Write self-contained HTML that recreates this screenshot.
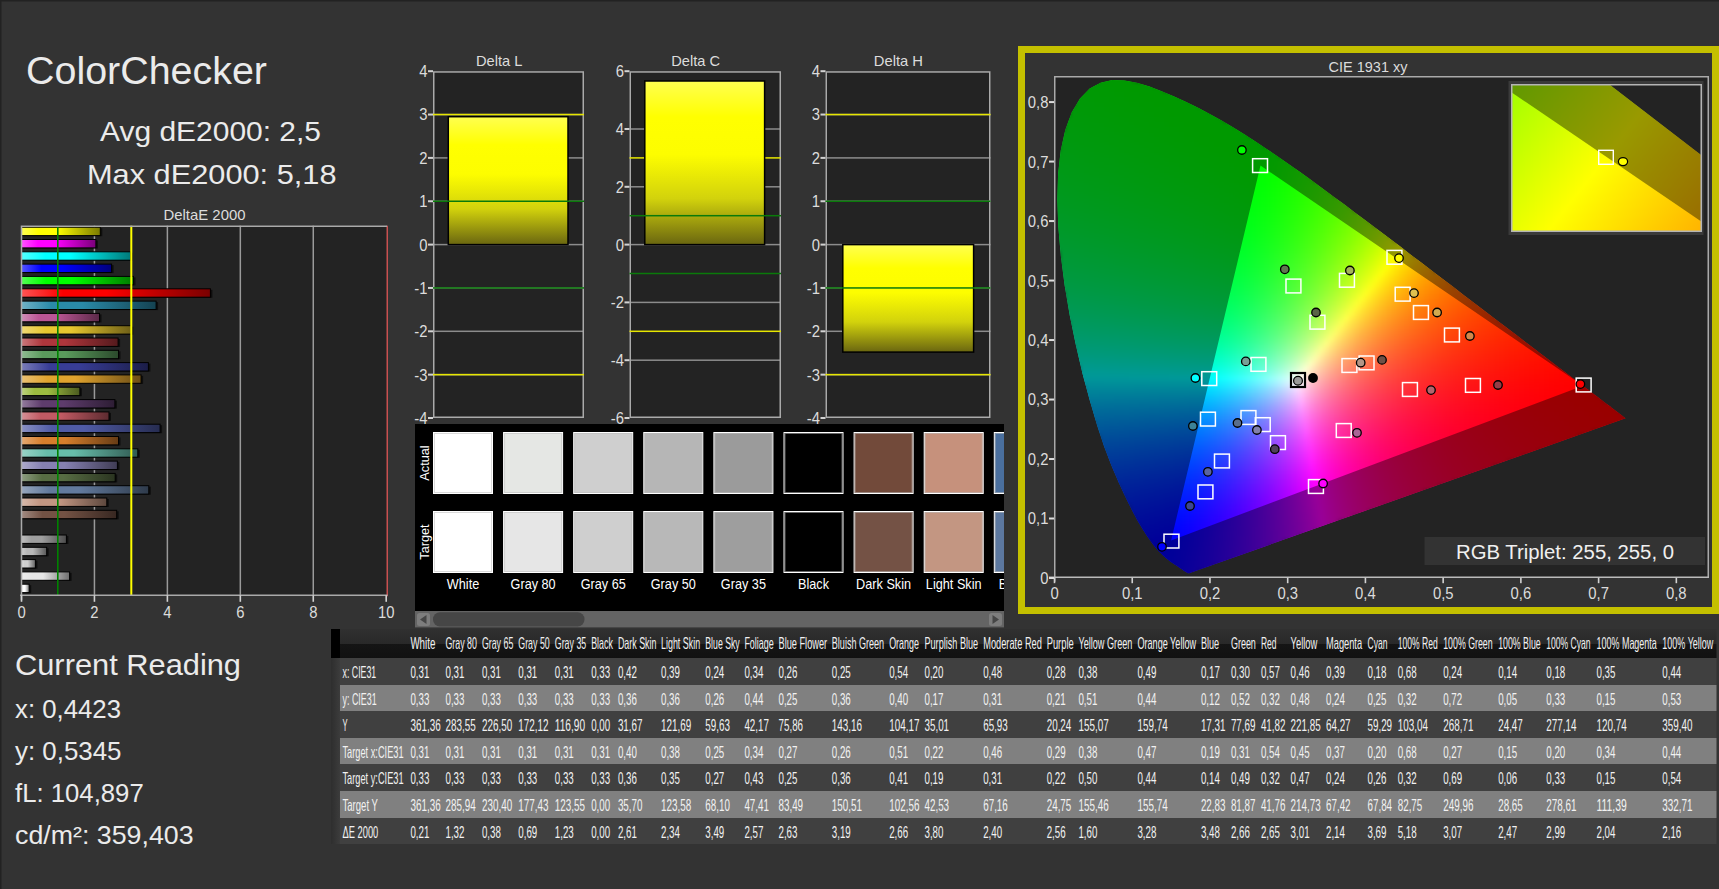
<!DOCTYPE html>
<html><head><meta charset="utf-8"><title>ColorChecker</title>
<style>
html,body{margin:0;padding:0;background:#333;overflow:hidden}
body{width:1719px;height:889px;position:relative}
svg{position:absolute;left:0;top:0;display:block;font-family:"Liberation Sans", "DejaVu Sans", sans-serif}
</style></head><body>
<svg width="1719" height="889" viewBox="0 0 1719 889">
<defs>
<linearGradient id="b0"><stop offset="0" stop-color="#ffffff"/><stop offset=".22" stop-color="#ffffff"/><stop offset=".45" stop-color="#ffffff"/><stop offset="1" stop-color="#7a7a7a"/></linearGradient>
<linearGradient id="b1"><stop offset="0" stop-color="#eeeeee"/><stop offset=".22" stop-color="#e6e6e6"/><stop offset=".45" stop-color="#e6e6e6"/><stop offset="1" stop-color="#6e6e6e"/></linearGradient>
<linearGradient id="b2"><stop offset="0" stop-color="#dfdfdf"/><stop offset=".22" stop-color="#cfcfcf"/><stop offset=".45" stop-color="#cfcfcf"/><stop offset="1" stop-color="#636363"/></linearGradient>
<linearGradient id="b3"><stop offset="0" stop-color="#cfcfcf"/><stop offset=".22" stop-color="#b8b8b8"/><stop offset=".45" stop-color="#b8b8b8"/><stop offset="1" stop-color="#585858"/></linearGradient>
<linearGradient id="b4"><stop offset="0" stop-color="#bebebe"/><stop offset=".22" stop-color="#9e9e9e"/><stop offset=".45" stop-color="#9e9e9e"/><stop offset="1" stop-color="#4c4c4c"/></linearGradient>
<linearGradient id="b6"><stop offset="0" stop-color="#a18b82"/><stop offset=".22" stop-color="#735244"/><stop offset=".45" stop-color="#735244"/><stop offset="1" stop-color="#372721"/></linearGradient>
<linearGradient id="b7"><stop offset="0" stop-color="#d6b9ab"/><stop offset=".22" stop-color="#c29682"/><stop offset=".45" stop-color="#c29682"/><stop offset="1" stop-color="#5d483e"/></linearGradient>
<linearGradient id="b8"><stop offset="0" stop-color="#96a6bd"/><stop offset=".22" stop-color="#627a9d"/><stop offset=".45" stop-color="#627a9d"/><stop offset="1" stop-color="#2f3b4b"/></linearGradient>
<linearGradient id="b9"><stop offset="0" stop-color="#8e9d81"/><stop offset=".22" stop-color="#576c43"/><stop offset=".45" stop-color="#576c43"/><stop offset="1" stop-color="#2a3420"/></linearGradient>
<linearGradient id="b10"><stop offset="0" stop-color="#adaacb"/><stop offset=".22" stop-color="#8580b1"/><stop offset=".45" stop-color="#8580b1"/><stop offset="1" stop-color="#403d55"/></linearGradient>
<linearGradient id="b11"><stop offset="0" stop-color="#99d3c6"/><stop offset=".22" stop-color="#67bdaa"/><stop offset=".45" stop-color="#67bdaa"/><stop offset="1" stop-color="#315b52"/></linearGradient>
<linearGradient id="b12"><stop offset="0" stop-color="#e4a972"/><stop offset=".22" stop-color="#d67e2c"/><stop offset=".45" stop-color="#d67e2c"/><stop offset="1" stop-color="#673c15"/></linearGradient>
<linearGradient id="b13"><stop offset="0" stop-color="#8a91c3"/><stop offset=".22" stop-color="#505ba6"/><stop offset=".45" stop-color="#505ba6"/><stop offset="1" stop-color="#262c50"/></linearGradient>
<linearGradient id="b14"><stop offset="0" stop-color="#d59096"/><stop offset=".22" stop-color="#c15a63"/><stop offset=".45" stop-color="#c15a63"/><stop offset="1" stop-color="#5d2b30"/></linearGradient>
<linearGradient id="b15"><stop offset="0" stop-color="#937c9d"/><stop offset=".22" stop-color="#5e3c6c"/><stop offset=".45" stop-color="#5e3c6c"/><stop offset="1" stop-color="#2d1d34"/></linearGradient>
<linearGradient id="b16"><stop offset="0" stop-color="#bdd27f"/><stop offset=".22" stop-color="#9dbc40"/><stop offset=".45" stop-color="#9dbc40"/><stop offset="1" stop-color="#4b5a1f"/></linearGradient>
<linearGradient id="b17"><stop offset="0" stop-color="#eac173"/><stop offset=".22" stop-color="#e0a32e"/><stop offset=".45" stop-color="#e0a32e"/><stop offset="1" stop-color="#6c4e16"/></linearGradient>
<linearGradient id="b18"><stop offset="0" stop-color="#7a7db9"/><stop offset=".22" stop-color="#383d96"/><stop offset=".45" stop-color="#383d96"/><stop offset="1" stop-color="#1b1d48"/></linearGradient>
<linearGradient id="b19"><stop offset="0" stop-color="#90bb92"/><stop offset=".22" stop-color="#5a9a5c"/><stop offset=".45" stop-color="#5a9a5c"/><stop offset="1" stop-color="#2b4a2c"/></linearGradient>
<linearGradient id="b20"><stop offset="0" stop-color="#c9787c"/><stop offset=".22" stop-color="#af363c"/><stop offset=".45" stop-color="#af363c"/><stop offset="1" stop-color="#541a1d"/></linearGradient>
<linearGradient id="b21"><stop offset="0" stop-color="#efd974"/><stop offset=".22" stop-color="#e7c72f"/><stop offset=".45" stop-color="#e7c72f"/><stop offset="1" stop-color="#6f6017"/></linearGradient>
<linearGradient id="b22"><stop offset="0" stop-color="#d18eb8"/><stop offset=".22" stop-color="#bb5695"/><stop offset=".45" stop-color="#bb5695"/><stop offset="1" stop-color="#5a2948"/></linearGradient>
<linearGradient id="b23"><stop offset="0" stop-color="#70b1c5"/><stop offset=".22" stop-color="#2a8aa8"/><stop offset=".45" stop-color="#2a8aa8"/><stop offset="1" stop-color="#144251"/></linearGradient>
<linearGradient id="b24"><stop offset="0" stop-color="#ff5454"/><stop offset=".22" stop-color="#ff0000"/><stop offset=".45" stop-color="#ff0000"/><stop offset="1" stop-color="#7a0000"/></linearGradient>
<linearGradient id="b25"><stop offset="0" stop-color="#54ff54"/><stop offset=".22" stop-color="#00ff00"/><stop offset=".45" stop-color="#00ff00"/><stop offset="1" stop-color="#007a00"/></linearGradient>
<linearGradient id="b26"><stop offset="0" stop-color="#5454ff"/><stop offset=".22" stop-color="#0000ff"/><stop offset=".45" stop-color="#0000ff"/><stop offset="1" stop-color="#00007a"/></linearGradient>
<linearGradient id="b27"><stop offset="0" stop-color="#54ffff"/><stop offset=".22" stop-color="#00ffff"/><stop offset=".45" stop-color="#00ffff"/><stop offset="1" stop-color="#007a7a"/></linearGradient>
<linearGradient id="b28"><stop offset="0" stop-color="#ff54ff"/><stop offset=".22" stop-color="#ff00ff"/><stop offset=".45" stop-color="#ff00ff"/><stop offset="1" stop-color="#7a007a"/></linearGradient>
<linearGradient id="b29"><stop offset="0" stop-color="#ffff54"/><stop offset=".22" stop-color="#ffff00"/><stop offset=".45" stop-color="#ffff00"/><stop offset="1" stop-color="#7a7a00"/></linearGradient>
<linearGradient id="yb" x1="0" y1="0" x2="0" y2="1"><stop offset="0" stop-color="#ffff50"/><stop offset=".22" stop-color="#ffff00"/><stop offset=".45" stop-color="#fdfd00"/><stop offset=".72" stop-color="#d2d20c"/><stop offset="1" stop-color="#6a6610"/></linearGradient>
<clipPath id="loc"><path d="M1189.8 573.1 L1189.8 573.1 L1189.8 573.1 L1189.7 573.1 L1189.7 573.2 L1189.6 573.2 L1189.5 573.2 L1189.4 573.2 L1189.4 573.2 L1189.3 573.2 L1189.2 573.2 L1189.2 573.3 L1189.1 573.3 L1188.9 573.3 L1188.8 573.2 L1188.6 573.2 L1188.5 573.2 L1188.3 573.2 L1188.2 573.2 L1188.0 573.2 L1187.7 573.1 L1187.4 572.9 L1187.1 572.8 L1186.7 572.5 L1186.3 572.3 L1185.8 572.0 L1185.2 571.6 L1184.6 571.2 L1183.9 570.8 L1183.1 570.2 L1182.3 569.6 L1181.4 569.0 L1180.3 568.3 L1179.1 567.5 L1177.8 566.6 L1176.3 565.6 L1174.6 564.5 L1172.8 563.2 L1170.9 561.9 L1168.7 560.3 L1166.4 558.4 L1163.9 556.3 L1161.3 553.8 L1158.3 550.7 L1154.8 546.7 L1151.0 541.7 L1146.8 535.7 L1142.2 528.6 L1137.1 519.9 L1131.6 509.5 L1125.5 497.2 L1118.8 482.8 L1111.6 466.0 L1104.2 446.7 L1097.0 424.9 L1089.8 400.6 L1082.6 373.9 L1075.9 345.3 L1069.8 315.7 L1064.7 285.7 L1060.8 255.8 L1058.3 226.8 L1057.3 199.5 L1058.1 174.0 L1060.7 150.5 L1065.3 129.8 L1071.8 112.3 L1080.0 98.4 L1089.7 88.6 L1100.6 82.7 L1112.3 80.1 L1124.4 80.4 L1136.9 82.8 L1149.6 86.6 L1162.3 91.4 L1174.8 96.7 L1186.8 102.3 L1198.6 108.1 L1210.2 114.2 L1221.6 120.6 L1233.0 127.3 L1244.3 134.3 L1255.5 141.5 L1266.7 148.9 L1277.8 156.5 L1288.9 164.2 L1300.1 172.1 L1311.2 180.1 L1322.3 188.2 L1333.4 196.4 L1344.5 204.6 L1355.6 212.9 L1366.7 221.2 L1377.7 229.5 L1388.7 237.8 L1399.7 246.1 L1410.5 254.4 L1421.3 262.6 L1432.0 270.7 L1442.5 278.7 L1452.9 286.6 L1463.0 294.4 L1473.0 302.0 L1482.8 309.5 L1492.3 316.7 L1501.6 323.7 L1510.5 330.6 L1519.1 337.1 L1527.1 343.3 L1534.7 349.0 L1541.9 354.5 L1548.8 359.8 L1555.3 364.7 L1561.3 369.3 L1566.9 373.5 L1572.0 377.4 L1576.7 381.0 L1581.1 384.3 L1585.1 387.4 L1588.7 390.1 L1592.0 392.7 L1595.0 395.0 L1597.8 397.1 L1600.3 399.0 L1602.6 400.7 L1604.8 402.4 L1606.8 403.9 L1608.6 405.3 L1610.4 406.6 L1611.9 407.9 L1613.4 409.0 L1614.7 410.0 L1616.0 410.9 L1617.0 411.7 L1618.0 412.5 L1618.8 413.1 L1619.6 413.7 L1620.3 414.2 L1620.9 414.7 L1621.4 415.1 L1621.9 415.5 L1622.3 415.8 L1622.6 416.0 L1622.9 416.2 L1623.2 416.5 L1623.5 416.7 L1623.7 416.8 L1623.9 417.0 L1624.2 417.2 L1624.4 417.3 L1624.6 417.5 L1624.8 417.7 L1625.0 417.8 L1625.1 417.9 L1625.3 418.0 L1625.3 418.1 L1625.4 418.1 L1625.5 418.2 L1625.5 418.2 L1625.6 418.3 L1625.6 418.3Z"/></clipPath>
<filter id="bl" x="-5%" y="-5%" width="110%" height="110%" color-interpolation-filters="sRGB"><feGaussianBlur stdDeviation="2.2"/></filter>
<linearGradient id="in1" gradientUnits="userSpaceOnUse" x1="1511.7" y1="83.2" x2="1700.3" y2="231.6"><stop offset="0" stop-color="#a0ff00"/><stop offset=".5" stop-color="#ffff00"/><stop offset="1" stop-color="#ffb400"/></linearGradient>
<linearGradient id="th" x1="0" y1="0" x2="0" y2="1"><stop offset="0" stop-color="#303030"/><stop offset=".5" stop-color="#292929"/><stop offset=".5" stop-color="#151515"/><stop offset="1" stop-color="#111"/></linearGradient>
<linearGradient id="gut"><stop offset="0" stop-color="#2e2e2e"/><stop offset="1" stop-color="#3c3c3c"/></linearGradient>
</defs>
<rect width="1719" height="889" fill="#333"/>
<rect width="1719" height="1.5" fill="#222"/><rect width="1.5" height="889" fill="#222"/>
<text x="26" y="83.5" font-size="38.5" fill="#ebebeb" textLength="241" lengthAdjust="spacingAndGlyphs">ColorChecker</text>
<text x="100" y="141" font-size="28" fill="#ebebeb" textLength="221" lengthAdjust="spacingAndGlyphs">Avg dE2000: 2,5</text>
<text x="87" y="183.5" font-size="28" fill="#ebebeb" textLength="249.5" lengthAdjust="spacingAndGlyphs">Max dE2000: 5,18</text>
<text x="204.5" y="220" font-size="14.5" text-anchor="middle" fill="#dcdcdc" textLength="82" lengthAdjust="spacingAndGlyphs">DeltaE 2000</text>
<rect x="21" y="225.7" width="366" height="369.59999999999997" fill="#232323"/>
<rect x="93.69" y="225.7" width="1.5" height="369.59999999999997" fill="#9a9a9a"/>
<rect x="166.63" y="225.7" width="1.5" height="369.59999999999997" fill="#9a9a9a"/>
<rect x="239.57" y="225.7" width="1.5" height="369.59999999999997" fill="#9a9a9a"/>
<rect x="312.51" y="225.7" width="1.5" height="369.59999999999997" fill="#9a9a9a"/>
<rect x="22.5" y="585.2" width="8.7" height="8" fill="#000" opacity=".6"/>
<rect x="21.5" y="584.2" width="7.7" height="8.4" fill="url(#b0)" stroke="#000" stroke-width="1"/>
<rect x="22.5" y="572.9" width="49.1" height="8" fill="#000" opacity=".6"/>
<rect x="21.5" y="571.9" width="48.1" height="8.4" fill="url(#b1)" stroke="#000" stroke-width="1"/>
<rect x="22.5" y="560.6" width="14.9" height="8" fill="#000" opacity=".6"/>
<rect x="21.5" y="559.6" width="13.9" height="8.4" fill="url(#b2)" stroke="#000" stroke-width="1"/>
<rect x="22.5" y="548.3" width="26.2" height="8" fill="#000" opacity=".6"/>
<rect x="21.5" y="547.3" width="25.2" height="8.4" fill="url(#b3)" stroke="#000" stroke-width="1"/>
<rect x="22.5" y="536.0" width="45.9" height="8" fill="#000" opacity=".6"/>
<rect x="21.5" y="535.0" width="44.9" height="8.4" fill="url(#b4)" stroke="#000" stroke-width="1"/>
<rect x="22.5" y="511.3" width="96.2" height="8" fill="#000" opacity=".6"/>
<rect x="21.5" y="510.3" width="95.2" height="8.4" fill="url(#b6)" stroke="#000" stroke-width="1"/>
<rect x="22.5" y="499.0" width="86.3" height="8" fill="#000" opacity=".6"/>
<rect x="21.5" y="498.0" width="85.3" height="8.4" fill="url(#b7)" stroke="#000" stroke-width="1"/>
<rect x="22.5" y="486.7" width="128.3" height="8" fill="#000" opacity=".6"/>
<rect x="21.5" y="485.7" width="127.3" height="8.4" fill="url(#b8)" stroke="#000" stroke-width="1"/>
<rect x="22.5" y="474.4" width="94.7" height="8" fill="#000" opacity=".6"/>
<rect x="21.5" y="473.4" width="93.7" height="8.4" fill="url(#b9)" stroke="#000" stroke-width="1"/>
<rect x="22.5" y="462.1" width="96.9" height="8" fill="#000" opacity=".6"/>
<rect x="21.5" y="461.1" width="95.9" height="8.4" fill="url(#b10)" stroke="#000" stroke-width="1"/>
<rect x="22.5" y="449.8" width="117.3" height="8" fill="#000" opacity=".6"/>
<rect x="21.5" y="448.8" width="116.3" height="8.4" fill="url(#b11)" stroke="#000" stroke-width="1"/>
<rect x="22.5" y="437.5" width="98.0" height="8" fill="#000" opacity=".6"/>
<rect x="21.5" y="436.5" width="97.0" height="8.4" fill="url(#b12)" stroke="#000" stroke-width="1"/>
<rect x="22.5" y="425.2" width="139.6" height="8" fill="#000" opacity=".6"/>
<rect x="21.5" y="424.2" width="138.6" height="8.4" fill="url(#b13)" stroke="#000" stroke-width="1"/>
<rect x="22.5" y="412.9" width="88.5" height="8" fill="#000" opacity=".6"/>
<rect x="21.5" y="411.9" width="87.5" height="8.4" fill="url(#b14)" stroke="#000" stroke-width="1"/>
<rect x="22.5" y="400.6" width="94.4" height="8" fill="#000" opacity=".6"/>
<rect x="21.5" y="399.6" width="93.4" height="8.4" fill="url(#b15)" stroke="#000" stroke-width="1"/>
<rect x="22.5" y="388.2" width="59.4" height="8" fill="#000" opacity=".6"/>
<rect x="21.5" y="387.2" width="58.4" height="8.4" fill="url(#b16)" stroke="#000" stroke-width="1"/>
<rect x="22.5" y="375.9" width="120.6" height="8" fill="#000" opacity=".6"/>
<rect x="21.5" y="374.9" width="119.6" height="8.4" fill="url(#b17)" stroke="#000" stroke-width="1"/>
<rect x="22.5" y="363.6" width="127.9" height="8" fill="#000" opacity=".6"/>
<rect x="21.5" y="362.6" width="126.9" height="8.4" fill="url(#b18)" stroke="#000" stroke-width="1"/>
<rect x="22.5" y="351.3" width="98.0" height="8" fill="#000" opacity=".6"/>
<rect x="21.5" y="350.3" width="97.0" height="8.4" fill="url(#b19)" stroke="#000" stroke-width="1"/>
<rect x="22.5" y="339.0" width="97.6" height="8" fill="#000" opacity=".6"/>
<rect x="21.5" y="338.0" width="96.6" height="8.4" fill="url(#b20)" stroke="#000" stroke-width="1"/>
<rect x="22.5" y="326.7" width="110.8" height="8" fill="#000" opacity=".6"/>
<rect x="21.5" y="325.7" width="109.8" height="8.4" fill="url(#b21)" stroke="#000" stroke-width="1"/>
<rect x="22.5" y="314.4" width="79.0" height="8" fill="#000" opacity=".6"/>
<rect x="21.5" y="313.4" width="78.0" height="8.4" fill="url(#b22)" stroke="#000" stroke-width="1"/>
<rect x="22.5" y="302.1" width="135.6" height="8" fill="#000" opacity=".6"/>
<rect x="21.5" y="301.1" width="134.6" height="8.4" fill="url(#b23)" stroke="#000" stroke-width="1"/>
<rect x="22.5" y="289.8" width="189.9" height="8" fill="#000" opacity=".6"/>
<rect x="21.5" y="288.8" width="188.9" height="8.4" fill="url(#b24)" stroke="#000" stroke-width="1"/>
<rect x="22.5" y="277.4" width="113.0" height="8" fill="#000" opacity=".6"/>
<rect x="21.5" y="276.4" width="112.0" height="8.4" fill="url(#b25)" stroke="#000" stroke-width="1"/>
<rect x="22.5" y="265.1" width="91.1" height="8" fill="#000" opacity=".6"/>
<rect x="21.5" y="264.1" width="90.1" height="8.4" fill="url(#b26)" stroke="#000" stroke-width="1"/>
<rect x="22.5" y="252.8" width="110.0" height="8" fill="#000" opacity=".6"/>
<rect x="21.5" y="251.8" width="109.0" height="8.4" fill="url(#b27)" stroke="#000" stroke-width="1"/>
<rect x="22.5" y="240.5" width="75.4" height="8" fill="#000" opacity=".6"/>
<rect x="21.5" y="239.5" width="74.4" height="8.4" fill="url(#b28)" stroke="#000" stroke-width="1"/>
<rect x="22.5" y="228.2" width="79.8" height="8" fill="#000" opacity=".6"/>
<rect x="21.5" y="227.2" width="78.8" height="8.4" fill="url(#b29)" stroke="#000" stroke-width="1"/>
<rect x="57" y="225.7" width="1.6" height="370.2" fill="#008200"/>
<rect x="130.3" y="225.7" width="2" height="370.2" fill="#ffff00"/>
<rect x="386.5" y="225.7" width="1.5" height="370.59999999999997" fill="#c85050"/>
<path d="M21.5 600.3V226.2H387" fill="none" stroke="#aaa" stroke-width="1.5"/>
<path d="M20 595.3H387.5" fill="none" stroke="#aaa" stroke-width="1.5"/>
<rect x="20.70" y="595.3" width="1.6" height="6.5" fill="#d2d2d2"/>
<text transform="translate(21.5,618.2) scale(0.9,1)" font-size="16.5" text-anchor="middle" fill="#dcdcdc">0</text>
<rect x="93.64" y="595.3" width="1.6" height="6.5" fill="#d2d2d2"/>
<text transform="translate(94.4,618.2) scale(0.9,1)" font-size="16.5" text-anchor="middle" fill="#dcdcdc">2</text>
<rect x="166.58" y="595.3" width="1.6" height="6.5" fill="#d2d2d2"/>
<text transform="translate(167.4,618.2) scale(0.9,1)" font-size="16.5" text-anchor="middle" fill="#dcdcdc">4</text>
<rect x="239.52" y="595.3" width="1.6" height="6.5" fill="#d2d2d2"/>
<text transform="translate(240.3,618.2) scale(0.9,1)" font-size="16.5" text-anchor="middle" fill="#dcdcdc">6</text>
<rect x="312.46" y="595.3" width="1.6" height="6.5" fill="#d2d2d2"/>
<text transform="translate(313.3,618.2) scale(0.9,1)" font-size="16.5" text-anchor="middle" fill="#dcdcdc">8</text>
<rect x="385.40" y="595.3" width="1.6" height="6.5" fill="#d2d2d2"/>
<text transform="translate(386.2,618.2) scale(0.9,1)" font-size="16.5" text-anchor="middle" fill="#dcdcdc">10</text>
<rect x="433" y="71.2" width="151" height="346.8" fill="#232323"/>
<rect x="428" y="70.20" width="5" height="2" fill="#d2d2d2"/>
<text transform="translate(427.5,77.1) scale(0.9,1)" font-size="16.5" text-anchor="end" fill="#dcdcdc">4</text>
<rect x="433" y="113.80" width="151" height="1.5" fill="#8c8c8c"/>
<rect x="428" y="113.55" width="5" height="2" fill="#d2d2d2"/>
<text transform="translate(427.5,120.4) scale(0.9,1)" font-size="16.5" text-anchor="end" fill="#dcdcdc">3</text>
<rect x="433" y="157.15" width="151" height="1.5" fill="#8c8c8c"/>
<rect x="428" y="156.90" width="5" height="2" fill="#d2d2d2"/>
<text transform="translate(427.5,163.8) scale(0.9,1)" font-size="16.5" text-anchor="end" fill="#dcdcdc">2</text>
<rect x="433" y="200.50" width="151" height="1.5" fill="#8c8c8c"/>
<rect x="428" y="200.25" width="5" height="2" fill="#d2d2d2"/>
<text transform="translate(427.5,207.2) scale(0.9,1)" font-size="16.5" text-anchor="end" fill="#dcdcdc">1</text>
<rect x="433" y="243.85" width="151" height="1.5" fill="#8c8c8c"/>
<rect x="428" y="243.60" width="5" height="2" fill="#d2d2d2"/>
<text transform="translate(427.5,250.5) scale(0.9,1)" font-size="16.5" text-anchor="end" fill="#dcdcdc">0</text>
<rect x="433" y="287.20" width="151" height="1.5" fill="#8c8c8c"/>
<rect x="428" y="286.95" width="5" height="2" fill="#d2d2d2"/>
<text transform="translate(427.5,293.8) scale(0.9,1)" font-size="16.5" text-anchor="end" fill="#dcdcdc">-1</text>
<rect x="433" y="330.55" width="151" height="1.5" fill="#8c8c8c"/>
<rect x="428" y="330.30" width="5" height="2" fill="#d2d2d2"/>
<text transform="translate(427.5,337.2) scale(0.9,1)" font-size="16.5" text-anchor="end" fill="#dcdcdc">-2</text>
<rect x="433" y="373.90" width="151" height="1.5" fill="#8c8c8c"/>
<rect x="428" y="373.65" width="5" height="2" fill="#d2d2d2"/>
<text transform="translate(427.5,380.5) scale(0.9,1)" font-size="16.5" text-anchor="end" fill="#dcdcdc">-3</text>
<rect x="428" y="417.00" width="5" height="2" fill="#d2d2d2"/>
<text transform="translate(427.5,423.9) scale(0.9,1)" font-size="16.5" text-anchor="end" fill="#dcdcdc">-4</text>
<rect x="433.75" y="71.95" width="149.5" height="345.3" fill="none" stroke="#aaa" stroke-width="1.5"/>
<rect x="433" y="113.80" width="151" height="1.5" fill="#e6e600"/>
<rect x="433" y="373.90" width="151" height="1.5" fill="#e6e600"/>
<rect x="448.3" y="116.7" width="119.7" height="127.9" fill="url(#yb)" stroke="#000" stroke-width="1.5"/>
<rect x="433" y="200.50" width="151" height="1.5" fill="#0a7a0a"/>
<rect x="433" y="287.20" width="151" height="1.5" fill="#0a7a0a"/>
<text x="499.2" y="65.5" font-size="14.5" text-anchor="middle" fill="#dcdcdc" textLength="46.5" lengthAdjust="spacingAndGlyphs">Delta L</text>
<rect x="629.5" y="71.2" width="151.5" height="346.8" fill="#232323"/>
<rect x="624.5" y="70.20" width="5" height="2" fill="#d2d2d2"/>
<text transform="translate(624.0,77.1) scale(0.9,1)" font-size="16.5" text-anchor="end" fill="#dcdcdc">6</text>
<rect x="629.5" y="128.25" width="151.5" height="1.5" fill="#8c8c8c"/>
<rect x="624.5" y="128.00" width="5" height="2" fill="#d2d2d2"/>
<text transform="translate(624.0,134.9) scale(0.9,1)" font-size="16.5" text-anchor="end" fill="#dcdcdc">4</text>
<rect x="629.5" y="186.05" width="151.5" height="1.5" fill="#8c8c8c"/>
<rect x="624.5" y="185.80" width="5" height="2" fill="#d2d2d2"/>
<text transform="translate(624.0,192.7) scale(0.9,1)" font-size="16.5" text-anchor="end" fill="#dcdcdc">2</text>
<rect x="629.5" y="243.85" width="151.5" height="1.5" fill="#8c8c8c"/>
<rect x="624.5" y="243.60" width="5" height="2" fill="#d2d2d2"/>
<text transform="translate(624.0,250.5) scale(0.9,1)" font-size="16.5" text-anchor="end" fill="#dcdcdc">0</text>
<rect x="629.5" y="301.65" width="151.5" height="1.5" fill="#8c8c8c"/>
<rect x="624.5" y="301.40" width="5" height="2" fill="#d2d2d2"/>
<text transform="translate(624.0,308.3) scale(0.9,1)" font-size="16.5" text-anchor="end" fill="#dcdcdc">-2</text>
<rect x="629.5" y="359.45" width="151.5" height="1.5" fill="#8c8c8c"/>
<rect x="624.5" y="359.20" width="5" height="2" fill="#d2d2d2"/>
<text transform="translate(624.0,366.1) scale(0.9,1)" font-size="16.5" text-anchor="end" fill="#dcdcdc">-4</text>
<rect x="624.5" y="417.00" width="5" height="2" fill="#d2d2d2"/>
<text transform="translate(624.0,423.9) scale(0.9,1)" font-size="16.5" text-anchor="end" fill="#dcdcdc">-6</text>
<rect x="630.25" y="71.95" width="150.0" height="345.3" fill="none" stroke="#aaa" stroke-width="1.5"/>
<rect x="629.5" y="157.15" width="151.5" height="1.5" fill="#e6e600"/>
<rect x="629.5" y="330.55" width="151.5" height="1.5" fill="#e6e600"/>
<rect x="644.8" y="81.0" width="119.8" height="163.6" fill="url(#yb)" stroke="#000" stroke-width="1.5"/>
<rect x="629.5" y="214.95" width="151.5" height="1.5" fill="#0a7a0a"/>
<rect x="629.5" y="272.75" width="151.5" height="1.5" fill="#0a7a0a"/>
<text x="695.6" y="65.5" font-size="14.5" text-anchor="middle" fill="#dcdcdc" textLength="48.8" lengthAdjust="spacingAndGlyphs">Delta C</text>
<rect x="825.5" y="71.2" width="165.0" height="346.8" fill="#232323"/>
<rect x="820.5" y="70.20" width="5" height="2" fill="#d2d2d2"/>
<text transform="translate(820.0,77.1) scale(0.9,1)" font-size="16.5" text-anchor="end" fill="#dcdcdc">4</text>
<rect x="825.5" y="113.80" width="165.0" height="1.5" fill="#8c8c8c"/>
<rect x="820.5" y="113.55" width="5" height="2" fill="#d2d2d2"/>
<text transform="translate(820.0,120.4) scale(0.9,1)" font-size="16.5" text-anchor="end" fill="#dcdcdc">3</text>
<rect x="825.5" y="157.15" width="165.0" height="1.5" fill="#8c8c8c"/>
<rect x="820.5" y="156.90" width="5" height="2" fill="#d2d2d2"/>
<text transform="translate(820.0,163.8) scale(0.9,1)" font-size="16.5" text-anchor="end" fill="#dcdcdc">2</text>
<rect x="825.5" y="200.50" width="165.0" height="1.5" fill="#8c8c8c"/>
<rect x="820.5" y="200.25" width="5" height="2" fill="#d2d2d2"/>
<text transform="translate(820.0,207.2) scale(0.9,1)" font-size="16.5" text-anchor="end" fill="#dcdcdc">1</text>
<rect x="825.5" y="243.85" width="165.0" height="1.5" fill="#8c8c8c"/>
<rect x="820.5" y="243.60" width="5" height="2" fill="#d2d2d2"/>
<text transform="translate(820.0,250.5) scale(0.9,1)" font-size="16.5" text-anchor="end" fill="#dcdcdc">0</text>
<rect x="825.5" y="287.20" width="165.0" height="1.5" fill="#8c8c8c"/>
<rect x="820.5" y="286.95" width="5" height="2" fill="#d2d2d2"/>
<text transform="translate(820.0,293.8) scale(0.9,1)" font-size="16.5" text-anchor="end" fill="#dcdcdc">-1</text>
<rect x="825.5" y="330.55" width="165.0" height="1.5" fill="#8c8c8c"/>
<rect x="820.5" y="330.30" width="5" height="2" fill="#d2d2d2"/>
<text transform="translate(820.0,337.2) scale(0.9,1)" font-size="16.5" text-anchor="end" fill="#dcdcdc">-2</text>
<rect x="825.5" y="373.90" width="165.0" height="1.5" fill="#8c8c8c"/>
<rect x="820.5" y="373.65" width="5" height="2" fill="#d2d2d2"/>
<text transform="translate(820.0,380.5) scale(0.9,1)" font-size="16.5" text-anchor="end" fill="#dcdcdc">-3</text>
<rect x="820.5" y="417.00" width="5" height="2" fill="#d2d2d2"/>
<text transform="translate(820.0,423.9) scale(0.9,1)" font-size="16.5" text-anchor="end" fill="#dcdcdc">-4</text>
<rect x="826.25" y="71.95" width="163.5" height="345.3" fill="none" stroke="#aaa" stroke-width="1.5"/>
<rect x="825.5" y="113.80" width="165.0" height="1.5" fill="#e6e600"/>
<rect x="825.5" y="373.90" width="165.0" height="1.5" fill="#e6e600"/>
<rect x="842.8" y="244.6" width="130.8" height="107.5" fill="url(#yb)" stroke="#000" stroke-width="1.5"/>
<rect x="825.5" y="200.50" width="165.0" height="1.5" fill="#0a7a0a"/>
<rect x="825.5" y="287.20" width="165.0" height="1.5" fill="#0a7a0a"/>
<text x="898.4" y="65.5" font-size="14.5" text-anchor="middle" fill="#dcdcdc" textLength="49.2" lengthAdjust="spacingAndGlyphs">Delta H</text>
<rect x="415" y="424" width="589" height="204" fill="#000"/>
<clipPath id="swc"><rect x="415" y="424" width="589" height="187"/></clipPath><g clip-path="url(#swc)">
<rect x="433.5" y="432.5" width="59" height="61" fill="#ffffff" stroke="#fff" stroke-width="1"/>
<rect x="434.5" y="433.5" width="57" height="59" fill="none" stroke="#bbb" stroke-opacity=".55" stroke-width="1"/>
<rect x="433.5" y="511.5" width="59" height="61" fill="#ffffff" stroke="#fff" stroke-width="1"/>
<rect x="434.5" y="512.5" width="57" height="59" fill="none" stroke="#bbb" stroke-opacity=".55" stroke-width="1"/>
<text transform="translate(463.0,588.5) scale(.92,1)" font-size="13.8" text-anchor="middle" fill="#fff">White</text>
<rect x="503.6" y="432.5" width="59" height="61" fill="#e5e7e4" stroke="#fff" stroke-width="1"/>
<rect x="504.6" y="433.5" width="57" height="59" fill="none" stroke="#bbb" stroke-opacity=".55" stroke-width="1"/>
<rect x="503.6" y="511.5" width="59" height="61" fill="#e6e6e6" stroke="#fff" stroke-width="1"/>
<rect x="504.6" y="512.5" width="57" height="59" fill="none" stroke="#bbb" stroke-opacity=".55" stroke-width="1"/>
<text transform="translate(533.1,588.5) scale(.92,1)" font-size="13.8" text-anchor="middle" fill="#fff">Gray 80</text>
<rect x="573.7" y="432.5" width="59" height="61" fill="#cfcfcf" stroke="#fff" stroke-width="1"/>
<rect x="574.7" y="433.5" width="57" height="59" fill="none" stroke="#bbb" stroke-opacity=".55" stroke-width="1"/>
<rect x="573.7" y="511.5" width="59" height="61" fill="#cfcfcf" stroke="#fff" stroke-width="1"/>
<rect x="574.7" y="512.5" width="57" height="59" fill="none" stroke="#bbb" stroke-opacity=".55" stroke-width="1"/>
<text transform="translate(603.2,588.5) scale(.92,1)" font-size="13.8" text-anchor="middle" fill="#fff">Gray 65</text>
<rect x="643.8" y="432.5" width="59" height="61" fill="#b6b6b6" stroke="#fff" stroke-width="1"/>
<rect x="644.8" y="433.5" width="57" height="59" fill="none" stroke="#bbb" stroke-opacity=".55" stroke-width="1"/>
<rect x="643.8" y="511.5" width="59" height="61" fill="#b8b8b8" stroke="#fff" stroke-width="1"/>
<rect x="644.8" y="512.5" width="57" height="59" fill="none" stroke="#bbb" stroke-opacity=".55" stroke-width="1"/>
<text transform="translate(673.3,588.5) scale(.92,1)" font-size="13.8" text-anchor="middle" fill="#fff">Gray 50</text>
<rect x="713.9" y="432.5" width="59" height="61" fill="#9b9b9b" stroke="#fff" stroke-width="1"/>
<rect x="714.9" y="433.5" width="57" height="59" fill="none" stroke="#bbb" stroke-opacity=".55" stroke-width="1"/>
<rect x="713.9" y="511.5" width="59" height="61" fill="#9e9e9e" stroke="#fff" stroke-width="1"/>
<rect x="714.9" y="512.5" width="57" height="59" fill="none" stroke="#bbb" stroke-opacity=".55" stroke-width="1"/>
<text transform="translate(743.4,588.5) scale(.92,1)" font-size="13.8" text-anchor="middle" fill="#fff">Gray 35</text>
<rect x="784.0" y="432.5" width="59" height="61" fill="#000000" stroke="#fff" stroke-width="1"/>
<rect x="785.0" y="433.5" width="57" height="59" fill="none" stroke="#bbb" stroke-opacity=".55" stroke-width="1"/>
<rect x="784.0" y="511.5" width="59" height="61" fill="#000000" stroke="#fff" stroke-width="1"/>
<rect x="785.0" y="512.5" width="57" height="59" fill="none" stroke="#bbb" stroke-opacity=".55" stroke-width="1"/>
<text transform="translate(813.5,588.5) scale(.92,1)" font-size="13.8" text-anchor="middle" fill="#fff">Black</text>
<rect x="854.1" y="432.5" width="59" height="61" fill="#724a3a" stroke="#fff" stroke-width="1"/>
<rect x="855.1" y="433.5" width="57" height="59" fill="none" stroke="#bbb" stroke-opacity=".55" stroke-width="1"/>
<rect x="854.1" y="511.5" width="59" height="61" fill="#745245" stroke="#fff" stroke-width="1"/>
<rect x="855.1" y="512.5" width="57" height="59" fill="none" stroke="#bbb" stroke-opacity=".55" stroke-width="1"/>
<text transform="translate(883.6,588.5) scale(.92,1)" font-size="13.8" text-anchor="middle" fill="#fff">Dark Skin</text>
<rect x="924.2" y="432.5" width="59" height="61" fill="#c6917c" stroke="#fff" stroke-width="1"/>
<rect x="925.2" y="433.5" width="57" height="59" fill="none" stroke="#bbb" stroke-opacity=".55" stroke-width="1"/>
<rect x="924.2" y="511.5" width="59" height="61" fill="#c39682" stroke="#fff" stroke-width="1"/>
<rect x="925.2" y="512.5" width="57" height="59" fill="none" stroke="#bbb" stroke-opacity=".55" stroke-width="1"/>
<text transform="translate(953.7,588.5) scale(.92,1)" font-size="13.8" text-anchor="middle" fill="#fff">Light Skin</text>
<rect x="994.3" y="432.5" width="59" height="61" fill="#4a6f9e" stroke="#fff" stroke-width="1"/>
<rect x="995.3" y="433.5" width="57" height="59" fill="none" stroke="#bbb" stroke-opacity=".55" stroke-width="1"/>
<rect x="994.3" y="511.5" width="59" height="61" fill="#5c78a0" stroke="#fff" stroke-width="1"/>
<rect x="995.3" y="512.5" width="57" height="59" fill="none" stroke="#bbb" stroke-opacity=".55" stroke-width="1"/>
<text transform="translate(1023.8,588.5) scale(.92,1)" font-size="13.8" text-anchor="middle" fill="#fff">Blue Sky</text>
</g>
<text transform="translate(428.5,463) rotate(-90) scale(.94,1)" font-size="13.5" text-anchor="middle" fill="#fff">Actual</text>
<text transform="translate(428.5,542) rotate(-90) scale(.94,1)" font-size="13.5" text-anchor="middle" fill="#fff">Target</text>
<rect x="415" y="611" width="589" height="16.7" fill="#646464"/>
<rect x="433" y="612.3" width="151.5" height="14.2" rx="7" fill="#464646"/>
<rect x="417" y="613" width="13" height="13" rx="2.5" fill="#7d7d7d"/><path d="M426.5 615v9l-6.5-4.5z" fill="#464646"/>
<rect x="989" y="613" width="13" height="13" rx="2.5" fill="#7d7d7d"/><path d="M992.5 615v9l6.5-4.5z" fill="#464646"/>
<rect x="1021.5" y="49.5" width="694" height="561" fill="#333" stroke="#c4c000" stroke-width="7"/>
<text x="1368" y="72" font-size="14.5" text-anchor="middle" fill="#dcdcdc" textLength="79" lengthAdjust="spacingAndGlyphs">CIE 1931 xy</text>
<rect x="1054" y="76" width="655" height="501.70000000000005" fill="#232323"/>
<g clip-path="url(#loc)"><g filter="url(#bl)" stroke-width="5.4" transform="translate(0,2.5)">
<path d="M1099 76h10" stroke="#00ff03"/>
<path d="M1109 76h5" stroke="#00ff02"/>
<path d="M1114 76h10" stroke="#00ff01"/>
<path d="M1124 76h10" stroke="#0f0"/>
<path d="M1089 81h10" stroke="#00ff05"/>
<path d="M1099 81h5" stroke="#00ff04"/>
<path d="M1104 81h10" stroke="#00ff03"/>
<path d="M1114 81h10" stroke="#00ff02"/>
<path d="M1124 81h10" stroke="#00ff01"/>
<path d="M1134 81h20" stroke="#0f0"/>
<path d="M1084 86h5" stroke="#00ff07"/>
<path d="M1089 86h10" stroke="#00ff06"/>
<path d="M1099 86h5" stroke="#00ff05"/>
<path d="M1104 86h10" stroke="#00ff04"/>
<path d="M1114 86h10" stroke="#00ff03"/>
<path d="M1124 86h5" stroke="#00ff02"/>
<path d="M1129 86h10" stroke="#00ff01"/>
<path d="M1139 86h25" stroke="#0f0"/>
<path d="M1079 91h5" stroke="#00ff09"/>
<path d="M1084 91h10" stroke="#00ff08"/>
<path d="M1094 91h5" stroke="#00ff07"/>
<path d="M1099 91h10" stroke="#00ff06"/>
<path d="M1109 91h5" stroke="#00ff05"/>
<path d="M1114 91h10" stroke="#00ff04"/>
<path d="M1124 91h5" stroke="#00ff03"/>
<path d="M1129 91h10" stroke="#00ff02"/>
<path d="M1139 91h10" stroke="#00ff01"/>
<path d="M1149 91h30" stroke="#0f0"/>
<path d="M1074 96h5" stroke="#00ff0b"/>
<path d="M1079 96h5" stroke="#00ff0a"/>
<path d="M1084 96h10" stroke="#00ff09"/>
<path d="M1094 96h5" stroke="#00ff08"/>
<path d="M1099 96h10" stroke="#00ff07"/>
<path d="M1109 96h5" stroke="#00ff06"/>
<path d="M1114 96h10" stroke="#00ff05"/>
<path d="M1124 96h5" stroke="#00ff04"/>
<path d="M1129 96h10" stroke="#00ff03"/>
<path d="M1139 96h5" stroke="#00ff02"/>
<path d="M1144 96h10" stroke="#00ff01"/>
<path d="M1154 96h35" stroke="#0f0"/>
<path d="M1074 101h5" stroke="#00ff0c"/>
<path d="M1079 101h10" stroke="#00ff0b"/>
<path d="M1089 101h5" stroke="#00ff0a"/>
<path d="M1094 101h10" stroke="#00ff09"/>
<path d="M1104 101h5" stroke="#00ff08"/>
<path d="M1109 101h5" stroke="#00ff07"/>
<path d="M1114 101h10" stroke="#00ff06"/>
<path d="M1124 101h5" stroke="#00ff05"/>
<path d="M1129 101h10" stroke="#00ff04"/>
<path d="M1139 101h5" stroke="#00ff03"/>
<path d="M1144 101h10" stroke="#00ff02"/>
<path d="M1154 101h10" stroke="#00ff01"/>
<path d="M1164 101h35" stroke="#0f0"/>
<path d="M1069 106h5" stroke="#00ff0e"/>
<path d="M1074 106h10" stroke="#00ff0d"/>
<path d="M1084 106h5" stroke="#00ff0c"/>
<path d="M1089 106h5" stroke="#00ff0b"/>
<path d="M1094 106h10" stroke="#00ff0a"/>
<path d="M1104 106h5" stroke="#00ff09"/>
<path d="M1109 106h10" stroke="#00ff08"/>
<path d="M1119 106h5" stroke="#00ff07"/>
<path d="M1124 106h5" stroke="#00ff06"/>
<path d="M1129 106h10" stroke="#00ff05"/>
<path d="M1139 106h5" stroke="#00ff04"/>
<path d="M1144 106h10" stroke="#00ff03"/>
<path d="M1154 106h10" stroke="#00ff02"/>
<path d="M1164 106h5" stroke="#00ff01"/>
<path d="M1169 106h40" stroke="#0f0"/>
<path d="M1069 111h5" stroke="#00ff10"/>
<path d="M1074 111h5" stroke="#00ff0f"/>
<path d="M1079 111h5" stroke="#00ff0e"/>
<path d="M1084 111h10" stroke="#00ff0d"/>
<path d="M1094 111h5" stroke="#00ff0c"/>
<path d="M1099 111h5" stroke="#00ff0b"/>
<path d="M1104 111h10" stroke="#00ff0a"/>
<path d="M1114 111h5" stroke="#00ff09"/>
<path d="M1119 111h5" stroke="#00ff08"/>
<path d="M1124 111h10" stroke="#00ff07"/>
<path d="M1134 111h5" stroke="#00ff06"/>
<path d="M1139 111h5" stroke="#00ff05"/>
<path d="M1144 111h10" stroke="#00ff04"/>
<path d="M1154 111h5" stroke="#00ff03"/>
<path d="M1159 111h10" stroke="#00ff02"/>
<path d="M1169 111h10" stroke="#00ff01"/>
<path d="M1179 111h40" stroke="#0f0"/>
<path d="M1064 116h5" stroke="#00ff12"/>
<path d="M1069 116h5" stroke="#0f1"/>
<path d="M1074 116h5" stroke="#00ff10"/>
<path d="M1079 116h10" stroke="#00ff0f"/>
<path d="M1089 116h5" stroke="#00ff0e"/>
<path d="M1094 116h5" stroke="#00ff0d"/>
<path d="M1099 116h10" stroke="#00ff0c"/>
<path d="M1109 116h5" stroke="#00ff0b"/>
<path d="M1114 116h5" stroke="#00ff0a"/>
<path d="M1119 116h10" stroke="#00ff09"/>
<path d="M1129 116h5" stroke="#00ff08"/>
<path d="M1134 116h5" stroke="#00ff07"/>
<path d="M1139 116h10" stroke="#00ff06"/>
<path d="M1149 116h5" stroke="#00ff05"/>
<path d="M1154 116h10" stroke="#00ff04"/>
<path d="M1164 116h5" stroke="#00ff03"/>
<path d="M1169 116h10" stroke="#00ff02"/>
<path d="M1179 116h5" stroke="#00ff01"/>
<path d="M1184 116h40" stroke="#0f0"/>
<path d="M1064 121h10" stroke="#00ff13"/>
<path d="M1074 121h5" stroke="#00ff12"/>
<path d="M1079 121h5" stroke="#0f1"/>
<path d="M1084 121h5" stroke="#00ff10"/>
<path d="M1089 121h10" stroke="#00ff0f"/>
<path d="M1099 121h5" stroke="#00ff0e"/>
<path d="M1104 121h5" stroke="#00ff0d"/>
<path d="M1109 121h5" stroke="#00ff0c"/>
<path d="M1114 121h10" stroke="#00ff0b"/>
<path d="M1124 121h5" stroke="#00ff0a"/>
<path d="M1129 121h5" stroke="#00ff09"/>
<path d="M1134 121h10" stroke="#00ff08"/>
<path d="M1144 121h5" stroke="#00ff07"/>
<path d="M1149 121h5" stroke="#00ff06"/>
<path d="M1154 121h10" stroke="#00ff05"/>
<path d="M1164 121h5" stroke="#00ff04"/>
<path d="M1169 121h10" stroke="#00ff03"/>
<path d="M1179 121h5" stroke="#00ff02"/>
<path d="M1184 121h10" stroke="#00ff01"/>
<path d="M1194 121h40" stroke="#0f0"/>
<path d="M1064 126h5" stroke="#00ff15"/>
<path d="M1069 126h5" stroke="#00ff14"/>
<path d="M1074 126h10" stroke="#00ff13"/>
<path d="M1084 126h5" stroke="#00ff12"/>
<path d="M1089 126h5" stroke="#0f1"/>
<path d="M1094 126h5" stroke="#00ff10"/>
<path d="M1099 126h5" stroke="#00ff0f"/>
<path d="M1104 126h10" stroke="#00ff0e"/>
<path d="M1114 126h5" stroke="#00ff0d"/>
<path d="M1119 126h5" stroke="#00ff0c"/>
<path d="M1124 126h10" stroke="#00ff0b"/>
<path d="M1134 126h5" stroke="#00ff0a"/>
<path d="M1139 126h5" stroke="#00ff09"/>
<path d="M1144 126h5" stroke="#00ff08"/>
<path d="M1149 126h10" stroke="#00ff07"/>
<path d="M1159 126h5" stroke="#00ff06"/>
<path d="M1164 126h5" stroke="#00ff05"/>
<path d="M1169 126h10" stroke="#00ff04"/>
<path d="M1179 126h5" stroke="#00ff03"/>
<path d="M1184 126h10" stroke="#00ff02"/>
<path d="M1194 126h5" stroke="#00ff01"/>
<path d="M1199 126h45" stroke="#0f0"/>
<path d="M1059 131h10" stroke="#00ff17"/>
<path d="M1069 131h5" stroke="#00ff16"/>
<path d="M1074 131h5" stroke="#00ff15"/>
<path d="M1079 131h5" stroke="#00ff14"/>
<path d="M1084 131h5" stroke="#00ff13"/>
<path d="M1089 131h10" stroke="#00ff12"/>
<path d="M1099 131h5" stroke="#0f1"/>
<path d="M1104 131h5" stroke="#00ff10"/>
<path d="M1109 131h5" stroke="#00ff0f"/>
<path d="M1114 131h10" stroke="#00ff0e"/>
<path d="M1124 131h5" stroke="#00ff0d"/>
<path d="M1129 131h5" stroke="#00ff0c"/>
<path d="M1134 131h5" stroke="#00ff0b"/>
<path d="M1139 131h10" stroke="#00ff0a"/>
<path d="M1149 131h5" stroke="#00ff09"/>
<path d="M1154 131h5" stroke="#00ff08"/>
<path d="M1159 131h5" stroke="#00ff07"/>
<path d="M1164 131h10" stroke="#00ff06"/>
<path d="M1174 131h5" stroke="#00ff05"/>
<path d="M1179 131h5" stroke="#00ff04"/>
<path d="M1184 131h10" stroke="#00ff03"/>
<path d="M1194 131h5" stroke="#00ff02"/>
<path d="M1199 131h10" stroke="#00ff01"/>
<path d="M1209 131h40" stroke="#0f0"/>
<path d="M1059 136h5" stroke="#00ff19"/>
<path d="M1064 136h5" stroke="#00ff18"/>
<path d="M1069 136h10" stroke="#00ff17"/>
<path d="M1079 136h5" stroke="#00ff16"/>
<path d="M1084 136h5" stroke="#00ff15"/>
<path d="M1089 136h5" stroke="#00ff14"/>
<path d="M1094 136h5" stroke="#00ff13"/>
<path d="M1099 136h10" stroke="#00ff12"/>
<path d="M1109 136h5" stroke="#0f1"/>
<path d="M1114 136h5" stroke="#00ff10"/>
<path d="M1119 136h5" stroke="#00ff0f"/>
<path d="M1124 136h5" stroke="#00ff0e"/>
<path d="M1129 136h10" stroke="#00ff0d"/>
<path d="M1139 136h5" stroke="#00ff0c"/>
<path d="M1144 136h5" stroke="#00ff0b"/>
<path d="M1149 136h5" stroke="#00ff0a"/>
<path d="M1154 136h5" stroke="#00ff09"/>
<path d="M1159 136h10" stroke="#00ff08"/>
<path d="M1169 136h5" stroke="#00ff07"/>
<path d="M1174 136h5" stroke="#00ff06"/>
<path d="M1179 136h5" stroke="#00ff05"/>
<path d="M1184 136h10" stroke="#00ff04"/>
<path d="M1194 136h5" stroke="#00ff03"/>
<path d="M1199 136h10" stroke="#00ff02"/>
<path d="M1209 136h5" stroke="#00ff01"/>
<path d="M1214 136h45" stroke="#0f0"/>
<path d="M1059 141h5" stroke="#00ff1b"/>
<path d="M1064 141h5" stroke="#00ff1a"/>
<path d="M1069 141h5" stroke="#00ff19"/>
<path d="M1074 141h5" stroke="#00ff18"/>
<path d="M1079 141h10" stroke="#00ff17"/>
<path d="M1089 141h5" stroke="#00ff16"/>
<path d="M1094 141h5" stroke="#00ff15"/>
<path d="M1099 141h5" stroke="#00ff14"/>
<path d="M1104 141h5" stroke="#00ff13"/>
<path d="M1109 141h10" stroke="#00ff12"/>
<path d="M1119 141h5" stroke="#0f1"/>
<path d="M1124 141h5" stroke="#00ff10"/>
<path d="M1129 141h5" stroke="#00ff0f"/>
<path d="M1134 141h5" stroke="#00ff0e"/>
<path d="M1139 141h5" stroke="#00ff0d"/>
<path d="M1144 141h10" stroke="#00ff0c"/>
<path d="M1154 141h5" stroke="#00ff0b"/>
<path d="M1159 141h5" stroke="#00ff0a"/>
<path d="M1164 141h5" stroke="#00ff09"/>
<path d="M1169 141h5" stroke="#00ff08"/>
<path d="M1174 141h10" stroke="#00ff07"/>
<path d="M1184 141h5" stroke="#00ff06"/>
<path d="M1189 141h5" stroke="#00ff05"/>
<path d="M1194 141h5" stroke="#00ff04"/>
<path d="M1199 141h10" stroke="#00ff03"/>
<path d="M1209 141h5" stroke="#00ff02"/>
<path d="M1214 141h10" stroke="#00ff01"/>
<path d="M1224 141h40" stroke="#0f0"/>
<path d="M1059 146h5" stroke="#00ff1d"/>
<path d="M1064 146h5" stroke="#00ff1c"/>
<path d="M1069 146h5" stroke="#00ff1b"/>
<path d="M1074 146h5" stroke="#00ff1a"/>
<path d="M1079 146h5" stroke="#00ff19"/>
<path d="M1084 146h10" stroke="#00ff18"/>
<path d="M1094 146h5" stroke="#00ff17"/>
<path d="M1099 146h5" stroke="#00ff16"/>
<path d="M1104 146h5" stroke="#00ff15"/>
<path d="M1109 146h5" stroke="#00ff14"/>
<path d="M1114 146h5" stroke="#00ff13"/>
<path d="M1119 146h5" stroke="#00ff12"/>
<path d="M1124 146h10" stroke="#0f1"/>
<path d="M1134 146h5" stroke="#00ff10"/>
<path d="M1139 146h5" stroke="#00ff0f"/>
<path d="M1144 146h5" stroke="#00ff0e"/>
<path d="M1149 146h5" stroke="#00ff0d"/>
<path d="M1154 146h5" stroke="#00ff0c"/>
<path d="M1159 146h10" stroke="#00ff0b"/>
<path d="M1169 146h5" stroke="#00ff0a"/>
<path d="M1174 146h5" stroke="#00ff09"/>
<path d="M1179 146h5" stroke="#00ff08"/>
<path d="M1184 146h5" stroke="#00ff07"/>
<path d="M1189 146h5" stroke="#00ff06"/>
<path d="M1194 146h10" stroke="#00ff05"/>
<path d="M1204 146h5" stroke="#00ff04"/>
<path d="M1209 146h5" stroke="#00ff03"/>
<path d="M1214 146h10" stroke="#00ff02"/>
<path d="M1224 146h5" stroke="#00ff01"/>
<path d="M1229 146h35" stroke="#0f0"/>
<path d="M1264 146h5" stroke="#01ff00"/>
<path d="M1269 146h5" stroke="#03ff00"/>
<path d="M1054 151h10" stroke="#00ff1f"/>
<path d="M1064 151h5" stroke="#00ff1e"/>
<path d="M1069 151h5" stroke="#00ff1d"/>
<path d="M1074 151h5" stroke="#00ff1c"/>
<path d="M1079 151h5" stroke="#00ff1b"/>
<path d="M1084 151h5" stroke="#00ff1a"/>
<path d="M1089 151h5" stroke="#00ff19"/>
<path d="M1094 151h10" stroke="#00ff18"/>
<path d="M1104 151h5" stroke="#00ff17"/>
<path d="M1109 151h5" stroke="#00ff16"/>
<path d="M1114 151h5" stroke="#00ff15"/>
<path d="M1119 151h5" stroke="#00ff14"/>
<path d="M1124 151h5" stroke="#00ff13"/>
<path d="M1129 151h5" stroke="#00ff12"/>
<path d="M1134 151h10" stroke="#0f1"/>
<path d="M1144 151h5" stroke="#00ff10"/>
<path d="M1149 151h5" stroke="#00ff0f"/>
<path d="M1154 151h5" stroke="#00ff0e"/>
<path d="M1159 151h5" stroke="#00ff0d"/>
<path d="M1164 151h5" stroke="#00ff0c"/>
<path d="M1169 151h5" stroke="#00ff0b"/>
<path d="M1174 151h5" stroke="#00ff0a"/>
<path d="M1179 151h10" stroke="#00ff09"/>
<path d="M1189 151h5" stroke="#00ff08"/>
<path d="M1194 151h5" stroke="#00ff07"/>
<path d="M1199 151h5" stroke="#00ff06"/>
<path d="M1204 151h5" stroke="#00ff05"/>
<path d="M1209 151h10" stroke="#00ff04"/>
<path d="M1219 151h5" stroke="#00ff03"/>
<path d="M1224 151h5" stroke="#00ff02"/>
<path d="M1229 151h10" stroke="#00ff01"/>
<path d="M1239 151h25" stroke="#0f0"/>
<path d="M1264 151h5" stroke="#01ff00"/>
<path d="M1269 151h5" stroke="#04ff00"/>
<path d="M1274 151h5" stroke="#07ff00"/>
<path d="M1054 156h5" stroke="#00ff21"/>
<path d="M1059 156h10" stroke="#00ff20"/>
<path d="M1069 156h5" stroke="#00ff1f"/>
<path d="M1074 156h5" stroke="#00ff1e"/>
<path d="M1079 156h5" stroke="#00ff1d"/>
<path d="M1084 156h5" stroke="#00ff1c"/>
<path d="M1089 156h5" stroke="#00ff1b"/>
<path d="M1094 156h5" stroke="#00ff1a"/>
<path d="M1099 156h10" stroke="#00ff19"/>
<path d="M1109 156h5" stroke="#00ff18"/>
<path d="M1114 156h5" stroke="#00ff17"/>
<path d="M1119 156h5" stroke="#00ff16"/>
<path d="M1124 156h5" stroke="#00ff15"/>
<path d="M1129 156h5" stroke="#00ff14"/>
<path d="M1134 156h5" stroke="#00ff13"/>
<path d="M1139 156h5" stroke="#00ff12"/>
<path d="M1144 156h5" stroke="#0f1"/>
<path d="M1149 156h10" stroke="#00ff10"/>
<path d="M1159 156h5" stroke="#00ff0f"/>
<path d="M1164 156h5" stroke="#00ff0e"/>
<path d="M1169 156h5" stroke="#00ff0d"/>
<path d="M1174 156h5" stroke="#00ff0c"/>
<path d="M1179 156h5" stroke="#00ff0b"/>
<path d="M1184 156h5" stroke="#00ff0a"/>
<path d="M1189 156h5" stroke="#00ff09"/>
<path d="M1194 156h5" stroke="#00ff08"/>
<path d="M1199 156h10" stroke="#00ff07"/>
<path d="M1209 156h5" stroke="#00ff06"/>
<path d="M1214 156h5" stroke="#00ff05"/>
<path d="M1219 156h5" stroke="#00ff04"/>
<path d="M1224 156h5" stroke="#00ff03"/>
<path d="M1229 156h10" stroke="#00ff02"/>
<path d="M1239 156h5" stroke="#00ff01"/>
<path d="M1244 156h20" stroke="#0f0"/>
<path d="M1264 156h5" stroke="#02ff00"/>
<path d="M1269 156h5" stroke="#04ff00"/>
<path d="M1274 156h5" stroke="#07ff00"/>
<path d="M1279 156h5" stroke="#0bff00"/>
<path d="M1284 156h5" stroke="#0eff00"/>
<path d="M1054 161h5" stroke="#00ff23"/>
<path d="M1059 161h10" stroke="#0f2"/>
<path d="M1069 161h5" stroke="#00ff21"/>
<path d="M1074 161h5" stroke="#00ff20"/>
<path d="M1079 161h5" stroke="#00ff1f"/>
<path d="M1084 161h5" stroke="#00ff1e"/>
<path d="M1089 161h5" stroke="#00ff1d"/>
<path d="M1094 161h5" stroke="#00ff1c"/>
<path d="M1099 161h5" stroke="#00ff1b"/>
<path d="M1104 161h10" stroke="#00ff1a"/>
<path d="M1114 161h5" stroke="#00ff19"/>
<path d="M1119 161h5" stroke="#00ff18"/>
<path d="M1124 161h5" stroke="#00ff17"/>
<path d="M1129 161h5" stroke="#00ff16"/>
<path d="M1134 161h5" stroke="#00ff15"/>
<path d="M1139 161h5" stroke="#00ff14"/>
<path d="M1144 161h5" stroke="#00ff13"/>
<path d="M1149 161h5" stroke="#00ff12"/>
<path d="M1154 161h5" stroke="#0f1"/>
<path d="M1159 161h5" stroke="#00ff10"/>
<path d="M1164 161h5" stroke="#00ff0f"/>
<path d="M1169 161h10" stroke="#00ff0e"/>
<path d="M1179 161h5" stroke="#00ff0d"/>
<path d="M1184 161h5" stroke="#00ff0c"/>
<path d="M1189 161h5" stroke="#00ff0b"/>
<path d="M1194 161h5" stroke="#00ff0a"/>
<path d="M1199 161h5" stroke="#00ff09"/>
<path d="M1204 161h5" stroke="#00ff08"/>
<path d="M1209 161h5" stroke="#00ff07"/>
<path d="M1214 161h5" stroke="#00ff06"/>
<path d="M1219 161h10" stroke="#00ff05"/>
<path d="M1229 161h5" stroke="#00ff04"/>
<path d="M1234 161h5" stroke="#00ff03"/>
<path d="M1239 161h5" stroke="#00ff02"/>
<path d="M1244 161h10" stroke="#00ff01"/>
<path d="M1254 161h10" stroke="#0f0"/>
<path d="M1264 161h5" stroke="#02ff00"/>
<path d="M1269 161h5" stroke="#05ff00"/>
<path d="M1274 161h5" stroke="#08ff00"/>
<path d="M1279 161h5" stroke="#0cff00"/>
<path d="M1284 161h5" stroke="#0fff00"/>
<path d="M1289 161h5" stroke="#13ff00"/>
<path d="M1054 166h10" stroke="#00ff25"/>
<path d="M1064 166h5" stroke="#00ff24"/>
<path d="M1069 166h5" stroke="#00ff23"/>
<path d="M1074 166h5" stroke="#0f2"/>
<path d="M1079 166h5" stroke="#00ff21"/>
<path d="M1084 166h5" stroke="#00ff20"/>
<path d="M1089 166h5" stroke="#00ff1f"/>
<path d="M1094 166h5" stroke="#00ff1e"/>
<path d="M1099 166h5" stroke="#00ff1d"/>
<path d="M1104 166h10" stroke="#00ff1c"/>
<path d="M1114 166h5" stroke="#00ff1b"/>
<path d="M1119 166h5" stroke="#00ff1a"/>
<path d="M1124 166h5" stroke="#00ff19"/>
<path d="M1129 166h5" stroke="#00ff18"/>
<path d="M1134 166h5" stroke="#00ff17"/>
<path d="M1139 166h5" stroke="#00ff16"/>
<path d="M1144 166h5" stroke="#00ff15"/>
<path d="M1149 166h5" stroke="#00ff14"/>
<path d="M1154 166h5" stroke="#00ff13"/>
<path d="M1159 166h5" stroke="#00ff12"/>
<path d="M1164 166h5" stroke="#0f1"/>
<path d="M1169 166h5" stroke="#00ff10"/>
<path d="M1174 166h5" stroke="#00ff0f"/>
<path d="M1179 166h5" stroke="#00ff0e"/>
<path d="M1184 166h5" stroke="#00ff0d"/>
<path d="M1189 166h5" stroke="#00ff0c"/>
<path d="M1194 166h10" stroke="#00ff0b"/>
<path d="M1204 166h5" stroke="#00ff0a"/>
<path d="M1209 166h5" stroke="#00ff09"/>
<path d="M1214 166h5" stroke="#00ff08"/>
<path d="M1219 166h5" stroke="#00ff07"/>
<path d="M1224 166h5" stroke="#00ff06"/>
<path d="M1229 166h5" stroke="#00ff05"/>
<path d="M1234 166h5" stroke="#00ff04"/>
<path d="M1239 166h5" stroke="#00ff03"/>
<path d="M1244 166h10" stroke="#00ff02"/>
<path d="M1254 166h5" stroke="#00ff01"/>
<path d="M1259 166h5" stroke="#01ff00"/>
<path d="M1264 166h5" stroke="#03ff00"/>
<path d="M1269 166h5" stroke="#06ff00"/>
<path d="M1274 166h5" stroke="#09ff00"/>
<path d="M1279 166h5" stroke="#0dff00"/>
<path d="M1284 166h5" stroke="#1f0"/>
<path d="M1289 166h5" stroke="#15ff00"/>
<path d="M1294 166h5" stroke="#19ff00"/>
<path d="M1299 166h5" stroke="#1dff00"/>
<path d="M1054 171h5" stroke="#00ff28"/>
<path d="M1059 171h5" stroke="#00ff27"/>
<path d="M1064 171h5" stroke="#00ff26"/>
<path d="M1069 171h5" stroke="#00ff25"/>
<path d="M1074 171h5" stroke="#00ff24"/>
<path d="M1079 171h5" stroke="#00ff23"/>
<path d="M1084 171h5" stroke="#0f2"/>
<path d="M1089 171h5" stroke="#00ff21"/>
<path d="M1094 171h5" stroke="#00ff20"/>
<path d="M1099 171h5" stroke="#00ff1f"/>
<path d="M1104 171h10" stroke="#00ff1e"/>
<path d="M1114 171h5" stroke="#00ff1d"/>
<path d="M1119 171h5" stroke="#00ff1c"/>
<path d="M1124 171h5" stroke="#00ff1b"/>
<path d="M1129 171h5" stroke="#00ff1a"/>
<path d="M1134 171h5" stroke="#00ff19"/>
<path d="M1139 171h5" stroke="#00ff18"/>
<path d="M1144 171h5" stroke="#00ff17"/>
<path d="M1149 171h5" stroke="#00ff16"/>
<path d="M1154 171h5" stroke="#00ff15"/>
<path d="M1159 171h5" stroke="#00ff14"/>
<path d="M1164 171h5" stroke="#00ff13"/>
<path d="M1169 171h5" stroke="#00ff12"/>
<path d="M1174 171h5" stroke="#0f1"/>
<path d="M1179 171h5" stroke="#00ff10"/>
<path d="M1184 171h5" stroke="#00ff0f"/>
<path d="M1189 171h5" stroke="#00ff0e"/>
<path d="M1194 171h5" stroke="#00ff0d"/>
<path d="M1199 171h5" stroke="#00ff0c"/>
<path d="M1204 171h5" stroke="#00ff0b"/>
<path d="M1209 171h5" stroke="#00ff0a"/>
<path d="M1214 171h5" stroke="#00ff09"/>
<path d="M1219 171h5" stroke="#00ff08"/>
<path d="M1224 171h10" stroke="#00ff07"/>
<path d="M1234 171h5" stroke="#00ff06"/>
<path d="M1239 171h5" stroke="#00ff05"/>
<path d="M1244 171h5" stroke="#00ff04"/>
<path d="M1249 171h5" stroke="#00ff03"/>
<path d="M1254 171h5" stroke="#00ff02"/>
<path d="M1259 171h5" stroke="#01ff01"/>
<path d="M1264 171h5" stroke="#04ff01"/>
<path d="M1269 171h5" stroke="#07ff00"/>
<path d="M1274 171h5" stroke="#0aff00"/>
<path d="M1279 171h5" stroke="#0eff00"/>
<path d="M1284 171h5" stroke="#12ff00"/>
<path d="M1289 171h5" stroke="#16ff00"/>
<path d="M1294 171h5" stroke="#1aff00"/>
<path d="M1299 171h5" stroke="#1fff00"/>
<path d="M1304 171h5" stroke="#23ff00"/>
<path d="M1054 176h5" stroke="#00ff2a"/>
<path d="M1059 176h5" stroke="#00ff29"/>
<path d="M1064 176h5" stroke="#00ff28"/>
<path d="M1069 176h5" stroke="#00ff27"/>
<path d="M1074 176h5" stroke="#00ff26"/>
<path d="M1079 176h5" stroke="#00ff25"/>
<path d="M1084 176h5" stroke="#00ff24"/>
<path d="M1089 176h10" stroke="#00ff23"/>
<path d="M1099 176h5" stroke="#0f2"/>
<path d="M1104 176h5" stroke="#00ff21"/>
<path d="M1109 176h5" stroke="#00ff20"/>
<path d="M1114 176h5" stroke="#00ff1f"/>
<path d="M1119 176h5" stroke="#00ff1e"/>
<path d="M1124 176h5" stroke="#00ff1d"/>
<path d="M1129 176h5" stroke="#00ff1c"/>
<path d="M1134 176h5" stroke="#00ff1b"/>
<path d="M1139 176h5" stroke="#00ff1a"/>
<path d="M1144 176h5" stroke="#00ff19"/>
<path d="M1149 176h5" stroke="#00ff18"/>
<path d="M1154 176h5" stroke="#00ff17"/>
<path d="M1159 176h5" stroke="#00ff16"/>
<path d="M1164 176h5" stroke="#00ff15"/>
<path d="M1169 176h5" stroke="#00ff14"/>
<path d="M1174 176h5" stroke="#00ff13"/>
<path d="M1179 176h5" stroke="#00ff12"/>
<path d="M1184 176h5" stroke="#0f1"/>
<path d="M1189 176h5" stroke="#00ff10"/>
<path d="M1194 176h5" stroke="#00ff0f"/>
<path d="M1199 176h5" stroke="#00ff0e"/>
<path d="M1204 176h5" stroke="#00ff0d"/>
<path d="M1209 176h5" stroke="#00ff0c"/>
<path d="M1214 176h5" stroke="#00ff0b"/>
<path d="M1219 176h5" stroke="#00ff0a"/>
<path d="M1224 176h5" stroke="#00ff09"/>
<path d="M1229 176h5" stroke="#00ff08"/>
<path d="M1234 176h5" stroke="#00ff07"/>
<path d="M1239 176h5" stroke="#00ff06"/>
<path d="M1244 176h5" stroke="#00ff05"/>
<path d="M1249 176h5" stroke="#00ff04"/>
<path d="M1254 176h5" stroke="#00ff03"/>
<path d="M1259 176h5" stroke="#02ff03"/>
<path d="M1264 176h5" stroke="#05ff02"/>
<path d="M1269 176h5" stroke="#08ff01"/>
<path d="M1274 176h5" stroke="#0bff00"/>
<path d="M1279 176h5" stroke="#0fff00"/>
<path d="M1284 176h5" stroke="#13ff00"/>
<path d="M1289 176h5" stroke="#17ff00"/>
<path d="M1294 176h5" stroke="#1cff00"/>
<path d="M1299 176h5" stroke="#20ff00"/>
<path d="M1304 176h5" stroke="#25ff00"/>
<path d="M1309 176h5" stroke="#2aff00"/>
<path d="M1054 181h5" stroke="#00ff2c"/>
<path d="M1059 181h5" stroke="#00ff2b"/>
<path d="M1064 181h5" stroke="#00ff2a"/>
<path d="M1069 181h5" stroke="#00ff29"/>
<path d="M1074 181h10" stroke="#00ff28"/>
<path d="M1084 181h5" stroke="#00ff27"/>
<path d="M1089 181h5" stroke="#00ff26"/>
<path d="M1094 181h5" stroke="#00ff25"/>
<path d="M1099 181h5" stroke="#00ff24"/>
<path d="M1104 181h5" stroke="#00ff23"/>
<path d="M1109 181h5" stroke="#0f2"/>
<path d="M1114 181h5" stroke="#00ff21"/>
<path d="M1119 181h5" stroke="#00ff20"/>
<path d="M1124 181h5" stroke="#00ff1f"/>
<path d="M1129 181h5" stroke="#00ff1e"/>
<path d="M1134 181h5" stroke="#00ff1d"/>
<path d="M1139 181h5" stroke="#00ff1c"/>
<path d="M1144 181h5" stroke="#00ff1b"/>
<path d="M1149 181h5" stroke="#00ff1a"/>
<path d="M1154 181h5" stroke="#00ff19"/>
<path d="M1159 181h5" stroke="#00ff18"/>
<path d="M1164 181h5" stroke="#00ff17"/>
<path d="M1169 181h5" stroke="#00ff16"/>
<path d="M1174 181h5" stroke="#00ff15"/>
<path d="M1179 181h5" stroke="#00ff14"/>
<path d="M1184 181h5" stroke="#00ff13"/>
<path d="M1189 181h5" stroke="#00ff12"/>
<path d="M1194 181h5" stroke="#0f1"/>
<path d="M1199 181h5" stroke="#00ff10"/>
<path d="M1204 181h5" stroke="#00ff0f"/>
<path d="M1209 181h5" stroke="#00ff0e"/>
<path d="M1214 181h5" stroke="#00ff0d"/>
<path d="M1219 181h5" stroke="#00ff0c"/>
<path d="M1224 181h5" stroke="#00ff0b"/>
<path d="M1229 181h5" stroke="#00ff0a"/>
<path d="M1234 181h5" stroke="#00ff09"/>
<path d="M1239 181h5" stroke="#00ff08"/>
<path d="M1244 181h5" stroke="#00ff07"/>
<path d="M1249 181h5" stroke="#00ff06"/>
<path d="M1254 181h5" stroke="#00ff05"/>
<path d="M1259 181h5" stroke="#02ff04"/>
<path d="M1264 181h5" stroke="#05ff03"/>
<path d="M1269 181h5" stroke="#09ff02"/>
<path d="M1274 181h5" stroke="#0cff01"/>
<path d="M1279 181h5" stroke="#10ff01"/>
<path d="M1284 181h5" stroke="#14ff00"/>
<path d="M1289 181h5" stroke="#19ff00"/>
<path d="M1294 181h5" stroke="#1dff00"/>
<path d="M1299 181h5" stroke="#2f0"/>
<path d="M1304 181h5" stroke="#27ff00"/>
<path d="M1309 181h5" stroke="#2cff00"/>
<path d="M1314 181h5" stroke="#31ff00"/>
<path d="M1319 181h5" stroke="#36ff00"/>
<path d="M1054 186h5" stroke="#00ff2f"/>
<path d="M1059 186h5" stroke="#00ff2e"/>
<path d="M1064 186h5" stroke="#00ff2d"/>
<path d="M1069 186h5" stroke="#00ff2c"/>
<path d="M1074 186h5" stroke="#00ff2b"/>
<path d="M1079 186h5" stroke="#00ff2a"/>
<path d="M1084 186h5" stroke="#00ff29"/>
<path d="M1089 186h5" stroke="#00ff28"/>
<path d="M1094 186h5" stroke="#00ff27"/>
<path d="M1099 186h5" stroke="#00ff26"/>
<path d="M1104 186h5" stroke="#00ff25"/>
<path d="M1109 186h5" stroke="#00ff24"/>
<path d="M1114 186h5" stroke="#00ff23"/>
<path d="M1119 186h5" stroke="#0f2"/>
<path d="M1124 186h5" stroke="#00ff21"/>
<path d="M1129 186h5" stroke="#00ff20"/>
<path d="M1134 186h5" stroke="#00ff1f"/>
<path d="M1139 186h5" stroke="#00ff1e"/>
<path d="M1144 186h5" stroke="#00ff1d"/>
<path d="M1149 186h5" stroke="#00ff1c"/>
<path d="M1154 186h5" stroke="#00ff1b"/>
<path d="M1159 186h5" stroke="#00ff1a"/>
<path d="M1164 186h5" stroke="#00ff19"/>
<path d="M1169 186h5" stroke="#00ff18"/>
<path d="M1174 186h5" stroke="#00ff17"/>
<path d="M1179 186h5" stroke="#00ff16"/>
<path d="M1184 186h5" stroke="#00ff15"/>
<path d="M1189 186h5" stroke="#00ff14"/>
<path d="M1194 186h5" stroke="#00ff13"/>
<path d="M1199 186h5" stroke="#00ff12"/>
<path d="M1204 186h5" stroke="#0f1"/>
<path d="M1209 186h5" stroke="#00ff10"/>
<path d="M1214 186h5" stroke="#00ff0f"/>
<path d="M1219 186h5" stroke="#00ff0e"/>
<path d="M1224 186h5" stroke="#00ff0d"/>
<path d="M1229 186h5" stroke="#00ff0c"/>
<path d="M1234 186h5" stroke="#00ff0b"/>
<path d="M1239 186h5" stroke="#00ff0a"/>
<path d="M1244 186h5" stroke="#00ff09"/>
<path d="M1249 186h5" stroke="#00ff08"/>
<path d="M1254 186h5" stroke="#01ff06"/>
<path d="M1259 186h5" stroke="#03ff06"/>
<path d="M1264 186h5" stroke="#06ff05"/>
<path d="M1269 186h5" stroke="#0aff04"/>
<path d="M1274 186h5" stroke="#0eff03"/>
<path d="M1279 186h5" stroke="#12ff02"/>
<path d="M1284 186h5" stroke="#16ff01"/>
<path d="M1289 186h5" stroke="#1aff00"/>
<path d="M1294 186h5" stroke="#1fff00"/>
<path d="M1299 186h5" stroke="#24ff00"/>
<path d="M1304 186h5" stroke="#29ff00"/>
<path d="M1309 186h5" stroke="#2eff00"/>
<path d="M1314 186h5" stroke="#3f0"/>
<path d="M1319 186h5" stroke="#39ff00"/>
<path d="M1324 186h5" stroke="#3eff00"/>
<path d="M1054 191h5" stroke="#00ff31"/>
<path d="M1059 191h5" stroke="#00ff30"/>
<path d="M1064 191h5" stroke="#00ff2f"/>
<path d="M1069 191h5" stroke="#00ff2e"/>
<path d="M1074 191h5" stroke="#00ff2d"/>
<path d="M1079 191h5" stroke="#00ff2c"/>
<path d="M1084 191h5" stroke="#00ff2b"/>
<path d="M1089 191h5" stroke="#00ff2a"/>
<path d="M1094 191h10" stroke="#00ff29"/>
<path d="M1104 191h5" stroke="#00ff28"/>
<path d="M1109 191h5" stroke="#00ff27"/>
<path d="M1114 191h5" stroke="#00ff26"/>
<path d="M1119 191h5" stroke="#00ff25"/>
<path d="M1124 191h5" stroke="#00ff24"/>
<path d="M1129 191h5" stroke="#00ff23"/>
<path d="M1134 191h5" stroke="#0f2"/>
<path d="M1139 191h5" stroke="#00ff21"/>
<path d="M1144 191h5" stroke="#00ff1f"/>
<path d="M1149 191h5" stroke="#00ff1e"/>
<path d="M1154 191h5" stroke="#00ff1d"/>
<path d="M1159 191h5" stroke="#00ff1c"/>
<path d="M1164 191h5" stroke="#00ff1b"/>
<path d="M1169 191h5" stroke="#00ff1a"/>
<path d="M1174 191h5" stroke="#00ff19"/>
<path d="M1179 191h5" stroke="#00ff18"/>
<path d="M1184 191h5" stroke="#00ff17"/>
<path d="M1189 191h5" stroke="#00ff16"/>
<path d="M1194 191h5" stroke="#00ff15"/>
<path d="M1199 191h5" stroke="#00ff14"/>
<path d="M1204 191h5" stroke="#00ff13"/>
<path d="M1209 191h5" stroke="#00ff12"/>
<path d="M1214 191h5" stroke="#0f1"/>
<path d="M1219 191h5" stroke="#00ff10"/>
<path d="M1224 191h5" stroke="#00ff0f"/>
<path d="M1229 191h5" stroke="#00ff0e"/>
<path d="M1234 191h5" stroke="#00ff0c"/>
<path d="M1239 191h5" stroke="#00ff0b"/>
<path d="M1244 191h5" stroke="#00ff0a"/>
<path d="M1249 191h5" stroke="#00ff09"/>
<path d="M1254 191h5" stroke="#01ff08"/>
<path d="M1259 191h5" stroke="#04ff07"/>
<path d="M1264 191h5" stroke="#07ff06"/>
<path d="M1269 191h5" stroke="#0bff05"/>
<path d="M1274 191h5" stroke="#0fff04"/>
<path d="M1279 191h5" stroke="#13ff03"/>
<path d="M1284 191h5" stroke="#17ff02"/>
<path d="M1289 191h5" stroke="#1cff01"/>
<path d="M1294 191h5" stroke="#21ff01"/>
<path d="M1299 191h5" stroke="#26ff00"/>
<path d="M1304 191h5" stroke="#2bff00"/>
<path d="M1309 191h5" stroke="#30ff00"/>
<path d="M1314 191h5" stroke="#35ff00"/>
<path d="M1319 191h5" stroke="#3bff00"/>
<path d="M1324 191h5" stroke="#41ff00"/>
<path d="M1329 191h5" stroke="#47ff00"/>
<path d="M1054 196h5" stroke="#00ff34"/>
<path d="M1059 196h5" stroke="#0f3"/>
<path d="M1064 196h5" stroke="#00ff32"/>
<path d="M1069 196h5" stroke="#00ff31"/>
<path d="M1074 196h5" stroke="#00ff30"/>
<path d="M1079 196h5" stroke="#00ff2f"/>
<path d="M1084 196h5" stroke="#00ff2e"/>
<path d="M1089 196h5" stroke="#00ff2d"/>
<path d="M1094 196h5" stroke="#00ff2c"/>
<path d="M1099 196h5" stroke="#00ff2b"/>
<path d="M1104 196h5" stroke="#00ff2a"/>
<path d="M1109 196h5" stroke="#00ff29"/>
<path d="M1114 196h5" stroke="#00ff28"/>
<path d="M1119 196h5" stroke="#00ff27"/>
<path d="M1124 196h5" stroke="#00ff26"/>
<path d="M1129 196h5" stroke="#00ff25"/>
<path d="M1134 196h5" stroke="#00ff24"/>
<path d="M1139 196h5" stroke="#00ff23"/>
<path d="M1144 196h5" stroke="#0f2"/>
<path d="M1149 196h5" stroke="#00ff21"/>
<path d="M1154 196h5" stroke="#00ff20"/>
<path d="M1159 196h5" stroke="#00ff1f"/>
<path d="M1164 196h5" stroke="#00ff1e"/>
<path d="M1169 196h5" stroke="#00ff1d"/>
<path d="M1174 196h5" stroke="#00ff1c"/>
<path d="M1179 196h5" stroke="#00ff1a"/>
<path d="M1184 196h5" stroke="#00ff19"/>
<path d="M1189 196h5" stroke="#00ff18"/>
<path d="M1194 196h5" stroke="#00ff17"/>
<path d="M1199 196h5" stroke="#00ff16"/>
<path d="M1204 196h5" stroke="#00ff15"/>
<path d="M1209 196h5" stroke="#00ff14"/>
<path d="M1214 196h5" stroke="#00ff13"/>
<path d="M1219 196h5" stroke="#00ff12"/>
<path d="M1224 196h5" stroke="#0f1"/>
<path d="M1229 196h5" stroke="#00ff10"/>
<path d="M1234 196h5" stroke="#00ff0e"/>
<path d="M1239 196h5" stroke="#00ff0d"/>
<path d="M1244 196h5" stroke="#00ff0c"/>
<path d="M1249 196h5" stroke="#00ff0b"/>
<path d="M1254 196h5" stroke="#02ff0a"/>
<path d="M1259 196h5" stroke="#05ff09"/>
<path d="M1264 196h5" stroke="#08ff08"/>
<path d="M1269 196h5" stroke="#0cff07"/>
<path d="M1274 196h5" stroke="#10ff06"/>
<path d="M1279 196h5" stroke="#14ff05"/>
<path d="M1284 196h5" stroke="#19ff04"/>
<path d="M1289 196h5" stroke="#1eff03"/>
<path d="M1294 196h5" stroke="#22ff02"/>
<path d="M1299 196h5" stroke="#27ff01"/>
<path d="M1304 196h5" stroke="#2dff00"/>
<path d="M1309 196h5" stroke="#32ff00"/>
<path d="M1314 196h5" stroke="#38ff00"/>
<path d="M1319 196h5" stroke="#3eff00"/>
<path d="M1324 196h5" stroke="#4f0"/>
<path d="M1329 196h5" stroke="#4aff00"/>
<path d="M1334 196h5" stroke="#50ff00"/>
<path d="M1339 196h5" stroke="#56ff00"/>
<path d="M1054 201h5" stroke="#00ff36"/>
<path d="M1059 201h5" stroke="#00ff35"/>
<path d="M1064 201h5" stroke="#00ff34"/>
<path d="M1069 201h5" stroke="#0f3"/>
<path d="M1074 201h10" stroke="#00ff32"/>
<path d="M1084 201h5" stroke="#00ff31"/>
<path d="M1089 201h5" stroke="#00ff30"/>
<path d="M1094 201h5" stroke="#00ff2f"/>
<path d="M1099 201h5" stroke="#00ff2e"/>
<path d="M1104 201h5" stroke="#00ff2d"/>
<path d="M1109 201h5" stroke="#00ff2c"/>
<path d="M1114 201h5" stroke="#00ff2b"/>
<path d="M1119 201h5" stroke="#00ff2a"/>
<path d="M1124 201h5" stroke="#00ff29"/>
<path d="M1129 201h5" stroke="#00ff27"/>
<path d="M1134 201h5" stroke="#00ff26"/>
<path d="M1139 201h5" stroke="#00ff25"/>
<path d="M1144 201h5" stroke="#00ff24"/>
<path d="M1149 201h5" stroke="#00ff23"/>
<path d="M1154 201h5" stroke="#0f2"/>
<path d="M1159 201h5" stroke="#00ff21"/>
<path d="M1164 201h5" stroke="#00ff20"/>
<path d="M1169 201h5" stroke="#00ff1f"/>
<path d="M1174 201h5" stroke="#00ff1e"/>
<path d="M1179 201h5" stroke="#00ff1d"/>
<path d="M1184 201h5" stroke="#00ff1c"/>
<path d="M1189 201h5" stroke="#00ff1b"/>
<path d="M1194 201h5" stroke="#00ff1a"/>
<path d="M1199 201h5" stroke="#00ff18"/>
<path d="M1204 201h5" stroke="#00ff17"/>
<path d="M1209 201h5" stroke="#00ff16"/>
<path d="M1214 201h5" stroke="#00ff15"/>
<path d="M1219 201h5" stroke="#00ff14"/>
<path d="M1224 201h5" stroke="#00ff13"/>
<path d="M1229 201h5" stroke="#00ff12"/>
<path d="M1234 201h5" stroke="#0f1"/>
<path d="M1239 201h5" stroke="#00ff0f"/>
<path d="M1244 201h5" stroke="#00ff0e"/>
<path d="M1249 201h5" stroke="#00ff0d"/>
<path d="M1254 201h5" stroke="#02ff0c"/>
<path d="M1259 201h5" stroke="#06ff0b"/>
<path d="M1264 201h5" stroke="#09ff0a"/>
<path d="M1269 201h5" stroke="#0dff09"/>
<path d="M1274 201h5" stroke="#11ff08"/>
<path d="M1279 201h5" stroke="#16ff06"/>
<path d="M1284 201h5" stroke="#1aff05"/>
<path d="M1289 201h5" stroke="#1fff04"/>
<path d="M1294 201h5" stroke="#24ff03"/>
<path d="M1299 201h5" stroke="#29ff02"/>
<path d="M1304 201h5" stroke="#2fff01"/>
<path d="M1309 201h5" stroke="#34ff01"/>
<path d="M1314 201h5" stroke="#3aff00"/>
<path d="M1319 201h5" stroke="#40ff00"/>
<path d="M1324 201h5" stroke="#46ff00"/>
<path d="M1329 201h5" stroke="#4dff00"/>
<path d="M1334 201h5" stroke="#53ff00"/>
<path d="M1339 201h5" stroke="#5aff00"/>
<path d="M1344 201h5" stroke="#61ff00"/>
<path d="M1054 206h5" stroke="#00ff39"/>
<path d="M1059 206h5" stroke="#00ff38"/>
<path d="M1064 206h5" stroke="#00ff37"/>
<path d="M1069 206h5" stroke="#00ff36"/>
<path d="M1074 206h5" stroke="#00ff35"/>
<path d="M1079 206h5" stroke="#00ff34"/>
<path d="M1084 206h5" stroke="#0f3"/>
<path d="M1089 206h5" stroke="#00ff32"/>
<path d="M1094 206h5" stroke="#00ff31"/>
<path d="M1099 206h5" stroke="#00ff30"/>
<path d="M1104 206h5" stroke="#00ff2f"/>
<path d="M1109 206h5" stroke="#00ff2e"/>
<path d="M1114 206h5" stroke="#00ff2d"/>
<path d="M1119 206h5" stroke="#00ff2c"/>
<path d="M1124 206h5" stroke="#00ff2b"/>
<path d="M1129 206h5" stroke="#00ff2a"/>
<path d="M1134 206h5" stroke="#00ff29"/>
<path d="M1139 206h5" stroke="#00ff28"/>
<path d="M1144 206h5" stroke="#00ff27"/>
<path d="M1149 206h5" stroke="#00ff26"/>
<path d="M1154 206h5" stroke="#00ff25"/>
<path d="M1159 206h5" stroke="#00ff24"/>
<path d="M1164 206h5" stroke="#00ff23"/>
<path d="M1169 206h5" stroke="#00ff21"/>
<path d="M1174 206h5" stroke="#00ff20"/>
<path d="M1179 206h5" stroke="#00ff1f"/>
<path d="M1184 206h5" stroke="#00ff1e"/>
<path d="M1189 206h5" stroke="#00ff1d"/>
<path d="M1194 206h5" stroke="#00ff1c"/>
<path d="M1199 206h5" stroke="#00ff1b"/>
<path d="M1204 206h5" stroke="#00ff1a"/>
<path d="M1209 206h5" stroke="#00ff19"/>
<path d="M1214 206h5" stroke="#00ff17"/>
<path d="M1219 206h5" stroke="#00ff16"/>
<path d="M1224 206h5" stroke="#00ff15"/>
<path d="M1229 206h5" stroke="#00ff14"/>
<path d="M1234 206h5" stroke="#00ff13"/>
<path d="M1239 206h5" stroke="#00ff12"/>
<path d="M1244 206h5" stroke="#00ff10"/>
<path d="M1249 206h5" stroke="#00ff0f"/>
<path d="M1254 206h5" stroke="#03ff0e"/>
<path d="M1259 206h5" stroke="#07ff0d"/>
<path d="M1264 206h5" stroke="#0aff0c"/>
<path d="M1269 206h5" stroke="#0eff0b"/>
<path d="M1274 206h5" stroke="#13ff09"/>
<path d="M1279 206h5" stroke="#17ff08"/>
<path d="M1284 206h5" stroke="#1cff07"/>
<path d="M1289 206h5" stroke="#21ff06"/>
<path d="M1294 206h5" stroke="#26ff05"/>
<path d="M1299 206h5" stroke="#2cff04"/>
<path d="M1304 206h5" stroke="#31ff03"/>
<path d="M1309 206h5" stroke="#37ff02"/>
<path d="M1314 206h5" stroke="#3dff01"/>
<path d="M1319 206h5" stroke="#43ff00"/>
<path d="M1324 206h5" stroke="#49ff00"/>
<path d="M1329 206h5" stroke="#50ff00"/>
<path d="M1334 206h5" stroke="#56ff00"/>
<path d="M1339 206h5" stroke="#5dff00"/>
<path d="M1344 206h5" stroke="#64ff00"/>
<path d="M1349 206h5" stroke="#6cff00"/>
<path d="M1054 211h5" stroke="#00ff3c"/>
<path d="M1059 211h5" stroke="#00ff3b"/>
<path d="M1064 211h5" stroke="#00ff3a"/>
<path d="M1069 211h5" stroke="#00ff39"/>
<path d="M1074 211h5" stroke="#00ff38"/>
<path d="M1079 211h5" stroke="#00ff37"/>
<path d="M1084 211h5" stroke="#00ff36"/>
<path d="M1089 211h5" stroke="#00ff35"/>
<path d="M1094 211h5" stroke="#00ff34"/>
<path d="M1099 211h5" stroke="#0f3"/>
<path d="M1104 211h5" stroke="#00ff32"/>
<path d="M1109 211h5" stroke="#00ff31"/>
<path d="M1114 211h5" stroke="#00ff30"/>
<path d="M1119 211h5" stroke="#00ff2f"/>
<path d="M1124 211h5" stroke="#00ff2e"/>
<path d="M1129 211h5" stroke="#00ff2d"/>
<path d="M1134 211h5" stroke="#00ff2c"/>
<path d="M1139 211h5" stroke="#00ff2b"/>
<path d="M1144 211h5" stroke="#00ff2a"/>
<path d="M1149 211h5" stroke="#00ff29"/>
<path d="M1154 211h5" stroke="#00ff27"/>
<path d="M1159 211h5" stroke="#00ff26"/>
<path d="M1164 211h5" stroke="#00ff25"/>
<path d="M1169 211h5" stroke="#00ff24"/>
<path d="M1174 211h5" stroke="#00ff23"/>
<path d="M1179 211h5" stroke="#0f2"/>
<path d="M1184 211h5" stroke="#00ff21"/>
<path d="M1189 211h5" stroke="#00ff20"/>
<path d="M1194 211h5" stroke="#00ff1e"/>
<path d="M1199 211h5" stroke="#00ff1d"/>
<path d="M1204 211h5" stroke="#00ff1c"/>
<path d="M1209 211h5" stroke="#00ff1b"/>
<path d="M1214 211h5" stroke="#00ff1a"/>
<path d="M1219 211h5" stroke="#00ff19"/>
<path d="M1224 211h5" stroke="#00ff17"/>
<path d="M1229 211h5" stroke="#00ff16"/>
<path d="M1234 211h5" stroke="#00ff15"/>
<path d="M1239 211h5" stroke="#00ff14"/>
<path d="M1244 211h5" stroke="#00ff13"/>
<path d="M1249 211h5" stroke="#01ff11"/>
<path d="M1254 211h5" stroke="#04ff10"/>
<path d="M1259 211h5" stroke="#08ff0f"/>
<path d="M1264 211h5" stroke="#0bff0e"/>
<path d="M1269 211h5" stroke="#10ff0d"/>
<path d="M1274 211h5" stroke="#14ff0c"/>
<path d="M1279 211h5" stroke="#19ff0a"/>
<path d="M1284 211h5" stroke="#1eff09"/>
<path d="M1289 211h5" stroke="#23ff08"/>
<path d="M1294 211h5" stroke="#28ff07"/>
<path d="M1299 211h5" stroke="#2eff06"/>
<path d="M1304 211h5" stroke="#34ff05"/>
<path d="M1309 211h5" stroke="#39ff03"/>
<path d="M1314 211h5" stroke="#40ff02"/>
<path d="M1319 211h5" stroke="#46ff01"/>
<path d="M1324 211h5" stroke="#4cff01"/>
<path d="M1329 211h5" stroke="#53ff00"/>
<path d="M1334 211h5" stroke="#5aff00"/>
<path d="M1339 211h5" stroke="#61ff00"/>
<path d="M1344 211h5" stroke="#68ff00"/>
<path d="M1349 211h5" stroke="#70ff00"/>
<path d="M1354 211h5" stroke="#7f0"/>
<path d="M1359 211h5" stroke="#7fff00"/>
<path d="M1054 216h5" stroke="#00ff3f"/>
<path d="M1059 216h5" stroke="#00ff3e"/>
<path d="M1064 216h5" stroke="#00ff3d"/>
<path d="M1069 216h5" stroke="#00ff3c"/>
<path d="M1074 216h5" stroke="#00ff3b"/>
<path d="M1079 216h5" stroke="#00ff3a"/>
<path d="M1084 216h5" stroke="#00ff39"/>
<path d="M1089 216h5" stroke="#00ff38"/>
<path d="M1094 216h5" stroke="#00ff37"/>
<path d="M1099 216h5" stroke="#00ff36"/>
<path d="M1104 216h5" stroke="#00ff35"/>
<path d="M1109 216h5" stroke="#00ff34"/>
<path d="M1114 216h5" stroke="#0f3"/>
<path d="M1119 216h5" stroke="#00ff32"/>
<path d="M1124 216h5" stroke="#00ff31"/>
<path d="M1129 216h5" stroke="#00ff30"/>
<path d="M1134 216h5" stroke="#00ff2f"/>
<path d="M1139 216h5" stroke="#00ff2d"/>
<path d="M1144 216h5" stroke="#00ff2c"/>
<path d="M1149 216h5" stroke="#00ff2b"/>
<path d="M1154 216h5" stroke="#00ff2a"/>
<path d="M1159 216h5" stroke="#00ff29"/>
<path d="M1164 216h5" stroke="#00ff28"/>
<path d="M1169 216h5" stroke="#00ff27"/>
<path d="M1174 216h5" stroke="#00ff26"/>
<path d="M1179 216h5" stroke="#00ff25"/>
<path d="M1184 216h5" stroke="#00ff23"/>
<path d="M1189 216h5" stroke="#0f2"/>
<path d="M1194 216h5" stroke="#00ff21"/>
<path d="M1199 216h5" stroke="#00ff20"/>
<path d="M1204 216h5" stroke="#00ff1f"/>
<path d="M1209 216h5" stroke="#00ff1e"/>
<path d="M1214 216h5" stroke="#00ff1c"/>
<path d="M1219 216h5" stroke="#00ff1b"/>
<path d="M1224 216h5" stroke="#00ff1a"/>
<path d="M1229 216h5" stroke="#00ff19"/>
<path d="M1234 216h5" stroke="#00ff18"/>
<path d="M1239 216h5" stroke="#00ff16"/>
<path d="M1244 216h5" stroke="#00ff15"/>
<path d="M1249 216h5" stroke="#02ff14"/>
<path d="M1254 216h5" stroke="#05ff13"/>
<path d="M1259 216h5" stroke="#09ff11"/>
<path d="M1264 216h5" stroke="#0dff10"/>
<path d="M1269 216h5" stroke="#11ff0f"/>
<path d="M1274 216h5" stroke="#16ff0e"/>
<path d="M1279 216h5" stroke="#1bff0c"/>
<path d="M1284 216h5" stroke="#20ff0b"/>
<path d="M1289 216h5" stroke="#25ff0a"/>
<path d="M1294 216h5" stroke="#2aff09"/>
<path d="M1299 216h5" stroke="#30ff08"/>
<path d="M1304 216h5" stroke="#36ff06"/>
<path d="M1309 216h5" stroke="#3cff05"/>
<path d="M1314 216h5" stroke="#42ff04"/>
<path d="M1319 216h5" stroke="#49ff03"/>
<path d="M1324 216h5" stroke="#50ff02"/>
<path d="M1329 216h5" stroke="#56ff01"/>
<path d="M1334 216h5" stroke="#5dff00"/>
<path d="M1339 216h5" stroke="#65ff00"/>
<path d="M1344 216h5" stroke="#6cff00"/>
<path d="M1349 216h5" stroke="#74ff00"/>
<path d="M1354 216h5" stroke="#7cff00"/>
<path d="M1359 216h5" stroke="#84ff00"/>
<path d="M1364 216h5" stroke="#8cff00"/>
<path d="M1054 221h5" stroke="#00ff42"/>
<path d="M1059 221h5" stroke="#00ff41"/>
<path d="M1064 221h5" stroke="#00ff40"/>
<path d="M1069 221h5" stroke="#00ff3f"/>
<path d="M1074 221h5" stroke="#00ff3e"/>
<path d="M1079 221h5" stroke="#00ff3d"/>
<path d="M1084 221h5" stroke="#00ff3c"/>
<path d="M1089 221h5" stroke="#00ff3b"/>
<path d="M1094 221h5" stroke="#00ff3a"/>
<path d="M1099 221h5" stroke="#00ff39"/>
<path d="M1104 221h5" stroke="#00ff38"/>
<path d="M1109 221h5" stroke="#00ff37"/>
<path d="M1114 221h5" stroke="#00ff36"/>
<path d="M1119 221h5" stroke="#00ff35"/>
<path d="M1124 221h5" stroke="#00ff34"/>
<path d="M1129 221h5" stroke="#0f3"/>
<path d="M1134 221h5" stroke="#00ff32"/>
<path d="M1139 221h5" stroke="#00ff30"/>
<path d="M1144 221h5" stroke="#00ff2f"/>
<path d="M1149 221h5" stroke="#00ff2e"/>
<path d="M1154 221h5" stroke="#00ff2d"/>
<path d="M1159 221h5" stroke="#00ff2c"/>
<path d="M1164 221h5" stroke="#00ff2b"/>
<path d="M1169 221h5" stroke="#00ff2a"/>
<path d="M1174 221h5" stroke="#00ff29"/>
<path d="M1179 221h5" stroke="#00ff27"/>
<path d="M1184 221h5" stroke="#00ff26"/>
<path d="M1189 221h5" stroke="#00ff25"/>
<path d="M1194 221h5" stroke="#00ff24"/>
<path d="M1199 221h5" stroke="#00ff23"/>
<path d="M1204 221h5" stroke="#00ff21"/>
<path d="M1209 221h5" stroke="#00ff20"/>
<path d="M1214 221h5" stroke="#00ff1f"/>
<path d="M1219 221h5" stroke="#00ff1e"/>
<path d="M1224 221h5" stroke="#00ff1d"/>
<path d="M1229 221h5" stroke="#00ff1b"/>
<path d="M1234 221h5" stroke="#00ff1a"/>
<path d="M1239 221h5" stroke="#00ff19"/>
<path d="M1244 221h5" stroke="#00ff18"/>
<path d="M1249 221h5" stroke="#02ff16"/>
<path d="M1254 221h5" stroke="#06ff15"/>
<path d="M1259 221h5" stroke="#0aff14"/>
<path d="M1264 221h5" stroke="#0eff13"/>
<path d="M1269 221h5" stroke="#12ff11"/>
<path d="M1274 221h5" stroke="#17ff10"/>
<path d="M1279 221h5" stroke="#1cff0f"/>
<path d="M1284 221h5" stroke="#22ff0d"/>
<path d="M1289 221h5" stroke="#27ff0c"/>
<path d="M1294 221h5" stroke="#2dff0b"/>
<path d="M1299 221h5" stroke="#32ff0a"/>
<path d="M1304 221h5" stroke="#39ff08"/>
<path d="M1309 221h5" stroke="#3fff07"/>
<path d="M1314 221h5" stroke="#45ff06"/>
<path d="M1319 221h5" stroke="#4cff05"/>
<path d="M1324 221h5" stroke="#53ff04"/>
<path d="M1329 221h5" stroke="#5aff03"/>
<path d="M1334 221h5" stroke="#61ff01"/>
<path d="M1339 221h5" stroke="#69ff01"/>
<path d="M1344 221h5" stroke="#70ff00"/>
<path d="M1349 221h5" stroke="#78ff00"/>
<path d="M1354 221h5" stroke="#80ff00"/>
<path d="M1359 221h5" stroke="#89ff00"/>
<path d="M1364 221h5" stroke="#91ff00"/>
<path d="M1369 221h5" stroke="#9aff00"/>
<path d="M1054 226h5" stroke="#00ff45"/>
<path d="M1059 226h5" stroke="#0f4"/>
<path d="M1064 226h5" stroke="#00ff43"/>
<path d="M1069 226h5" stroke="#00ff42"/>
<path d="M1074 226h5" stroke="#00ff41"/>
<path d="M1079 226h5" stroke="#00ff40"/>
<path d="M1084 226h5" stroke="#00ff3f"/>
<path d="M1089 226h5" stroke="#00ff3e"/>
<path d="M1094 226h5" stroke="#00ff3d"/>
<path d="M1099 226h5" stroke="#00ff3c"/>
<path d="M1104 226h5" stroke="#00ff3b"/>
<path d="M1109 226h5" stroke="#00ff3a"/>
<path d="M1114 226h5" stroke="#00ff39"/>
<path d="M1119 226h5" stroke="#00ff38"/>
<path d="M1124 226h5" stroke="#00ff37"/>
<path d="M1129 226h5" stroke="#00ff36"/>
<path d="M1134 226h5" stroke="#00ff35"/>
<path d="M1139 226h5" stroke="#0f3"/>
<path d="M1144 226h5" stroke="#00ff32"/>
<path d="M1149 226h5" stroke="#00ff31"/>
<path d="M1154 226h5" stroke="#00ff30"/>
<path d="M1159 226h5" stroke="#00ff2f"/>
<path d="M1164 226h5" stroke="#00ff2e"/>
<path d="M1169 226h5" stroke="#00ff2d"/>
<path d="M1174 226h5" stroke="#00ff2b"/>
<path d="M1179 226h5" stroke="#00ff2a"/>
<path d="M1184 226h5" stroke="#00ff29"/>
<path d="M1189 226h5" stroke="#00ff28"/>
<path d="M1194 226h5" stroke="#00ff27"/>
<path d="M1199 226h5" stroke="#00ff26"/>
<path d="M1204 226h5" stroke="#00ff24"/>
<path d="M1209 226h5" stroke="#00ff23"/>
<path d="M1214 226h5" stroke="#0f2"/>
<path d="M1219 226h5" stroke="#00ff21"/>
<path d="M1224 226h5" stroke="#00ff1f"/>
<path d="M1229 226h5" stroke="#00ff1e"/>
<path d="M1234 226h5" stroke="#00ff1d"/>
<path d="M1239 226h5" stroke="#00ff1c"/>
<path d="M1244 226h5" stroke="#00ff1a"/>
<path d="M1249 226h5" stroke="#03ff19"/>
<path d="M1254 226h5" stroke="#07ff18"/>
<path d="M1259 226h5" stroke="#0bff16"/>
<path d="M1264 226h5" stroke="#0fff15"/>
<path d="M1269 226h5" stroke="#14ff14"/>
<path d="M1274 226h5" stroke="#19ff13"/>
<path d="M1279 226h5" stroke="#1eff11"/>
<path d="M1284 226h5" stroke="#23ff10"/>
<path d="M1289 226h5" stroke="#29ff0f"/>
<path d="M1294 226h5" stroke="#2fff0d"/>
<path d="M1299 226h5" stroke="#35ff0c"/>
<path d="M1304 226h5" stroke="#3bff0b"/>
<path d="M1309 226h5" stroke="#42ff09"/>
<path d="M1314 226h5" stroke="#48ff08"/>
<path d="M1319 226h5" stroke="#4fff07"/>
<path d="M1324 226h5" stroke="#56ff06"/>
<path d="M1329 226h5" stroke="#5eff04"/>
<path d="M1334 226h5" stroke="#65ff03"/>
<path d="M1339 226h5" stroke="#6dff02"/>
<path d="M1344 226h5" stroke="#75ff01"/>
<path d="M1349 226h5" stroke="#7dff00"/>
<path d="M1354 226h5" stroke="#85ff00"/>
<path d="M1359 226h5" stroke="#8eff00"/>
<path d="M1364 226h5" stroke="#97ff00"/>
<path d="M1369 226h5" stroke="#a0ff00"/>
<path d="M1374 226h5" stroke="#a9ff00"/>
<path d="M1379 226h5" stroke="#b3ff00"/>
<path d="M1054 231h5" stroke="#00ff48"/>
<path d="M1059 231h5" stroke="#00ff47"/>
<path d="M1064 231h5" stroke="#00ff46"/>
<path d="M1069 231h5" stroke="#00ff45"/>
<path d="M1074 231h5" stroke="#0f4"/>
<path d="M1079 231h5" stroke="#00ff43"/>
<path d="M1084 231h5" stroke="#00ff42"/>
<path d="M1089 231h5" stroke="#00ff41"/>
<path d="M1094 231h5" stroke="#00ff40"/>
<path d="M1099 231h5" stroke="#00ff3f"/>
<path d="M1104 231h5" stroke="#00ff3e"/>
<path d="M1109 231h5" stroke="#00ff3d"/>
<path d="M1114 231h5" stroke="#00ff3c"/>
<path d="M1119 231h5" stroke="#00ff3b"/>
<path d="M1124 231h5" stroke="#00ff3a"/>
<path d="M1129 231h5" stroke="#00ff39"/>
<path d="M1134 231h5" stroke="#00ff38"/>
<path d="M1139 231h5" stroke="#00ff37"/>
<path d="M1144 231h5" stroke="#00ff36"/>
<path d="M1149 231h5" stroke="#00ff34"/>
<path d="M1154 231h5" stroke="#0f3"/>
<path d="M1159 231h5" stroke="#00ff32"/>
<path d="M1164 231h5" stroke="#00ff31"/>
<path d="M1169 231h5" stroke="#00ff30"/>
<path d="M1174 231h5" stroke="#00ff2f"/>
<path d="M1179 231h5" stroke="#00ff2d"/>
<path d="M1184 231h5" stroke="#00ff2c"/>
<path d="M1189 231h5" stroke="#00ff2b"/>
<path d="M1194 231h5" stroke="#00ff2a"/>
<path d="M1199 231h5" stroke="#00ff29"/>
<path d="M1204 231h5" stroke="#00ff27"/>
<path d="M1209 231h5" stroke="#00ff26"/>
<path d="M1214 231h5" stroke="#00ff25"/>
<path d="M1219 231h5" stroke="#00ff24"/>
<path d="M1224 231h5" stroke="#0f2"/>
<path d="M1229 231h5" stroke="#00ff21"/>
<path d="M1234 231h5" stroke="#00ff20"/>
<path d="M1239 231h5" stroke="#00ff1e"/>
<path d="M1244 231h5" stroke="#01ff1d"/>
<path d="M1249 231h5" stroke="#04ff1c"/>
<path d="M1254 231h5" stroke="#08ff1a"/>
<path d="M1259 231h5" stroke="#0cff19"/>
<path d="M1264 231h5" stroke="#11ff18"/>
<path d="M1269 231h5" stroke="#16ff16"/>
<path d="M1274 231h5" stroke="#1bff15"/>
<path d="M1279 231h5" stroke="#20ff14"/>
<path d="M1284 231h5" stroke="#26ff12"/>
<path d="M1289 231h5" stroke="#2bff11"/>
<path d="M1294 231h5" stroke="#31ff10"/>
<path d="M1299 231h5" stroke="#38ff0e"/>
<path d="M1304 231h5" stroke="#3eff0d"/>
<path d="M1309 231h5" stroke="#45ff0c"/>
<path d="M1314 231h5" stroke="#4cff0a"/>
<path d="M1319 231h5" stroke="#53ff09"/>
<path d="M1324 231h5" stroke="#5aff08"/>
<path d="M1329 231h5" stroke="#62ff06"/>
<path d="M1334 231h5" stroke="#69ff05"/>
<path d="M1339 231h5" stroke="#71ff04"/>
<path d="M1344 231h5" stroke="#79ff03"/>
<path d="M1349 231h5" stroke="#82ff02"/>
<path d="M1354 231h5" stroke="#8bff01"/>
<path d="M1359 231h5" stroke="#93ff00"/>
<path d="M1364 231h5" stroke="#9dff00"/>
<path d="M1369 231h5" stroke="#a6ff00"/>
<path d="M1374 231h5" stroke="#afff00"/>
<path d="M1379 231h5" stroke="#b9ff00"/>
<path d="M1384 231h5" stroke="#c3ff00"/>
<path d="M1054 236h5" stroke="#00ff4c"/>
<path d="M1059 236h5" stroke="#00ff4b"/>
<path d="M1064 236h5" stroke="#00ff4a"/>
<path d="M1069 236h5" stroke="#00ff49"/>
<path d="M1074 236h5" stroke="#00ff48"/>
<path d="M1079 236h5" stroke="#00ff47"/>
<path d="M1084 236h5" stroke="#00ff46"/>
<path d="M1089 236h5" stroke="#00ff45"/>
<path d="M1094 236h5" stroke="#0f4"/>
<path d="M1099 236h5" stroke="#00ff43"/>
<path d="M1104 236h5" stroke="#00ff42"/>
<path d="M1109 236h5" stroke="#00ff41"/>
<path d="M1114 236h5" stroke="#00ff3f"/>
<path d="M1119 236h5" stroke="#00ff3e"/>
<path d="M1124 236h5" stroke="#00ff3d"/>
<path d="M1129 236h5" stroke="#00ff3c"/>
<path d="M1134 236h5" stroke="#00ff3b"/>
<path d="M1139 236h5" stroke="#00ff3a"/>
<path d="M1144 236h5" stroke="#00ff39"/>
<path d="M1149 236h5" stroke="#00ff38"/>
<path d="M1154 236h5" stroke="#00ff37"/>
<path d="M1159 236h5" stroke="#00ff35"/>
<path d="M1164 236h5" stroke="#00ff34"/>
<path d="M1169 236h5" stroke="#0f3"/>
<path d="M1174 236h5" stroke="#00ff32"/>
<path d="M1179 236h5" stroke="#00ff31"/>
<path d="M1184 236h5" stroke="#00ff2f"/>
<path d="M1189 236h5" stroke="#00ff2e"/>
<path d="M1194 236h5" stroke="#00ff2d"/>
<path d="M1199 236h5" stroke="#00ff2c"/>
<path d="M1204 236h5" stroke="#00ff2a"/>
<path d="M1209 236h5" stroke="#00ff29"/>
<path d="M1214 236h5" stroke="#00ff28"/>
<path d="M1219 236h5" stroke="#00ff27"/>
<path d="M1224 236h5" stroke="#00ff25"/>
<path d="M1229 236h5" stroke="#00ff24"/>
<path d="M1234 236h5" stroke="#00ff23"/>
<path d="M1239 236h5" stroke="#00ff21"/>
<path d="M1244 236h5" stroke="#02ff20"/>
<path d="M1249 236h5" stroke="#05ff1f"/>
<path d="M1254 236h5" stroke="#09ff1d"/>
<path d="M1259 236h5" stroke="#0eff1c"/>
<path d="M1264 236h5" stroke="#12ff1b"/>
<path d="M1269 236h5" stroke="#17ff19"/>
<path d="M1274 236h5" stroke="#1dff18"/>
<path d="M1279 236h5" stroke="#22ff17"/>
<path d="M1284 236h5" stroke="#28ff15"/>
<path d="M1289 236h5" stroke="#2eff14"/>
<path d="M1294 236h5" stroke="#34ff12"/>
<path d="M1299 236h5" stroke="#3aff11"/>
<path d="M1304 236h5" stroke="#41ff10"/>
<path d="M1309 236h5" stroke="#48ff0e"/>
<path d="M1314 236h5" stroke="#4fff0d"/>
<path d="M1319 236h5" stroke="#56ff0b"/>
<path d="M1324 236h5" stroke="#5eff0a"/>
<path d="M1329 236h5" stroke="#66ff09"/>
<path d="M1334 236h5" stroke="#6eff07"/>
<path d="M1339 236h5" stroke="#76ff06"/>
<path d="M1344 236h5" stroke="#7eff05"/>
<path d="M1349 236h5" stroke="#87ff03"/>
<path d="M1354 236h5" stroke="#90ff02"/>
<path d="M1359 236h5" stroke="#99ff01"/>
<path d="M1364 236h5" stroke="#a3ff00"/>
<path d="M1369 236h5" stroke="#acff00"/>
<path d="M1374 236h5" stroke="#b6ff00"/>
<path d="M1379 236h5" stroke="#c0ff00"/>
<path d="M1384 236h5" stroke="#cbff00"/>
<path d="M1389 236h5" stroke="#d6ff00"/>
<path d="M1054 241h5" stroke="#00ff4f"/>
<path d="M1059 241h5" stroke="#00ff4e"/>
<path d="M1064 241h5" stroke="#00ff4d"/>
<path d="M1069 241h5" stroke="#00ff4c"/>
<path d="M1074 241h5" stroke="#00ff4b"/>
<path d="M1079 241h5" stroke="#00ff4a"/>
<path d="M1084 241h5" stroke="#00ff49"/>
<path d="M1089 241h5" stroke="#00ff48"/>
<path d="M1094 241h5" stroke="#00ff47"/>
<path d="M1099 241h5" stroke="#00ff46"/>
<path d="M1104 241h5" stroke="#00ff45"/>
<path d="M1109 241h5" stroke="#0f4"/>
<path d="M1114 241h5" stroke="#00ff43"/>
<path d="M1119 241h5" stroke="#00ff42"/>
<path d="M1124 241h5" stroke="#00ff41"/>
<path d="M1129 241h5" stroke="#00ff40"/>
<path d="M1134 241h5" stroke="#00ff3f"/>
<path d="M1139 241h5" stroke="#00ff3d"/>
<path d="M1144 241h5" stroke="#00ff3c"/>
<path d="M1149 241h5" stroke="#00ff3b"/>
<path d="M1154 241h5" stroke="#00ff3a"/>
<path d="M1159 241h5" stroke="#00ff39"/>
<path d="M1164 241h5" stroke="#00ff38"/>
<path d="M1169 241h5" stroke="#00ff36"/>
<path d="M1174 241h5" stroke="#00ff35"/>
<path d="M1179 241h5" stroke="#00ff34"/>
<path d="M1184 241h5" stroke="#0f3"/>
<path d="M1189 241h5" stroke="#00ff32"/>
<path d="M1194 241h5" stroke="#00ff30"/>
<path d="M1199 241h5" stroke="#00ff2f"/>
<path d="M1204 241h5" stroke="#00ff2e"/>
<path d="M1209 241h5" stroke="#00ff2c"/>
<path d="M1214 241h5" stroke="#00ff2b"/>
<path d="M1219 241h5" stroke="#00ff2a"/>
<path d="M1224 241h5" stroke="#00ff29"/>
<path d="M1229 241h5" stroke="#00ff27"/>
<path d="M1234 241h5" stroke="#00ff26"/>
<path d="M1239 241h5" stroke="#00ff25"/>
<path d="M1244 241h5" stroke="#03ff23"/>
<path d="M1249 241h5" stroke="#06ff22"/>
<path d="M1254 241h5" stroke="#0aff20"/>
<path d="M1259 241h5" stroke="#0fff1f"/>
<path d="M1264 241h5" stroke="#14ff1e"/>
<path d="M1269 241h5" stroke="#19ff1c"/>
<path d="M1274 241h5" stroke="#1eff1b"/>
<path d="M1279 241h5" stroke="#24ff19"/>
<path d="M1284 241h5" stroke="#2aff18"/>
<path d="M1289 241h5" stroke="#30ff17"/>
<path d="M1294 241h5" stroke="#37ff15"/>
<path d="M1299 241h5" stroke="#3dff14"/>
<path d="M1304 241h5" stroke="#44ff12"/>
<path d="M1309 241h5" stroke="#4bff11"/>
<path d="M1314 241h5" stroke="#53ff0f"/>
<path d="M1319 241h5" stroke="#5aff0e"/>
<path d="M1324 241h5" stroke="#62ff0c"/>
<path d="M1329 241h5" stroke="#6aff0b"/>
<path d="M1334 241h5" stroke="#72ff0a"/>
<path d="M1339 241h5" stroke="#7bff08"/>
<path d="M1344 241h5" stroke="#83ff07"/>
<path d="M1349 241h5" stroke="#8cff05"/>
<path d="M1354 241h5" stroke="#96ff04"/>
<path d="M1359 241h5" stroke="#9fff03"/>
<path d="M1364 241h5" stroke="#a9ff02"/>
<path d="M1369 241h5" stroke="#b3ff01"/>
<path d="M1374 241h5" stroke="#bdff00"/>
<path d="M1379 241h5" stroke="#c8ff00"/>
<path d="M1384 241h5" stroke="#d3ff00"/>
<path d="M1389 241h5" stroke="#deff00"/>
<path d="M1394 241h5" stroke="#e9ff00"/>
<path d="M1399 241h5" stroke="#f5ff00"/>
<path d="M1054 246h5" stroke="#00ff53"/>
<path d="M1059 246h5" stroke="#00ff52"/>
<path d="M1064 246h5" stroke="#00ff51"/>
<path d="M1069 246h5" stroke="#00ff50"/>
<path d="M1074 246h5" stroke="#00ff4f"/>
<path d="M1079 246h5" stroke="#00ff4e"/>
<path d="M1084 246h5" stroke="#00ff4d"/>
<path d="M1089 246h5" stroke="#00ff4c"/>
<path d="M1094 246h5" stroke="#00ff4b"/>
<path d="M1099 246h5" stroke="#00ff4a"/>
<path d="M1104 246h5" stroke="#00ff49"/>
<path d="M1109 246h5" stroke="#00ff48"/>
<path d="M1114 246h5" stroke="#00ff47"/>
<path d="M1119 246h5" stroke="#00ff46"/>
<path d="M1124 246h5" stroke="#0f4"/>
<path d="M1129 246h5" stroke="#00ff43"/>
<path d="M1134 246h5" stroke="#00ff42"/>
<path d="M1139 246h5" stroke="#00ff41"/>
<path d="M1144 246h5" stroke="#00ff40"/>
<path d="M1149 246h5" stroke="#00ff3f"/>
<path d="M1154 246h5" stroke="#00ff3e"/>
<path d="M1159 246h5" stroke="#00ff3c"/>
<path d="M1164 246h5" stroke="#00ff3b"/>
<path d="M1169 246h5" stroke="#00ff3a"/>
<path d="M1174 246h5" stroke="#00ff39"/>
<path d="M1179 246h5" stroke="#00ff38"/>
<path d="M1184 246h5" stroke="#00ff36"/>
<path d="M1189 246h5" stroke="#00ff35"/>
<path d="M1194 246h5" stroke="#00ff34"/>
<path d="M1199 246h5" stroke="#00ff32"/>
<path d="M1204 246h5" stroke="#00ff31"/>
<path d="M1209 246h5" stroke="#00ff30"/>
<path d="M1214 246h5" stroke="#00ff2f"/>
<path d="M1219 246h5" stroke="#00ff2d"/>
<path d="M1224 246h5" stroke="#00ff2c"/>
<path d="M1229 246h5" stroke="#00ff2b"/>
<path d="M1234 246h5" stroke="#00ff29"/>
<path d="M1239 246h5" stroke="#00ff28"/>
<path d="M1244 246h5" stroke="#03ff27"/>
<path d="M1249 246h5" stroke="#07ff25"/>
<path d="M1254 246h5" stroke="#0cff24"/>
<path d="M1259 246h5" stroke="#10ff22"/>
<path d="M1264 246h5" stroke="#15ff21"/>
<path d="M1269 246h5" stroke="#1bff1f"/>
<path d="M1274 246h5" stroke="#20ff1e"/>
<path d="M1279 246h5" stroke="#26ff1d"/>
<path d="M1284 246h5" stroke="#2cff1b"/>
<path d="M1289 246h5" stroke="#33ff1a"/>
<path d="M1294 246h5" stroke="#39ff18"/>
<path d="M1299 246h5" stroke="#40ff17"/>
<path d="M1304 246h5" stroke="#47ff15"/>
<path d="M1309 246h5" stroke="#4fff14"/>
<path d="M1314 246h5" stroke="#56ff12"/>
<path d="M1319 246h5" stroke="#5eff11"/>
<path d="M1324 246h5" stroke="#66ff0f"/>
<path d="M1329 246h5" stroke="#6eff0e"/>
<path d="M1334 246h5" stroke="#77ff0c"/>
<path d="M1339 246h5" stroke="#80ff0b"/>
<path d="M1344 246h5" stroke="#89ff09"/>
<path d="M1349 246h5" stroke="#92ff08"/>
<path d="M1354 246h5" stroke="#9cff06"/>
<path d="M1359 246h5" stroke="#a5ff05"/>
<path d="M1364 246h5" stroke="#b0ff04"/>
<path d="M1369 246h5" stroke="#baff02"/>
<path d="M1374 246h5" stroke="#c5ff01"/>
<path d="M1379 246h5" stroke="#d0ff00"/>
<path d="M1384 246h5" stroke="#dbff00"/>
<path d="M1389 246h5" stroke="#e6ff00"/>
<path d="M1394 246h5" stroke="#f2ff00"/>
<path d="M1399 246h5" stroke="#feff00"/>
<path d="M1404 246h5" stroke="#fff400"/>
<path d="M1059 251h5" stroke="#00ff56"/>
<path d="M1064 251h5" stroke="#0f5"/>
<path d="M1069 251h5" stroke="#00ff54"/>
<path d="M1074 251h5" stroke="#00ff53"/>
<path d="M1079 251h5" stroke="#00ff52"/>
<path d="M1084 251h5" stroke="#00ff51"/>
<path d="M1089 251h5" stroke="#00ff50"/>
<path d="M1094 251h5" stroke="#00ff4f"/>
<path d="M1099 251h5" stroke="#00ff4e"/>
<path d="M1104 251h5" stroke="#00ff4d"/>
<path d="M1109 251h5" stroke="#00ff4b"/>
<path d="M1114 251h5" stroke="#00ff4a"/>
<path d="M1119 251h5" stroke="#00ff49"/>
<path d="M1124 251h5" stroke="#00ff48"/>
<path d="M1129 251h5" stroke="#00ff47"/>
<path d="M1134 251h5" stroke="#00ff46"/>
<path d="M1139 251h5" stroke="#00ff45"/>
<path d="M1144 251h5" stroke="#0f4"/>
<path d="M1149 251h5" stroke="#00ff42"/>
<path d="M1154 251h5" stroke="#00ff41"/>
<path d="M1159 251h5" stroke="#00ff40"/>
<path d="M1164 251h5" stroke="#00ff3f"/>
<path d="M1169 251h5" stroke="#00ff3e"/>
<path d="M1174 251h5" stroke="#00ff3c"/>
<path d="M1179 251h5" stroke="#00ff3b"/>
<path d="M1184 251h5" stroke="#00ff3a"/>
<path d="M1189 251h5" stroke="#00ff39"/>
<path d="M1194 251h5" stroke="#00ff37"/>
<path d="M1199 251h5" stroke="#00ff36"/>
<path d="M1204 251h5" stroke="#00ff35"/>
<path d="M1209 251h5" stroke="#00ff34"/>
<path d="M1214 251h5" stroke="#00ff32"/>
<path d="M1219 251h5" stroke="#00ff31"/>
<path d="M1224 251h5" stroke="#00ff30"/>
<path d="M1229 251h5" stroke="#00ff2e"/>
<path d="M1234 251h5" stroke="#00ff2d"/>
<path d="M1239 251h5" stroke="#01ff2b"/>
<path d="M1244 251h5" stroke="#04ff2a"/>
<path d="M1249 251h5" stroke="#09ff29"/>
<path d="M1254 251h5" stroke="#0dff27"/>
<path d="M1259 251h5" stroke="#12ff26"/>
<path d="M1264 251h5" stroke="#17ff24"/>
<path d="M1269 251h5" stroke="#1dff23"/>
<path d="M1274 251h5" stroke="#23ff21"/>
<path d="M1279 251h5" stroke="#29ff20"/>
<path d="M1284 251h5" stroke="#2fff1e"/>
<path d="M1289 251h5" stroke="#36ff1d"/>
<path d="M1294 251h5" stroke="#3cff1b"/>
<path d="M1299 251h5" stroke="#44ff1a"/>
<path d="M1304 251h5" stroke="#4bff18"/>
<path d="M1309 251h5" stroke="#52ff17"/>
<path d="M1314 251h5" stroke="#5aff15"/>
<path d="M1319 251h5" stroke="#62ff14"/>
<path d="M1324 251h5" stroke="#6bff12"/>
<path d="M1329 251h5" stroke="#73ff11"/>
<path d="M1334 251h5" stroke="#7cff0f"/>
<path d="M1339 251h5" stroke="#85ff0d"/>
<path d="M1344 251h5" stroke="#8eff0c"/>
<path d="M1349 251h5" stroke="#98ff0a"/>
<path d="M1354 251h5" stroke="#a2ff09"/>
<path d="M1359 251h5" stroke="#acff07"/>
<path d="M1364 251h5" stroke="#b7ff06"/>
<path d="M1369 251h5" stroke="#c1ff04"/>
<path d="M1374 251h5" stroke="#ccff03"/>
<path d="M1379 251h5" stroke="#d8ff02"/>
<path d="M1384 251h5" stroke="#e3ff00"/>
<path d="M1389 251h5" stroke="#efff00"/>
<path d="M1394 251h5" stroke="#fcff00"/>
<path d="M1399 251h5" stroke="#fff600"/>
<path d="M1404 251h5" stroke="#ffea00"/>
<path d="M1409 251h5" stroke="#ffe000"/>
<path d="M1059 256h5" stroke="#00ff5a"/>
<path d="M1064 256h5" stroke="#00ff59"/>
<path d="M1069 256h5" stroke="#00ff58"/>
<path d="M1074 256h5" stroke="#00ff57"/>
<path d="M1079 256h5" stroke="#00ff56"/>
<path d="M1084 256h5" stroke="#0f5"/>
<path d="M1089 256h5" stroke="#00ff54"/>
<path d="M1094 256h5" stroke="#00ff53"/>
<path d="M1099 256h5" stroke="#00ff52"/>
<path d="M1104 256h5" stroke="#00ff51"/>
<path d="M1109 256h5" stroke="#00ff4f"/>
<path d="M1114 256h5" stroke="#00ff4e"/>
<path d="M1119 256h5" stroke="#00ff4d"/>
<path d="M1124 256h5" stroke="#00ff4c"/>
<path d="M1129 256h5" stroke="#00ff4b"/>
<path d="M1134 256h5" stroke="#00ff4a"/>
<path d="M1139 256h5" stroke="#00ff49"/>
<path d="M1144 256h5" stroke="#00ff48"/>
<path d="M1149 256h5" stroke="#00ff46"/>
<path d="M1154 256h5" stroke="#00ff45"/>
<path d="M1159 256h5" stroke="#0f4"/>
<path d="M1164 256h5" stroke="#00ff43"/>
<path d="M1169 256h5" stroke="#00ff42"/>
<path d="M1174 256h5" stroke="#00ff40"/>
<path d="M1179 256h5" stroke="#00ff3f"/>
<path d="M1184 256h5" stroke="#00ff3e"/>
<path d="M1189 256h5" stroke="#00ff3d"/>
<path d="M1194 256h5" stroke="#00ff3b"/>
<path d="M1199 256h5" stroke="#00ff3a"/>
<path d="M1204 256h5" stroke="#00ff39"/>
<path d="M1209 256h5" stroke="#00ff37"/>
<path d="M1214 256h5" stroke="#00ff36"/>
<path d="M1219 256h5" stroke="#00ff35"/>
<path d="M1224 256h5" stroke="#0f3"/>
<path d="M1229 256h5" stroke="#00ff32"/>
<path d="M1234 256h5" stroke="#00ff30"/>
<path d="M1239 256h5" stroke="#02ff2f"/>
<path d="M1244 256h5" stroke="#05ff2e"/>
<path d="M1249 256h5" stroke="#0aff2c"/>
<path d="M1254 256h5" stroke="#0fff2b"/>
<path d="M1259 256h5" stroke="#14ff29"/>
<path d="M1264 256h5" stroke="#19ff28"/>
<path d="M1269 256h5" stroke="#1fff26"/>
<path d="M1274 256h5" stroke="#25ff25"/>
<path d="M1279 256h5" stroke="#2bff23"/>
<path d="M1284 256h5" stroke="#32ff22"/>
<path d="M1289 256h5" stroke="#39ff20"/>
<path d="M1294 256h5" stroke="#40ff1f"/>
<path d="M1299 256h5" stroke="#47ff1d"/>
<path d="M1304 256h5" stroke="#4eff1c"/>
<path d="M1309 256h5" stroke="#56ff1a"/>
<path d="M1314 256h5" stroke="#5eff18"/>
<path d="M1319 256h5" stroke="#67ff17"/>
<path d="M1324 256h5" stroke="#6fff15"/>
<path d="M1329 256h5" stroke="#78ff14"/>
<path d="M1334 256h5" stroke="#81ff12"/>
<path d="M1339 256h5" stroke="#8bff10"/>
<path d="M1344 256h5" stroke="#94ff0f"/>
<path d="M1349 256h5" stroke="#9eff0d"/>
<path d="M1354 256h5" stroke="#a9ff0c"/>
<path d="M1359 256h5" stroke="#b3ff0a"/>
<path d="M1364 256h5" stroke="#beff08"/>
<path d="M1369 256h5" stroke="#c9ff07"/>
<path d="M1374 256h5" stroke="#d5ff05"/>
<path d="M1379 256h5" stroke="#e0ff04"/>
<path d="M1384 256h5" stroke="#edff02"/>
<path d="M1389 256h5" stroke="#f9ff01"/>
<path d="M1394 256h5" stroke="#fff800"/>
<path d="M1399 256h5" stroke="#ffed00"/>
<path d="M1404 256h5" stroke="#ffe100"/>
<path d="M1409 256h5" stroke="#ffd700"/>
<path d="M1414 256h5" stroke="#ffcd00"/>
<path d="M1419 256h5" stroke="#ffc400"/>
<path d="M1059 261h5" stroke="#00ff5e"/>
<path d="M1064 261h5" stroke="#00ff5d"/>
<path d="M1069 261h5" stroke="#00ff5c"/>
<path d="M1074 261h5" stroke="#00ff5b"/>
<path d="M1079 261h5" stroke="#00ff5a"/>
<path d="M1084 261h5" stroke="#00ff59"/>
<path d="M1089 261h5" stroke="#00ff58"/>
<path d="M1094 261h5" stroke="#00ff57"/>
<path d="M1099 261h5" stroke="#00ff56"/>
<path d="M1104 261h5" stroke="#0f5"/>
<path d="M1109 261h5" stroke="#00ff54"/>
<path d="M1114 261h5" stroke="#00ff52"/>
<path d="M1119 261h5" stroke="#00ff51"/>
<path d="M1124 261h5" stroke="#00ff50"/>
<path d="M1129 261h5" stroke="#00ff4f"/>
<path d="M1134 261h5" stroke="#00ff4e"/>
<path d="M1139 261h5" stroke="#00ff4d"/>
<path d="M1144 261h5" stroke="#00ff4c"/>
<path d="M1149 261h5" stroke="#00ff4a"/>
<path d="M1154 261h5" stroke="#00ff49"/>
<path d="M1159 261h5" stroke="#00ff48"/>
<path d="M1164 261h5" stroke="#00ff47"/>
<path d="M1169 261h5" stroke="#00ff46"/>
<path d="M1174 261h5" stroke="#0f4"/>
<path d="M1179 261h5" stroke="#00ff43"/>
<path d="M1184 261h5" stroke="#00ff42"/>
<path d="M1189 261h5" stroke="#00ff41"/>
<path d="M1194 261h5" stroke="#00ff3f"/>
<path d="M1199 261h5" stroke="#00ff3e"/>
<path d="M1204 261h5" stroke="#00ff3d"/>
<path d="M1209 261h5" stroke="#00ff3b"/>
<path d="M1214 261h5" stroke="#00ff3a"/>
<path d="M1219 261h5" stroke="#00ff39"/>
<path d="M1224 261h5" stroke="#00ff37"/>
<path d="M1229 261h5" stroke="#00ff36"/>
<path d="M1234 261h5" stroke="#00ff34"/>
<path d="M1239 261h5" stroke="#03ff33"/>
<path d="M1244 261h5" stroke="#07ff32"/>
<path d="M1249 261h5" stroke="#0bff30"/>
<path d="M1254 261h5" stroke="#10ff2f"/>
<path d="M1259 261h5" stroke="#15ff2d"/>
<path d="M1264 261h5" stroke="#1bff2c"/>
<path d="M1269 261h5" stroke="#21ff2a"/>
<path d="M1274 261h5" stroke="#27ff29"/>
<path d="M1279 261h5" stroke="#2eff27"/>
<path d="M1284 261h5" stroke="#35ff26"/>
<path d="M1289 261h5" stroke="#3cff24"/>
<path d="M1294 261h5" stroke="#43ff22"/>
<path d="M1299 261h5" stroke="#4aff21"/>
<path d="M1304 261h5" stroke="#52ff1f"/>
<path d="M1309 261h5" stroke="#5aff1e"/>
<path d="M1314 261h5" stroke="#63ff1c"/>
<path d="M1319 261h5" stroke="#6bff1a"/>
<path d="M1324 261h5" stroke="#74ff19"/>
<path d="M1329 261h5" stroke="#7dff17"/>
<path d="M1334 261h5" stroke="#87ff15"/>
<path d="M1339 261h5" stroke="#91ff14"/>
<path d="M1344 261h5" stroke="#9bff12"/>
<path d="M1349 261h5" stroke="#a5ff10"/>
<path d="M1354 261h5" stroke="#b0ff0f"/>
<path d="M1359 261h5" stroke="#bbff0d"/>
<path d="M1364 261h5" stroke="#c6ff0b"/>
<path d="M1369 261h5" stroke="#d1ff0a"/>
<path d="M1374 261h5" stroke="#ddff08"/>
<path d="M1379 261h5" stroke="#eaff06"/>
<path d="M1384 261h5" stroke="#f6ff05"/>
<path d="M1389 261h5" stroke="#fffb03"/>
<path d="M1394 261h5" stroke="#ffef02"/>
<path d="M1399 261h5" stroke="#ffe300"/>
<path d="M1404 261h5" stroke="#ffd900"/>
<path d="M1409 261h5" stroke="#ffcf00"/>
<path d="M1414 261h5" stroke="#ffc500"/>
<path d="M1419 261h5" stroke="#ffbd00"/>
<path d="M1424 261h5" stroke="#ffb400"/>
<path d="M1059 266h5" stroke="#00ff62"/>
<path d="M1064 266h5" stroke="#00ff61"/>
<path d="M1069 266h5" stroke="#00ff60"/>
<path d="M1074 266h5" stroke="#00ff5f"/>
<path d="M1079 266h5" stroke="#00ff5e"/>
<path d="M1084 266h5" stroke="#00ff5d"/>
<path d="M1089 266h5" stroke="#00ff5c"/>
<path d="M1094 266h5" stroke="#00ff5b"/>
<path d="M1099 266h5" stroke="#00ff5a"/>
<path d="M1104 266h5" stroke="#00ff59"/>
<path d="M1109 266h5" stroke="#00ff58"/>
<path d="M1114 266h5" stroke="#00ff57"/>
<path d="M1119 266h5" stroke="#00ff56"/>
<path d="M1124 266h5" stroke="#0f5"/>
<path d="M1129 266h5" stroke="#00ff53"/>
<path d="M1134 266h5" stroke="#00ff52"/>
<path d="M1139 266h5" stroke="#00ff51"/>
<path d="M1144 266h5" stroke="#00ff50"/>
<path d="M1149 266h5" stroke="#00ff4f"/>
<path d="M1154 266h5" stroke="#00ff4e"/>
<path d="M1159 266h5" stroke="#00ff4c"/>
<path d="M1164 266h5" stroke="#00ff4b"/>
<path d="M1169 266h5" stroke="#00ff4a"/>
<path d="M1174 266h5" stroke="#00ff49"/>
<path d="M1179 266h5" stroke="#00ff47"/>
<path d="M1184 266h5" stroke="#00ff46"/>
<path d="M1189 266h5" stroke="#00ff45"/>
<path d="M1194 266h5" stroke="#00ff43"/>
<path d="M1199 266h5" stroke="#00ff42"/>
<path d="M1204 266h5" stroke="#00ff41"/>
<path d="M1209 266h5" stroke="#00ff3f"/>
<path d="M1214 266h5" stroke="#00ff3e"/>
<path d="M1219 266h5" stroke="#00ff3d"/>
<path d="M1224 266h5" stroke="#00ff3b"/>
<path d="M1229 266h5" stroke="#00ff3a"/>
<path d="M1234 266h5" stroke="#00ff39"/>
<path d="M1239 266h5" stroke="#04ff37"/>
<path d="M1244 266h5" stroke="#08ff36"/>
<path d="M1249 266h5" stroke="#0dff34"/>
<path d="M1254 266h5" stroke="#12ff33"/>
<path d="M1259 266h5" stroke="#17ff31"/>
<path d="M1264 266h5" stroke="#1dff30"/>
<path d="M1269 266h5" stroke="#23ff2e"/>
<path d="M1274 266h5" stroke="#2aff2d"/>
<path d="M1279 266h5" stroke="#30ff2b"/>
<path d="M1284 266h5" stroke="#37ff29"/>
<path d="M1289 266h5" stroke="#3fff28"/>
<path d="M1294 266h5" stroke="#46ff26"/>
<path d="M1299 266h5" stroke="#4eff25"/>
<path d="M1304 266h5" stroke="#56ff23"/>
<path d="M1309 266h5" stroke="#5fff21"/>
<path d="M1314 266h5" stroke="#67ff20"/>
<path d="M1319 266h5" stroke="#70ff1e"/>
<path d="M1324 266h5" stroke="#79ff1c"/>
<path d="M1329 266h5" stroke="#83ff1b"/>
<path d="M1334 266h5" stroke="#8dff19"/>
<path d="M1339 266h5" stroke="#97ff17"/>
<path d="M1344 266h5" stroke="#a1ff15"/>
<path d="M1349 266h5" stroke="#acff14"/>
<path d="M1354 266h5" stroke="#b7ff12"/>
<path d="M1359 266h5" stroke="#c2ff10"/>
<path d="M1364 266h5" stroke="#ceff0e"/>
<path d="M1369 266h5" stroke="#daff0d"/>
<path d="M1374 266h5" stroke="#e7ff0b"/>
<path d="M1379 266h5" stroke="#f3ff09"/>
<path d="M1384 266h5" stroke="#fffe07"/>
<path d="M1389 266h5" stroke="#fff105"/>
<path d="M1394 266h5" stroke="#ffe504"/>
<path d="M1399 266h5" stroke="#ffda02"/>
<path d="M1404 266h5" stroke="#ffd001"/>
<path d="M1409 266h5" stroke="#ffc600"/>
<path d="M1414 266h5" stroke="#ffbd00"/>
<path d="M1419 266h5" stroke="#ffb500"/>
<path d="M1424 266h5" stroke="#ffad00"/>
<path d="M1429 266h5" stroke="#ffa600"/>
<path d="M1059 271h5" stroke="#00ff67"/>
<path d="M1064 271h5" stroke="#0f6"/>
<path d="M1069 271h5" stroke="#00ff65"/>
<path d="M1074 271h5" stroke="#00ff64"/>
<path d="M1079 271h5" stroke="#00ff63"/>
<path d="M1084 271h5" stroke="#00ff62"/>
<path d="M1089 271h5" stroke="#00ff61"/>
<path d="M1094 271h5" stroke="#00ff60"/>
<path d="M1099 271h5" stroke="#00ff5e"/>
<path d="M1104 271h5" stroke="#00ff5d"/>
<path d="M1109 271h5" stroke="#00ff5c"/>
<path d="M1114 271h5" stroke="#00ff5b"/>
<path d="M1119 271h5" stroke="#00ff5a"/>
<path d="M1124 271h5" stroke="#00ff59"/>
<path d="M1129 271h5" stroke="#00ff58"/>
<path d="M1134 271h5" stroke="#00ff57"/>
<path d="M1139 271h5" stroke="#00ff56"/>
<path d="M1144 271h5" stroke="#00ff54"/>
<path d="M1149 271h5" stroke="#00ff53"/>
<path d="M1154 271h5" stroke="#00ff52"/>
<path d="M1159 271h5" stroke="#00ff51"/>
<path d="M1164 271h5" stroke="#00ff50"/>
<path d="M1169 271h5" stroke="#00ff4e"/>
<path d="M1174 271h5" stroke="#00ff4d"/>
<path d="M1179 271h5" stroke="#00ff4c"/>
<path d="M1184 271h5" stroke="#00ff4b"/>
<path d="M1189 271h5" stroke="#00ff49"/>
<path d="M1194 271h5" stroke="#00ff48"/>
<path d="M1199 271h5" stroke="#00ff47"/>
<path d="M1204 271h5" stroke="#00ff45"/>
<path d="M1209 271h5" stroke="#0f4"/>
<path d="M1214 271h5" stroke="#00ff43"/>
<path d="M1219 271h5" stroke="#00ff41"/>
<path d="M1224 271h5" stroke="#00ff40"/>
<path d="M1229 271h5" stroke="#00ff3e"/>
<path d="M1234 271h5" stroke="#01ff3d"/>
<path d="M1239 271h5" stroke="#05ff3b"/>
<path d="M1244 271h5" stroke="#09ff3a"/>
<path d="M1249 271h5" stroke="#0eff38"/>
<path d="M1254 271h5" stroke="#13ff37"/>
<path d="M1259 271h5" stroke="#19ff35"/>
<path d="M1264 271h5" stroke="#1fff34"/>
<path d="M1269 271h5" stroke="#26ff32"/>
<path d="M1274 271h5" stroke="#2cff31"/>
<path d="M1279 271h5" stroke="#33ff2f"/>
<path d="M1284 271h5" stroke="#3bff2e"/>
<path d="M1289 271h5" stroke="#42ff2c"/>
<path d="M1294 271h5" stroke="#4aff2a"/>
<path d="M1299 271h5" stroke="#52ff29"/>
<path d="M1304 271h5" stroke="#5aff27"/>
<path d="M1309 271h5" stroke="#63ff25"/>
<path d="M1314 271h5" stroke="#6cff24"/>
<path d="M1319 271h5" stroke="#75ff22"/>
<path d="M1324 271h5" stroke="#7fff20"/>
<path d="M1329 271h5" stroke="#89ff1e"/>
<path d="M1334 271h5" stroke="#93ff1d"/>
<path d="M1339 271h5" stroke="#9eff1b"/>
<path d="M1344 271h5" stroke="#a8ff19"/>
<path d="M1349 271h5" stroke="#b3ff17"/>
<path d="M1354 271h5" stroke="#bfff15"/>
<path d="M1359 271h5" stroke="#cbff14"/>
<path d="M1364 271h5" stroke="#d7ff12"/>
<path d="M1369 271h5" stroke="#e3ff10"/>
<path d="M1374 271h5" stroke="#f0ff0e"/>
<path d="M1379 271h5" stroke="#feff0c"/>
<path d="M1384 271h5" stroke="#fff30a"/>
<path d="M1389 271h5" stroke="#ffe708"/>
<path d="M1394 271h5" stroke="#ffdc06"/>
<path d="M1399 271h5" stroke="#ffd104"/>
<path d="M1404 271h5" stroke="#ffc703"/>
<path d="M1409 271h5" stroke="#ffbe01"/>
<path d="M1414 271h5" stroke="#ffb600"/>
<path d="M1419 271h5" stroke="#ffad00"/>
<path d="M1424 271h5" stroke="#ffa600"/>
<path d="M1429 271h5" stroke="#ff9f00"/>
<path d="M1434 271h5" stroke="#ff9800"/>
<path d="M1439 271h5" stroke="#ff9100"/>
<path d="M1059 276h5" stroke="#00ff6b"/>
<path d="M1064 276h5" stroke="#00ff6a"/>
<path d="M1069 276h5" stroke="#00ff69"/>
<path d="M1074 276h5" stroke="#00ff68"/>
<path d="M1079 276h5" stroke="#00ff67"/>
<path d="M1084 276h5" stroke="#0f6"/>
<path d="M1089 276h5" stroke="#00ff65"/>
<path d="M1094 276h5" stroke="#00ff64"/>
<path d="M1099 276h5" stroke="#00ff63"/>
<path d="M1104 276h5" stroke="#00ff62"/>
<path d="M1109 276h5" stroke="#00ff61"/>
<path d="M1114 276h5" stroke="#00ff60"/>
<path d="M1119 276h5" stroke="#00ff5f"/>
<path d="M1124 276h5" stroke="#00ff5e"/>
<path d="M1129 276h5" stroke="#00ff5d"/>
<path d="M1134 276h5" stroke="#00ff5b"/>
<path d="M1139 276h5" stroke="#00ff5a"/>
<path d="M1144 276h5" stroke="#00ff59"/>
<path d="M1149 276h5" stroke="#00ff58"/>
<path d="M1154 276h5" stroke="#00ff57"/>
<path d="M1159 276h5" stroke="#0f5"/>
<path d="M1164 276h5" stroke="#00ff54"/>
<path d="M1169 276h5" stroke="#00ff53"/>
<path d="M1174 276h5" stroke="#00ff52"/>
<path d="M1179 276h5" stroke="#00ff50"/>
<path d="M1184 276h5" stroke="#00ff4f"/>
<path d="M1189 276h5" stroke="#00ff4e"/>
<path d="M1194 276h5" stroke="#00ff4d"/>
<path d="M1199 276h5" stroke="#00ff4b"/>
<path d="M1204 276h5" stroke="#00ff4a"/>
<path d="M1209 276h5" stroke="#00ff49"/>
<path d="M1214 276h5" stroke="#00ff47"/>
<path d="M1219 276h5" stroke="#00ff46"/>
<path d="M1224 276h5" stroke="#0f4"/>
<path d="M1229 276h5" stroke="#00ff43"/>
<path d="M1234 276h5" stroke="#02ff41"/>
<path d="M1239 276h5" stroke="#06ff40"/>
<path d="M1244 276h5" stroke="#0aff3f"/>
<path d="M1249 276h5" stroke="#10ff3d"/>
<path d="M1254 276h5" stroke="#15ff3b"/>
<path d="M1259 276h5" stroke="#1bff3a"/>
<path d="M1264 276h5" stroke="#22ff38"/>
<path d="M1269 276h5" stroke="#28ff37"/>
<path d="M1274 276h5" stroke="#2fff35"/>
<path d="M1279 276h5" stroke="#36ff34"/>
<path d="M1284 276h5" stroke="#3eff32"/>
<path d="M1289 276h5" stroke="#46ff30"/>
<path d="M1294 276h5" stroke="#4eff2f"/>
<path d="M1299 276h5" stroke="#56ff2d"/>
<path d="M1304 276h5" stroke="#5fff2b"/>
<path d="M1309 276h5" stroke="#68ff2a"/>
<path d="M1314 276h5" stroke="#71ff28"/>
<path d="M1319 276h5" stroke="#7bff26"/>
<path d="M1324 276h5" stroke="#85ff24"/>
<path d="M1329 276h5" stroke="#8fff22"/>
<path d="M1334 276h5" stroke="#9aff21"/>
<path d="M1339 276h5" stroke="#a5ff1f"/>
<path d="M1344 276h5" stroke="#b0ff1d"/>
<path d="M1349 276h5" stroke="#bbff1b"/>
<path d="M1354 276h5" stroke="#c7ff19"/>
<path d="M1359 276h5" stroke="#d4ff17"/>
<path d="M1364 276h5" stroke="#e0ff15"/>
<path d="M1369 276h5" stroke="#edff13"/>
<path d="M1374 276h5" stroke="#fbff12"/>
<path d="M1379 276h5" stroke="#fff60f"/>
<path d="M1384 276h5" stroke="#ffe90d"/>
<path d="M1389 276h5" stroke="#ffde0a"/>
<path d="M1394 276h5" stroke="#ffd308"/>
<path d="M1399 276h5" stroke="#ffc906"/>
<path d="M1404 276h5" stroke="#ffbf05"/>
<path d="M1409 276h5" stroke="#ffb603"/>
<path d="M1414 276h5" stroke="#ffae02"/>
<path d="M1419 276h5" stroke="#ffa601"/>
<path d="M1424 276h5" stroke="#ff9f00"/>
<path d="M1429 276h5" stroke="#ff9800"/>
<path d="M1434 276h5" stroke="#ff9100"/>
<path d="M1439 276h5" stroke="#ff8b00"/>
<path d="M1444 276h5" stroke="#ff8500"/>
<path d="M1059 281h5" stroke="#00ff70"/>
<path d="M1064 281h5" stroke="#00ff6f"/>
<path d="M1069 281h5" stroke="#00ff6e"/>
<path d="M1074 281h5" stroke="#00ff6d"/>
<path d="M1079 281h5" stroke="#00ff6c"/>
<path d="M1084 281h5" stroke="#00ff6b"/>
<path d="M1089 281h5" stroke="#00ff6a"/>
<path d="M1094 281h5" stroke="#00ff69"/>
<path d="M1099 281h5" stroke="#00ff68"/>
<path d="M1104 281h5" stroke="#00ff67"/>
<path d="M1109 281h5" stroke="#0f6"/>
<path d="M1114 281h5" stroke="#00ff65"/>
<path d="M1119 281h5" stroke="#00ff64"/>
<path d="M1124 281h5" stroke="#00ff63"/>
<path d="M1129 281h5" stroke="#00ff61"/>
<path d="M1134 281h5" stroke="#00ff60"/>
<path d="M1139 281h5" stroke="#00ff5f"/>
<path d="M1144 281h5" stroke="#00ff5e"/>
<path d="M1149 281h5" stroke="#00ff5d"/>
<path d="M1154 281h5" stroke="#00ff5c"/>
<path d="M1159 281h5" stroke="#00ff5a"/>
<path d="M1164 281h5" stroke="#00ff59"/>
<path d="M1169 281h5" stroke="#00ff58"/>
<path d="M1174 281h5" stroke="#00ff57"/>
<path d="M1179 281h5" stroke="#0f5"/>
<path d="M1184 281h5" stroke="#00ff54"/>
<path d="M1189 281h5" stroke="#00ff53"/>
<path d="M1194 281h5" stroke="#00ff51"/>
<path d="M1199 281h5" stroke="#00ff50"/>
<path d="M1204 281h5" stroke="#00ff4f"/>
<path d="M1209 281h5" stroke="#00ff4d"/>
<path d="M1214 281h5" stroke="#00ff4c"/>
<path d="M1219 281h5" stroke="#00ff4b"/>
<path d="M1224 281h5" stroke="#00ff49"/>
<path d="M1229 281h5" stroke="#00ff48"/>
<path d="M1234 281h5" stroke="#03ff46"/>
<path d="M1239 281h5" stroke="#07ff45"/>
<path d="M1244 281h5" stroke="#0cff43"/>
<path d="M1249 281h5" stroke="#11ff42"/>
<path d="M1254 281h5" stroke="#17ff40"/>
<path d="M1259 281h5" stroke="#1dff3f"/>
<path d="M1264 281h5" stroke="#24ff3d"/>
<path d="M1269 281h5" stroke="#2bff3c"/>
<path d="M1274 281h5" stroke="#32ff3a"/>
<path d="M1279 281h5" stroke="#3aff38"/>
<path d="M1284 281h5" stroke="#41ff37"/>
<path d="M1289 281h5" stroke="#49ff35"/>
<path d="M1294 281h5" stroke="#52ff33"/>
<path d="M1299 281h5" stroke="#5bff32"/>
<path d="M1304 281h5" stroke="#64ff30"/>
<path d="M1309 281h5" stroke="#6dff2e"/>
<path d="M1314 281h5" stroke="#77ff2c"/>
<path d="M1319 281h5" stroke="#81ff2a"/>
<path d="M1324 281h5" stroke="#8bff29"/>
<path d="M1329 281h5" stroke="#96ff27"/>
<path d="M1334 281h5" stroke="#a1ff25"/>
<path d="M1339 281h5" stroke="#acff23"/>
<path d="M1344 281h5" stroke="#b8ff21"/>
<path d="M1349 281h5" stroke="#c4ff1f"/>
<path d="M1354 281h5" stroke="#d0ff1d"/>
<path d="M1359 281h5" stroke="#ddff1b"/>
<path d="M1364 281h5" stroke="#eaff19"/>
<path d="M1369 281h5" stroke="#f8ff17"/>
<path d="M1374 281h5" stroke="#fff815"/>
<path d="M1379 281h5" stroke="#ffeb12"/>
<path d="M1384 281h5" stroke="#ffdf0f"/>
<path d="M1389 281h5" stroke="#ffd40d"/>
<path d="M1394 281h5" stroke="#ffca0b"/>
<path d="M1399 281h5" stroke="#ffc009"/>
<path d="M1404 281h5" stroke="#ffb707"/>
<path d="M1409 281h5" stroke="#ffae05"/>
<path d="M1414 281h5" stroke="#ffa704"/>
<path d="M1419 281h5" stroke="#ff9f02"/>
<path d="M1424 281h5" stroke="#ff9801"/>
<path d="M1429 281h5" stroke="#ff9100"/>
<path d="M1434 281h5" stroke="#ff8b00"/>
<path d="M1439 281h5" stroke="#ff8500"/>
<path d="M1444 281h5" stroke="#ff7f00"/>
<path d="M1449 281h5" stroke="#ff7a00"/>
<path d="M1059 286h5" stroke="#00ff75"/>
<path d="M1064 286h5" stroke="#00ff74"/>
<path d="M1069 286h5" stroke="#00ff73"/>
<path d="M1074 286h5" stroke="#00ff72"/>
<path d="M1079 286h5" stroke="#00ff71"/>
<path d="M1084 286h5" stroke="#00ff70"/>
<path d="M1089 286h5" stroke="#00ff6f"/>
<path d="M1094 286h5" stroke="#00ff6e"/>
<path d="M1099 286h5" stroke="#00ff6d"/>
<path d="M1104 286h5" stroke="#00ff6c"/>
<path d="M1109 286h5" stroke="#00ff6b"/>
<path d="M1114 286h5" stroke="#00ff6a"/>
<path d="M1119 286h5" stroke="#00ff69"/>
<path d="M1124 286h5" stroke="#00ff68"/>
<path d="M1129 286h5" stroke="#00ff67"/>
<path d="M1134 286h5" stroke="#00ff65"/>
<path d="M1139 286h5" stroke="#00ff64"/>
<path d="M1144 286h5" stroke="#00ff63"/>
<path d="M1149 286h5" stroke="#00ff62"/>
<path d="M1154 286h5" stroke="#00ff61"/>
<path d="M1159 286h5" stroke="#00ff60"/>
<path d="M1164 286h5" stroke="#00ff5e"/>
<path d="M1169 286h5" stroke="#00ff5d"/>
<path d="M1174 286h5" stroke="#00ff5c"/>
<path d="M1179 286h5" stroke="#00ff5b"/>
<path d="M1184 286h5" stroke="#00ff59"/>
<path d="M1189 286h5" stroke="#00ff58"/>
<path d="M1194 286h5" stroke="#00ff57"/>
<path d="M1199 286h5" stroke="#0f5"/>
<path d="M1204 286h5" stroke="#00ff54"/>
<path d="M1209 286h5" stroke="#00ff53"/>
<path d="M1214 286h5" stroke="#00ff51"/>
<path d="M1219 286h5" stroke="#00ff50"/>
<path d="M1224 286h5" stroke="#00ff4e"/>
<path d="M1229 286h5" stroke="#00ff4d"/>
<path d="M1234 286h5" stroke="#04ff4b"/>
<path d="M1239 286h5" stroke="#08ff4a"/>
<path d="M1244 286h5" stroke="#0eff48"/>
<path d="M1249 286h5" stroke="#13ff47"/>
<path d="M1254 286h5" stroke="#19ff45"/>
<path d="M1259 286h5" stroke="#20ff44"/>
<path d="M1264 286h5" stroke="#27ff42"/>
<path d="M1269 286h5" stroke="#2eff41"/>
<path d="M1274 286h5" stroke="#35ff3f"/>
<path d="M1279 286h5" stroke="#3dff3d"/>
<path d="M1284 286h5" stroke="#45ff3c"/>
<path d="M1289 286h5" stroke="#4dff3a"/>
<path d="M1294 286h5" stroke="#56ff38"/>
<path d="M1299 286h5" stroke="#5fff36"/>
<path d="M1304 286h5" stroke="#69ff35"/>
<path d="M1309 286h5" stroke="#72ff33"/>
<path d="M1314 286h5" stroke="#7cff31"/>
<path d="M1319 286h5" stroke="#87ff2f"/>
<path d="M1324 286h5" stroke="#92ff2d"/>
<path d="M1329 286h5" stroke="#9dff2c"/>
<path d="M1334 286h5" stroke="#a8ff2a"/>
<path d="M1339 286h5" stroke="#b4ff28"/>
<path d="M1344 286h5" stroke="#c0ff26"/>
<path d="M1349 286h5" stroke="#cdff24"/>
<path d="M1354 286h5" stroke="#d9ff22"/>
<path d="M1359 286h5" stroke="#e7ff20"/>
<path d="M1364 286h5" stroke="#f5ff1e"/>
<path d="M1369 286h5" stroke="#fffb1b"/>
<path d="M1374 286h5" stroke="#ffee18"/>
<path d="M1379 286h5" stroke="#ffe115"/>
<path d="M1384 286h5" stroke="#ffd612"/>
<path d="M1389 286h5" stroke="#ffcb0f"/>
<path d="M1394 286h5" stroke="#ffc10d"/>
<path d="M1399 286h5" stroke="#ffb80b"/>
<path d="M1404 286h5" stroke="#ffaf09"/>
<path d="M1409 286h5" stroke="#ffa707"/>
<path d="M1414 286h5" stroke="#ff9f05"/>
<path d="M1419 286h5" stroke="#ff9804"/>
<path d="M1424 286h5" stroke="#ff9103"/>
<path d="M1429 286h5" stroke="#ff8b02"/>
<path d="M1434 286h5" stroke="#ff8501"/>
<path d="M1439 286h5" stroke="#ff7f00"/>
<path d="M1444 286h5" stroke="#ff7a00"/>
<path d="M1449 286h5" stroke="#ff7500"/>
<path d="M1454 286h5" stroke="#ff7000"/>
<path d="M1459 286h5" stroke="#ff6b00"/>
<path d="M1064 291h5" stroke="#00ff79"/>
<path d="M1069 291h5" stroke="#00ff78"/>
<path d="M1074 291h10" stroke="#0f7"/>
<path d="M1084 291h5" stroke="#00ff76"/>
<path d="M1089 291h5" stroke="#00ff74"/>
<path d="M1094 291h5" stroke="#00ff73"/>
<path d="M1099 291h5" stroke="#00ff72"/>
<path d="M1104 291h5" stroke="#00ff71"/>
<path d="M1109 291h5" stroke="#00ff70"/>
<path d="M1114 291h5" stroke="#00ff6f"/>
<path d="M1119 291h5" stroke="#00ff6e"/>
<path d="M1124 291h5" stroke="#00ff6d"/>
<path d="M1129 291h5" stroke="#00ff6c"/>
<path d="M1134 291h5" stroke="#00ff6b"/>
<path d="M1139 291h5" stroke="#00ff6a"/>
<path d="M1144 291h5" stroke="#00ff69"/>
<path d="M1149 291h5" stroke="#00ff67"/>
<path d="M1154 291h5" stroke="#0f6"/>
<path d="M1159 291h5" stroke="#00ff65"/>
<path d="M1164 291h5" stroke="#00ff64"/>
<path d="M1169 291h5" stroke="#00ff62"/>
<path d="M1174 291h5" stroke="#00ff61"/>
<path d="M1179 291h5" stroke="#00ff60"/>
<path d="M1184 291h5" stroke="#00ff5f"/>
<path d="M1189 291h5" stroke="#00ff5d"/>
<path d="M1194 291h5" stroke="#00ff5c"/>
<path d="M1199 291h5" stroke="#00ff5b"/>
<path d="M1204 291h5" stroke="#00ff59"/>
<path d="M1209 291h5" stroke="#00ff58"/>
<path d="M1214 291h5" stroke="#00ff57"/>
<path d="M1219 291h5" stroke="#0f5"/>
<path d="M1224 291h5" stroke="#00ff54"/>
<path d="M1229 291h5" stroke="#01ff52"/>
<path d="M1234 291h5" stroke="#05ff51"/>
<path d="M1239 291h5" stroke="#0aff4f"/>
<path d="M1244 291h5" stroke="#0fff4e"/>
<path d="M1249 291h5" stroke="#15ff4c"/>
<path d="M1254 291h5" stroke="#1bff4b"/>
<path d="M1259 291h5" stroke="#22ff49"/>
<path d="M1264 291h5" stroke="#29ff48"/>
<path d="M1269 291h5" stroke="#31ff46"/>
<path d="M1274 291h5" stroke="#38ff44"/>
<path d="M1279 291h5" stroke="#41ff43"/>
<path d="M1284 291h5" stroke="#49ff41"/>
<path d="M1289 291h5" stroke="#52ff3f"/>
<path d="M1294 291h5" stroke="#5bff3d"/>
<path d="M1299 291h5" stroke="#64ff3c"/>
<path d="M1304 291h5" stroke="#6eff3a"/>
<path d="M1309 291h5" stroke="#78ff38"/>
<path d="M1314 291h5" stroke="#82ff36"/>
<path d="M1319 291h5" stroke="#8dff34"/>
<path d="M1324 291h5" stroke="#98ff33"/>
<path d="M1329 291h5" stroke="#a4ff31"/>
<path d="M1334 291h5" stroke="#b0ff2f"/>
<path d="M1339 291h5" stroke="#bcff2d"/>
<path d="M1344 291h5" stroke="#c9ff2b"/>
<path d="M1349 291h5" stroke="#d6ff29"/>
<path d="M1354 291h5" stroke="#e3ff27"/>
<path d="M1359 291h5" stroke="#f1ff25"/>
<path d="M1364 291h5" stroke="#fffe22"/>
<path d="M1369 291h5" stroke="#fff01f"/>
<path d="M1374 291h5" stroke="#ffe31b"/>
<path d="M1379 291h5" stroke="#ffd718"/>
<path d="M1384 291h5" stroke="#ffcc15"/>
<path d="M1389 291h5" stroke="#ffc212"/>
<path d="M1394 291h5" stroke="#ffb910"/>
<path d="M1399 291h5" stroke="#ffb00d"/>
<path d="M1404 291h5" stroke="#ffa70b"/>
<path d="M1409 291h5" stroke="#ff9f09"/>
<path d="M1414 291h5" stroke="#ff9807"/>
<path d="M1419 291h5" stroke="#ff9106"/>
<path d="M1424 291h5" stroke="#ff8b04"/>
<path d="M1429 291h5" stroke="#ff8403"/>
<path d="M1434 291h5" stroke="#ff7f02"/>
<path d="M1439 291h5" stroke="#ff7901"/>
<path d="M1444 291h5" stroke="#ff7400"/>
<path d="M1449 291h5" stroke="#ff6f00"/>
<path d="M1454 291h5" stroke="#ff6a00"/>
<path d="M1459 291h5" stroke="#f60"/>
<path d="M1464 291h5" stroke="#ff6200"/>
<path d="M1064 296h5" stroke="#00ff7f"/>
<path d="M1069 296h5" stroke="#00ff7e"/>
<path d="M1074 296h5" stroke="#00ff7d"/>
<path d="M1079 296h5" stroke="#00ff7c"/>
<path d="M1084 296h5" stroke="#00ff7b"/>
<path d="M1089 296h5" stroke="#00ff7a"/>
<path d="M1094 296h5" stroke="#00ff79"/>
<path d="M1099 296h5" stroke="#00ff78"/>
<path d="M1104 296h5" stroke="#0f7"/>
<path d="M1109 296h5" stroke="#00ff76"/>
<path d="M1114 296h5" stroke="#00ff75"/>
<path d="M1119 296h5" stroke="#00ff74"/>
<path d="M1124 296h5" stroke="#00ff73"/>
<path d="M1129 296h5" stroke="#00ff72"/>
<path d="M1134 296h5" stroke="#00ff70"/>
<path d="M1139 296h5" stroke="#00ff6f"/>
<path d="M1144 296h5" stroke="#00ff6e"/>
<path d="M1149 296h5" stroke="#00ff6d"/>
<path d="M1154 296h5" stroke="#00ff6c"/>
<path d="M1159 296h5" stroke="#00ff6b"/>
<path d="M1164 296h5" stroke="#00ff69"/>
<path d="M1169 296h5" stroke="#00ff68"/>
<path d="M1174 296h5" stroke="#00ff67"/>
<path d="M1179 296h5" stroke="#0f6"/>
<path d="M1184 296h5" stroke="#00ff64"/>
<path d="M1189 296h5" stroke="#00ff63"/>
<path d="M1194 296h5" stroke="#00ff62"/>
<path d="M1199 296h5" stroke="#00ff60"/>
<path d="M1204 296h5" stroke="#00ff5f"/>
<path d="M1209 296h5" stroke="#00ff5e"/>
<path d="M1214 296h5" stroke="#00ff5c"/>
<path d="M1219 296h5" stroke="#00ff5b"/>
<path d="M1224 296h5" stroke="#00ff59"/>
<path d="M1229 296h5" stroke="#02ff58"/>
<path d="M1234 296h5" stroke="#06ff57"/>
<path d="M1239 296h5" stroke="#0bff55"/>
<path d="M1244 296h5" stroke="#11ff54"/>
<path d="M1249 296h5" stroke="#17ff52"/>
<path d="M1254 296h5" stroke="#1eff50"/>
<path d="M1259 296h5" stroke="#25ff4f"/>
<path d="M1264 296h5" stroke="#2cff4d"/>
<path d="M1269 296h5" stroke="#34ff4c"/>
<path d="M1274 296h5" stroke="#3cff4a"/>
<path d="M1279 296h5" stroke="#44ff48"/>
<path d="M1284 296h5" stroke="#4dff47"/>
<path d="M1289 296h5" stroke="#56ff45"/>
<path d="M1294 296h5" stroke="#60ff43"/>
<path d="M1299 296h5" stroke="#69ff41"/>
<path d="M1304 296h5" stroke="#74ff40"/>
<path d="M1309 296h5" stroke="#7eff3e"/>
<path d="M1314 296h5" stroke="#89ff3c"/>
<path d="M1319 296h5" stroke="#94ff3a"/>
<path d="M1324 296h5" stroke="#a0ff38"/>
<path d="M1329 296h5" stroke="#acff36"/>
<path d="M1334 296h5" stroke="#b8ff34"/>
<path d="M1339 296h5" stroke="#c5ff32"/>
<path d="M1344 296h5" stroke="#d2ff30"/>
<path d="M1349 296h5" stroke="#e0ff2e"/>
<path d="M1354 296h5" stroke="#eeff2c"/>
<path d="M1359 296h5" stroke="#fdff2a"/>
<path d="M1364 296h5" stroke="#fff326"/>
<path d="M1369 296h5" stroke="#ffe522"/>
<path d="M1374 296h5" stroke="#ffd91e"/>
<path d="M1379 296h5" stroke="#ffce1b"/>
<path d="M1384 296h5" stroke="#ffc318"/>
<path d="M1389 296h5" stroke="#ffb915"/>
<path d="M1394 296h5" stroke="#ffb012"/>
<path d="M1399 296h5" stroke="#ffa810"/>
<path d="M1404 296h5" stroke="#ffa00d"/>
<path d="M1409 296h5" stroke="#ff980b"/>
<path d="M1414 296h5" stroke="#ff910a"/>
<path d="M1419 296h5" stroke="#ff8a08"/>
<path d="M1424 296h5" stroke="#ff8406"/>
<path d="M1429 296h5" stroke="#ff7e05"/>
<path d="M1434 296h5" stroke="#ff7904"/>
<path d="M1439 296h5" stroke="#ff7302"/>
<path d="M1444 296h5" stroke="#ff6e01"/>
<path d="M1449 296h5" stroke="#ff6a00"/>
<path d="M1454 296h5" stroke="#ff6500"/>
<path d="M1459 296h5" stroke="#ff6100"/>
<path d="M1464 296h5" stroke="#ff5d00"/>
<path d="M1469 296h5" stroke="#ff5900"/>
<path d="M1064 301h5" stroke="#00ff85"/>
<path d="M1069 301h5" stroke="#00ff84"/>
<path d="M1074 301h5" stroke="#00ff83"/>
<path d="M1079 301h5" stroke="#00ff82"/>
<path d="M1084 301h5" stroke="#00ff81"/>
<path d="M1089 301h5" stroke="#00ff80"/>
<path d="M1094 301h5" stroke="#00ff7f"/>
<path d="M1099 301h5" stroke="#00ff7e"/>
<path d="M1104 301h5" stroke="#00ff7d"/>
<path d="M1109 301h5" stroke="#00ff7c"/>
<path d="M1114 301h5" stroke="#00ff7b"/>
<path d="M1119 301h5" stroke="#00ff7a"/>
<path d="M1124 301h5" stroke="#00ff79"/>
<path d="M1129 301h5" stroke="#0f7"/>
<path d="M1134 301h5" stroke="#00ff76"/>
<path d="M1139 301h5" stroke="#00ff75"/>
<path d="M1144 301h5" stroke="#00ff74"/>
<path d="M1149 301h5" stroke="#00ff73"/>
<path d="M1154 301h5" stroke="#00ff72"/>
<path d="M1159 301h5" stroke="#00ff71"/>
<path d="M1164 301h5" stroke="#00ff6f"/>
<path d="M1169 301h5" stroke="#00ff6e"/>
<path d="M1174 301h5" stroke="#00ff6d"/>
<path d="M1179 301h5" stroke="#00ff6c"/>
<path d="M1184 301h5" stroke="#00ff6a"/>
<path d="M1189 301h5" stroke="#00ff69"/>
<path d="M1194 301h5" stroke="#00ff68"/>
<path d="M1199 301h5" stroke="#0f6"/>
<path d="M1204 301h5" stroke="#00ff65"/>
<path d="M1209 301h5" stroke="#00ff64"/>
<path d="M1214 301h5" stroke="#00ff62"/>
<path d="M1219 301h5" stroke="#00ff61"/>
<path d="M1224 301h5" stroke="#00ff60"/>
<path d="M1229 301h5" stroke="#03ff5e"/>
<path d="M1234 301h5" stroke="#07ff5d"/>
<path d="M1239 301h5" stroke="#0dff5b"/>
<path d="M1244 301h5" stroke="#13ff5a"/>
<path d="M1249 301h5" stroke="#19ff58"/>
<path d="M1254 301h5" stroke="#20ff57"/>
<path d="M1259 301h5" stroke="#28ff55"/>
<path d="M1264 301h5" stroke="#2fff53"/>
<path d="M1269 301h5" stroke="#37ff52"/>
<path d="M1274 301h5" stroke="#40ff50"/>
<path d="M1279 301h5" stroke="#48ff4e"/>
<path d="M1284 301h5" stroke="#51ff4d"/>
<path d="M1289 301h5" stroke="#5bff4b"/>
<path d="M1294 301h5" stroke="#65ff49"/>
<path d="M1299 301h5" stroke="#6fff47"/>
<path d="M1304 301h5" stroke="#7aff46"/>
<path d="M1309 301h5" stroke="#84ff44"/>
<path d="M1314 301h5" stroke="#90ff42"/>
<path d="M1319 301h5" stroke="#9cff40"/>
<path d="M1324 301h5" stroke="#a8ff3e"/>
<path d="M1329 301h5" stroke="#b4ff3c"/>
<path d="M1334 301h5" stroke="#c1ff3a"/>
<path d="M1339 301h5" stroke="#cfff38"/>
<path d="M1344 301h5" stroke="#dcff36"/>
<path d="M1349 301h5" stroke="#ebff34"/>
<path d="M1354 301h5" stroke="#faff32"/>
<path d="M1359 301h5" stroke="#fff62e"/>
<path d="M1364 301h5" stroke="#ffe829"/>
<path d="M1369 301h5" stroke="#ffdb25"/>
<path d="M1374 301h5" stroke="#ffcf21"/>
<path d="M1379 301h5" stroke="#ffc41e"/>
<path d="M1384 301h5" stroke="#ffba1a"/>
<path d="M1389 301h5" stroke="#ffb117"/>
<path d="M1394 301h5" stroke="#ffa815"/>
<path d="M1399 301h5" stroke="#ffa012"/>
<path d="M1404 301h5" stroke="#ff9810"/>
<path d="M1409 301h5" stroke="#ff910e"/>
<path d="M1414 301h5" stroke="#ff8a0c"/>
<path d="M1419 301h5" stroke="#ff840a"/>
<path d="M1424 301h5" stroke="#ff7e08"/>
<path d="M1429 301h5" stroke="#ff7807"/>
<path d="M1434 301h5" stroke="#ff7305"/>
<path d="M1439 301h5" stroke="#ff6e04"/>
<path d="M1444 301h5" stroke="#ff6903"/>
<path d="M1449 301h5" stroke="#ff6402"/>
<path d="M1454 301h5" stroke="#ff6001"/>
<path d="M1459 301h5" stroke="#ff5c00"/>
<path d="M1464 301h5" stroke="#ff5800"/>
<path d="M1469 301h5" stroke="#ff5400"/>
<path d="M1474 301h5" stroke="#ff5100"/>
<path d="M1479 301h5" stroke="#ff4d00"/>
<path d="M1064 306h5" stroke="#00ff8b"/>
<path d="M1069 306h5" stroke="#00ff8a"/>
<path d="M1074 306h5" stroke="#00ff89"/>
<path d="M1079 306h5" stroke="#0f8"/>
<path d="M1084 306h5" stroke="#00ff87"/>
<path d="M1089 306h5" stroke="#00ff86"/>
<path d="M1094 306h5" stroke="#00ff85"/>
<path d="M1099 306h5" stroke="#00ff84"/>
<path d="M1104 306h5" stroke="#00ff83"/>
<path d="M1109 306h5" stroke="#00ff82"/>
<path d="M1114 306h5" stroke="#00ff81"/>
<path d="M1119 306h5" stroke="#00ff80"/>
<path d="M1124 306h5" stroke="#00ff7f"/>
<path d="M1129 306h5" stroke="#00ff7e"/>
<path d="M1134 306h5" stroke="#00ff7d"/>
<path d="M1139 306h5" stroke="#00ff7b"/>
<path d="M1144 306h5" stroke="#00ff7a"/>
<path d="M1149 306h5" stroke="#00ff79"/>
<path d="M1154 306h5" stroke="#00ff78"/>
<path d="M1159 306h5" stroke="#0f7"/>
<path d="M1164 306h5" stroke="#00ff76"/>
<path d="M1169 306h5" stroke="#00ff74"/>
<path d="M1174 306h5" stroke="#00ff73"/>
<path d="M1179 306h5" stroke="#00ff72"/>
<path d="M1184 306h5" stroke="#00ff71"/>
<path d="M1189 306h5" stroke="#00ff6f"/>
<path d="M1194 306h5" stroke="#00ff6e"/>
<path d="M1199 306h5" stroke="#00ff6d"/>
<path d="M1204 306h5" stroke="#00ff6c"/>
<path d="M1209 306h5" stroke="#00ff6a"/>
<path d="M1214 306h5" stroke="#00ff69"/>
<path d="M1219 306h5" stroke="#00ff67"/>
<path d="M1224 306h5" stroke="#0f6"/>
<path d="M1229 306h5" stroke="#04ff65"/>
<path d="M1234 306h5" stroke="#09ff63"/>
<path d="M1239 306h5" stroke="#0fff62"/>
<path d="M1244 306h5" stroke="#15ff60"/>
<path d="M1249 306h5" stroke="#1cff5f"/>
<path d="M1254 306h5" stroke="#23ff5d"/>
<path d="M1259 306h5" stroke="#2aff5b"/>
<path d="M1264 306h5" stroke="#32ff5a"/>
<path d="M1269 306h5" stroke="#3bff58"/>
<path d="M1274 306h5" stroke="#44ff56"/>
<path d="M1279 306h5" stroke="#4dff55"/>
<path d="M1284 306h5" stroke="#56ff53"/>
<path d="M1289 306h5" stroke="#60ff51"/>
<path d="M1294 306h5" stroke="#6aff50"/>
<path d="M1299 306h5" stroke="#75ff4e"/>
<path d="M1304 306h5" stroke="#80ff4c"/>
<path d="M1309 306h5" stroke="#8bff4a"/>
<path d="M1314 306h5" stroke="#97ff48"/>
<path d="M1319 306h5" stroke="#a3ff46"/>
<path d="M1324 306h5" stroke="#b0ff44"/>
<path d="M1329 306h5" stroke="#bdff42"/>
<path d="M1334 306h5" stroke="#cbff40"/>
<path d="M1339 306h5" stroke="#d9ff3e"/>
<path d="M1344 306h5" stroke="#e7ff3c"/>
<path d="M1349 306h5" stroke="#f6ff3a"/>
<path d="M1354 306h5" stroke="#fff836"/>
<path d="M1359 306h5" stroke="#ffea31"/>
<path d="M1364 306h5" stroke="#ffdd2c"/>
<path d="M1369 306h5" stroke="#ffd128"/>
<path d="M1374 306h5" stroke="#ffc624"/>
<path d="M1379 306h5" stroke="#ffbb21"/>
<path d="M1384 306h5" stroke="#ffb11d"/>
<path d="M1389 306h5" stroke="#ffa81a"/>
<path d="M1394 306h5" stroke="#ffa017"/>
<path d="M1399 306h5" stroke="#ff9815"/>
<path d="M1404 306h5" stroke="#ff9112"/>
<path d="M1409 306h5" stroke="#ff8a10"/>
<path d="M1414 306h5" stroke="#ff830e"/>
<path d="M1419 306h5" stroke="#ff7d0c"/>
<path d="M1424 306h5" stroke="#ff780a"/>
<path d="M1429 306h5" stroke="#ff7209"/>
<path d="M1434 306h5" stroke="#ff6d07"/>
<path d="M1439 306h5" stroke="#ff6806"/>
<path d="M1444 306h5" stroke="#ff6404"/>
<path d="M1449 306h5" stroke="#ff5f03"/>
<path d="M1454 306h5" stroke="#ff5b02"/>
<path d="M1459 306h5" stroke="#ff5701"/>
<path d="M1464 306h5" stroke="#ff5300"/>
<path d="M1469 306h5" stroke="#ff5000"/>
<path d="M1474 306h5" stroke="#ff4c00"/>
<path d="M1479 306h5" stroke="#ff4900"/>
<path d="M1484 306h5" stroke="#ff4600"/>
<path d="M1064 311h5" stroke="#00ff91"/>
<path d="M1069 311h5" stroke="#00ff90"/>
<path d="M1074 311h5" stroke="#00ff8f"/>
<path d="M1079 311h5" stroke="#00ff8e"/>
<path d="M1084 311h5" stroke="#00ff8d"/>
<path d="M1089 311h5" stroke="#00ff8c"/>
<path d="M1094 311h5" stroke="#00ff8b"/>
<path d="M1099 311h5" stroke="#00ff8a"/>
<path d="M1104 311h5" stroke="#00ff89"/>
<path d="M1109 311h5" stroke="#0f8"/>
<path d="M1114 311h5" stroke="#00ff87"/>
<path d="M1119 311h5" stroke="#00ff86"/>
<path d="M1124 311h5" stroke="#00ff85"/>
<path d="M1129 311h5" stroke="#00ff84"/>
<path d="M1134 311h5" stroke="#00ff83"/>
<path d="M1139 311h5" stroke="#00ff82"/>
<path d="M1144 311h5" stroke="#00ff81"/>
<path d="M1149 311h5" stroke="#00ff80"/>
<path d="M1154 311h5" stroke="#00ff7f"/>
<path d="M1159 311h5" stroke="#00ff7d"/>
<path d="M1164 311h5" stroke="#00ff7c"/>
<path d="M1169 311h5" stroke="#00ff7b"/>
<path d="M1174 311h5" stroke="#00ff7a"/>
<path d="M1179 311h5" stroke="#00ff79"/>
<path d="M1184 311h5" stroke="#0f7"/>
<path d="M1189 311h5" stroke="#00ff76"/>
<path d="M1194 311h5" stroke="#00ff75"/>
<path d="M1199 311h5" stroke="#00ff74"/>
<path d="M1204 311h5" stroke="#00ff72"/>
<path d="M1209 311h5" stroke="#00ff71"/>
<path d="M1214 311h5" stroke="#00ff70"/>
<path d="M1219 311h5" stroke="#00ff6e"/>
<path d="M1224 311h5" stroke="#01ff6d"/>
<path d="M1229 311h5" stroke="#05ff6b"/>
<path d="M1234 311h5" stroke="#0bff6a"/>
<path d="M1239 311h5" stroke="#11ff68"/>
<path d="M1244 311h5" stroke="#17ff67"/>
<path d="M1249 311h5" stroke="#1eff65"/>
<path d="M1254 311h5" stroke="#26ff64"/>
<path d="M1259 311h5" stroke="#2eff62"/>
<path d="M1264 311h5" stroke="#36ff61"/>
<path d="M1269 311h5" stroke="#3fff5f"/>
<path d="M1274 311h5" stroke="#48ff5d"/>
<path d="M1279 311h5" stroke="#51ff5c"/>
<path d="M1284 311h5" stroke="#5bff5a"/>
<path d="M1289 311h5" stroke="#65ff58"/>
<path d="M1294 311h5" stroke="#70ff56"/>
<path d="M1299 311h5" stroke="#7bff55"/>
<path d="M1304 311h5" stroke="#87ff53"/>
<path d="M1309 311h5" stroke="#93ff51"/>
<path d="M1314 311h5" stroke="#9fff4f"/>
<path d="M1319 311h5" stroke="#acff4d"/>
<path d="M1324 311h5" stroke="#b9ff4b"/>
<path d="M1329 311h5" stroke="#c7ff49"/>
<path d="M1334 311h5" stroke="#d5ff47"/>
<path d="M1339 311h5" stroke="#e4ff45"/>
<path d="M1344 311h5" stroke="#f3ff43"/>
<path d="M1349 311h5" stroke="#fffc40"/>
<path d="M1354 311h5" stroke="#ffed3a"/>
<path d="M1359 311h5" stroke="#ffdf35"/>
<path d="M1364 311h5" stroke="#ffd230"/>
<path d="M1369 311h5" stroke="#ffc72b"/>
<path d="M1374 311h5" stroke="#ffbc27"/>
<path d="M1379 311h5" stroke="#ffb224"/>
<path d="M1384 311h5" stroke="#ffa920"/>
<path d="M1389 311h5" stroke="#ffa01d"/>
<path d="M1394 311h5" stroke="#ff981a"/>
<path d="M1399 311h5" stroke="#ff9117"/>
<path d="M1404 311h5" stroke="#ff8a15"/>
<path d="M1409 311h5" stroke="#ff8312"/>
<path d="M1414 311h5" stroke="#ff7d10"/>
<path d="M1419 311h5" stroke="#ff770e"/>
<path d="M1424 311h5" stroke="#ff710c"/>
<path d="M1429 311h5" stroke="#ff6c0a"/>
<path d="M1434 311h5" stroke="#ff6709"/>
<path d="M1439 311h5" stroke="#ff6307"/>
<path d="M1444 311h5" stroke="#ff5e06"/>
<path d="M1449 311h5" stroke="#ff5a05"/>
<path d="M1454 311h5" stroke="#ff5604"/>
<path d="M1459 311h5" stroke="#ff5202"/>
<path d="M1464 311h5" stroke="#ff4f02"/>
<path d="M1469 311h5" stroke="#ff4b01"/>
<path d="M1474 311h5" stroke="#ff4800"/>
<path d="M1479 311h5" stroke="#ff4500"/>
<path d="M1484 311h5" stroke="#ff4200"/>
<path d="M1489 311h5" stroke="#ff3f00"/>
<path d="M1064 316h10" stroke="#00ff97"/>
<path d="M1074 316h5" stroke="#00ff96"/>
<path d="M1079 316h5" stroke="#00ff95"/>
<path d="M1084 316h5" stroke="#00ff94"/>
<path d="M1089 316h5" stroke="#00ff93"/>
<path d="M1094 316h5" stroke="#00ff92"/>
<path d="M1099 316h5" stroke="#00ff91"/>
<path d="M1104 316h5" stroke="#00ff90"/>
<path d="M1109 316h5" stroke="#00ff8f"/>
<path d="M1114 316h5" stroke="#00ff8e"/>
<path d="M1119 316h5" stroke="#00ff8d"/>
<path d="M1124 316h5" stroke="#00ff8c"/>
<path d="M1129 316h5" stroke="#00ff8b"/>
<path d="M1134 316h5" stroke="#00ff8a"/>
<path d="M1139 316h5" stroke="#00ff89"/>
<path d="M1144 316h5" stroke="#0f8"/>
<path d="M1149 316h5" stroke="#00ff87"/>
<path d="M1154 316h5" stroke="#00ff86"/>
<path d="M1159 316h5" stroke="#00ff84"/>
<path d="M1164 316h5" stroke="#00ff83"/>
<path d="M1169 316h5" stroke="#00ff82"/>
<path d="M1174 316h5" stroke="#00ff81"/>
<path d="M1179 316h5" stroke="#00ff80"/>
<path d="M1184 316h5" stroke="#00ff7f"/>
<path d="M1189 316h5" stroke="#00ff7d"/>
<path d="M1194 316h5" stroke="#00ff7c"/>
<path d="M1199 316h5" stroke="#00ff7b"/>
<path d="M1204 316h5" stroke="#00ff79"/>
<path d="M1209 316h5" stroke="#00ff78"/>
<path d="M1214 316h5" stroke="#0f7"/>
<path d="M1219 316h5" stroke="#00ff75"/>
<path d="M1224 316h5" stroke="#02ff74"/>
<path d="M1229 316h5" stroke="#07ff73"/>
<path d="M1234 316h5" stroke="#0cff71"/>
<path d="M1239 316h5" stroke="#13ff70"/>
<path d="M1244 316h5" stroke="#1aff6e"/>
<path d="M1249 316h5" stroke="#21ff6d"/>
<path d="M1254 316h5" stroke="#29ff6b"/>
<path d="M1259 316h5" stroke="#31ff6a"/>
<path d="M1264 316h5" stroke="#3aff68"/>
<path d="M1269 316h5" stroke="#43ff66"/>
<path d="M1274 316h5" stroke="#4cff65"/>
<path d="M1279 316h5" stroke="#56ff63"/>
<path d="M1284 316h5" stroke="#60ff61"/>
<path d="M1289 316h5" stroke="#6bff60"/>
<path d="M1294 316h5" stroke="#76ff5e"/>
<path d="M1299 316h5" stroke="#82ff5c"/>
<path d="M1304 316h5" stroke="#8eff5a"/>
<path d="M1309 316h5" stroke="#9aff58"/>
<path d="M1314 316h5" stroke="#a7ff56"/>
<path d="M1319 316h5" stroke="#b5ff54"/>
<path d="M1324 316h5" stroke="#c2ff52"/>
<path d="M1329 316h5" stroke="#d1ff50"/>
<path d="M1334 316h5" stroke="#e0ff4e"/>
<path d="M1339 316h5" stroke="#efff4c"/>
<path d="M1344 316h5" stroke="#ffff4a"/>
<path d="M1349 316h5" stroke="#ffef44"/>
<path d="M1354 316h5" stroke="#ffe13e"/>
<path d="M1359 316h5" stroke="#ffd438"/>
<path d="M1364 316h5" stroke="#ffc833"/>
<path d="M1369 316h5" stroke="#ffbd2f"/>
<path d="M1374 316h5" stroke="#ffb32a"/>
<path d="M1379 316h5" stroke="#ffa926"/>
<path d="M1384 316h5" stroke="#ffa123"/>
<path d="M1389 316h5" stroke="#ff9820"/>
<path d="M1394 316h5" stroke="#ff911d"/>
<path d="M1399 316h5" stroke="#ff891a"/>
<path d="M1404 316h5" stroke="#ff8317"/>
<path d="M1409 316h5" stroke="#ff7c15"/>
<path d="M1414 316h5" stroke="#ff7612"/>
<path d="M1419 316h5" stroke="#ff7110"/>
<path d="M1424 316h5" stroke="#ff6c0e"/>
<path d="M1429 316h5" stroke="#ff670c"/>
<path d="M1434 316h5" stroke="#ff620b"/>
<path d="M1439 316h5" stroke="#ff5d09"/>
<path d="M1444 316h5" stroke="#ff5908"/>
<path d="M1449 316h5" stroke="#ff5506"/>
<path d="M1454 316h5" stroke="#ff5105"/>
<path d="M1459 316h5" stroke="#ff4e04"/>
<path d="M1464 316h5" stroke="#ff4a03"/>
<path d="M1469 316h5" stroke="#ff4702"/>
<path d="M1474 316h5" stroke="#ff4401"/>
<path d="M1479 316h5" stroke="#ff4100"/>
<path d="M1484 316h5" stroke="#ff3e00"/>
<path d="M1489 316h5" stroke="#ff3b00"/>
<path d="M1494 316h5" stroke="#ff3900"/>
<path d="M1069 321h10" stroke="#00ff9d"/>
<path d="M1079 321h5" stroke="#00ff9c"/>
<path d="M1084 321h5" stroke="#00ff9b"/>
<path d="M1089 321h5" stroke="#00ff9a"/>
<path d="M1094 321h5" stroke="#0f9"/>
<path d="M1099 321h5" stroke="#00ff98"/>
<path d="M1104 321h5" stroke="#00ff97"/>
<path d="M1109 321h5" stroke="#00ff96"/>
<path d="M1114 321h5" stroke="#00ff95"/>
<path d="M1119 321h5" stroke="#00ff94"/>
<path d="M1124 321h5" stroke="#00ff93"/>
<path d="M1129 321h5" stroke="#00ff92"/>
<path d="M1134 321h5" stroke="#00ff91"/>
<path d="M1139 321h5" stroke="#00ff90"/>
<path d="M1144 321h5" stroke="#00ff8f"/>
<path d="M1149 321h5" stroke="#00ff8e"/>
<path d="M1154 321h5" stroke="#00ff8d"/>
<path d="M1159 321h5" stroke="#00ff8c"/>
<path d="M1164 321h5" stroke="#00ff8b"/>
<path d="M1169 321h5" stroke="#00ff8a"/>
<path d="M1174 321h5" stroke="#0f8"/>
<path d="M1179 321h5" stroke="#00ff87"/>
<path d="M1184 321h5" stroke="#00ff86"/>
<path d="M1189 321h5" stroke="#00ff85"/>
<path d="M1194 321h5" stroke="#00ff84"/>
<path d="M1199 321h5" stroke="#00ff82"/>
<path d="M1204 321h5" stroke="#00ff81"/>
<path d="M1209 321h5" stroke="#00ff80"/>
<path d="M1214 321h5" stroke="#00ff7e"/>
<path d="M1219 321h5" stroke="#00ff7d"/>
<path d="M1224 321h5" stroke="#03ff7c"/>
<path d="M1229 321h5" stroke="#08ff7a"/>
<path d="M1234 321h5" stroke="#0eff79"/>
<path d="M1239 321h5" stroke="#15ff77"/>
<path d="M1244 321h5" stroke="#1cff76"/>
<path d="M1249 321h5" stroke="#24ff74"/>
<path d="M1254 321h5" stroke="#2cff73"/>
<path d="M1259 321h5" stroke="#35ff71"/>
<path d="M1264 321h5" stroke="#3eff70"/>
<path d="M1269 321h5" stroke="#47ff6e"/>
<path d="M1274 321h5" stroke="#51ff6d"/>
<path d="M1279 321h5" stroke="#5bff6b"/>
<path d="M1284 321h5" stroke="#66ff69"/>
<path d="M1289 321h5" stroke="#71ff67"/>
<path d="M1294 321h5" stroke="#7dff66"/>
<path d="M1299 321h5" stroke="#89ff64"/>
<path d="M1304 321h5" stroke="#96ff62"/>
<path d="M1309 321h5" stroke="#a3ff60"/>
<path d="M1314 321h5" stroke="#b0ff5e"/>
<path d="M1319 321h5" stroke="#beff5c"/>
<path d="M1324 321h5" stroke="#cdff5a"/>
<path d="M1329 321h5" stroke="#dcff58"/>
<path d="M1334 321h5" stroke="#ebff56"/>
<path d="M1339 321h5" stroke="#fcff54"/>
<path d="M1344 321h5" stroke="#fff24e"/>
<path d="M1349 321h5" stroke="#ffe347"/>
<path d="M1354 321h5" stroke="#ffd641"/>
<path d="M1359 321h5" stroke="#ffca3c"/>
<path d="M1364 321h5" stroke="#ffbe36"/>
<path d="M1369 321h5" stroke="#ffb432"/>
<path d="M1374 321h5" stroke="#ffaa2d"/>
<path d="M1379 321h5" stroke="#ffa129"/>
<path d="M1384 321h5" stroke="#ff9826"/>
<path d="M1389 321h5" stroke="#ff9022"/>
<path d="M1394 321h5" stroke="#ff891f"/>
<path d="M1399 321h5" stroke="#ff821c"/>
<path d="M1404 321h5" stroke="#ff7c19"/>
<path d="M1409 321h5" stroke="#ff7617"/>
<path d="M1414 321h5" stroke="#ff7015"/>
<path d="M1419 321h5" stroke="#ff6b12"/>
<path d="M1424 321h5" stroke="#ff6610"/>
<path d="M1429 321h5" stroke="#ff610e"/>
<path d="M1434 321h5" stroke="#ff5c0d"/>
<path d="M1439 321h5" stroke="#ff580b"/>
<path d="M1444 321h5" stroke="#ff5409"/>
<path d="M1449 321h5" stroke="#ff5008"/>
<path d="M1454 321h5" stroke="#ff4d07"/>
<path d="M1459 321h5" stroke="#ff4905"/>
<path d="M1464 321h5" stroke="#ff4604"/>
<path d="M1469 321h5" stroke="#ff4303"/>
<path d="M1474 321h5" stroke="#ff4002"/>
<path d="M1479 321h5" stroke="#ff3d01"/>
<path d="M1484 321h5" stroke="#ff3a01"/>
<path d="M1489 321h5" stroke="#ff3800"/>
<path d="M1494 321h5" stroke="#ff3500"/>
<path d="M1499 321h5" stroke="#f30"/>
<path d="M1504 321h5" stroke="#ff3000"/>
<path d="M1069 326h5" stroke="#00ffa5"/>
<path d="M1074 326h5" stroke="#00ffa4"/>
<path d="M1079 326h5" stroke="#00ffa3"/>
<path d="M1084 326h5" stroke="#00ffa2"/>
<path d="M1089 326h5" stroke="#00ffa1"/>
<path d="M1094 326h5" stroke="#00ffa0"/>
<path d="M1099 326h10" stroke="#00ff9f"/>
<path d="M1109 326h5" stroke="#00ff9e"/>
<path d="M1114 326h5" stroke="#00ff9d"/>
<path d="M1119 326h5" stroke="#00ff9c"/>
<path d="M1124 326h5" stroke="#00ff9b"/>
<path d="M1129 326h5" stroke="#00ff9a"/>
<path d="M1134 326h5" stroke="#0f9"/>
<path d="M1139 326h5" stroke="#00ff98"/>
<path d="M1144 326h5" stroke="#00ff97"/>
<path d="M1149 326h5" stroke="#00ff96"/>
<path d="M1154 326h5" stroke="#00ff95"/>
<path d="M1159 326h5" stroke="#00ff94"/>
<path d="M1164 326h5" stroke="#00ff92"/>
<path d="M1169 326h5" stroke="#00ff91"/>
<path d="M1174 326h5" stroke="#00ff90"/>
<path d="M1179 326h5" stroke="#00ff8f"/>
<path d="M1184 326h5" stroke="#00ff8e"/>
<path d="M1189 326h5" stroke="#00ff8d"/>
<path d="M1194 326h5" stroke="#00ff8c"/>
<path d="M1199 326h5" stroke="#00ff8a"/>
<path d="M1204 326h5" stroke="#00ff89"/>
<path d="M1209 326h5" stroke="#0f8"/>
<path d="M1214 326h5" stroke="#00ff87"/>
<path d="M1219 326h5" stroke="#00ff85"/>
<path d="M1224 326h5" stroke="#04ff84"/>
<path d="M1229 326h5" stroke="#0aff82"/>
<path d="M1234 326h5" stroke="#10ff81"/>
<path d="M1239 326h5" stroke="#17ff80"/>
<path d="M1244 326h5" stroke="#1fff7e"/>
<path d="M1249 326h5" stroke="#27ff7d"/>
<path d="M1254 326h5" stroke="#2fff7b"/>
<path d="M1259 326h5" stroke="#38ff7a"/>
<path d="M1264 326h5" stroke="#42ff78"/>
<path d="M1269 326h5" stroke="#4cff77"/>
<path d="M1274 326h5" stroke="#56ff75"/>
<path d="M1279 326h5" stroke="#61ff73"/>
<path d="M1284 326h5" stroke="#6cff72"/>
<path d="M1289 326h5" stroke="#78ff70"/>
<path d="M1294 326h5" stroke="#84ff6e"/>
<path d="M1299 326h5" stroke="#91ff6c"/>
<path d="M1304 326h5" stroke="#9eff6b"/>
<path d="M1309 326h5" stroke="#acff69"/>
<path d="M1314 326h5" stroke="#baff67"/>
<path d="M1319 326h5" stroke="#c8ff65"/>
<path d="M1324 326h5" stroke="#d8ff63"/>
<path d="M1329 326h5" stroke="#e8ff61"/>
<path d="M1334 326h5" stroke="#f8ff5f"/>
<path d="M1339 326h5" stroke="#fff559"/>
<path d="M1344 326h5" stroke="#ffe652"/>
<path d="M1349 326h5" stroke="#ffd84b"/>
<path d="M1354 326h5" stroke="#ffcb45"/>
<path d="M1359 326h5" stroke="#ffbf3f"/>
<path d="M1364 326h5" stroke="#ffb43a"/>
<path d="M1369 326h5" stroke="#ffaa35"/>
<path d="M1374 326h5" stroke="#ffa130"/>
<path d="M1379 326h5" stroke="#ff982c"/>
<path d="M1384 326h5" stroke="#ff9029"/>
<path d="M1389 326h5" stroke="#ff8925"/>
<path d="M1394 326h5" stroke="#ff8222"/>
<path d="M1399 326h5" stroke="#ff7b1f"/>
<path d="M1404 326h5" stroke="#ff751c"/>
<path d="M1409 326h5" stroke="#ff6f19"/>
<path d="M1414 326h5" stroke="#ff6a17"/>
<path d="M1419 326h5" stroke="#ff6515"/>
<path d="M1424 326h5" stroke="#ff6012"/>
<path d="M1429 326h5" stroke="#ff5b10"/>
<path d="M1434 326h5" stroke="#ff570f"/>
<path d="M1439 326h5" stroke="#ff530d"/>
<path d="M1444 326h5" stroke="#ff4f0b"/>
<path d="M1449 326h5" stroke="#ff4b0a"/>
<path d="M1454 326h5" stroke="#ff4808"/>
<path d="M1459 326h5" stroke="#ff4507"/>
<path d="M1464 326h5" stroke="#ff4106"/>
<path d="M1469 326h5" stroke="#ff3e05"/>
<path d="M1474 326h5" stroke="#ff3c03"/>
<path d="M1479 326h5" stroke="#ff3903"/>
<path d="M1484 326h5" stroke="#ff3602"/>
<path d="M1489 326h5" stroke="#ff3401"/>
<path d="M1494 326h5" stroke="#ff3100"/>
<path d="M1499 326h5" stroke="#ff2f00"/>
<path d="M1504 326h5" stroke="#ff2d00"/>
<path d="M1509 326h5" stroke="#ff2b00"/>
<path d="M1069 331h5" stroke="#00ffac"/>
<path d="M1074 331h10" stroke="#00ffab"/>
<path d="M1084 331h5" stroke="#0fa"/>
<path d="M1089 331h5" stroke="#00ffa9"/>
<path d="M1094 331h5" stroke="#00ffa8"/>
<path d="M1099 331h5" stroke="#00ffa7"/>
<path d="M1104 331h5" stroke="#00ffa6"/>
<path d="M1109 331h10" stroke="#00ffa5"/>
<path d="M1119 331h5" stroke="#00ffa4"/>
<path d="M1124 331h5" stroke="#00ffa3"/>
<path d="M1129 331h5" stroke="#00ffa2"/>
<path d="M1134 331h5" stroke="#00ffa1"/>
<path d="M1139 331h5" stroke="#00ffa0"/>
<path d="M1144 331h5" stroke="#00ff9f"/>
<path d="M1149 331h5" stroke="#00ff9e"/>
<path d="M1154 331h5" stroke="#00ff9d"/>
<path d="M1159 331h5" stroke="#00ff9c"/>
<path d="M1164 331h5" stroke="#00ff9b"/>
<path d="M1169 331h5" stroke="#00ff9a"/>
<path d="M1174 331h5" stroke="#0f9"/>
<path d="M1179 331h5" stroke="#00ff97"/>
<path d="M1184 331h5" stroke="#00ff96"/>
<path d="M1189 331h5" stroke="#00ff95"/>
<path d="M1194 331h5" stroke="#00ff94"/>
<path d="M1199 331h5" stroke="#00ff93"/>
<path d="M1204 331h5" stroke="#00ff92"/>
<path d="M1209 331h5" stroke="#00ff90"/>
<path d="M1214 331h5" stroke="#00ff8f"/>
<path d="M1219 331h5" stroke="#01ff8e"/>
<path d="M1224 331h5" stroke="#06ff8d"/>
<path d="M1229 331h5" stroke="#0cff8b"/>
<path d="M1234 331h5" stroke="#12ff8a"/>
<path d="M1239 331h5" stroke="#1aff88"/>
<path d="M1244 331h5" stroke="#22ff87"/>
<path d="M1249 331h5" stroke="#2aff86"/>
<path d="M1254 331h5" stroke="#33ff84"/>
<path d="M1259 331h5" stroke="#3cff83"/>
<path d="M1264 331h5" stroke="#46ff81"/>
<path d="M1269 331h5" stroke="#51ff80"/>
<path d="M1274 331h5" stroke="#5bff7e"/>
<path d="M1279 331h5" stroke="#67ff7c"/>
<path d="M1284 331h5" stroke="#73ff7b"/>
<path d="M1289 331h5" stroke="#7fff79"/>
<path d="M1294 331h5" stroke="#8cff77"/>
<path d="M1299 331h5" stroke="#99ff76"/>
<path d="M1304 331h5" stroke="#a7ff74"/>
<path d="M1309 331h5" stroke="#b5ff72"/>
<path d="M1314 331h5" stroke="#c4ff70"/>
<path d="M1319 331h5" stroke="#d4ff6e"/>
<path d="M1324 331h5" stroke="#e4ff6c"/>
<path d="M1329 331h5" stroke="#f4ff6a"/>
<path d="M1334 331h5" stroke="#fff966"/>
<path d="M1339 331h5" stroke="#ffe95d"/>
<path d="M1344 331h5" stroke="#ffda55"/>
<path d="M1349 331h5" stroke="#ffcd4f"/>
<path d="M1354 331h5" stroke="#ffc048"/>
<path d="M1359 331h5" stroke="#ffb542"/>
<path d="M1364 331h5" stroke="#ffab3d"/>
<path d="M1369 331h5" stroke="#ffa138"/>
<path d="M1374 331h5" stroke="#ff9833"/>
<path d="M1379 331h5" stroke="#ff902f"/>
<path d="M1384 331h5" stroke="#ff892b"/>
<path d="M1389 331h5" stroke="#ff8128"/>
<path d="M1394 331h5" stroke="#ff7b24"/>
<path d="M1399 331h5" stroke="#ff7421"/>
<path d="M1404 331h5" stroke="#ff6f1e"/>
<path d="M1409 331h5" stroke="#ff691c"/>
<path d="M1414 331h5" stroke="#ff6419"/>
<path d="M1419 331h5" stroke="#ff5f17"/>
<path d="M1424 331h5" stroke="#ff5a15"/>
<path d="M1429 331h5" stroke="#ff5612"/>
<path d="M1434 331h5" stroke="#ff5211"/>
<path d="M1439 331h5" stroke="#ff4e0f"/>
<path d="M1444 331h5" stroke="#ff4a0d"/>
<path d="M1449 331h5" stroke="#ff470b"/>
<path d="M1454 331h5" stroke="#ff430a"/>
<path d="M1459 331h5" stroke="#ff4008"/>
<path d="M1464 331h5" stroke="#ff3d07"/>
<path d="M1469 331h5" stroke="#ff3a06"/>
<path d="M1474 331h5" stroke="#ff3805"/>
<path d="M1479 331h5" stroke="#ff3504"/>
<path d="M1484 331h5" stroke="#ff3303"/>
<path d="M1489 331h5" stroke="#ff3002"/>
<path d="M1494 331h5" stroke="#ff2e01"/>
<path d="M1499 331h5" stroke="#ff2c01"/>
<path d="M1504 331h5" stroke="#ff2a00"/>
<path d="M1509 331h5" stroke="#ff2800"/>
<path d="M1514 331h5" stroke="#ff2600"/>
<path d="M1069 336h5" stroke="#00ffb4"/>
<path d="M1074 336h10" stroke="#00ffb3"/>
<path d="M1084 336h5" stroke="#00ffb2"/>
<path d="M1089 336h5" stroke="#00ffb1"/>
<path d="M1094 336h5" stroke="#00ffb0"/>
<path d="M1099 336h10" stroke="#00ffaf"/>
<path d="M1109 336h5" stroke="#00ffae"/>
<path d="M1114 336h5" stroke="#00ffad"/>
<path d="M1119 336h5" stroke="#00ffac"/>
<path d="M1124 336h5" stroke="#00ffab"/>
<path d="M1129 336h5" stroke="#0fa"/>
<path d="M1134 336h5" stroke="#00ffa9"/>
<path d="M1139 336h5" stroke="#00ffa8"/>
<path d="M1144 336h5" stroke="#00ffa7"/>
<path d="M1149 336h5" stroke="#00ffa6"/>
<path d="M1154 336h5" stroke="#00ffa5"/>
<path d="M1159 336h5" stroke="#00ffa4"/>
<path d="M1164 336h5" stroke="#00ffa3"/>
<path d="M1169 336h5" stroke="#00ffa2"/>
<path d="M1174 336h5" stroke="#00ffa1"/>
<path d="M1179 336h5" stroke="#00ffa0"/>
<path d="M1184 336h5" stroke="#00ff9f"/>
<path d="M1189 336h5" stroke="#00ff9e"/>
<path d="M1194 336h5" stroke="#00ff9d"/>
<path d="M1199 336h5" stroke="#00ff9c"/>
<path d="M1204 336h5" stroke="#00ff9b"/>
<path d="M1209 336h5" stroke="#00ff9a"/>
<path d="M1214 336h5" stroke="#00ff98"/>
<path d="M1219 336h5" stroke="#02ff97"/>
<path d="M1224 336h5" stroke="#07ff96"/>
<path d="M1229 336h5" stroke="#0dff95"/>
<path d="M1234 336h5" stroke="#15ff93"/>
<path d="M1239 336h5" stroke="#1cff92"/>
<path d="M1244 336h5" stroke="#25ff91"/>
<path d="M1249 336h5" stroke="#2eff8f"/>
<path d="M1254 336h5" stroke="#37ff8e"/>
<path d="M1259 336h5" stroke="#41ff8c"/>
<path d="M1264 336h5" stroke="#4bff8b"/>
<path d="M1269 336h5" stroke="#56ff89"/>
<path d="M1274 336h5" stroke="#61ff88"/>
<path d="M1279 336h5" stroke="#6dff86"/>
<path d="M1284 336h5" stroke="#7aff85"/>
<path d="M1289 336h5" stroke="#86ff83"/>
<path d="M1294 336h5" stroke="#94ff81"/>
<path d="M1299 336h5" stroke="#a2ff80"/>
<path d="M1304 336h5" stroke="#b0ff7e"/>
<path d="M1309 336h5" stroke="#bfff7c"/>
<path d="M1314 336h5" stroke="#cfff7a"/>
<path d="M1319 336h5" stroke="#dfff78"/>
<path d="M1324 336h5" stroke="#f0ff76"/>
<path d="M1329 336h5" stroke="#fffc73"/>
<path d="M1334 336h5" stroke="#ffeb6a"/>
<path d="M1339 336h5" stroke="#ffdc61"/>
<path d="M1344 336h5" stroke="#ffce59"/>
<path d="M1349 336h5" stroke="#ffc252"/>
<path d="M1354 336h5" stroke="#ffb64c"/>
<path d="M1359 336h5" stroke="#ffab46"/>
<path d="M1364 336h5" stroke="#ffa240"/>
<path d="M1369 336h5" stroke="#ff993b"/>
<path d="M1374 336h5" stroke="#ff9036"/>
<path d="M1379 336h5" stroke="#ff8832"/>
<path d="M1384 336h5" stroke="#ff812e"/>
<path d="M1389 336h5" stroke="#ff7a2a"/>
<path d="M1394 336h5" stroke="#ff7427"/>
<path d="M1399 336h5" stroke="#ff6e24"/>
<path d="M1404 336h5" stroke="#ff6821"/>
<path d="M1409 336h5" stroke="#ff631e"/>
<path d="M1414 336h5" stroke="#ff5e1b"/>
<path d="M1419 336h5" stroke="#ff5919"/>
<path d="M1424 336h5" stroke="#ff5517"/>
<path d="M1429 336h5" stroke="#ff5114"/>
<path d="M1434 336h5" stroke="#ff4d12"/>
<path d="M1439 336h5" stroke="#ff4911"/>
<path d="M1444 336h5" stroke="#ff460f"/>
<path d="M1449 336h5" stroke="#ff420d"/>
<path d="M1454 336h5" stroke="#ff3f0c"/>
<path d="M1459 336h5" stroke="#ff3c0a"/>
<path d="M1464 336h5" stroke="#ff3909"/>
<path d="M1469 336h5" stroke="#ff3607"/>
<path d="M1474 336h5" stroke="#ff3406"/>
<path d="M1479 336h5" stroke="#ff3105"/>
<path d="M1484 336h5" stroke="#ff2f04"/>
<path d="M1489 336h5" stroke="#ff2d03"/>
<path d="M1494 336h5" stroke="#ff2a02"/>
<path d="M1499 336h5" stroke="#ff2801"/>
<path d="M1504 336h5" stroke="#ff2601"/>
<path d="M1509 336h5" stroke="#ff2400"/>
<path d="M1514 336h5" stroke="#ff2300"/>
<path d="M1519 336h5" stroke="#ff2100"/>
<path d="M1524 336h5" stroke="#ff1f00"/>
<path d="M1069 341h10" stroke="#00ffbc"/>
<path d="M1079 341h5" stroke="#0fb"/>
<path d="M1084 341h10" stroke="#00ffba"/>
<path d="M1094 341h5" stroke="#00ffb9"/>
<path d="M1099 341h5" stroke="#00ffb8"/>
<path d="M1104 341h5" stroke="#00ffb7"/>
<path d="M1109 341h10" stroke="#00ffb6"/>
<path d="M1119 341h5" stroke="#00ffb5"/>
<path d="M1124 341h5" stroke="#00ffb4"/>
<path d="M1129 341h5" stroke="#00ffb3"/>
<path d="M1134 341h5" stroke="#00ffb2"/>
<path d="M1139 341h5" stroke="#00ffb1"/>
<path d="M1144 341h10" stroke="#00ffb0"/>
<path d="M1154 341h5" stroke="#00ffaf"/>
<path d="M1159 341h5" stroke="#00ffae"/>
<path d="M1164 341h5" stroke="#00ffad"/>
<path d="M1169 341h5" stroke="#00ffac"/>
<path d="M1174 341h5" stroke="#00ffab"/>
<path d="M1179 341h5" stroke="#0fa"/>
<path d="M1184 341h5" stroke="#00ffa9"/>
<path d="M1189 341h5" stroke="#00ffa8"/>
<path d="M1194 341h5" stroke="#00ffa7"/>
<path d="M1199 341h5" stroke="#00ffa6"/>
<path d="M1204 341h5" stroke="#00ffa4"/>
<path d="M1209 341h5" stroke="#00ffa3"/>
<path d="M1214 341h5" stroke="#00ffa2"/>
<path d="M1219 341h5" stroke="#03ffa1"/>
<path d="M1224 341h5" stroke="#09ffa0"/>
<path d="M1229 341h5" stroke="#10ff9f"/>
<path d="M1234 341h5" stroke="#17ff9d"/>
<path d="M1239 341h5" stroke="#1fff9c"/>
<path d="M1244 341h5" stroke="#28ff9b"/>
<path d="M1249 341h5" stroke="#31ff99"/>
<path d="M1254 341h5" stroke="#3bff98"/>
<path d="M1259 341h5" stroke="#45ff97"/>
<path d="M1264 341h5" stroke="#50ff95"/>
<path d="M1269 341h5" stroke="#5cff94"/>
<path d="M1274 341h5" stroke="#68ff92"/>
<path d="M1279 341h5" stroke="#74ff91"/>
<path d="M1284 341h5" stroke="#81ff8f"/>
<path d="M1289 341h5" stroke="#8fff8e"/>
<path d="M1294 341h5" stroke="#9dff8c"/>
<path d="M1299 341h5" stroke="#abff8a"/>
<path d="M1304 341h5" stroke="#bbff89"/>
<path d="M1309 341h5" stroke="#cbff87"/>
<path d="M1314 341h5" stroke="#dbff85"/>
<path d="M1319 341h5" stroke="#ecff83"/>
<path d="M1324 341h5" stroke="#feff81"/>
<path d="M1329 341h5" stroke="#fe7"/>
<path d="M1334 341h5" stroke="#ffde6e"/>
<path d="M1339 341h5" stroke="#ffd065"/>
<path d="M1344 341h5" stroke="#ffc35d"/>
<path d="M1349 341h5" stroke="#ffb756"/>
<path d="M1354 341h5" stroke="#ffac4f"/>
<path d="M1359 341h5" stroke="#ffa249"/>
<path d="M1364 341h5" stroke="#ff9943"/>
<path d="M1369 341h5" stroke="#ff903e"/>
<path d="M1374 341h5" stroke="#ff8839"/>
<path d="M1379 341h5" stroke="#ff8035"/>
<path d="M1384 341h5" stroke="#ff7931"/>
<path d="M1389 341h5" stroke="#ff732d"/>
<path d="M1394 341h5" stroke="#ff6d2a"/>
<path d="M1399 341h5" stroke="#ff6726"/>
<path d="M1404 341h5" stroke="#ff6223"/>
<path d="M1409 341h5" stroke="#ff5d20"/>
<path d="M1414 341h5" stroke="#ff581e"/>
<path d="M1419 341h5" stroke="#ff541b"/>
<path d="M1424 341h5" stroke="#ff5019"/>
<path d="M1429 341h5" stroke="#ff4c17"/>
<path d="M1434 341h5" stroke="#ff4814"/>
<path d="M1439 341h5" stroke="#ff4413"/>
<path d="M1444 341h5" stroke="#ff4111"/>
<path d="M1449 341h5" stroke="#ff3e0f"/>
<path d="M1454 341h5" stroke="#ff3b0d"/>
<path d="M1459 341h5" stroke="#ff380c"/>
<path d="M1464 341h5" stroke="#ff350a"/>
<path d="M1469 341h5" stroke="#ff3209"/>
<path d="M1474 341h5" stroke="#ff3008"/>
<path d="M1479 341h5" stroke="#ff2e07"/>
<path d="M1484 341h5" stroke="#ff2b05"/>
<path d="M1489 341h5" stroke="#ff2904"/>
<path d="M1494 341h5" stroke="#ff2703"/>
<path d="M1499 341h5" stroke="#ff2503"/>
<path d="M1504 341h5" stroke="#ff2302"/>
<path d="M1509 341h5" stroke="#ff2101"/>
<path d="M1514 341h5" stroke="#ff2000"/>
<path d="M1519 341h5" stroke="#ff1e00"/>
<path d="M1524 341h5" stroke="#ff1c00"/>
<path d="M1529 341h5" stroke="#ff1b00"/>
<path d="M1074 346h5" stroke="#00ffc5"/>
<path d="M1079 346h5" stroke="#00ffc4"/>
<path d="M1084 346h5" stroke="#00ffc3"/>
<path d="M1089 346h10" stroke="#00ffc2"/>
<path d="M1099 346h5" stroke="#00ffc1"/>
<path d="M1104 346h10" stroke="#00ffc0"/>
<path d="M1114 346h5" stroke="#00ffbf"/>
<path d="M1119 346h5" stroke="#00ffbe"/>
<path d="M1124 346h10" stroke="#00ffbd"/>
<path d="M1134 346h5" stroke="#00ffbc"/>
<path d="M1139 346h5" stroke="#0fb"/>
<path d="M1144 346h5" stroke="#00ffba"/>
<path d="M1149 346h5" stroke="#00ffb9"/>
<path d="M1154 346h5" stroke="#00ffb8"/>
<path d="M1159 346h10" stroke="#00ffb7"/>
<path d="M1169 346h5" stroke="#00ffb6"/>
<path d="M1174 346h5" stroke="#00ffb5"/>
<path d="M1179 346h5" stroke="#00ffb4"/>
<path d="M1184 346h5" stroke="#00ffb3"/>
<path d="M1189 346h5" stroke="#00ffb2"/>
<path d="M1194 346h5" stroke="#00ffb1"/>
<path d="M1199 346h5" stroke="#00ffb0"/>
<path d="M1204 346h5" stroke="#00ffaf"/>
<path d="M1209 346h5" stroke="#00ffae"/>
<path d="M1214 346h5" stroke="#00ffad"/>
<path d="M1219 346h5" stroke="#04ffab"/>
<path d="M1224 346h5" stroke="#0bffaa"/>
<path d="M1229 346h5" stroke="#12ffa9"/>
<path d="M1234 346h5" stroke="#1affa8"/>
<path d="M1239 346h5" stroke="#22ffa7"/>
<path d="M1244 346h5" stroke="#2cffa6"/>
<path d="M1249 346h5" stroke="#35ffa4"/>
<path d="M1254 346h5" stroke="#40ffa3"/>
<path d="M1259 346h5" stroke="#4bffa2"/>
<path d="M1264 346h5" stroke="#56ffa0"/>
<path d="M1269 346h5" stroke="#62ff9f"/>
<path d="M1274 346h5" stroke="#6eff9e"/>
<path d="M1279 346h5" stroke="#7bff9c"/>
<path d="M1284 346h5" stroke="#89ff9b"/>
<path d="M1289 346h5" stroke="#97ff99"/>
<path d="M1294 346h5" stroke="#a6ff98"/>
<path d="M1299 346h5" stroke="#b6ff96"/>
<path d="M1304 346h5" stroke="#c6ff94"/>
<path d="M1309 346h5" stroke="#d7ff93"/>
<path d="M1314 346h5" stroke="#e8ff91"/>
<path d="M1319 346h5" stroke="#faff8f"/>
<path d="M1324 346h5" stroke="#fff186"/>
<path d="M1329 346h5" stroke="#ffe17b"/>
<path d="M1334 346h5" stroke="#ffd271"/>
<path d="M1339 346h5" stroke="#ffc469"/>
<path d="M1344 346h5" stroke="#ffb861"/>
<path d="M1349 346h5" stroke="#ffad59"/>
<path d="M1354 346h5" stroke="#ffa252"/>
<path d="M1359 346h5" stroke="#ff994c"/>
<path d="M1364 346h5" stroke="#ff9047"/>
<path d="M1369 346h5" stroke="#ff8841"/>
<path d="M1374 346h5" stroke="#ff803c"/>
<path d="M1379 346h5" stroke="#ff7938"/>
<path d="M1384 346h5" stroke="#ff7234"/>
<path d="M1389 346h5" stroke="#ff6c30"/>
<path d="M1394 346h5" stroke="#ff662c"/>
<path d="M1399 346h5" stroke="#ff6129"/>
<path d="M1404 346h5" stroke="#ff5c26"/>
<path d="M1409 346h5" stroke="#ff5723"/>
<path d="M1414 346h5" stroke="#ff5320"/>
<path d="M1419 346h5" stroke="#ff4e1d"/>
<path d="M1424 346h5" stroke="#ff4a1b"/>
<path d="M1429 346h5" stroke="#ff4719"/>
<path d="M1434 346h5" stroke="#ff4316"/>
<path d="M1439 346h5" stroke="#ff4014"/>
<path d="M1444 346h5" stroke="#ff3c13"/>
<path d="M1449 346h5" stroke="#ff3911"/>
<path d="M1454 346h5" stroke="#ff360f"/>
<path d="M1459 346h5" stroke="#ff340d"/>
<path d="M1464 346h5" stroke="#ff310c"/>
<path d="M1469 346h5" stroke="#ff2f0b"/>
<path d="M1474 346h5" stroke="#ff2c09"/>
<path d="M1479 346h5" stroke="#ff2a08"/>
<path d="M1484 346h5" stroke="#ff2807"/>
<path d="M1489 346h5" stroke="#ff2606"/>
<path d="M1494 346h5" stroke="#ff2405"/>
<path d="M1499 346h5" stroke="#ff2204"/>
<path d="M1504 346h5" stroke="#ff2003"/>
<path d="M1509 346h5" stroke="#ff1e02"/>
<path d="M1514 346h5" stroke="#ff1d01"/>
<path d="M1519 346h5" stroke="#ff1b01"/>
<path d="M1524 346h5" stroke="#ff1a00"/>
<path d="M1529 346h5" stroke="#ff1800"/>
<path d="M1534 346h5" stroke="#ff1700"/>
<path d="M1074 351h5" stroke="#00ffce"/>
<path d="M1079 351h10" stroke="#00ffcd"/>
<path d="M1089 351h5" stroke="#0fc"/>
<path d="M1094 351h10" stroke="#00ffcb"/>
<path d="M1104 351h5" stroke="#00ffca"/>
<path d="M1109 351h10" stroke="#00ffc9"/>
<path d="M1119 351h5" stroke="#00ffc8"/>
<path d="M1124 351h5" stroke="#00ffc7"/>
<path d="M1129 351h10" stroke="#00ffc6"/>
<path d="M1139 351h5" stroke="#00ffc5"/>
<path d="M1144 351h5" stroke="#00ffc4"/>
<path d="M1149 351h10" stroke="#00ffc3"/>
<path d="M1159 351h5" stroke="#00ffc2"/>
<path d="M1164 351h5" stroke="#00ffc1"/>
<path d="M1169 351h5" stroke="#00ffc0"/>
<path d="M1174 351h5" stroke="#00ffbf"/>
<path d="M1179 351h10" stroke="#00ffbe"/>
<path d="M1189 351h5" stroke="#00ffbd"/>
<path d="M1194 351h5" stroke="#00ffbc"/>
<path d="M1199 351h5" stroke="#0fb"/>
<path d="M1204 351h5" stroke="#00ffba"/>
<path d="M1209 351h5" stroke="#00ffb9"/>
<path d="M1214 351h5" stroke="#01ffb8"/>
<path d="M1219 351h5" stroke="#06ffb7"/>
<path d="M1224 351h5" stroke="#0dffb6"/>
<path d="M1229 351h5" stroke="#14ffb5"/>
<path d="M1234 351h5" stroke="#1dffb4"/>
<path d="M1239 351h5" stroke="#26ffb2"/>
<path d="M1244 351h5" stroke="#2fffb1"/>
<path d="M1249 351h5" stroke="#3affb0"/>
<path d="M1254 351h5" stroke="#45ffaf"/>
<path d="M1259 351h5" stroke="#50ffae"/>
<path d="M1264 351h5" stroke="#5cffac"/>
<path d="M1269 351h5" stroke="#68ffab"/>
<path d="M1274 351h5" stroke="#76ffaa"/>
<path d="M1279 351h5" stroke="#83ffa8"/>
<path d="M1284 351h5" stroke="#92ffa7"/>
<path d="M1289 351h5" stroke="#a1ffa6"/>
<path d="M1294 351h5" stroke="#b0ffa4"/>
<path d="M1299 351h5" stroke="#c1ffa3"/>
<path d="M1304 351h5" stroke="#d2ffa1"/>
<path d="M1309 351h5" stroke="#e4ffa0"/>
<path d="M1314 351h5" stroke="#f6ff9e"/>
<path d="M1319 351h5" stroke="#fff596"/>
<path d="M1324 351h5" stroke="#ffe48a"/>
<path d="M1329 351h5" stroke="#ffd47f"/>
<path d="M1334 351h5" stroke="#ffc675"/>
<path d="M1339 351h5" stroke="#ffb96c"/>
<path d="M1344 351h5" stroke="#ffad64"/>
<path d="M1349 351h5" stroke="#ffa35d"/>
<path d="M1354 351h5" stroke="#ff9956"/>
<path d="M1359 351h5" stroke="#ff9050"/>
<path d="M1364 351h5" stroke="#ff874a"/>
<path d="M1369 351h5" stroke="#ff7f44"/>
<path d="M1374 351h5" stroke="#ff783f"/>
<path d="M1379 351h5" stroke="#ff713b"/>
<path d="M1384 351h5" stroke="#ff6b37"/>
<path d="M1389 351h5" stroke="#ff6533"/>
<path d="M1394 351h5" stroke="#ff602f"/>
<path d="M1399 351h5" stroke="#ff5b2b"/>
<path d="M1404 351h5" stroke="#ff5628"/>
<path d="M1409 351h5" stroke="#ff5125"/>
<path d="M1414 351h5" stroke="#ff4d22"/>
<path d="M1419 351h5" stroke="#ff4920"/>
<path d="M1424 351h5" stroke="#ff451d"/>
<path d="M1429 351h5" stroke="#ff421b"/>
<path d="M1434 351h5" stroke="#ff3e18"/>
<path d="M1439 351h5" stroke="#ff3b16"/>
<path d="M1444 351h5" stroke="#ff3814"/>
<path d="M1449 351h5" stroke="#ff3513"/>
<path d="M1454 351h5" stroke="#ff3211"/>
<path d="M1459 351h5" stroke="#ff300f"/>
<path d="M1464 351h5" stroke="#ff2d0e"/>
<path d="M1469 351h5" stroke="#ff2b0c"/>
<path d="M1474 351h5" stroke="#ff290b"/>
<path d="M1479 351h5" stroke="#ff2609"/>
<path d="M1484 351h5" stroke="#ff2408"/>
<path d="M1489 351h5" stroke="#ff2207"/>
<path d="M1494 351h5" stroke="#ff2006"/>
<path d="M1499 351h5" stroke="#ff1f05"/>
<path d="M1504 351h5" stroke="#ff1d04"/>
<path d="M1509 351h5" stroke="#ff1b03"/>
<path d="M1514 351h5" stroke="#ff1a02"/>
<path d="M1519 351h5" stroke="#ff1802"/>
<path d="M1524 351h5" stroke="#ff1701"/>
<path d="M1529 351h5" stroke="#ff1500"/>
<path d="M1534 351h5" stroke="#ff1400"/>
<path d="M1539 351h5" stroke="#ff1300"/>
<path d="M1544 351h5" stroke="#ff1200"/>
<path d="M1074 356h5" stroke="#00ffd8"/>
<path d="M1079 356h10" stroke="#00ffd7"/>
<path d="M1089 356h5" stroke="#00ffd6"/>
<path d="M1094 356h10" stroke="#00ffd5"/>
<path d="M1104 356h10" stroke="#00ffd4"/>
<path d="M1114 356h5" stroke="#00ffd3"/>
<path d="M1119 356h10" stroke="#00ffd2"/>
<path d="M1129 356h5" stroke="#00ffd1"/>
<path d="M1134 356h10" stroke="#00ffd0"/>
<path d="M1144 356h5" stroke="#00ffcf"/>
<path d="M1149 356h10" stroke="#00ffce"/>
<path d="M1159 356h5" stroke="#00ffcd"/>
<path d="M1164 356h5" stroke="#0fc"/>
<path d="M1169 356h10" stroke="#00ffcb"/>
<path d="M1179 356h5" stroke="#00ffca"/>
<path d="M1184 356h5" stroke="#00ffc9"/>
<path d="M1189 356h5" stroke="#00ffc8"/>
<path d="M1194 356h5" stroke="#00ffc7"/>
<path d="M1199 356h10" stroke="#00ffc6"/>
<path d="M1209 356h5" stroke="#00ffc5"/>
<path d="M1214 356h5" stroke="#02ffc4"/>
<path d="M1219 356h5" stroke="#08ffc3"/>
<path d="M1224 356h5" stroke="#0fffc2"/>
<path d="M1229 356h5" stroke="#17ffc1"/>
<path d="M1234 356h5" stroke="#20ffc0"/>
<path d="M1239 356h5" stroke="#29ffbf"/>
<path d="M1244 356h5" stroke="#34ffbe"/>
<path d="M1249 356h5" stroke="#3effbd"/>
<path d="M1254 356h5" stroke="#4affbc"/>
<path d="M1259 356h5" stroke="#56ffbb"/>
<path d="M1264 356h5" stroke="#62ffb9"/>
<path d="M1269 356h5" stroke="#70ffb8"/>
<path d="M1274 356h5" stroke="#7effb7"/>
<path d="M1279 356h5" stroke="#8cffb6"/>
<path d="M1284 356h5" stroke="#9bffb5"/>
<path d="M1289 356h5" stroke="#abffb3"/>
<path d="M1294 356h5" stroke="#bcffb2"/>
<path d="M1299 356h5" stroke="#cdffb0"/>
<path d="M1304 356h5" stroke="#dfffaf"/>
<path d="M1309 356h5" stroke="#f2ffae"/>
<path d="M1314 356h5" stroke="#fff9a8"/>
<path d="M1319 356h5" stroke="#ffe69a"/>
<path d="M1324 356h5" stroke="#ffd68e"/>
<path d="M1329 356h5" stroke="#ffc883"/>
<path d="M1334 356h5" stroke="#ffba79"/>
<path d="M1339 356h5" stroke="#ffae70"/>
<path d="M1344 356h5" stroke="#ffa368"/>
<path d="M1349 356h5" stroke="#ff9960"/>
<path d="M1354 356h5" stroke="#ff8f59"/>
<path d="M1359 356h5" stroke="#ff8753"/>
<path d="M1364 356h5" stroke="#ff7f4d"/>
<path d="M1369 356h5" stroke="#ff7747"/>
<path d="M1374 356h5" stroke="#ff7142"/>
<path d="M1379 356h5" stroke="#ff6a3e"/>
<path d="M1384 356h5" stroke="#ff6439"/>
<path d="M1389 356h5" stroke="#ff5f35"/>
<path d="M1394 356h5" stroke="#ff5931"/>
<path d="M1399 356h5" stroke="#ff552e"/>
<path d="M1404 356h5" stroke="#ff502b"/>
<path d="M1409 356h5" stroke="#ff4c27"/>
<path d="M1414 356h5" stroke="#ff4825"/>
<path d="M1419 356h5" stroke="#f42"/>
<path d="M1424 356h5" stroke="#ff401f"/>
<path d="M1429 356h5" stroke="#ff3d1d"/>
<path d="M1434 356h5" stroke="#ff3a1b"/>
<path d="M1439 356h5" stroke="#ff3618"/>
<path d="M1444 356h5" stroke="#ff3416"/>
<path d="M1449 356h5" stroke="#ff3114"/>
<path d="M1454 356h5" stroke="#ff2e13"/>
<path d="M1459 356h5" stroke="#ff2c11"/>
<path d="M1464 356h5" stroke="#ff290f"/>
<path d="M1469 356h5" stroke="#ff270e"/>
<path d="M1474 356h5" stroke="#ff250c"/>
<path d="M1479 356h5" stroke="#ff230b"/>
<path d="M1484 356h5" stroke="#ff210a"/>
<path d="M1489 356h5" stroke="#ff1f08"/>
<path d="M1494 356h5" stroke="#ff1d07"/>
<path d="M1499 356h5" stroke="#ff1c06"/>
<path d="M1504 356h5" stroke="#ff1a05"/>
<path d="M1509 356h5" stroke="#ff1804"/>
<path d="M1514 356h5" stroke="#ff1703"/>
<path d="M1519 356h5" stroke="#ff1603"/>
<path d="M1524 356h5" stroke="#ff1402"/>
<path d="M1529 356h5" stroke="#ff1301"/>
<path d="M1534 356h5" stroke="#ff1201"/>
<path d="M1539 356h5" stroke="#ff1000"/>
<path d="M1544 356h5" stroke="#ff0f00"/>
<path d="M1549 356h5" stroke="#ff0e00"/>
<path d="M1074 361h5" stroke="#00ffe2"/>
<path d="M1079 361h15" stroke="#00ffe1"/>
<path d="M1094 361h10" stroke="#00ffe0"/>
<path d="M1104 361h5" stroke="#00ffdf"/>
<path d="M1109 361h10" stroke="#00ffde"/>
<path d="M1119 361h10" stroke="#0fd"/>
<path d="M1129 361h10" stroke="#00ffdc"/>
<path d="M1139 361h10" stroke="#00ffdb"/>
<path d="M1149 361h5" stroke="#00ffda"/>
<path d="M1154 361h10" stroke="#00ffd9"/>
<path d="M1164 361h5" stroke="#00ffd8"/>
<path d="M1169 361h10" stroke="#00ffd7"/>
<path d="M1179 361h5" stroke="#00ffd6"/>
<path d="M1184 361h10" stroke="#00ffd5"/>
<path d="M1194 361h5" stroke="#00ffd4"/>
<path d="M1199 361h5" stroke="#00ffd3"/>
<path d="M1204 361h10" stroke="#00ffd2"/>
<path d="M1214 361h5" stroke="#03ffd1"/>
<path d="M1219 361h5" stroke="#0affd0"/>
<path d="M1224 361h5" stroke="#11ffcf"/>
<path d="M1229 361h5" stroke="#1affce"/>
<path d="M1234 361h5" stroke="#23ffcd"/>
<path d="M1239 361h5" stroke="#2dffcc"/>
<path d="M1244 361h5" stroke="#38ffcb"/>
<path d="M1249 361h5" stroke="#44ffcb"/>
<path d="M1254 361h5" stroke="#50ffca"/>
<path d="M1259 361h5" stroke="#5cffc9"/>
<path d="M1264 361h5" stroke="#6affc8"/>
<path d="M1269 361h5" stroke="#77ffc7"/>
<path d="M1274 361h5" stroke="#86ffc5"/>
<path d="M1279 361h5" stroke="#95ffc4"/>
<path d="M1284 361h5" stroke="#a6ffc3"/>
<path d="M1289 361h5" stroke="#b6ffc2"/>
<path d="M1294 361h5" stroke="#c8ffc1"/>
<path d="M1299 361h5" stroke="#daffc0"/>
<path d="M1304 361h5" stroke="#edffbe"/>
<path d="M1309 361h5" stroke="#fffdbb"/>
<path d="M1314 361h5" stroke="#ffeaac"/>
<path d="M1319 361h5" stroke="#ffd99e"/>
<path d="M1324 361h5" stroke="#ffc992"/>
<path d="M1329 361h5" stroke="#ffbb87"/>
<path d="M1334 361h5" stroke="#ffaf7d"/>
<path d="M1339 361h5" stroke="#ffa374"/>
<path d="M1344 361h5" stroke="#ff996b"/>
<path d="M1349 361h5" stroke="#ff8f63"/>
<path d="M1354 361h5" stroke="#ff865c"/>
<path d="M1359 361h5" stroke="#ff7e56"/>
<path d="M1364 361h5" stroke="#ff7750"/>
<path d="M1369 361h5" stroke="#ff704a"/>
<path d="M1374 361h5" stroke="#ff6945"/>
<path d="M1379 361h5" stroke="#ff6340"/>
<path d="M1384 361h5" stroke="#ff5e3c"/>
<path d="M1389 361h5" stroke="#ff5838"/>
<path d="M1394 361h5" stroke="#ff5334"/>
<path d="M1399 361h5" stroke="#ff4f30"/>
<path d="M1404 361h5" stroke="#ff4a2d"/>
<path d="M1409 361h5" stroke="#ff462a"/>
<path d="M1414 361h5" stroke="#ff4227"/>
<path d="M1419 361h5" stroke="#ff3f24"/>
<path d="M1424 361h5" stroke="#ff3b21"/>
<path d="M1429 361h5" stroke="#ff381f"/>
<path d="M1434 361h5" stroke="#ff351d"/>
<path d="M1439 361h5" stroke="#ff321a"/>
<path d="M1444 361h5" stroke="#ff2f18"/>
<path d="M1449 361h5" stroke="#ff2d16"/>
<path d="M1454 361h5" stroke="#ff2a14"/>
<path d="M1459 361h5" stroke="#ff2813"/>
<path d="M1464 361h5" stroke="#ff2611"/>
<path d="M1469 361h5" stroke="#ff240f"/>
<path d="M1474 361h5" stroke="#ff220e"/>
<path d="M1479 361h5" stroke="#ff200c"/>
<path d="M1484 361h5" stroke="#ff1e0b"/>
<path d="M1489 361h5" stroke="#ff1c0a"/>
<path d="M1494 361h5" stroke="#ff1a09"/>
<path d="M1499 361h5" stroke="#ff1908"/>
<path d="M1504 361h5" stroke="#ff1707"/>
<path d="M1509 361h5" stroke="#ff1606"/>
<path d="M1514 361h5" stroke="#ff1405"/>
<path d="M1519 361h5" stroke="#ff1304"/>
<path d="M1524 361h5" stroke="#ff1203"/>
<path d="M1529 361h5" stroke="#ff1002"/>
<path d="M1534 361h5" stroke="#ff0f01"/>
<path d="M1539 361h5" stroke="#ff0e01"/>
<path d="M1544 361h5" stroke="#ff0d00"/>
<path d="M1549 361h5" stroke="#ff0c00"/>
<path d="M1554 361h5" stroke="#ff0b00"/>
<path d="M1079 366h15" stroke="#00ffec"/>
<path d="M1094 366h10" stroke="#00ffeb"/>
<path d="M1104 366h15" stroke="#00ffea"/>
<path d="M1119 366h10" stroke="#00ffe9"/>
<path d="M1129 366h10" stroke="#00ffe8"/>
<path d="M1139 366h10" stroke="#00ffe7"/>
<path d="M1149 366h10" stroke="#00ffe6"/>
<path d="M1159 366h10" stroke="#00ffe5"/>
<path d="M1169 366h10" stroke="#00ffe4"/>
<path d="M1179 366h5" stroke="#00ffe3"/>
<path d="M1184 366h10" stroke="#00ffe2"/>
<path d="M1194 366h10" stroke="#00ffe1"/>
<path d="M1204 366h5" stroke="#00ffe0"/>
<path d="M1209 366h5" stroke="#00ffdf"/>
<path d="M1214 366h5" stroke="#05ffdf"/>
<path d="M1219 366h5" stroke="#0cffde"/>
<path d="M1224 366h5" stroke="#14ffdd"/>
<path d="M1229 366h5" stroke="#1dffdd"/>
<path d="M1234 366h5" stroke="#27ffdc"/>
<path d="M1239 366h5" stroke="#32ffdb"/>
<path d="M1244 366h5" stroke="#3dffda"/>
<path d="M1249 366h5" stroke="#49ffd9"/>
<path d="M1254 366h5" stroke="#56ffd9"/>
<path d="M1259 366h5" stroke="#63ffd8"/>
<path d="M1264 366h5" stroke="#71ffd7"/>
<path d="M1269 366h5" stroke="#80ffd6"/>
<path d="M1274 366h5" stroke="#8fffd5"/>
<path d="M1279 366h5" stroke="#a0ffd4"/>
<path d="M1284 366h5" stroke="#b1ffd3"/>
<path d="M1289 366h5" stroke="#c3ffd2"/>
<path d="M1294 366h5" stroke="#d5ffd1"/>
<path d="M1299 366h5" stroke="#e9ffd0"/>
<path d="M1304 366h5" stroke="#fdffcf"/>
<path d="M1309 366h5" stroke="#ffedbf"/>
<path d="M1314 366h5" stroke="#ffdbb0"/>
<path d="M1319 366h5" stroke="#ffcba2"/>
<path d="M1324 366h5" stroke="#ffbd96"/>
<path d="M1329 366h5" stroke="#ffb08b"/>
<path d="M1334 366h5" stroke="#ffa480"/>
<path d="M1339 366h5" stroke="#f97"/>
<path d="M1344 366h5" stroke="#ff8f6f"/>
<path d="M1349 366h5" stroke="#ff8667"/>
<path d="M1354 366h5" stroke="#ff7e60"/>
<path d="M1359 366h5" stroke="#ff7659"/>
<path d="M1364 366h5" stroke="#ff6f53"/>
<path d="M1369 366h5" stroke="#ff684d"/>
<path d="M1374 366h5" stroke="#ff6248"/>
<path d="M1379 366h5" stroke="#ff5c43"/>
<path d="M1384 366h5" stroke="#ff573f"/>
<path d="M1389 366h5" stroke="#ff523b"/>
<path d="M1394 366h5" stroke="#ff4d37"/>
<path d="M1399 366h5" stroke="#ff4933"/>
<path d="M1404 366h5" stroke="#ff452f"/>
<path d="M1409 366h5" stroke="#ff412c"/>
<path d="M1414 366h5" stroke="#ff3d29"/>
<path d="M1419 366h5" stroke="#ff3a26"/>
<path d="M1424 366h5" stroke="#ff3724"/>
<path d="M1429 366h5" stroke="#ff3421"/>
<path d="M1434 366h5" stroke="#ff311f"/>
<path d="M1439 366h5" stroke="#ff2e1c"/>
<path d="M1444 366h5" stroke="#ff2b1a"/>
<path d="M1449 366h5" stroke="#ff2918"/>
<path d="M1454 366h5" stroke="#ff2616"/>
<path d="M1459 366h5" stroke="#ff2414"/>
<path d="M1464 366h5" stroke="#ff2213"/>
<path d="M1469 366h5" stroke="#ff2011"/>
<path d="M1474 366h5" stroke="#ff1e0f"/>
<path d="M1479 366h5" stroke="#ff1c0e"/>
<path d="M1484 366h5" stroke="#ff1b0d"/>
<path d="M1489 366h5" stroke="#ff190b"/>
<path d="M1494 366h5" stroke="#ff170a"/>
<path d="M1499 366h5" stroke="#ff1609"/>
<path d="M1504 366h5" stroke="#ff1408"/>
<path d="M1509 366h5" stroke="#ff1307"/>
<path d="M1514 366h5" stroke="#ff1206"/>
<path d="M1519 366h5" stroke="#ff1005"/>
<path d="M1524 366h5" stroke="#ff0f04"/>
<path d="M1529 366h5" stroke="#ff0e03"/>
<path d="M1534 366h5" stroke="#ff0d02"/>
<path d="M1539 366h5" stroke="#ff0c02"/>
<path d="M1544 366h5" stroke="#ff0b01"/>
<path d="M1549 366h5" stroke="#ff0a01"/>
<path d="M1554 366h5" stroke="#ff0900"/>
<path d="M1559 366h5" stroke="#ff0800"/>
<path d="M1564 366h5" stroke="#ff0700"/>
<path d="M1079 371h15" stroke="#00fff8"/>
<path d="M1094 371h15" stroke="#00fff7"/>
<path d="M1109 371h15" stroke="#00fff6"/>
<path d="M1124 371h15" stroke="#00fff5"/>
<path d="M1139 371h10" stroke="#00fff4"/>
<path d="M1149 371h15" stroke="#00fff3"/>
<path d="M1164 371h10" stroke="#00fff2"/>
<path d="M1174 371h10" stroke="#00fff1"/>
<path d="M1184 371h15" stroke="#00fff0"/>
<path d="M1199 371h10" stroke="#00ffef"/>
<path d="M1209 371h5" stroke="#0fe"/>
<path d="M1214 371h5" stroke="#07ffee"/>
<path d="M1219 371h5" stroke="#0effed"/>
<path d="M1224 371h5" stroke="#17ffed"/>
<path d="M1229 371h5" stroke="#21ffec"/>
<path d="M1234 371h5" stroke="#2bffeb"/>
<path d="M1239 371h5" stroke="#36ffeb"/>
<path d="M1244 371h5" stroke="#42ffea"/>
<path d="M1249 371h5" stroke="#4fffea"/>
<path d="M1254 371h5" stroke="#5dffe9"/>
<path d="M1259 371h5" stroke="#6bffe8"/>
<path d="M1264 371h5" stroke="#7affe8"/>
<path d="M1269 371h5" stroke="#89ffe7"/>
<path d="M1274 371h5" stroke="#9affe6"/>
<path d="M1279 371h5" stroke="#abffe6"/>
<path d="M1284 371h5" stroke="#bdffe5"/>
<path d="M1289 371h5" stroke="#d0ffe4"/>
<path d="M1294 371h5" stroke="#e4ffe3"/>
<path d="M1299 371h5" stroke="#f9ffe2"/>
<path d="M1304 371h5" stroke="#fff0d5"/>
<path d="M1309 371h5" stroke="#ffdec3"/>
<path d="M1314 371h5" stroke="#ffcdb4"/>
<path d="M1319 371h5" stroke="#ffbea6"/>
<path d="M1324 371h5" stroke="#ffb09a"/>
<path d="M1329 371h5" stroke="#ffa48e"/>
<path d="M1334 371h5" stroke="#ff9984"/>
<path d="M1339 371h5" stroke="#ff8f7b"/>
<path d="M1344 371h5" stroke="#ff8672"/>
<path d="M1349 371h5" stroke="#ff7d6a"/>
<path d="M1354 371h5" stroke="#ff7563"/>
<path d="M1359 371h5" stroke="#ff6e5c"/>
<path d="M1364 371h5" stroke="#ff6756"/>
<path d="M1369 371h5" stroke="#ff6150"/>
<path d="M1374 371h5" stroke="#ff5b4b"/>
<path d="M1379 371h5" stroke="#ff5646"/>
<path d="M1384 371h5" stroke="#ff5141"/>
<path d="M1389 371h5" stroke="#ff4c3d"/>
<path d="M1394 371h5" stroke="#ff4739"/>
<path d="M1399 371h5" stroke="#ff4335"/>
<path d="M1404 371h5" stroke="#ff3f32"/>
<path d="M1409 371h5" stroke="#ff3c2f"/>
<path d="M1414 371h5" stroke="#ff382b"/>
<path d="M1419 371h5" stroke="#ff3528"/>
<path d="M1424 371h5" stroke="#ff3226"/>
<path d="M1429 371h5" stroke="#ff2f23"/>
<path d="M1434 371h5" stroke="#ff2c21"/>
<path d="M1439 371h5" stroke="#ff2a1e"/>
<path d="M1444 371h5" stroke="#ff271c"/>
<path d="M1449 371h5" stroke="#ff251a"/>
<path d="M1454 371h5" stroke="#ff2318"/>
<path d="M1459 371h5" stroke="#ff2116"/>
<path d="M1464 371h5" stroke="#ff1f14"/>
<path d="M1469 371h5" stroke="#ff1d13"/>
<path d="M1474 371h5" stroke="#ff1b11"/>
<path d="M1479 371h5" stroke="#ff1910"/>
<path d="M1484 371h5" stroke="#ff170e"/>
<path d="M1489 371h5" stroke="#ff160d"/>
<path d="M1494 371h5" stroke="#ff140c"/>
<path d="M1499 371h5" stroke="#ff130a"/>
<path d="M1504 371h5" stroke="#ff1209"/>
<path d="M1509 371h5" stroke="#ff1008"/>
<path d="M1514 371h5" stroke="#ff0f07"/>
<path d="M1519 371h5" stroke="#ff0e06"/>
<path d="M1524 371h5" stroke="#ff0d05"/>
<path d="M1529 371h5" stroke="#ff0c04"/>
<path d="M1534 371h5" stroke="#ff0b03"/>
<path d="M1539 371h5" stroke="#ff0a03"/>
<path d="M1544 371h5" stroke="#ff0902"/>
<path d="M1549 371h5" stroke="#ff0801"/>
<path d="M1554 371h5" stroke="#ff0701"/>
<path d="M1559 371h5" stroke="#ff0600"/>
<path d="M1564 371h10" stroke="#ff0500"/>
<path d="M1079 376h25" stroke="#00faff"/>
<path d="M1104 376h25" stroke="#00fbff"/>
<path d="M1129 376h20" stroke="#00fcff"/>
<path d="M1149 376h20" stroke="#00fdff"/>
<path d="M1169 376h20" stroke="#00feff"/>
<path d="M1189 376h15" stroke="#0ff"/>
<path d="M1204 376h5" stroke="#00fffe"/>
<path d="M1209 376h5" stroke="#02fffe"/>
<path d="M1214 376h5" stroke="#09fffe"/>
<path d="M1219 376h5" stroke="#11fffd"/>
<path d="M1224 376h5" stroke="#1afffd"/>
<path d="M1229 376h5" stroke="#25fffd"/>
<path d="M1234 376h5" stroke="#30fffc"/>
<path d="M1239 376h5" stroke="#3cfffc"/>
<path d="M1244 376h5" stroke="#48fffc"/>
<path d="M1249 376h5" stroke="#56fffb"/>
<path d="M1254 376h5" stroke="#64fffb"/>
<path d="M1259 376h5" stroke="#73fffa"/>
<path d="M1264 376h5" stroke="#83fffa"/>
<path d="M1269 376h5" stroke="#93fffa"/>
<path d="M1274 376h5" stroke="#a5fff9"/>
<path d="M1279 376h5" stroke="#b7fff9"/>
<path d="M1284 376h5" stroke="#cafff8"/>
<path d="M1289 376h5" stroke="#dffff8"/>
<path d="M1294 376h5" stroke="#f4fff7"/>
<path d="M1299 376h5" stroke="#fff4ec"/>
<path d="M1304 376h5" stroke="#ffe1d9"/>
<path d="M1309 376h5" stroke="#ffcfc7"/>
<path d="M1314 376h5" stroke="#ffbfb8"/>
<path d="M1319 376h5" stroke="#ffb1aa"/>
<path d="M1324 376h5" stroke="#ffa59d"/>
<path d="M1329 376h5" stroke="#ff9992"/>
<path d="M1334 376h5" stroke="#ff8f88"/>
<path d="M1339 376h5" stroke="#ff857e"/>
<path d="M1344 376h5" stroke="#ff7c75"/>
<path d="M1349 376h5" stroke="#ff746d"/>
<path d="M1354 376h5" stroke="#ff6d66"/>
<path d="M1359 376h5" stroke="#ff665f"/>
<path d="M1364 376h5" stroke="#ff6059"/>
<path d="M1369 376h5" stroke="#ff5a53"/>
<path d="M1374 376h5" stroke="#ff544e"/>
<path d="M1379 376h5" stroke="#ff4f49"/>
<path d="M1384 376h5" stroke="#ff4a44"/>
<path d="M1389 376h5" stroke="#ff4640"/>
<path d="M1394 376h5" stroke="#ff423c"/>
<path d="M1399 376h5" stroke="#ff3e38"/>
<path d="M1404 376h5" stroke="#ff3a34"/>
<path d="M1409 376h5" stroke="#ff3731"/>
<path d="M1414 376h5" stroke="#ff332e"/>
<path d="M1419 376h5" stroke="#ff302b"/>
<path d="M1424 376h5" stroke="#ff2d28"/>
<path d="M1429 376h5" stroke="#ff2b25"/>
<path d="M1434 376h5" stroke="#ff2823"/>
<path d="M1439 376h5" stroke="#ff2620"/>
<path d="M1444 376h5" stroke="#ff231e"/>
<path d="M1449 376h5" stroke="#ff211c"/>
<path d="M1454 376h5" stroke="#ff1f1a"/>
<path d="M1459 376h5" stroke="#ff1d18"/>
<path d="M1464 376h5" stroke="#ff1b16"/>
<path d="M1469 376h5" stroke="#ff1914"/>
<path d="M1474 376h5" stroke="#ff1813"/>
<path d="M1479 376h5" stroke="#ff1611"/>
<path d="M1484 376h5" stroke="#ff1410"/>
<path d="M1489 376h5" stroke="#ff130e"/>
<path d="M1494 376h5" stroke="#ff120d"/>
<path d="M1499 376h5" stroke="#ff100c"/>
<path d="M1504 376h5" stroke="#ff0f0a"/>
<path d="M1509 376h5" stroke="#ff0e09"/>
<path d="M1514 376h5" stroke="#ff0d08"/>
<path d="M1519 376h5" stroke="#ff0b07"/>
<path d="M1524 376h5" stroke="#ff0a06"/>
<path d="M1529 376h5" stroke="#ff0905"/>
<path d="M1534 376h10" stroke="#ff0804"/>
<path d="M1544 376h5" stroke="#ff0703"/>
<path d="M1549 376h5" stroke="#ff0602"/>
<path d="M1554 376h5" stroke="#ff0502"/>
<path d="M1559 376h5" stroke="#ff0401"/>
<path d="M1564 376h5" stroke="#ff0400"/>
<path d="M1569 376h5" stroke="#ff0300"/>
<path d="M1574 376h5" stroke="#ff0200"/>
<path d="M1079 381h70" stroke="#0ef"/>
<path d="M1149 381h60" stroke="#00efff"/>
<path d="M1209 381h5" stroke="#03f0ff"/>
<path d="M1214 381h5" stroke="#0af0ff"/>
<path d="M1219 381h5" stroke="#13f0ff"/>
<path d="M1224 381h5" stroke="#1cf0ff"/>
<path d="M1229 381h5" stroke="#26f0ff"/>
<path d="M1234 381h5" stroke="#31f0ff"/>
<path d="M1239 381h5" stroke="#3df0ff"/>
<path d="M1244 381h5" stroke="#4af0ff"/>
<path d="M1249 381h5" stroke="#58f0ff"/>
<path d="M1254 381h5" stroke="#66f1ff"/>
<path d="M1259 381h5" stroke="#75f1ff"/>
<path d="M1264 381h5" stroke="#85f1ff"/>
<path d="M1269 381h5" stroke="#96f1ff"/>
<path d="M1274 381h5" stroke="#a7f1ff"/>
<path d="M1279 381h5" stroke="#baf1ff"/>
<path d="M1284 381h5" stroke="#cef1ff"/>
<path d="M1289 381h5" stroke="#e2f2ff"/>
<path d="M1294 381h5" stroke="#f8f2ff"/>
<path d="M1299 381h5" stroke="#ffe4f0"/>
<path d="M1304 381h5" stroke="#ffd1dd"/>
<path d="M1309 381h5" stroke="#ffc1cb"/>
<path d="M1314 381h5" stroke="#ffb2bc"/>
<path d="M1319 381h5" stroke="#ffa5ae"/>
<path d="M1324 381h5" stroke="#ff99a1"/>
<path d="M1329 381h5" stroke="#ff8e96"/>
<path d="M1334 381h5" stroke="#ff858b"/>
<path d="M1339 381h5" stroke="#ff7c82"/>
<path d="M1344 381h5" stroke="#ff7379"/>
<path d="M1349 381h5" stroke="#ff6c71"/>
<path d="M1354 381h5" stroke="#ff6569"/>
<path d="M1359 381h5" stroke="#ff5e62"/>
<path d="M1364 381h5" stroke="#ff585c"/>
<path d="M1369 381h5" stroke="#ff5356"/>
<path d="M1374 381h5" stroke="#ff4e51"/>
<path d="M1379 381h5" stroke="#ff494c"/>
<path d="M1384 381h5" stroke="#ff4447"/>
<path d="M1389 381h5" stroke="#ff4042"/>
<path d="M1394 381h5" stroke="#ff3c3e"/>
<path d="M1399 381h5" stroke="#ff383a"/>
<path d="M1404 381h5" stroke="#ff3537"/>
<path d="M1409 381h5" stroke="#ff3233"/>
<path d="M1414 381h5" stroke="#ff2f30"/>
<path d="M1419 381h5" stroke="#ff2c2d"/>
<path d="M1424 381h5" stroke="#ff292a"/>
<path d="M1429 381h5" stroke="#ff2627"/>
<path d="M1434 381h5" stroke="#ff2425"/>
<path d="M1439 381h5" stroke="#f22"/>
<path d="M1444 381h5" stroke="#ff2020"/>
<path d="M1449 381h5" stroke="#ff1d1e"/>
<path d="M1454 381h5" stroke="#ff1b1c"/>
<path d="M1459 381h5" stroke="#ff1a1a"/>
<path d="M1464 381h5" stroke="#ff1818"/>
<path d="M1469 381h5" stroke="#ff1616"/>
<path d="M1474 381h5" stroke="#ff1514"/>
<path d="M1479 381h5" stroke="#ff1313"/>
<path d="M1484 381h5" stroke="#ff1211"/>
<path d="M1489 381h5" stroke="#ff1010"/>
<path d="M1494 381h5" stroke="#ff0f0e"/>
<path d="M1499 381h5" stroke="#ff0e0d"/>
<path d="M1504 381h5" stroke="#ff0c0c"/>
<path d="M1509 381h5" stroke="#ff0b0b"/>
<path d="M1514 381h5" stroke="#ff0a0a"/>
<path d="M1519 381h5" stroke="#ff0908"/>
<path d="M1524 381h5" stroke="#ff0807"/>
<path d="M1529 381h5" stroke="#ff0706"/>
<path d="M1534 381h5" stroke="#ff0606"/>
<path d="M1539 381h5" stroke="#ff0605"/>
<path d="M1544 381h5" stroke="#ff0504"/>
<path d="M1549 381h5" stroke="#ff0403"/>
<path d="M1554 381h10" stroke="#ff0302"/>
<path d="M1564 381h10" stroke="#ff0201"/>
<path d="M1574 381h10" stroke="#ff0100"/>
<path d="M1584 381h5" stroke="#f00"/>
<path d="M1084 386h50" stroke="#00e2ff"/>
<path d="M1134 386h55" stroke="#00e1ff"/>
<path d="M1189 386h20" stroke="#00e0ff"/>
<path d="M1209 386h5" stroke="#04e0ff"/>
<path d="M1214 386h5" stroke="#0ce0ff"/>
<path d="M1219 386h5" stroke="#14e0ff"/>
<path d="M1224 386h5" stroke="#1ee0ff"/>
<path d="M1229 386h5" stroke="#28e0ff"/>
<path d="M1234 386h5" stroke="#33dfff"/>
<path d="M1239 386h5" stroke="#3edfff"/>
<path d="M1244 386h5" stroke="#4bdfff"/>
<path d="M1249 386h5" stroke="#58dfff"/>
<path d="M1254 386h5" stroke="#66dfff"/>
<path d="M1259 386h5" stroke="#75dfff"/>
<path d="M1264 386h5" stroke="#84dfff"/>
<path d="M1269 386h5" stroke="#95deff"/>
<path d="M1274 386h5" stroke="#a6deff"/>
<path d="M1279 386h5" stroke="#b8deff"/>
<path d="M1284 386h5" stroke="#cbdeff"/>
<path d="M1289 386h5" stroke="#dfdeff"/>
<path d="M1294 386h5" stroke="#f4deff"/>
<path d="M1299 386h5" stroke="#ffd4f4"/>
<path d="M1304 386h5" stroke="#ffc3e1"/>
<path d="M1309 386h5" stroke="#ffb3cf"/>
<path d="M1314 386h5" stroke="#ffa6bf"/>
<path d="M1319 386h5" stroke="#ff99b1"/>
<path d="M1324 386h5" stroke="#ff8ea5"/>
<path d="M1329 386h5" stroke="#ff8499"/>
<path d="M1334 386h5" stroke="#ff7b8f"/>
<path d="M1339 386h5" stroke="#ff7285"/>
<path d="M1344 386h5" stroke="#ff6b7c"/>
<path d="M1349 386h5" stroke="#ff6474"/>
<path d="M1354 386h5" stroke="#ff5d6c"/>
<path d="M1359 386h5" stroke="#ff5765"/>
<path d="M1364 386h5" stroke="#ff515f"/>
<path d="M1369 386h5" stroke="#ff4c59"/>
<path d="M1374 386h5" stroke="#ff4754"/>
<path d="M1379 386h5" stroke="#ff434e"/>
<path d="M1384 386h5" stroke="#ff3e49"/>
<path d="M1389 386h5" stroke="#ff3a45"/>
<path d="M1394 386h5" stroke="#ff3741"/>
<path d="M1399 386h5" stroke="#ff333d"/>
<path d="M1404 386h5" stroke="#ff3039"/>
<path d="M1409 386h5" stroke="#ff2d35"/>
<path d="M1414 386h5" stroke="#ff2a32"/>
<path d="M1419 386h5" stroke="#ff272f"/>
<path d="M1424 386h5" stroke="#ff252c"/>
<path d="M1429 386h5" stroke="#ff2229"/>
<path d="M1434 386h5" stroke="#ff2027"/>
<path d="M1439 386h5" stroke="#ff1e24"/>
<path d="M1444 386h5" stroke="#ff1c22"/>
<path d="M1449 386h5" stroke="#ff1a20"/>
<path d="M1454 386h5" stroke="#ff181d"/>
<path d="M1459 386h5" stroke="#ff161b"/>
<path d="M1464 386h5" stroke="#ff151a"/>
<path d="M1469 386h5" stroke="#ff1318"/>
<path d="M1474 386h5" stroke="#ff1216"/>
<path d="M1479 386h5" stroke="#ff1014"/>
<path d="M1484 386h5" stroke="#ff0f13"/>
<path d="M1489 386h5" stroke="#ff0e11"/>
<path d="M1494 386h5" stroke="#ff0c10"/>
<path d="M1499 386h5" stroke="#ff0b0e"/>
<path d="M1504 386h5" stroke="#ff0a0d"/>
<path d="M1509 386h5" stroke="#ff090c"/>
<path d="M1514 386h5" stroke="#ff080b"/>
<path d="M1519 386h5" stroke="#ff070a"/>
<path d="M1524 386h5" stroke="#ff0609"/>
<path d="M1529 386h5" stroke="#ff0508"/>
<path d="M1534 386h5" stroke="#ff0507"/>
<path d="M1539 386h5" stroke="#ff0406"/>
<path d="M1544 386h5" stroke="#ff0305"/>
<path d="M1549 386h5" stroke="#ff0204"/>
<path d="M1554 386h5" stroke="#ff0203"/>
<path d="M1559 386h5" stroke="#ff0103"/>
<path d="M1564 386h5" stroke="#ff0102"/>
<path d="M1569 386h10" stroke="#ff0001"/>
<path d="M1579 386h15" stroke="#f00"/>
<path d="M1084 391h15" stroke="#00d7ff"/>
<path d="M1099 391h25" stroke="#00d6ff"/>
<path d="M1124 391h25" stroke="#00d5ff"/>
<path d="M1149 391h20" stroke="#00d4ff"/>
<path d="M1169 391h20" stroke="#00d3ff"/>
<path d="M1189 391h20" stroke="#00d2ff"/>
<path d="M1209 391h5" stroke="#06d1ff"/>
<path d="M1214 391h5" stroke="#0dd1ff"/>
<path d="M1219 391h5" stroke="#16d1ff"/>
<path d="M1224 391h5" stroke="#1fd0ff"/>
<path d="M1229 391h5" stroke="#29d0ff"/>
<path d="M1234 391h5" stroke="#34d0ff"/>
<path d="M1239 391h5" stroke="#3fcfff"/>
<path d="M1244 391h5" stroke="#4ccfff"/>
<path d="M1249 391h5" stroke="#59cfff"/>
<path d="M1254 391h5" stroke="#66ceff"/>
<path d="M1259 391h5" stroke="#75ceff"/>
<path d="M1264 391h5" stroke="#84cdff"/>
<path d="M1269 391h5" stroke="#94cdff"/>
<path d="M1274 391h5" stroke="#a5cdff"/>
<path d="M1279 391h5" stroke="#b6ccff"/>
<path d="M1284 391h5" stroke="#c9ccff"/>
<path d="M1289 391h5" stroke="#dccbff"/>
<path d="M1294 391h5" stroke="#f1cbff"/>
<path d="M1299 391h5" stroke="#ffc5f8"/>
<path d="M1304 391h5" stroke="#ffb5e4"/>
<path d="M1309 391h5" stroke="#ffa6d3"/>
<path d="M1314 391h5" stroke="#ff9ac3"/>
<path d="M1319 391h5" stroke="#ff8eb5"/>
<path d="M1324 391h5" stroke="#ff84a8"/>
<path d="M1329 391h5" stroke="#ff7a9d"/>
<path d="M1334 391h5" stroke="#ff7192"/>
<path d="M1339 391h5" stroke="#ff6988"/>
<path d="M1344 391h5" stroke="#ff627f"/>
<path d="M1349 391h5" stroke="#ff5c77"/>
<path d="M1354 391h5" stroke="#ff556f"/>
<path d="M1359 391h5" stroke="#ff5068"/>
<path d="M1364 391h5" stroke="#ff4a62"/>
<path d="M1369 391h5" stroke="#ff465c"/>
<path d="M1374 391h5" stroke="#ff4156"/>
<path d="M1379 391h5" stroke="#ff3d51"/>
<path d="M1384 391h5" stroke="#ff394c"/>
<path d="M1389 391h5" stroke="#ff3548"/>
<path d="M1394 391h5" stroke="#ff3243"/>
<path d="M1399 391h5" stroke="#ff2e3f"/>
<path d="M1404 391h5" stroke="#ff2b3b"/>
<path d="M1409 391h5" stroke="#ff2838"/>
<path d="M1414 391h5" stroke="#ff2634"/>
<path d="M1419 391h5" stroke="#ff2331"/>
<path d="M1424 391h5" stroke="#ff212e"/>
<path d="M1429 391h5" stroke="#ff1e2b"/>
<path d="M1434 391h5" stroke="#ff1c29"/>
<path d="M1439 391h5" stroke="#ff1a26"/>
<path d="M1444 391h5" stroke="#ff1824"/>
<path d="M1449 391h5" stroke="#ff1621"/>
<path d="M1454 391h5" stroke="#ff151f"/>
<path d="M1459 391h5" stroke="#ff131d"/>
<path d="M1464 391h5" stroke="#ff121b"/>
<path d="M1469 391h5" stroke="#ff1019"/>
<path d="M1474 391h5" stroke="#ff0f18"/>
<path d="M1479 391h5" stroke="#ff0d16"/>
<path d="M1484 391h5" stroke="#ff0c14"/>
<path d="M1489 391h5" stroke="#ff0b13"/>
<path d="M1494 391h5" stroke="#ff0a11"/>
<path d="M1499 391h5" stroke="#ff0910"/>
<path d="M1504 391h5" stroke="#ff080f"/>
<path d="M1509 391h5" stroke="#ff070d"/>
<path d="M1514 391h5" stroke="#ff060c"/>
<path d="M1519 391h5" stroke="#ff050b"/>
<path d="M1524 391h5" stroke="#ff040a"/>
<path d="M1529 391h5" stroke="#ff0309"/>
<path d="M1534 391h5" stroke="#ff0308"/>
<path d="M1539 391h5" stroke="#ff0207"/>
<path d="M1544 391h5" stroke="#ff0106"/>
<path d="M1549 391h5" stroke="#ff0105"/>
<path d="M1554 391h10" stroke="#ff0004"/>
<path d="M1564 391h5" stroke="#ff0003"/>
<path d="M1569 391h10" stroke="#ff0002"/>
<path d="M1579 391h10" stroke="#ff0001"/>
<path d="M1589 391h10" stroke="#f00"/>
<path d="M1084 396h15" stroke="#0cf"/>
<path d="M1099 396h15" stroke="#00cbff"/>
<path d="M1114 396h15" stroke="#00caff"/>
<path d="M1129 396h15" stroke="#00c9ff"/>
<path d="M1144 396h15" stroke="#00c8ff"/>
<path d="M1159 396h15" stroke="#00c7ff"/>
<path d="M1174 396h10" stroke="#00c6ff"/>
<path d="M1184 396h15" stroke="#00c5ff"/>
<path d="M1199 396h5" stroke="#00c4ff"/>
<path d="M1204 396h5" stroke="#01c4ff"/>
<path d="M1209 396h5" stroke="#07c3ff"/>
<path d="M1214 396h5" stroke="#0fc3ff"/>
<path d="M1219 396h5" stroke="#17c2ff"/>
<path d="M1224 396h5" stroke="#20c2ff"/>
<path d="M1229 396h5" stroke="#2ac1ff"/>
<path d="M1234 396h5" stroke="#35c1ff"/>
<path d="M1239 396h5" stroke="#40c0ff"/>
<path d="M1244 396h5" stroke="#4cc0ff"/>
<path d="M1249 396h5" stroke="#59bfff"/>
<path d="M1254 396h5" stroke="#67beff"/>
<path d="M1259 396h5" stroke="#75beff"/>
<path d="M1264 396h5" stroke="#84bdff"/>
<path d="M1269 396h5" stroke="#93bdff"/>
<path d="M1274 396h5" stroke="#a4bcff"/>
<path d="M1279 396h5" stroke="#b5bbff"/>
<path d="M1284 396h5" stroke="#c7bbff"/>
<path d="M1289 396h5" stroke="#dabaff"/>
<path d="M1294 396h5" stroke="#eeb9ff"/>
<path d="M1299 396h5" stroke="#ffb6fc"/>
<path d="M1304 396h5" stroke="#ffa7e8"/>
<path d="M1309 396h5" stroke="#ff9ad7"/>
<path d="M1314 396h5" stroke="#ff8ec7"/>
<path d="M1319 396h5" stroke="#ff83b9"/>
<path d="M1324 396h5" stroke="#ff79ac"/>
<path d="M1329 396h5" stroke="#ff70a0"/>
<path d="M1334 396h5" stroke="#ff6895"/>
<path d="M1339 396h5" stroke="#ff618b"/>
<path d="M1344 396h5" stroke="#ff5a82"/>
<path d="M1349 396h5" stroke="#ff547a"/>
<path d="M1354 396h5" stroke="#ff4e73"/>
<path d="M1359 396h5" stroke="#ff496b"/>
<path d="M1364 396h5" stroke="#ff4465"/>
<path d="M1369 396h5" stroke="#ff3f5f"/>
<path d="M1374 396h5" stroke="#ff3b59"/>
<path d="M1379 396h5" stroke="#ff3754"/>
<path d="M1384 396h5" stroke="#ff334f"/>
<path d="M1389 396h5" stroke="#ff304a"/>
<path d="M1394 396h5" stroke="#ff2c46"/>
<path d="M1399 396h5" stroke="#ff2942"/>
<path d="M1404 396h5" stroke="#ff273e"/>
<path d="M1409 396h5" stroke="#ff243a"/>
<path d="M1414 396h5" stroke="#ff2137"/>
<path d="M1419 396h5" stroke="#ff1f33"/>
<path d="M1424 396h5" stroke="#ff1d30"/>
<path d="M1429 396h5" stroke="#ff1b2d"/>
<path d="M1434 396h5" stroke="#ff192b"/>
<path d="M1439 396h5" stroke="#ff1728"/>
<path d="M1444 396h5" stroke="#ff1526"/>
<path d="M1449 396h5" stroke="#ff1323"/>
<path d="M1454 396h5" stroke="#ff1221"/>
<path d="M1459 396h5" stroke="#ff101f"/>
<path d="M1464 396h5" stroke="#ff0f1d"/>
<path d="M1469 396h5" stroke="#ff0d1b"/>
<path d="M1474 396h5" stroke="#ff0c19"/>
<path d="M1479 396h5" stroke="#ff0b18"/>
<path d="M1484 396h5" stroke="#ff0a16"/>
<path d="M1489 396h5" stroke="#ff0814"/>
<path d="M1494 396h5" stroke="#ff0713"/>
<path d="M1499 396h5" stroke="#ff0611"/>
<path d="M1504 396h5" stroke="#ff0610"/>
<path d="M1509 396h5" stroke="#ff050f"/>
<path d="M1514 396h5" stroke="#ff040d"/>
<path d="M1519 396h5" stroke="#ff030c"/>
<path d="M1524 396h5" stroke="#ff020b"/>
<path d="M1529 396h5" stroke="#ff020a"/>
<path d="M1534 396h5" stroke="#ff0109"/>
<path d="M1539 396h5" stroke="#ff0108"/>
<path d="M1544 396h5" stroke="#ff0007"/>
<path d="M1549 396h5" stroke="#ff0006"/>
<path d="M1554 396h10" stroke="#ff0005"/>
<path d="M1564 396h5" stroke="#ff0004"/>
<path d="M1569 396h10" stroke="#ff0003"/>
<path d="M1579 396h5" stroke="#ff0002"/>
<path d="M1584 396h10" stroke="#ff0001"/>
<path d="M1594 396h10" stroke="#f00"/>
<path d="M1084 401h5" stroke="#00c2ff"/>
<path d="M1089 401h15" stroke="#00c1ff"/>
<path d="M1104 401h10" stroke="#00c0ff"/>
<path d="M1114 401h15" stroke="#00bfff"/>
<path d="M1129 401h10" stroke="#00beff"/>
<path d="M1139 401h10" stroke="#00bdff"/>
<path d="M1149 401h10" stroke="#00bcff"/>
<path d="M1159 401h10" stroke="#0bf"/>
<path d="M1169 401h10" stroke="#00baff"/>
<path d="M1179 401h10" stroke="#00b9ff"/>
<path d="M1189 401h10" stroke="#00b8ff"/>
<path d="M1199 401h5" stroke="#00b7ff"/>
<path d="M1204 401h5" stroke="#02b6ff"/>
<path d="M1209 401h5" stroke="#09b6ff"/>
<path d="M1214 401h5" stroke="#10b5ff"/>
<path d="M1219 401h5" stroke="#19b5ff"/>
<path d="M1224 401h5" stroke="#22b4ff"/>
<path d="M1229 401h5" stroke="#2cb3ff"/>
<path d="M1234 401h5" stroke="#36b3ff"/>
<path d="M1239 401h5" stroke="#41b2ff"/>
<path d="M1244 401h5" stroke="#4db1ff"/>
<path d="M1249 401h5" stroke="#5ab0ff"/>
<path d="M1254 401h5" stroke="#67b0ff"/>
<path d="M1259 401h5" stroke="#75afff"/>
<path d="M1264 401h5" stroke="#83aeff"/>
<path d="M1269 401h5" stroke="#92adff"/>
<path d="M1274 401h5" stroke="#a2acff"/>
<path d="M1279 401h5" stroke="#b3abff"/>
<path d="M1284 401h5" stroke="#c5aaff"/>
<path d="M1289 401h5" stroke="#d7a9ff"/>
<path d="M1294 401h5" stroke="#eba8ff"/>
<path d="M1299 401h5" stroke="#ffa7ff"/>
<path d="M1304 401h5" stroke="#ff9aec"/>
<path d="M1309 401h5" stroke="#ff8dda"/>
<path d="M1314 401h5" stroke="#ff82ca"/>
<path d="M1319 401h5" stroke="#ff78bc"/>
<path d="M1324 401h5" stroke="#ff6faf"/>
<path d="M1329 401h5" stroke="#ff67a3"/>
<path d="M1334 401h5" stroke="#ff5f99"/>
<path d="M1339 401h5" stroke="#ff588f"/>
<path d="M1344 401h5" stroke="#ff5286"/>
<path d="M1349 401h5" stroke="#ff4c7d"/>
<path d="M1354 401h5" stroke="#ff4776"/>
<path d="M1359 401h5" stroke="#ff426e"/>
<path d="M1364 401h5" stroke="#ff3d68"/>
<path d="M1369 401h5" stroke="#ff3962"/>
<path d="M1374 401h5" stroke="#ff355c"/>
<path d="M1379 401h5" stroke="#ff3156"/>
<path d="M1384 401h5" stroke="#ff2e51"/>
<path d="M1389 401h5" stroke="#ff2b4d"/>
<path d="M1394 401h5" stroke="#ff2848"/>
<path d="M1399 401h5" stroke="#ff2544"/>
<path d="M1404 401h5" stroke="#ff2240"/>
<path d="M1409 401h5" stroke="#ff1f3c"/>
<path d="M1414 401h5" stroke="#ff1d39"/>
<path d="M1419 401h5" stroke="#ff1b36"/>
<path d="M1424 401h5" stroke="#ff1932"/>
<path d="M1429 401h5" stroke="#ff1730"/>
<path d="M1434 401h5" stroke="#ff152d"/>
<path d="M1439 401h5" stroke="#ff132a"/>
<path d="M1444 401h5" stroke="#ff1228"/>
<path d="M1449 401h5" stroke="#ff1025"/>
<path d="M1454 401h5" stroke="#ff0e23"/>
<path d="M1459 401h5" stroke="#ff0d21"/>
<path d="M1464 401h5" stroke="#ff0c1f"/>
<path d="M1469 401h5" stroke="#ff0a1d"/>
<path d="M1474 401h5" stroke="#ff091b"/>
<path d="M1479 401h5" stroke="#ff0819"/>
<path d="M1484 401h5" stroke="#ff0717"/>
<path d="M1489 401h5" stroke="#ff0616"/>
<path d="M1494 401h5" stroke="#ff0514"/>
<path d="M1499 401h5" stroke="#ff0413"/>
<path d="M1504 401h5" stroke="#ff0311"/>
<path d="M1509 401h5" stroke="#ff0310"/>
<path d="M1514 401h5" stroke="#ff020f"/>
<path d="M1519 401h5" stroke="#ff010e"/>
<path d="M1524 401h5" stroke="#ff010c"/>
<path d="M1529 401h5" stroke="#ff000b"/>
<path d="M1534 401h5" stroke="#ff000a"/>
<path d="M1539 401h5" stroke="#ff0009"/>
<path d="M1544 401h5" stroke="#ff0008"/>
<path d="M1549 401h5" stroke="#ff0007"/>
<path d="M1554 401h10" stroke="#ff0006"/>
<path d="M1564 401h5" stroke="#ff0005"/>
<path d="M1569 401h5" stroke="#ff0004"/>
<path d="M1574 401h10" stroke="#ff0003"/>
<path d="M1584 401h10" stroke="#ff0002"/>
<path d="M1594 401h10" stroke="#ff0001"/>
<path d="M1604 401h10" stroke="#f00"/>
<path d="M1089 406h10" stroke="#00b7ff"/>
<path d="M1099 406h10" stroke="#00b6ff"/>
<path d="M1109 406h10" stroke="#00b5ff"/>
<path d="M1119 406h10" stroke="#00b4ff"/>
<path d="M1129 406h10" stroke="#00b3ff"/>
<path d="M1139 406h10" stroke="#00b2ff"/>
<path d="M1149 406h10" stroke="#00b1ff"/>
<path d="M1159 406h5" stroke="#00b0ff"/>
<path d="M1164 406h10" stroke="#00afff"/>
<path d="M1174 406h5" stroke="#00aeff"/>
<path d="M1179 406h10" stroke="#00adff"/>
<path d="M1189 406h5" stroke="#00acff"/>
<path d="M1194 406h10" stroke="#00abff"/>
<path d="M1204 406h5" stroke="#04aaff"/>
<path d="M1209 406h5" stroke="#0aa9ff"/>
<path d="M1214 406h5" stroke="#12a8ff"/>
<path d="M1219 406h5" stroke="#1aa8ff"/>
<path d="M1224 406h5" stroke="#23a7ff"/>
<path d="M1229 406h5" stroke="#2da6ff"/>
<path d="M1234 406h5" stroke="#37a5ff"/>
<path d="M1239 406h5" stroke="#42a4ff"/>
<path d="M1244 406h5" stroke="#4ea3ff"/>
<path d="M1249 406h5" stroke="#5aa2ff"/>
<path d="M1254 406h5" stroke="#67a1ff"/>
<path d="M1259 406h5" stroke="#75a0ff"/>
<path d="M1264 406h5" stroke="#839fff"/>
<path d="M1269 406h5" stroke="#929eff"/>
<path d="M1274 406h5" stroke="#a19dff"/>
<path d="M1279 406h5" stroke="#b29cff"/>
<path d="M1284 406h5" stroke="#c39bff"/>
<path d="M1289 406h5" stroke="#d59aff"/>
<path d="M1294 406h5" stroke="#e899ff"/>
<path d="M1299 406h5" stroke="#fb98ff"/>
<path d="M1304 406h5" stroke="#ff8def"/>
<path d="M1309 406h5" stroke="#ff82de"/>
<path d="M1314 406h5" stroke="#ff77ce"/>
<path d="M1319 406h5" stroke="#ff6ec0"/>
<path d="M1324 406h5" stroke="#ff66b3"/>
<path d="M1329 406h5" stroke="#ff5ea7"/>
<path d="M1334 406h5" stroke="#ff579c"/>
<path d="M1339 406h5" stroke="#ff5092"/>
<path d="M1344 406h5" stroke="#ff4a89"/>
<path d="M1349 406h5" stroke="#ff4580"/>
<path d="M1354 406h5" stroke="#ff4079"/>
<path d="M1359 406h5" stroke="#ff3b71"/>
<path d="M1364 406h5" stroke="#ff376b"/>
<path d="M1369 406h5" stroke="#ff3364"/>
<path d="M1374 406h5" stroke="#ff2f5e"/>
<path d="M1379 406h5" stroke="#ff2c59"/>
<path d="M1384 406h5" stroke="#ff2954"/>
<path d="M1389 406h5" stroke="#ff264f"/>
<path d="M1394 406h5" stroke="#ff234b"/>
<path d="M1399 406h5" stroke="#ff2046"/>
<path d="M1404 406h5" stroke="#ff1e42"/>
<path d="M1409 406h5" stroke="#ff1b3f"/>
<path d="M1414 406h5" stroke="#ff193b"/>
<path d="M1419 406h5" stroke="#ff1738"/>
<path d="M1424 406h5" stroke="#ff1535"/>
<path d="M1429 406h5" stroke="#ff1332"/>
<path d="M1434 406h5" stroke="#ff112f"/>
<path d="M1439 406h5" stroke="#ff102c"/>
<path d="M1444 406h5" stroke="#ff0e29"/>
<path d="M1449 406h5" stroke="#ff0d27"/>
<path d="M1454 406h5" stroke="#ff0c25"/>
<path d="M1459 406h5" stroke="#ff0a23"/>
<path d="M1464 406h5" stroke="#ff0920"/>
<path d="M1469 406h5" stroke="#ff081e"/>
<path d="M1474 406h5" stroke="#ff071d"/>
<path d="M1479 406h5" stroke="#ff061b"/>
<path d="M1484 406h5" stroke="#ff0519"/>
<path d="M1489 406h5" stroke="#ff0417"/>
<path d="M1494 406h5" stroke="#ff0316"/>
<path d="M1499 406h5" stroke="#ff0214"/>
<path d="M1504 406h5" stroke="#ff0213"/>
<path d="M1509 406h5" stroke="#ff0111"/>
<path d="M1514 406h5" stroke="#ff0010"/>
<path d="M1519 406h5" stroke="#ff000f"/>
<path d="M1524 406h5" stroke="#ff000e"/>
<path d="M1529 406h5" stroke="#ff000d"/>
<path d="M1534 406h5" stroke="#ff000b"/>
<path d="M1539 406h5" stroke="#ff000a"/>
<path d="M1544 406h5" stroke="#ff0009"/>
<path d="M1549 406h10" stroke="#ff0008"/>
<path d="M1559 406h5" stroke="#ff0007"/>
<path d="M1564 406h5" stroke="#ff0006"/>
<path d="M1569 406h5" stroke="#ff0005"/>
<path d="M1574 406h10" stroke="#ff0004"/>
<path d="M1584 406h5" stroke="#ff0003"/>
<path d="M1589 406h10" stroke="#ff0002"/>
<path d="M1599 406h10" stroke="#ff0001"/>
<path d="M1609 406h10" stroke="#f00"/>
<path d="M1089 411h5" stroke="#00aeff"/>
<path d="M1094 411h5" stroke="#00adff"/>
<path d="M1099 411h10" stroke="#00acff"/>
<path d="M1109 411h10" stroke="#00abff"/>
<path d="M1119 411h10" stroke="#0af"/>
<path d="M1129 411h5" stroke="#00a9ff"/>
<path d="M1134 411h10" stroke="#00a8ff"/>
<path d="M1144 411h5" stroke="#00a7ff"/>
<path d="M1149 411h10" stroke="#00a6ff"/>
<path d="M1159 411h5" stroke="#00a5ff"/>
<path d="M1164 411h5" stroke="#00a4ff"/>
<path d="M1169 411h10" stroke="#00a3ff"/>
<path d="M1179 411h5" stroke="#00a2ff"/>
<path d="M1184 411h5" stroke="#00a1ff"/>
<path d="M1189 411h10" stroke="#00a0ff"/>
<path d="M1199 411h5" stroke="#009fff"/>
<path d="M1204 411h5" stroke="#059eff"/>
<path d="M1209 411h5" stroke="#0c9dff"/>
<path d="M1214 411h5" stroke="#139cff"/>
<path d="M1219 411h5" stroke="#1b9bff"/>
<path d="M1224 411h5" stroke="#249aff"/>
<path d="M1229 411h5" stroke="#2e99ff"/>
<path d="M1234 411h5" stroke="#3898ff"/>
<path d="M1239 411h5" stroke="#4397ff"/>
<path d="M1244 411h5" stroke="#4f96ff"/>
<path d="M1249 411h5" stroke="#5b95ff"/>
<path d="M1254 411h5" stroke="#6794ff"/>
<path d="M1259 411h5" stroke="#7593ff"/>
<path d="M1264 411h5" stroke="#8292ff"/>
<path d="M1269 411h5" stroke="#9191ff"/>
<path d="M1274 411h5" stroke="#a08fff"/>
<path d="M1279 411h5" stroke="#b08eff"/>
<path d="M1284 411h5" stroke="#c18dff"/>
<path d="M1289 411h5" stroke="#d38cff"/>
<path d="M1294 411h5" stroke="#e58aff"/>
<path d="M1299 411h5" stroke="#f889ff"/>
<path d="M1304 411h5" stroke="#ff81f3"/>
<path d="M1309 411h5" stroke="#ff76e1"/>
<path d="M1314 411h5" stroke="#ff6dd1"/>
<path d="M1319 411h5" stroke="#ff64c3"/>
<path d="M1324 411h5" stroke="#ff5cb6"/>
<path d="M1329 411h5" stroke="#f5a"/>
<path d="M1334 411h5" stroke="#ff4f9f"/>
<path d="M1339 411h5" stroke="#ff4995"/>
<path d="M1344 411h5" stroke="#ff438c"/>
<path d="M1349 411h5" stroke="#ff3e83"/>
<path d="M1354 411h5" stroke="#ff397c"/>
<path d="M1359 411h5" stroke="#ff3574"/>
<path d="M1364 411h5" stroke="#ff316d"/>
<path d="M1369 411h5" stroke="#ff2d67"/>
<path d="M1374 411h5" stroke="#ff2a61"/>
<path d="M1379 411h5" stroke="#ff275c"/>
<path d="M1384 411h5" stroke="#ff2456"/>
<path d="M1389 411h5" stroke="#ff2152"/>
<path d="M1394 411h5" stroke="#ff1e4d"/>
<path d="M1399 411h5" stroke="#ff1c49"/>
<path d="M1404 411h5" stroke="#ff1945"/>
<path d="M1409 411h5" stroke="#ff1741"/>
<path d="M1414 411h5" stroke="#ff153d"/>
<path d="M1419 411h5" stroke="#ff133a"/>
<path d="M1424 411h5" stroke="#ff1137"/>
<path d="M1429 411h5" stroke="#ff1034"/>
<path d="M1434 411h5" stroke="#ff0e31"/>
<path d="M1439 411h5" stroke="#ff0d2e"/>
<path d="M1444 411h5" stroke="#ff0b2b"/>
<path d="M1449 411h5" stroke="#ff0a29"/>
<path d="M1454 411h5" stroke="#ff0927"/>
<path d="M1459 411h5" stroke="#ff0824"/>
<path d="M1464 411h5" stroke="#ff0622"/>
<path d="M1469 411h5" stroke="#ff0520"/>
<path d="M1474 411h5" stroke="#ff041e"/>
<path d="M1479 411h5" stroke="#ff041c"/>
<path d="M1484 411h5" stroke="#ff031b"/>
<path d="M1489 411h5" stroke="#ff0219"/>
<path d="M1494 411h5" stroke="#ff0117"/>
<path d="M1499 411h5" stroke="#ff0116"/>
<path d="M1504 411h5" stroke="#ff0014"/>
<path d="M1509 411h5" stroke="#ff0013"/>
<path d="M1514 411h5" stroke="#ff0012"/>
<path d="M1519 411h5" stroke="#ff0010"/>
<path d="M1524 411h5" stroke="#ff000f"/>
<path d="M1529 411h5" stroke="#ff000e"/>
<path d="M1534 411h5" stroke="#ff000d"/>
<path d="M1539 411h5" stroke="#ff000c"/>
<path d="M1544 411h5" stroke="#ff000b"/>
<path d="M1549 411h5" stroke="#ff000a"/>
<path d="M1554 411h5" stroke="#ff0009"/>
<path d="M1559 411h5" stroke="#ff0008"/>
<path d="M1564 411h5" stroke="#ff0007"/>
<path d="M1569 411h5" stroke="#ff0006"/>
<path d="M1574 411h10" stroke="#ff0005"/>
<path d="M1584 411h5" stroke="#ff0004"/>
<path d="M1589 411h10" stroke="#ff0003"/>
<path d="M1599 411h5" stroke="#ff0002"/>
<path d="M1604 411h10" stroke="#ff0001"/>
<path d="M1614 411h10" stroke="#f00"/>
<path d="M1089 416h10" stroke="#00a4ff"/>
<path d="M1099 416h5" stroke="#00a3ff"/>
<path d="M1104 416h10" stroke="#00a2ff"/>
<path d="M1114 416h5" stroke="#00a1ff"/>
<path d="M1119 416h10" stroke="#00a0ff"/>
<path d="M1129 416h5" stroke="#009fff"/>
<path d="M1134 416h5" stroke="#009eff"/>
<path d="M1139 416h10" stroke="#009dff"/>
<path d="M1149 416h5" stroke="#009cff"/>
<path d="M1154 416h5" stroke="#009bff"/>
<path d="M1159 416h10" stroke="#009aff"/>
<path d="M1169 416h5" stroke="#09f"/>
<path d="M1174 416h5" stroke="#0098ff"/>
<path d="M1179 416h5" stroke="#0097ff"/>
<path d="M1184 416h5" stroke="#0096ff"/>
<path d="M1189 416h5" stroke="#0095ff"/>
<path d="M1194 416h5" stroke="#0094ff"/>
<path d="M1199 416h5" stroke="#0193ff"/>
<path d="M1204 416h5" stroke="#0692ff"/>
<path d="M1209 416h5" stroke="#0d91ff"/>
<path d="M1214 416h5" stroke="#1590ff"/>
<path d="M1219 416h5" stroke="#1d8fff"/>
<path d="M1224 416h5" stroke="#268eff"/>
<path d="M1229 416h5" stroke="#2f8dff"/>
<path d="M1234 416h5" stroke="#398cff"/>
<path d="M1239 416h5" stroke="#448bff"/>
<path d="M1244 416h5" stroke="#4f8aff"/>
<path d="M1249 416h5" stroke="#5b89ff"/>
<path d="M1254 416h5" stroke="#6788ff"/>
<path d="M1259 416h5" stroke="#7486ff"/>
<path d="M1264 416h5" stroke="#8285ff"/>
<path d="M1269 416h5" stroke="#9084ff"/>
<path d="M1274 416h5" stroke="#9f82ff"/>
<path d="M1279 416h5" stroke="#af81ff"/>
<path d="M1284 416h5" stroke="#bf80ff"/>
<path d="M1289 416h5" stroke="#d07eff"/>
<path d="M1294 416h5" stroke="#e27dff"/>
<path d="M1299 416h5" stroke="#f57bff"/>
<path d="M1304 416h5" stroke="#ff75f6"/>
<path d="M1309 416h5" stroke="#ff6be4"/>
<path d="M1314 416h5" stroke="#ff62d5"/>
<path d="M1319 416h5" stroke="#ff5ac6"/>
<path d="M1324 416h5" stroke="#ff53b9"/>
<path d="M1329 416h5" stroke="#ff4dad"/>
<path d="M1334 416h5" stroke="#ff47a2"/>
<path d="M1339 416h5" stroke="#ff4198"/>
<path d="M1344 416h5" stroke="#ff3c8f"/>
<path d="M1349 416h5" stroke="#ff3786"/>
<path d="M1354 416h5" stroke="#ff337e"/>
<path d="M1359 416h5" stroke="#ff2f77"/>
<path d="M1364 416h5" stroke="#ff2b70"/>
<path d="M1369 416h5" stroke="#ff286a"/>
<path d="M1374 416h5" stroke="#ff2564"/>
<path d="M1379 416h5" stroke="#ff225e"/>
<path d="M1384 416h5" stroke="#ff1f59"/>
<path d="M1389 416h5" stroke="#ff1c54"/>
<path d="M1394 416h5" stroke="#ff1a4f"/>
<path d="M1399 416h5" stroke="#ff174b"/>
<path d="M1404 416h5" stroke="#ff1547"/>
<path d="M1409 416h5" stroke="#ff1343"/>
<path d="M1414 416h5" stroke="#ff1140"/>
<path d="M1419 416h5" stroke="#ff103c"/>
<path d="M1424 416h5" stroke="#ff0e39"/>
<path d="M1429 416h5" stroke="#ff0d36"/>
<path d="M1434 416h5" stroke="#ff0b33"/>
<path d="M1439 416h5" stroke="#ff0a30"/>
<path d="M1444 416h5" stroke="#ff082d"/>
<path d="M1449 416h5" stroke="#ff072b"/>
<path d="M1454 416h5" stroke="#ff0628"/>
<path d="M1459 416h5" stroke="#ff0526"/>
<path d="M1464 416h5" stroke="#ff0424"/>
<path d="M1469 416h5" stroke="#ff0322"/>
<path d="M1474 416h5" stroke="#ff0220"/>
<path d="M1479 416h5" stroke="#ff021e"/>
<path d="M1484 416h5" stroke="#ff011c"/>
<path d="M1489 416h5" stroke="#ff001a"/>
<path d="M1494 416h5" stroke="#ff0019"/>
<path d="M1499 416h5" stroke="#ff0017"/>
<path d="M1504 416h5" stroke="#ff0016"/>
<path d="M1509 416h5" stroke="#ff0014"/>
<path d="M1514 416h5" stroke="#ff0013"/>
<path d="M1519 416h5" stroke="#ff0012"/>
<path d="M1524 416h5" stroke="#ff0010"/>
<path d="M1529 416h5" stroke="#ff000f"/>
<path d="M1534 416h5" stroke="#ff000e"/>
<path d="M1539 416h5" stroke="#ff000d"/>
<path d="M1544 416h5" stroke="#ff000c"/>
<path d="M1549 416h5" stroke="#ff000b"/>
<path d="M1554 416h5" stroke="#ff000a"/>
<path d="M1559 416h5" stroke="#ff0009"/>
<path d="M1564 416h5" stroke="#ff0008"/>
<path d="M1569 416h5" stroke="#ff0007"/>
<path d="M1574 416h5" stroke="#ff0006"/>
<path d="M1579 416h10" stroke="#ff0005"/>
<path d="M1589 416h5" stroke="#ff0004"/>
<path d="M1594 416h10" stroke="#ff0003"/>
<path d="M1604 416h10" stroke="#ff0002"/>
<path d="M1614 416h10" stroke="#ff0001"/>
<path d="M1624 416h10" stroke="#f00"/>
<path d="M1094 421h10" stroke="#009aff"/>
<path d="M1104 421h5" stroke="#09f"/>
<path d="M1109 421h10" stroke="#0098ff"/>
<path d="M1119 421h5" stroke="#0097ff"/>
<path d="M1124 421h5" stroke="#0096ff"/>
<path d="M1129 421h10" stroke="#0095ff"/>
<path d="M1139 421h5" stroke="#0094ff"/>
<path d="M1144 421h5" stroke="#0093ff"/>
<path d="M1149 421h5" stroke="#0092ff"/>
<path d="M1154 421h5" stroke="#0091ff"/>
<path d="M1159 421h5" stroke="#0090ff"/>
<path d="M1164 421h5" stroke="#008fff"/>
<path d="M1169 421h10" stroke="#008eff"/>
<path d="M1179 421h5" stroke="#008dff"/>
<path d="M1184 421h5" stroke="#008cff"/>
<path d="M1189 421h5" stroke="#008bff"/>
<path d="M1194 421h5" stroke="#008aff"/>
<path d="M1199 421h5" stroke="#0289ff"/>
<path d="M1204 421h5" stroke="#0888ff"/>
<path d="M1209 421h5" stroke="#0e86ff"/>
<path d="M1214 421h5" stroke="#1685ff"/>
<path d="M1219 421h5" stroke="#1e84ff"/>
<path d="M1224 421h5" stroke="#2783ff"/>
<path d="M1229 421h5" stroke="#3082ff"/>
<path d="M1234 421h5" stroke="#3a81ff"/>
<path d="M1239 421h5" stroke="#457fff"/>
<path d="M1244 421h5" stroke="#507eff"/>
<path d="M1249 421h5" stroke="#5b7dff"/>
<path d="M1254 421h5" stroke="#687cff"/>
<path d="M1259 421h5" stroke="#747aff"/>
<path d="M1264 421h5" stroke="#8279ff"/>
<path d="M1269 421h5" stroke="#9077ff"/>
<path d="M1274 421h5" stroke="#9e76ff"/>
<path d="M1279 421h5" stroke="#ae74ff"/>
<path d="M1284 421h5" stroke="#be73ff"/>
<path d="M1289 421h5" stroke="#ce71ff"/>
<path d="M1294 421h5" stroke="#e070ff"/>
<path d="M1299 421h5" stroke="#f26eff"/>
<path d="M1304 421h5" stroke="#ff6af9"/>
<path d="M1309 421h5" stroke="#ff61e8"/>
<path d="M1314 421h5" stroke="#ff59d8"/>
<path d="M1319 421h5" stroke="#ff51ca"/>
<path d="M1324 421h5" stroke="#ff4bbc"/>
<path d="M1329 421h5" stroke="#ff44b0"/>
<path d="M1334 421h5" stroke="#ff3fa5"/>
<path d="M1339 421h5" stroke="#ff3a9b"/>
<path d="M1344 421h5" stroke="#ff3592"/>
<path d="M1349 421h5" stroke="#ff3189"/>
<path d="M1354 421h5" stroke="#ff2d81"/>
<path d="M1359 421h5" stroke="#ff297a"/>
<path d="M1364 421h5" stroke="#ff2673"/>
<path d="M1369 421h5" stroke="#ff226c"/>
<path d="M1374 421h5" stroke="#ff1f66"/>
<path d="M1379 421h5" stroke="#ff1d61"/>
<path d="M1384 421h5" stroke="#ff1a5c"/>
<path d="M1389 421h5" stroke="#ff1857"/>
<path d="M1394 421h5" stroke="#ff1552"/>
<path d="M1399 421h5" stroke="#ff134d"/>
<path d="M1404 421h5" stroke="#ff1149"/>
<path d="M1409 421h5" stroke="#ff1045"/>
<path d="M1414 421h5" stroke="#ff0e42"/>
<path d="M1419 421h5" stroke="#ff0c3e"/>
<path d="M1424 421h5" stroke="#ff0b3b"/>
<path d="M1429 421h5" stroke="#ff0938"/>
<path d="M1434 421h5" stroke="#ff0835"/>
<path d="M1439 421h5" stroke="#ff0732"/>
<path d="M1444 421h5" stroke="#ff062f"/>
<path d="M1449 421h5" stroke="#ff052d"/>
<path d="M1454 421h5" stroke="#ff042a"/>
<path d="M1459 421h5" stroke="#ff0328"/>
<path d="M1464 421h5" stroke="#ff0226"/>
<path d="M1469 421h5" stroke="#ff0124"/>
<path d="M1474 421h5" stroke="#ff0122"/>
<path d="M1479 421h5" stroke="#ff0020"/>
<path d="M1484 421h5" stroke="#ff001e"/>
<path d="M1489 421h5" stroke="#ff001c"/>
<path d="M1494 421h5" stroke="#ff001a"/>
<path d="M1499 421h5" stroke="#ff0019"/>
<path d="M1504 421h5" stroke="#ff0017"/>
<path d="M1509 421h5" stroke="#ff0016"/>
<path d="M1514 421h5" stroke="#ff0014"/>
<path d="M1519 421h5" stroke="#ff0013"/>
<path d="M1524 421h5" stroke="#ff0012"/>
<path d="M1529 421h5" stroke="#ff0010"/>
<path d="M1534 421h5" stroke="#ff000f"/>
<path d="M1539 421h5" stroke="#ff000e"/>
<path d="M1544 421h5" stroke="#ff000d"/>
<path d="M1549 421h5" stroke="#ff000c"/>
<path d="M1554 421h5" stroke="#ff000b"/>
<path d="M1559 421h5" stroke="#ff000a"/>
<path d="M1564 421h5" stroke="#ff0009"/>
<path d="M1569 421h5" stroke="#ff0008"/>
<path d="M1574 421h5" stroke="#ff0007"/>
<path d="M1579 421h10" stroke="#ff0006"/>
<path d="M1589 421h5" stroke="#ff0005"/>
<path d="M1594 421h10" stroke="#ff0004"/>
<path d="M1604 421h5" stroke="#ff0003"/>
<path d="M1609 421h10" stroke="#ff0002"/>
<path d="M1619 421h10" stroke="#ff0001"/>
<path d="M1629 421h5" stroke="#f00"/>
<path d="M1094 426h5" stroke="#0092ff"/>
<path d="M1099 426h5" stroke="#0091ff"/>
<path d="M1104 426h5" stroke="#0090ff"/>
<path d="M1109 426h10" stroke="#008fff"/>
<path d="M1119 426h5" stroke="#008eff"/>
<path d="M1124 426h5" stroke="#008dff"/>
<path d="M1129 426h5" stroke="#008cff"/>
<path d="M1134 426h5" stroke="#008bff"/>
<path d="M1139 426h5" stroke="#008aff"/>
<path d="M1144 426h10" stroke="#0089ff"/>
<path d="M1154 426h5" stroke="#08f"/>
<path d="M1159 426h5" stroke="#0087ff"/>
<path d="M1164 426h5" stroke="#0086ff"/>
<path d="M1169 426h5" stroke="#0085ff"/>
<path d="M1174 426h5" stroke="#0084ff"/>
<path d="M1179 426h5" stroke="#0083ff"/>
<path d="M1184 426h5" stroke="#0082ff"/>
<path d="M1189 426h5" stroke="#0080ff"/>
<path d="M1194 426h5" stroke="#007fff"/>
<path d="M1199 426h5" stroke="#037eff"/>
<path d="M1204 426h5" stroke="#097dff"/>
<path d="M1209 426h5" stroke="#107cff"/>
<path d="M1214 426h5" stroke="#177bff"/>
<path d="M1219 426h5" stroke="#1f7aff"/>
<path d="M1224 426h5" stroke="#2878ff"/>
<path d="M1229 426h5" stroke="#3177ff"/>
<path d="M1234 426h5" stroke="#3b76ff"/>
<path d="M1239 426h5" stroke="#4674ff"/>
<path d="M1244 426h5" stroke="#5073ff"/>
<path d="M1249 426h5" stroke="#5c72ff"/>
<path d="M1254 426h5" stroke="#6870ff"/>
<path d="M1259 426h5" stroke="#746fff"/>
<path d="M1264 426h5" stroke="#816dff"/>
<path d="M1269 426h5" stroke="#8f6cff"/>
<path d="M1274 426h5" stroke="#9d6aff"/>
<path d="M1279 426h5" stroke="#ac69ff"/>
<path d="M1284 426h5" stroke="#bc67ff"/>
<path d="M1289 426h5" stroke="#cc65ff"/>
<path d="M1294 426h5" stroke="#dd64ff"/>
<path d="M1299 426h5" stroke="#ef62ff"/>
<path d="M1304 426h5" stroke="#ff5ffd"/>
<path d="M1309 426h5" stroke="#ff57eb"/>
<path d="M1314 426h5" stroke="#ff4fdb"/>
<path d="M1319 426h5" stroke="#ff48cd"/>
<path d="M1324 426h5" stroke="#ff42c0"/>
<path d="M1329 426h5" stroke="#ff3db4"/>
<path d="M1334 426h5" stroke="#ff37a8"/>
<path d="M1339 426h5" stroke="#ff339e"/>
<path d="M1344 426h5" stroke="#ff2e95"/>
<path d="M1349 426h5" stroke="#ff2a8c"/>
<path d="M1354 426h5" stroke="#ff2784"/>
<path d="M1359 426h5" stroke="#ff237d"/>
<path d="M1364 426h5" stroke="#ff2076"/>
<path d="M1369 426h5" stroke="#ff1d6f"/>
<path d="M1374 426h5" stroke="#ff1b69"/>
<path d="M1379 426h5" stroke="#ff1863"/>
<path d="M1384 426h5" stroke="#ff165e"/>
<path d="M1389 426h5" stroke="#ff1359"/>
<path d="M1394 426h5" stroke="#ff1154"/>
<path d="M1399 426h5" stroke="#ff0f50"/>
<path d="M1404 426h5" stroke="#ff0e4c"/>
<path d="M1409 426h5" stroke="#ff0c48"/>
<path d="M1414 426h5" stroke="#ff0b44"/>
<path d="M1419 426h5" stroke="#ff0940"/>
<path d="M1424 426h5" stroke="#ff083d"/>
<path d="M1429 426h5" stroke="#ff063a"/>
<path d="M1434 426h5" stroke="#ff0537"/>
<path d="M1439 426h5" stroke="#ff0434"/>
<path d="M1444 426h5" stroke="#ff0331"/>
<path d="M1449 426h5" stroke="#ff022e"/>
<path d="M1454 426h5" stroke="#ff022c"/>
<path d="M1459 426h5" stroke="#ff012a"/>
<path d="M1464 426h5" stroke="#ff0027"/>
<path d="M1469 426h5" stroke="#ff0025"/>
<path d="M1474 426h5" stroke="#ff0023"/>
<path d="M1479 426h5" stroke="#ff0021"/>
<path d="M1484 426h5" stroke="#ff001f"/>
<path d="M1489 426h5" stroke="#ff001e"/>
<path d="M1494 426h5" stroke="#ff001c"/>
<path d="M1499 426h5" stroke="#ff001a"/>
<path d="M1504 426h5" stroke="#ff0019"/>
<path d="M1509 426h5" stroke="#ff0017"/>
<path d="M1514 426h5" stroke="#ff0016"/>
<path d="M1519 426h5" stroke="#ff0014"/>
<path d="M1524 426h5" stroke="#ff0013"/>
<path d="M1529 426h5" stroke="#ff0012"/>
<path d="M1534 426h5" stroke="#ff0010"/>
<path d="M1539 426h5" stroke="#ff000f"/>
<path d="M1544 426h5" stroke="#ff000e"/>
<path d="M1549 426h5" stroke="#ff000d"/>
<path d="M1554 426h5" stroke="#ff000c"/>
<path d="M1559 426h5" stroke="#ff000b"/>
<path d="M1564 426h5" stroke="#ff000a"/>
<path d="M1569 426h5" stroke="#ff0009"/>
<path d="M1574 426h5" stroke="#ff0008"/>
<path d="M1579 426h10" stroke="#ff0007"/>
<path d="M1589 426h5" stroke="#ff0006"/>
<path d="M1594 426h5" stroke="#ff0005"/>
<path d="M1599 426h10" stroke="#ff0004"/>
<path d="M1094 431h5" stroke="#0089ff"/>
<path d="M1099 431h10" stroke="#08f"/>
<path d="M1109 431h5" stroke="#0087ff"/>
<path d="M1114 431h5" stroke="#0086ff"/>
<path d="M1119 431h5" stroke="#0085ff"/>
<path d="M1124 431h5" stroke="#0084ff"/>
<path d="M1129 431h5" stroke="#0083ff"/>
<path d="M1134 431h5" stroke="#0082ff"/>
<path d="M1139 431h5" stroke="#0081ff"/>
<path d="M1144 431h5" stroke="#0080ff"/>
<path d="M1149 431h5" stroke="#007fff"/>
<path d="M1154 431h5" stroke="#007eff"/>
<path d="M1159 431h5" stroke="#007dff"/>
<path d="M1164 431h5" stroke="#007cff"/>
<path d="M1169 431h5" stroke="#007bff"/>
<path d="M1174 431h5" stroke="#007aff"/>
<path d="M1179 431h5" stroke="#0079ff"/>
<path d="M1184 431h5" stroke="#0078ff"/>
<path d="M1189 431h5" stroke="#07f"/>
<path d="M1194 431h5" stroke="#0076ff"/>
<path d="M1199 431h5" stroke="#0474ff"/>
<path d="M1204 431h5" stroke="#0a73ff"/>
<path d="M1209 431h5" stroke="#1172ff"/>
<path d="M1214 431h5" stroke="#1971ff"/>
<path d="M1219 431h5" stroke="#216fff"/>
<path d="M1224 431h5" stroke="#296eff"/>
<path d="M1229 431h5" stroke="#326dff"/>
<path d="M1234 431h5" stroke="#3c6bff"/>
<path d="M1239 431h5" stroke="#466aff"/>
<path d="M1244 431h5" stroke="#5168ff"/>
<path d="M1249 431h5" stroke="#5c67ff"/>
<path d="M1254 431h5" stroke="#6866ff"/>
<path d="M1259 431h5" stroke="#7464ff"/>
<path d="M1264 431h5" stroke="#8162ff"/>
<path d="M1269 431h5" stroke="#8f61ff"/>
<path d="M1274 431h5" stroke="#9d5fff"/>
<path d="M1279 431h5" stroke="#ab5dff"/>
<path d="M1284 431h5" stroke="#ba5cff"/>
<path d="M1289 431h5" stroke="#ca5aff"/>
<path d="M1294 431h5" stroke="#db58ff"/>
<path d="M1299 431h5" stroke="#ec56ff"/>
<path d="M1304 431h5" stroke="#fe54ff"/>
<path d="M1309 431h5" stroke="#ff4dee"/>
<path d="M1314 431h5" stroke="#ff46de"/>
<path d="M1319 431h5" stroke="#ff40d0"/>
<path d="M1324 431h5" stroke="#ff3ac3"/>
<path d="M1329 431h5" stroke="#ff35b7"/>
<path d="M1334 431h5" stroke="#ff30ac"/>
<path d="M1339 431h5" stroke="#ff2ca1"/>
<path d="M1344 431h5" stroke="#ff2898"/>
<path d="M1349 431h5" stroke="#ff248f"/>
<path d="M1354 431h5" stroke="#ff2187"/>
<path d="M1359 431h5" stroke="#ff1e7f"/>
<path d="M1364 431h5" stroke="#ff1b78"/>
<path d="M1369 431h5" stroke="#ff1872"/>
<path d="M1374 431h5" stroke="#ff166c"/>
<path d="M1379 431h5" stroke="#ff1466"/>
<path d="M1384 431h5" stroke="#ff1160"/>
<path d="M1389 431h5" stroke="#ff0f5b"/>
<path d="M1394 431h5" stroke="#ff0e57"/>
<path d="M1399 431h5" stroke="#ff0c52"/>
<path d="M1404 431h5" stroke="#ff0a4e"/>
<path d="M1409 431h5" stroke="#ff094a"/>
<path d="M1414 431h5" stroke="#ff0746"/>
<path d="M1419 431h5" stroke="#ff0642"/>
<path d="M1424 431h5" stroke="#ff053f"/>
<path d="M1429 431h5" stroke="#ff043c"/>
<path d="M1434 431h5" stroke="#ff0339"/>
<path d="M1439 431h5" stroke="#ff0236"/>
<path d="M1444 431h5" stroke="#ff0133"/>
<path d="M1449 431h5" stroke="#ff0030"/>
<path d="M1454 431h5" stroke="#ff002e"/>
<path d="M1459 431h5" stroke="#ff002b"/>
<path d="M1464 431h5" stroke="#ff0029"/>
<path d="M1469 431h5" stroke="#ff0027"/>
<path d="M1474 431h5" stroke="#ff0025"/>
<path d="M1479 431h5" stroke="#ff0023"/>
<path d="M1484 431h5" stroke="#ff0021"/>
<path d="M1489 431h5" stroke="#ff001f"/>
<path d="M1494 431h5" stroke="#ff001d"/>
<path d="M1499 431h5" stroke="#ff001c"/>
<path d="M1504 431h5" stroke="#ff001a"/>
<path d="M1509 431h5" stroke="#ff0018"/>
<path d="M1514 431h5" stroke="#ff0017"/>
<path d="M1519 431h5" stroke="#ff0016"/>
<path d="M1524 431h5" stroke="#ff0014"/>
<path d="M1529 431h5" stroke="#ff0013"/>
<path d="M1534 431h5" stroke="#ff0012"/>
<path d="M1539 431h5" stroke="#ff0010"/>
<path d="M1544 431h5" stroke="#ff000f"/>
<path d="M1549 431h5" stroke="#ff000e"/>
<path d="M1554 431h5" stroke="#ff000d"/>
<path d="M1559 431h5" stroke="#ff000c"/>
<path d="M1564 431h5" stroke="#ff000b"/>
<path d="M1569 431h5" stroke="#ff000a"/>
<path d="M1574 431h5" stroke="#ff0009"/>
<path d="M1579 431h10" stroke="#ff0008"/>
<path d="M1589 431h5" stroke="#ff0007"/>
<path d="M1099 436h5" stroke="#0080ff"/>
<path d="M1104 436h5" stroke="#007fff"/>
<path d="M1109 436h10" stroke="#007eff"/>
<path d="M1119 436h5" stroke="#007dff"/>
<path d="M1124 436h5" stroke="#007cff"/>
<path d="M1129 436h5" stroke="#007bff"/>
<path d="M1134 436h5" stroke="#007aff"/>
<path d="M1139 436h5" stroke="#0079ff"/>
<path d="M1144 436h5" stroke="#0078ff"/>
<path d="M1149 436h5" stroke="#07f"/>
<path d="M1154 436h5" stroke="#0076ff"/>
<path d="M1159 436h5" stroke="#0074ff"/>
<path d="M1164 436h5" stroke="#0073ff"/>
<path d="M1169 436h5" stroke="#0072ff"/>
<path d="M1174 436h5" stroke="#0071ff"/>
<path d="M1179 436h5" stroke="#0070ff"/>
<path d="M1184 436h5" stroke="#006fff"/>
<path d="M1189 436h5" stroke="#006eff"/>
<path d="M1194 436h5" stroke="#016cff"/>
<path d="M1199 436h5" stroke="#066bff"/>
<path d="M1204 436h5" stroke="#0c6aff"/>
<path d="M1209 436h5" stroke="#1268ff"/>
<path d="M1214 436h5" stroke="#1a67ff"/>
<path d="M1219 436h5" stroke="#26f"/>
<path d="M1224 436h5" stroke="#2a64ff"/>
<path d="M1229 436h5" stroke="#3363ff"/>
<path d="M1234 436h5" stroke="#3d61ff"/>
<path d="M1239 436h5" stroke="#4760ff"/>
<path d="M1244 436h5" stroke="#525eff"/>
<path d="M1249 436h5" stroke="#5d5dff"/>
<path d="M1254 436h5" stroke="#685bff"/>
<path d="M1259 436h5" stroke="#745aff"/>
<path d="M1264 436h5" stroke="#8158ff"/>
<path d="M1269 436h5" stroke="#8e56ff"/>
<path d="M1274 436h5" stroke="#9c55ff"/>
<path d="M1279 436h5" stroke="#aa53ff"/>
<path d="M1284 436h5" stroke="#b951ff"/>
<path d="M1289 436h5" stroke="#c94fff"/>
<path d="M1294 436h5" stroke="#d94dff"/>
<path d="M1299 436h5" stroke="#ea4bff"/>
<path d="M1304 436h5" stroke="#fb49ff"/>
<path d="M1309 436h5" stroke="#ff44f1"/>
<path d="M1314 436h5" stroke="#ff3de2"/>
<path d="M1319 436h5" stroke="#ff38d3"/>
<path d="M1324 436h5" stroke="#ff32c6"/>
<path d="M1329 436h5" stroke="#ff2eba"/>
<path d="M1334 436h5" stroke="#ff29af"/>
<path d="M1339 436h5" stroke="#ff25a4"/>
<path d="M1344 436h5" stroke="#ff229b"/>
<path d="M1349 436h5" stroke="#ff1f92"/>
<path d="M1354 436h5" stroke="#ff1b8a"/>
<path d="M1359 436h5" stroke="#ff1982"/>
<path d="M1364 436h5" stroke="#ff167b"/>
<path d="M1369 436h5" stroke="#ff1474"/>
<path d="M1374 436h5" stroke="#ff116e"/>
<path d="M1379 436h5" stroke="#ff0f68"/>
<path d="M1384 436h5" stroke="#ff0d63"/>
<path d="M1389 436h5" stroke="#ff0c5e"/>
<path d="M1394 436h5" stroke="#ff0a59"/>
<path d="M1399 436h5" stroke="#ff0854"/>
<path d="M1404 436h5" stroke="#ff0750"/>
<path d="M1409 436h5" stroke="#ff064c"/>
<path d="M1414 436h5" stroke="#ff0448"/>
<path d="M1419 436h5" stroke="#ff0345"/>
<path d="M1424 436h5" stroke="#ff0241"/>
<path d="M1429 436h5" stroke="#ff013e"/>
<path d="M1434 436h5" stroke="#ff013b"/>
<path d="M1439 436h5" stroke="#ff0038"/>
<path d="M1444 436h5" stroke="#ff0035"/>
<path d="M1449 436h5" stroke="#ff0032"/>
<path d="M1454 436h5" stroke="#ff0030"/>
<path d="M1459 436h5" stroke="#ff002d"/>
<path d="M1464 436h5" stroke="#ff002b"/>
<path d="M1469 436h5" stroke="#ff0029"/>
<path d="M1474 436h5" stroke="#ff0026"/>
<path d="M1479 436h5" stroke="#ff0024"/>
<path d="M1484 436h5" stroke="#f02"/>
<path d="M1489 436h5" stroke="#ff0021"/>
<path d="M1494 436h5" stroke="#ff001f"/>
<path d="M1499 436h5" stroke="#ff001d"/>
<path d="M1504 436h5" stroke="#ff001b"/>
<path d="M1509 436h5" stroke="#ff001a"/>
<path d="M1514 436h5" stroke="#ff0018"/>
<path d="M1519 436h5" stroke="#ff0017"/>
<path d="M1524 436h5" stroke="#ff0016"/>
<path d="M1529 436h5" stroke="#ff0014"/>
<path d="M1534 436h5" stroke="#ff0013"/>
<path d="M1539 436h5" stroke="#ff0012"/>
<path d="M1544 436h5" stroke="#f01"/>
<path d="M1549 436h5" stroke="#ff000f"/>
<path d="M1554 436h5" stroke="#ff000e"/>
<path d="M1559 436h5" stroke="#ff000d"/>
<path d="M1564 436h5" stroke="#ff000c"/>
<path d="M1569 436h5" stroke="#ff000b"/>
<path d="M1574 436h5" stroke="#ff000a"/>
<path d="M1099 441h5" stroke="#0078ff"/>
<path d="M1104 441h5" stroke="#07f"/>
<path d="M1109 441h5" stroke="#0076ff"/>
<path d="M1114 441h5" stroke="#0075ff"/>
<path d="M1119 441h5" stroke="#0074ff"/>
<path d="M1124 441h5" stroke="#0073ff"/>
<path d="M1129 441h5" stroke="#0072ff"/>
<path d="M1134 441h5" stroke="#0071ff"/>
<path d="M1139 441h5" stroke="#0070ff"/>
<path d="M1144 441h5" stroke="#006fff"/>
<path d="M1149 441h5" stroke="#006eff"/>
<path d="M1154 441h5" stroke="#006dff"/>
<path d="M1159 441h5" stroke="#006cff"/>
<path d="M1164 441h5" stroke="#006bff"/>
<path d="M1169 441h5" stroke="#006aff"/>
<path d="M1174 441h5" stroke="#0068ff"/>
<path d="M1179 441h5" stroke="#0067ff"/>
<path d="M1184 441h5" stroke="#06f"/>
<path d="M1189 441h5" stroke="#0065ff"/>
<path d="M1194 441h5" stroke="#0263ff"/>
<path d="M1199 441h5" stroke="#0762ff"/>
<path d="M1204 441h5" stroke="#0d61ff"/>
<path d="M1209 441h5" stroke="#145fff"/>
<path d="M1214 441h5" stroke="#1b5eff"/>
<path d="M1219 441h5" stroke="#235dff"/>
<path d="M1224 441h5" stroke="#2b5bff"/>
<path d="M1229 441h5" stroke="#345aff"/>
<path d="M1234 441h5" stroke="#3e58ff"/>
<path d="M1239 441h5" stroke="#4857ff"/>
<path d="M1244 441h5" stroke="#5255ff"/>
<path d="M1249 441h5" stroke="#5d53ff"/>
<path d="M1254 441h5" stroke="#6852ff"/>
<path d="M1259 441h5" stroke="#7450ff"/>
<path d="M1264 441h5" stroke="#814eff"/>
<path d="M1269 441h5" stroke="#8e4dff"/>
<path d="M1274 441h5" stroke="#9b4bff"/>
<path d="M1279 441h5" stroke="#a949ff"/>
<path d="M1284 441h5" stroke="#b847ff"/>
<path d="M1289 441h5" stroke="#c745ff"/>
<path d="M1294 441h5" stroke="#d743ff"/>
<path d="M1299 441h5" stroke="#e741ff"/>
<path d="M1304 441h5" stroke="#f83fff"/>
<path d="M1309 441h5" stroke="#ff3bf5"/>
<path d="M1314 441h5" stroke="#ff35e5"/>
<path d="M1319 441h5" stroke="#ff30d6"/>
<path d="M1324 441h5" stroke="#ff2bc9"/>
<path d="M1329 441h5" stroke="#ff27bd"/>
<path d="M1334 441h5" stroke="#ff23b1"/>
<path d="M1339 441h5" stroke="#ff1fa7"/>
<path d="M1344 441h5" stroke="#ff1c9e"/>
<path d="M1349 441h5" stroke="#ff1995"/>
<path d="M1354 441h5" stroke="#ff168d"/>
<path d="M1359 441h5" stroke="#ff1485"/>
<path d="M1364 441h5" stroke="#ff117e"/>
<path d="M1369 441h5" stroke="#ff0f77"/>
<path d="M1374 441h5" stroke="#ff0d71"/>
<path d="M1379 441h5" stroke="#ff0b6b"/>
<path d="M1384 441h5" stroke="#ff0a65"/>
<path d="M1389 441h5" stroke="#ff0860"/>
<path d="M1394 441h5" stroke="#ff075b"/>
<path d="M1399 441h5" stroke="#ff0557"/>
<path d="M1404 441h5" stroke="#ff0452"/>
<path d="M1409 441h5" stroke="#ff034e"/>
<path d="M1414 441h5" stroke="#ff024a"/>
<path d="M1419 441h5" stroke="#ff0147"/>
<path d="M1424 441h5" stroke="#ff0043"/>
<path d="M1429 441h5" stroke="#ff0040"/>
<path d="M1434 441h5" stroke="#ff003d"/>
<path d="M1439 441h5" stroke="#ff003a"/>
<path d="M1444 441h5" stroke="#ff0037"/>
<path d="M1449 441h5" stroke="#ff0034"/>
<path d="M1454 441h5" stroke="#ff0031"/>
<path d="M1459 441h5" stroke="#ff002f"/>
<path d="M1464 441h5" stroke="#ff002d"/>
<path d="M1469 441h5" stroke="#ff002a"/>
<path d="M1474 441h5" stroke="#ff0028"/>
<path d="M1479 441h5" stroke="#ff0026"/>
<path d="M1484 441h5" stroke="#ff0024"/>
<path d="M1489 441h5" stroke="#f02"/>
<path d="M1494 441h5" stroke="#ff0020"/>
<path d="M1499 441h5" stroke="#ff001f"/>
<path d="M1504 441h5" stroke="#ff001d"/>
<path d="M1509 441h5" stroke="#ff001b"/>
<path d="M1514 441h5" stroke="#ff001a"/>
<path d="M1519 441h5" stroke="#ff0018"/>
<path d="M1524 441h5" stroke="#ff0017"/>
<path d="M1529 441h5" stroke="#ff0016"/>
<path d="M1534 441h5" stroke="#ff0014"/>
<path d="M1539 441h5" stroke="#ff0013"/>
<path d="M1544 441h5" stroke="#ff0012"/>
<path d="M1549 441h5" stroke="#f01"/>
<path d="M1554 441h5" stroke="#ff000f"/>
<path d="M1559 441h5" stroke="#ff000e"/>
<path d="M1564 441h5" stroke="#ff000d"/>
<path d="M1099 446h5" stroke="#0071ff"/>
<path d="M1104 446h5" stroke="#0070ff"/>
<path d="M1109 446h5" stroke="#006fff"/>
<path d="M1114 446h5" stroke="#006eff"/>
<path d="M1119 446h5" stroke="#006dff"/>
<path d="M1124 446h5" stroke="#006cff"/>
<path d="M1129 446h5" stroke="#006bff"/>
<path d="M1134 446h5" stroke="#0069ff"/>
<path d="M1139 446h5" stroke="#0068ff"/>
<path d="M1144 446h5" stroke="#0067ff"/>
<path d="M1149 446h5" stroke="#06f"/>
<path d="M1154 446h5" stroke="#0065ff"/>
<path d="M1159 446h5" stroke="#0064ff"/>
<path d="M1164 446h5" stroke="#0063ff"/>
<path d="M1169 446h5" stroke="#0061ff"/>
<path d="M1174 446h5" stroke="#0060ff"/>
<path d="M1179 446h5" stroke="#005fff"/>
<path d="M1184 446h5" stroke="#005eff"/>
<path d="M1189 446h5" stroke="#005cff"/>
<path d="M1194 446h5" stroke="#035bff"/>
<path d="M1199 446h5" stroke="#0859ff"/>
<path d="M1204 446h5" stroke="#0e58ff"/>
<path d="M1209 446h5" stroke="#1557ff"/>
<path d="M1214 446h5" stroke="#1c55ff"/>
<path d="M1219 446h5" stroke="#2454ff"/>
<path d="M1224 446h5" stroke="#2c52ff"/>
<path d="M1229 446h5" stroke="#3551ff"/>
<path d="M1234 446h5" stroke="#3f4fff"/>
<path d="M1239 446h5" stroke="#484eff"/>
<path d="M1244 446h5" stroke="#534cff"/>
<path d="M1249 446h5" stroke="#5d4aff"/>
<path d="M1254 446h5" stroke="#6949ff"/>
<path d="M1259 446h5" stroke="#7447ff"/>
<path d="M1264 446h5" stroke="#8045ff"/>
<path d="M1269 446h5" stroke="#8d43ff"/>
<path d="M1274 446h5" stroke="#9a42ff"/>
<path d="M1279 446h5" stroke="#a840ff"/>
<path d="M1284 446h5" stroke="#b63eff"/>
<path d="M1289 446h5" stroke="#c53cff"/>
<path d="M1294 446h5" stroke="#d53aff"/>
<path d="M1299 446h5" stroke="#e538ff"/>
<path d="M1304 446h5" stroke="#f536ff"/>
<path d="M1309 446h5" stroke="#ff32f8"/>
<path d="M1314 446h5" stroke="#ff2de8"/>
<path d="M1319 446h5" stroke="#ff28d9"/>
<path d="M1324 446h5" stroke="#ff24cc"/>
<path d="M1329 446h5" stroke="#ff20c0"/>
<path d="M1334 446h5" stroke="#ff1db4"/>
<path d="M1339 446h5" stroke="#ff19aa"/>
<path d="M1344 446h5" stroke="#ff16a0"/>
<path d="M1349 446h5" stroke="#ff1498"/>
<path d="M1354 446h5" stroke="#ff118f"/>
<path d="M1359 446h5" stroke="#ff0f88"/>
<path d="M1364 446h5" stroke="#ff0d80"/>
<path d="M1369 446h5" stroke="#ff0b7a"/>
<path d="M1374 446h5" stroke="#ff0973"/>
<path d="M1379 446h5" stroke="#ff086d"/>
<path d="M1384 446h5" stroke="#ff0668"/>
<path d="M1389 446h5" stroke="#ff0563"/>
<path d="M1394 446h5" stroke="#ff035e"/>
<path d="M1399 446h5" stroke="#ff0259"/>
<path d="M1404 446h5" stroke="#ff0155"/>
<path d="M1409 446h5" stroke="#ff0150"/>
<path d="M1414 446h5" stroke="#ff004c"/>
<path d="M1419 446h5" stroke="#ff0049"/>
<path d="M1424 446h5" stroke="#ff0045"/>
<path d="M1429 446h5" stroke="#ff0042"/>
<path d="M1434 446h5" stroke="#ff003f"/>
<path d="M1439 446h5" stroke="#ff003c"/>
<path d="M1444 446h5" stroke="#ff0039"/>
<path d="M1449 446h5" stroke="#ff0036"/>
<path d="M1454 446h5" stroke="#f03"/>
<path d="M1459 446h5" stroke="#ff0031"/>
<path d="M1464 446h5" stroke="#ff002e"/>
<path d="M1469 446h5" stroke="#ff002c"/>
<path d="M1474 446h5" stroke="#ff002a"/>
<path d="M1479 446h5" stroke="#ff0028"/>
<path d="M1484 446h5" stroke="#ff0026"/>
<path d="M1489 446h5" stroke="#ff0024"/>
<path d="M1494 446h5" stroke="#f02"/>
<path d="M1499 446h5" stroke="#ff0020"/>
<path d="M1504 446h5" stroke="#ff001e"/>
<path d="M1509 446h5" stroke="#ff001d"/>
<path d="M1514 446h5" stroke="#ff001b"/>
<path d="M1519 446h5" stroke="#ff001a"/>
<path d="M1524 446h5" stroke="#ff0018"/>
<path d="M1529 446h5" stroke="#ff0017"/>
<path d="M1534 446h5" stroke="#ff0015"/>
<path d="M1539 446h5" stroke="#ff0014"/>
<path d="M1544 446h5" stroke="#ff0013"/>
<path d="M1549 446h5" stroke="#ff0012"/>
<path d="M1104 451h5" stroke="#0068ff"/>
<path d="M1109 451h5" stroke="#0067ff"/>
<path d="M1114 451h5" stroke="#06f"/>
<path d="M1119 451h5" stroke="#0065ff"/>
<path d="M1124 451h5" stroke="#0064ff"/>
<path d="M1129 451h5" stroke="#0063ff"/>
<path d="M1134 451h5" stroke="#0062ff"/>
<path d="M1139 451h5" stroke="#0061ff"/>
<path d="M1144 451h5" stroke="#0060ff"/>
<path d="M1149 451h5" stroke="#005eff"/>
<path d="M1154 451h5" stroke="#005dff"/>
<path d="M1159 451h5" stroke="#005cff"/>
<path d="M1164 451h5" stroke="#005bff"/>
<path d="M1169 451h5" stroke="#0059ff"/>
<path d="M1174 451h5" stroke="#0058ff"/>
<path d="M1179 451h5" stroke="#0057ff"/>
<path d="M1184 451h5" stroke="#05f"/>
<path d="M1189 451h5" stroke="#0054ff"/>
<path d="M1194 451h5" stroke="#0453ff"/>
<path d="M1199 451h5" stroke="#0951ff"/>
<path d="M1204 451h5" stroke="#0f50ff"/>
<path d="M1209 451h5" stroke="#164eff"/>
<path d="M1214 451h5" stroke="#1d4dff"/>
<path d="M1219 451h5" stroke="#254bff"/>
<path d="M1224 451h5" stroke="#2e4aff"/>
<path d="M1229 451h5" stroke="#3648ff"/>
<path d="M1234 451h5" stroke="#3f47ff"/>
<path d="M1239 451h5" stroke="#4945ff"/>
<path d="M1244 451h5" stroke="#5343ff"/>
<path d="M1249 451h5" stroke="#5e42ff"/>
<path d="M1254 451h5" stroke="#6940ff"/>
<path d="M1259 451h5" stroke="#743eff"/>
<path d="M1264 451h5" stroke="#803dff"/>
<path d="M1269 451h5" stroke="#8d3bff"/>
<path d="M1274 451h5" stroke="#9939ff"/>
<path d="M1279 451h5" stroke="#a737ff"/>
<path d="M1284 451h5" stroke="#b535ff"/>
<path d="M1289 451h5" stroke="#c333ff"/>
<path d="M1294 451h5" stroke="#d331ff"/>
<path d="M1299 451h5" stroke="#e22fff"/>
<path d="M1304 451h5" stroke="#f32dff"/>
<path d="M1309 451h5" stroke="#ff2afb"/>
<path d="M1314 451h5" stroke="#ff25eb"/>
<path d="M1319 451h5" stroke="#ff21dc"/>
<path d="M1324 451h5" stroke="#ff1dcf"/>
<path d="M1329 451h5" stroke="#ff1ac3"/>
<path d="M1334 451h5" stroke="#ff17b7"/>
<path d="M1339 451h5" stroke="#ff14ad"/>
<path d="M1344 451h5" stroke="#ff11a3"/>
<path d="M1349 451h5" stroke="#ff0f9a"/>
<path d="M1354 451h5" stroke="#ff0d92"/>
<path d="M1359 451h5" stroke="#ff0b8a"/>
<path d="M1364 451h5" stroke="#ff0983"/>
<path d="M1369 451h5" stroke="#ff077c"/>
<path d="M1374 451h5" stroke="#ff0676"/>
<path d="M1379 451h5" stroke="#ff0470"/>
<path d="M1384 451h5" stroke="#ff036a"/>
<path d="M1389 451h5" stroke="#ff0265"/>
<path d="M1394 451h5" stroke="#ff0160"/>
<path d="M1399 451h5" stroke="#ff005b"/>
<path d="M1404 451h5" stroke="#ff0057"/>
<path d="M1409 451h5" stroke="#ff0053"/>
<path d="M1414 451h5" stroke="#ff004f"/>
<path d="M1419 451h5" stroke="#ff004b"/>
<path d="M1424 451h5" stroke="#ff0047"/>
<path d="M1429 451h5" stroke="#f04"/>
<path d="M1434 451h5" stroke="#ff0041"/>
<path d="M1439 451h5" stroke="#ff003d"/>
<path d="M1444 451h5" stroke="#ff003a"/>
<path d="M1449 451h5" stroke="#ff0038"/>
<path d="M1454 451h5" stroke="#ff0035"/>
<path d="M1459 451h5" stroke="#ff0032"/>
<path d="M1464 451h5" stroke="#ff0030"/>
<path d="M1469 451h5" stroke="#ff002e"/>
<path d="M1474 451h5" stroke="#ff002b"/>
<path d="M1479 451h5" stroke="#ff0029"/>
<path d="M1484 451h5" stroke="#ff0027"/>
<path d="M1489 451h5" stroke="#ff0025"/>
<path d="M1494 451h5" stroke="#ff0023"/>
<path d="M1499 451h5" stroke="#f02"/>
<path d="M1504 451h5" stroke="#ff0020"/>
<path d="M1509 451h5" stroke="#ff001e"/>
<path d="M1514 451h5" stroke="#ff001d"/>
<path d="M1519 451h5" stroke="#ff001b"/>
<path d="M1524 451h5" stroke="#ff001a"/>
<path d="M1529 451h5" stroke="#ff0018"/>
<path d="M1534 451h5" stroke="#ff0017"/>
<path d="M1104 456h5" stroke="#0061ff"/>
<path d="M1109 456h5" stroke="#0060ff"/>
<path d="M1114 456h5" stroke="#005fff"/>
<path d="M1119 456h5" stroke="#005eff"/>
<path d="M1124 456h5" stroke="#005dff"/>
<path d="M1129 456h5" stroke="#005cff"/>
<path d="M1134 456h5" stroke="#005aff"/>
<path d="M1139 456h5" stroke="#0059ff"/>
<path d="M1144 456h5" stroke="#0058ff"/>
<path d="M1149 456h5" stroke="#0057ff"/>
<path d="M1154 456h5" stroke="#0056ff"/>
<path d="M1159 456h5" stroke="#0054ff"/>
<path d="M1164 456h5" stroke="#0053ff"/>
<path d="M1169 456h5" stroke="#0052ff"/>
<path d="M1174 456h5" stroke="#0050ff"/>
<path d="M1179 456h5" stroke="#004fff"/>
<path d="M1184 456h5" stroke="#004eff"/>
<path d="M1189 456h5" stroke="#004cff"/>
<path d="M1194 456h5" stroke="#054bff"/>
<path d="M1199 456h5" stroke="#0a4aff"/>
<path d="M1204 456h5" stroke="#1148ff"/>
<path d="M1209 456h5" stroke="#1747ff"/>
<path d="M1214 456h5" stroke="#1f45ff"/>
<path d="M1219 456h5" stroke="#2644ff"/>
<path d="M1224 456h5" stroke="#2e42ff"/>
<path d="M1229 456h5" stroke="#3740ff"/>
<path d="M1234 456h5" stroke="#403fff"/>
<path d="M1239 456h5" stroke="#4a3dff"/>
<path d="M1244 456h5" stroke="#543bff"/>
<path d="M1249 456h5" stroke="#5e3aff"/>
<path d="M1254 456h5" stroke="#6938ff"/>
<path d="M1259 456h5" stroke="#7436ff"/>
<path d="M1264 456h5" stroke="#8034ff"/>
<path d="M1269 456h5" stroke="#8c32ff"/>
<path d="M1274 456h5" stroke="#9931ff"/>
<path d="M1279 456h5" stroke="#a62fff"/>
<path d="M1284 456h5" stroke="#b42dff"/>
<path d="M1289 456h5" stroke="#c22bff"/>
<path d="M1294 456h5" stroke="#d129ff"/>
<path d="M1299 456h5" stroke="#e027ff"/>
<path d="M1304 456h5" stroke="#f025ff"/>
<path d="M1309 456h5" stroke="#ff22fd"/>
<path d="M1314 456h5" stroke="#ff1eee"/>
<path d="M1319 456h5" stroke="#ff1adf"/>
<path d="M1324 456h5" stroke="#ff17d2"/>
<path d="M1329 456h5" stroke="#ff14c5"/>
<path d="M1334 456h5" stroke="#ff11ba"/>
<path d="M1339 456h5" stroke="#ff0fb0"/>
<path d="M1344 456h5" stroke="#ff0ca6"/>
<path d="M1349 456h5" stroke="#ff0a9d"/>
<path d="M1354 456h5" stroke="#ff0895"/>
<path d="M1359 456h5" stroke="#ff078d"/>
<path d="M1364 456h5" stroke="#ff0586"/>
<path d="M1369 456h5" stroke="#ff047f"/>
<path d="M1374 456h5" stroke="#ff0278"/>
<path d="M1379 456h5" stroke="#ff0172"/>
<path d="M1384 456h5" stroke="#ff006d"/>
<path d="M1389 456h5" stroke="#ff0067"/>
<path d="M1394 456h5" stroke="#ff0062"/>
<path d="M1399 456h5" stroke="#ff005d"/>
<path d="M1404 456h5" stroke="#ff0059"/>
<path d="M1409 456h5" stroke="#f05"/>
<path d="M1414 456h5" stroke="#ff0051"/>
<path d="M1419 456h5" stroke="#ff004d"/>
<path d="M1424 456h5" stroke="#ff0049"/>
<path d="M1429 456h5" stroke="#ff0046"/>
<path d="M1434 456h5" stroke="#ff0042"/>
<path d="M1439 456h5" stroke="#ff003f"/>
<path d="M1444 456h5" stroke="#ff003c"/>
<path d="M1449 456h5" stroke="#ff0039"/>
<path d="M1454 456h5" stroke="#ff0037"/>
<path d="M1459 456h5" stroke="#ff0034"/>
<path d="M1464 456h5" stroke="#ff0032"/>
<path d="M1469 456h5" stroke="#ff002f"/>
<path d="M1474 456h5" stroke="#ff002d"/>
<path d="M1479 456h5" stroke="#ff002b"/>
<path d="M1484 456h5" stroke="#ff0029"/>
<path d="M1489 456h5" stroke="#ff0027"/>
<path d="M1494 456h5" stroke="#ff0025"/>
<path d="M1499 456h5" stroke="#ff0023"/>
<path d="M1504 456h5" stroke="#ff0021"/>
<path d="M1509 456h5" stroke="#ff0020"/>
<path d="M1514 456h5" stroke="#ff001e"/>
<path d="M1519 456h5" stroke="#ff001c"/>
<path d="M1104 461h5" stroke="#005aff"/>
<path d="M1109 461h5" stroke="#0059ff"/>
<path d="M1114 461h5" stroke="#0058ff"/>
<path d="M1119 461h5" stroke="#0057ff"/>
<path d="M1124 461h5" stroke="#0056ff"/>
<path d="M1129 461h5" stroke="#05f"/>
<path d="M1134 461h5" stroke="#0053ff"/>
<path d="M1139 461h5" stroke="#0052ff"/>
<path d="M1144 461h5" stroke="#0051ff"/>
<path d="M1149 461h5" stroke="#0050ff"/>
<path d="M1154 461h5" stroke="#004eff"/>
<path d="M1159 461h5" stroke="#004dff"/>
<path d="M1164 461h5" stroke="#004cff"/>
<path d="M1169 461h5" stroke="#004bff"/>
<path d="M1174 461h5" stroke="#0049ff"/>
<path d="M1179 461h5" stroke="#0048ff"/>
<path d="M1184 461h5" stroke="#0046ff"/>
<path d="M1189 461h5" stroke="#0145ff"/>
<path d="M1194 461h5" stroke="#0644ff"/>
<path d="M1199 461h5" stroke="#0c42ff"/>
<path d="M1204 461h5" stroke="#1241ff"/>
<path d="M1209 461h5" stroke="#183fff"/>
<path d="M1214 461h5" stroke="#203eff"/>
<path d="M1219 461h5" stroke="#273cff"/>
<path d="M1224 461h5" stroke="#2f3aff"/>
<path d="M1229 461h5" stroke="#3839ff"/>
<path d="M1234 461h5" stroke="#4137ff"/>
<path d="M1239 461h5" stroke="#4a35ff"/>
<path d="M1244 461h5" stroke="#5434ff"/>
<path d="M1249 461h5" stroke="#5e32ff"/>
<path d="M1254 461h5" stroke="#6930ff"/>
<path d="M1259 461h5" stroke="#742eff"/>
<path d="M1264 461h5" stroke="#802dff"/>
<path d="M1269 461h5" stroke="#8c2bff"/>
<path d="M1274 461h5" stroke="#9829ff"/>
<path d="M1279 461h5" stroke="#a527ff"/>
<path d="M1284 461h5" stroke="#b225ff"/>
<path d="M1289 461h5" stroke="#c023ff"/>
<path d="M1294 461h5" stroke="#cf21ff"/>
<path d="M1299 461h5" stroke="#de1fff"/>
<path d="M1304 461h5" stroke="#ed1dff"/>
<path d="M1309 461h5" stroke="#fe1bff"/>
<path d="M1314 461h5" stroke="#ff17f0"/>
<path d="M1319 461h5" stroke="#ff14e2"/>
<path d="M1324 461h5" stroke="#ff11d5"/>
<path d="M1329 461h5" stroke="#ff0ec8"/>
<path d="M1334 461h5" stroke="#ff0cbd"/>
<path d="M1339 461h5" stroke="#ff0ab2"/>
<path d="M1344 461h5" stroke="#ff08a9"/>
<path d="M1349 461h5" stroke="#ff06a0"/>
<path d="M1354 461h5" stroke="#ff0497"/>
<path d="M1359 461h5" stroke="#ff038f"/>
<path d="M1364 461h5" stroke="#ff0288"/>
<path d="M1369 461h5" stroke="#ff0181"/>
<path d="M1374 461h5" stroke="#ff007b"/>
<path d="M1379 461h5" stroke="#ff0075"/>
<path d="M1384 461h5" stroke="#ff006f"/>
<path d="M1389 461h5" stroke="#ff006a"/>
<path d="M1394 461h5" stroke="#ff0064"/>
<path d="M1399 461h5" stroke="#ff0060"/>
<path d="M1404 461h5" stroke="#ff005b"/>
<path d="M1409 461h5" stroke="#ff0057"/>
<path d="M1414 461h5" stroke="#ff0053"/>
<path d="M1419 461h5" stroke="#ff004f"/>
<path d="M1424 461h5" stroke="#ff004b"/>
<path d="M1429 461h5" stroke="#ff0048"/>
<path d="M1434 461h5" stroke="#f04"/>
<path d="M1439 461h5" stroke="#ff0041"/>
<path d="M1444 461h5" stroke="#ff003e"/>
<path d="M1449 461h5" stroke="#ff003b"/>
<path d="M1454 461h5" stroke="#ff0039"/>
<path d="M1459 461h5" stroke="#ff0036"/>
<path d="M1464 461h5" stroke="#f03"/>
<path d="M1469 461h5" stroke="#ff0031"/>
<path d="M1474 461h5" stroke="#ff002f"/>
<path d="M1479 461h5" stroke="#ff002c"/>
<path d="M1484 461h5" stroke="#ff002a"/>
<path d="M1489 461h5" stroke="#ff0028"/>
<path d="M1494 461h5" stroke="#ff0026"/>
<path d="M1499 461h5" stroke="#ff0025"/>
<path d="M1504 461h5" stroke="#ff0023"/>
<path d="M1109 466h5" stroke="#0053ff"/>
<path d="M1114 466h5" stroke="#0051ff"/>
<path d="M1119 466h5" stroke="#0050ff"/>
<path d="M1124 466h5" stroke="#004fff"/>
<path d="M1129 466h5" stroke="#004eff"/>
<path d="M1134 466h5" stroke="#004dff"/>
<path d="M1139 466h5" stroke="#004bff"/>
<path d="M1144 466h5" stroke="#004aff"/>
<path d="M1149 466h5" stroke="#0049ff"/>
<path d="M1154 466h5" stroke="#0048ff"/>
<path d="M1159 466h5" stroke="#0046ff"/>
<path d="M1164 466h5" stroke="#0045ff"/>
<path d="M1169 466h5" stroke="#04f"/>
<path d="M1174 466h5" stroke="#0042ff"/>
<path d="M1179 466h5" stroke="#0041ff"/>
<path d="M1184 466h5" stroke="#003fff"/>
<path d="M1189 466h5" stroke="#023eff"/>
<path d="M1194 466h5" stroke="#073cff"/>
<path d="M1199 466h5" stroke="#0d3bff"/>
<path d="M1204 466h5" stroke="#1339ff"/>
<path d="M1209 466h5" stroke="#1a38ff"/>
<path d="M1214 466h5" stroke="#2136ff"/>
<path d="M1219 466h5" stroke="#2835ff"/>
<path d="M1224 466h5" stroke="#3033ff"/>
<path d="M1229 466h5" stroke="#3932ff"/>
<path d="M1234 466h5" stroke="#4230ff"/>
<path d="M1239 466h5" stroke="#4b2eff"/>
<path d="M1244 466h5" stroke="#552dff"/>
<path d="M1249 466h5" stroke="#5f2bff"/>
<path d="M1254 466h5" stroke="#6929ff"/>
<path d="M1259 466h5" stroke="#7427ff"/>
<path d="M1264 466h5" stroke="#7f25ff"/>
<path d="M1269 466h5" stroke="#8b24ff"/>
<path d="M1274 466h5" stroke="#9722ff"/>
<path d="M1279 466h5" stroke="#a420ff"/>
<path d="M1284 466h5" stroke="#b11eff"/>
<path d="M1289 466h5" stroke="#bf1cff"/>
<path d="M1294 466h5" stroke="#cd1aff"/>
<path d="M1299 466h5" stroke="#dc18ff"/>
<path d="M1304 466h5" stroke="#eb16ff"/>
<path d="M1309 466h5" stroke="#fb14ff"/>
<path d="M1314 466h5" stroke="#ff11f3"/>
<path d="M1319 466h5" stroke="#ff0ee5"/>
<path d="M1324 466h5" stroke="#ff0cd7"/>
<path d="M1329 466h5" stroke="#ff09cb"/>
<path d="M1334 466h5" stroke="#ff07c0"/>
<path d="M1339 466h5" stroke="#ff05b5"/>
<path d="M1344 466h5" stroke="#ff04ab"/>
<path d="M1349 466h5" stroke="#ff02a2"/>
<path d="M1354 466h5" stroke="#ff019a"/>
<path d="M1359 466h5" stroke="#ff0092"/>
<path d="M1364 466h5" stroke="#ff008b"/>
<path d="M1369 466h5" stroke="#ff0084"/>
<path d="M1374 466h5" stroke="#ff007d"/>
<path d="M1379 466h5" stroke="#f07"/>
<path d="M1384 466h5" stroke="#ff0071"/>
<path d="M1389 466h5" stroke="#ff006c"/>
<path d="M1394 466h5" stroke="#ff0067"/>
<path d="M1399 466h5" stroke="#ff0062"/>
<path d="M1404 466h5" stroke="#ff005d"/>
<path d="M1409 466h5" stroke="#ff0059"/>
<path d="M1414 466h5" stroke="#f05"/>
<path d="M1419 466h5" stroke="#ff0051"/>
<path d="M1424 466h5" stroke="#ff004d"/>
<path d="M1429 466h5" stroke="#ff004a"/>
<path d="M1434 466h5" stroke="#ff0046"/>
<path d="M1439 466h5" stroke="#ff0043"/>
<path d="M1444 466h5" stroke="#ff0040"/>
<path d="M1449 466h5" stroke="#ff003d"/>
<path d="M1454 466h5" stroke="#ff003a"/>
<path d="M1459 466h5" stroke="#ff0038"/>
<path d="M1464 466h5" stroke="#ff0035"/>
<path d="M1469 466h5" stroke="#f03"/>
<path d="M1474 466h5" stroke="#ff0030"/>
<path d="M1479 466h5" stroke="#ff002e"/>
<path d="M1484 466h5" stroke="#ff002c"/>
<path d="M1489 466h5" stroke="#ff002a"/>
<path d="M1109 471h5" stroke="#004cff"/>
<path d="M1114 471h5" stroke="#004bff"/>
<path d="M1119 471h5" stroke="#004aff"/>
<path d="M1124 471h5" stroke="#0049ff"/>
<path d="M1129 471h5" stroke="#0047ff"/>
<path d="M1134 471h5" stroke="#0046ff"/>
<path d="M1139 471h5" stroke="#0045ff"/>
<path d="M1144 471h5" stroke="#04f"/>
<path d="M1149 471h5" stroke="#0042ff"/>
<path d="M1154 471h5" stroke="#0041ff"/>
<path d="M1159 471h5" stroke="#0040ff"/>
<path d="M1164 471h5" stroke="#003eff"/>
<path d="M1169 471h5" stroke="#003dff"/>
<path d="M1174 471h5" stroke="#003cff"/>
<path d="M1179 471h5" stroke="#003aff"/>
<path d="M1184 471h5" stroke="#0039ff"/>
<path d="M1189 471h5" stroke="#0337ff"/>
<path d="M1194 471h5" stroke="#0836ff"/>
<path d="M1199 471h5" stroke="#0e34ff"/>
<path d="M1204 471h5" stroke="#1433ff"/>
<path d="M1209 471h5" stroke="#1b31ff"/>
<path d="M1214 471h5" stroke="#2230ff"/>
<path d="M1219 471h5" stroke="#292eff"/>
<path d="M1224 471h5" stroke="#312cff"/>
<path d="M1229 471h5" stroke="#3a2bff"/>
<path d="M1234 471h5" stroke="#4229ff"/>
<path d="M1239 471h5" stroke="#4b27ff"/>
<path d="M1244 471h5" stroke="#5526ff"/>
<path d="M1249 471h5" stroke="#5f24ff"/>
<path d="M1254 471h5" stroke="#6922ff"/>
<path d="M1259 471h5" stroke="#7420ff"/>
<path d="M1264 471h5" stroke="#7f1fff"/>
<path d="M1269 471h5" stroke="#8b1dff"/>
<path d="M1274 471h5" stroke="#971bff"/>
<path d="M1279 471h5" stroke="#a319ff"/>
<path d="M1284 471h5" stroke="#b017ff"/>
<path d="M1289 471h5" stroke="#be15ff"/>
<path d="M1294 471h5" stroke="#cb13ff"/>
<path d="M1299 471h5" stroke="#da11ff"/>
<path d="M1304 471h5" stroke="#e90fff"/>
<path d="M1309 471h5" stroke="#f80eff"/>
<path d="M1314 471h5" stroke="#ff0bf6"/>
<path d="M1319 471h5" stroke="#ff09e8"/>
<path d="M1324 471h5" stroke="#ff07da"/>
<path d="M1329 471h5" stroke="#ff05ce"/>
<path d="M1334 471h5" stroke="#ff03c2"/>
<path d="M1339 471h5" stroke="#ff02b8"/>
<path d="M1344 471h5" stroke="#ff00ae"/>
<path d="M1349 471h5" stroke="#ff00a5"/>
<path d="M1354 471h5" stroke="#ff009c"/>
<path d="M1359 471h5" stroke="#ff0094"/>
<path d="M1364 471h5" stroke="#ff008d"/>
<path d="M1369 471h5" stroke="#ff0086"/>
<path d="M1374 471h5" stroke="#ff0080"/>
<path d="M1379 471h5" stroke="#ff0079"/>
<path d="M1384 471h5" stroke="#ff0074"/>
<path d="M1389 471h5" stroke="#ff006e"/>
<path d="M1394 471h5" stroke="#ff0069"/>
<path d="M1399 471h5" stroke="#ff0064"/>
<path d="M1404 471h5" stroke="#ff005f"/>
<path d="M1409 471h5" stroke="#ff005b"/>
<path d="M1414 471h5" stroke="#ff0057"/>
<path d="M1419 471h5" stroke="#ff0053"/>
<path d="M1424 471h5" stroke="#ff004f"/>
<path d="M1429 471h5" stroke="#ff004c"/>
<path d="M1434 471h5" stroke="#ff0048"/>
<path d="M1439 471h5" stroke="#ff0045"/>
<path d="M1444 471h5" stroke="#ff0042"/>
<path d="M1449 471h5" stroke="#ff003f"/>
<path d="M1454 471h5" stroke="#ff003c"/>
<path d="M1459 471h5" stroke="#ff0039"/>
<path d="M1464 471h5" stroke="#ff0037"/>
<path d="M1469 471h5" stroke="#ff0034"/>
<path d="M1474 471h5" stroke="#ff0032"/>
<path d="M1479 471h5" stroke="#ff0030"/>
<path d="M1114 476h5" stroke="#0045ff"/>
<path d="M1119 476h5" stroke="#04f"/>
<path d="M1124 476h5" stroke="#0042ff"/>
<path d="M1129 476h5" stroke="#0041ff"/>
<path d="M1134 476h5" stroke="#0040ff"/>
<path d="M1139 476h5" stroke="#003fff"/>
<path d="M1144 476h5" stroke="#003dff"/>
<path d="M1149 476h5" stroke="#003cff"/>
<path d="M1154 476h5" stroke="#003bff"/>
<path d="M1159 476h5" stroke="#0039ff"/>
<path d="M1164 476h5" stroke="#0038ff"/>
<path d="M1169 476h5" stroke="#0037ff"/>
<path d="M1174 476h5" stroke="#0035ff"/>
<path d="M1179 476h5" stroke="#0034ff"/>
<path d="M1184 476h5" stroke="#0032ff"/>
<path d="M1189 476h5" stroke="#0431ff"/>
<path d="M1194 476h5" stroke="#092fff"/>
<path d="M1199 476h5" stroke="#0f2eff"/>
<path d="M1204 476h5" stroke="#152cff"/>
<path d="M1209 476h5" stroke="#1c2bff"/>
<path d="M1214 476h5" stroke="#2329ff"/>
<path d="M1219 476h5" stroke="#2a28ff"/>
<path d="M1224 476h5" stroke="#3226ff"/>
<path d="M1229 476h5" stroke="#3a24ff"/>
<path d="M1234 476h5" stroke="#4323ff"/>
<path d="M1239 476h5" stroke="#4c21ff"/>
<path d="M1244 476h5" stroke="#551fff"/>
<path d="M1249 476h5" stroke="#5f1eff"/>
<path d="M1254 476h5" stroke="#691cff"/>
<path d="M1259 476h5" stroke="#741aff"/>
<path d="M1264 476h5" stroke="#7f18ff"/>
<path d="M1269 476h5" stroke="#8a17ff"/>
<path d="M1274 476h5" stroke="#9615ff"/>
<path d="M1279 476h5" stroke="#a213ff"/>
<path d="M1284 476h5" stroke="#af11ff"/>
<path d="M1289 476h5" stroke="#bc0fff"/>
<path d="M1294 476h5" stroke="#ca0dff"/>
<path d="M1299 476h5" stroke="#d80cff"/>
<path d="M1304 476h5" stroke="#e70aff"/>
<path d="M1309 476h5" stroke="#f608ff"/>
<path d="M1314 476h5" stroke="#ff06f9"/>
<path d="M1319 476h5" stroke="#ff04ea"/>
<path d="M1324 476h5" stroke="#ff02dd"/>
<path d="M1329 476h5" stroke="#ff01d1"/>
<path d="M1334 476h5" stroke="#ff00c5"/>
<path d="M1339 476h5" stroke="#f0b"/>
<path d="M1344 476h5" stroke="#ff00b1"/>
<path d="M1349 476h5" stroke="#ff00a8"/>
<path d="M1354 476h5" stroke="#ff009f"/>
<path d="M1359 476h5" stroke="#ff0097"/>
<path d="M1364 476h5" stroke="#ff0090"/>
<path d="M1369 476h5" stroke="#ff0089"/>
<path d="M1374 476h5" stroke="#ff0082"/>
<path d="M1379 476h5" stroke="#ff007c"/>
<path d="M1384 476h5" stroke="#ff0076"/>
<path d="M1389 476h5" stroke="#ff0070"/>
<path d="M1394 476h5" stroke="#ff006b"/>
<path d="M1399 476h5" stroke="#f06"/>
<path d="M1404 476h5" stroke="#ff0062"/>
<path d="M1409 476h5" stroke="#ff005d"/>
<path d="M1414 476h5" stroke="#ff0059"/>
<path d="M1419 476h5" stroke="#f05"/>
<path d="M1424 476h5" stroke="#ff0051"/>
<path d="M1429 476h5" stroke="#ff004e"/>
<path d="M1434 476h5" stroke="#ff004a"/>
<path d="M1439 476h5" stroke="#ff0047"/>
<path d="M1444 476h5" stroke="#f04"/>
<path d="M1449 476h5" stroke="#ff0041"/>
<path d="M1454 476h5" stroke="#ff003e"/>
<path d="M1459 476h5" stroke="#ff003b"/>
<path d="M1464 476h5" stroke="#ff0038"/>
<path d="M1114 481h5" stroke="#003fff"/>
<path d="M1119 481h5" stroke="#003eff"/>
<path d="M1124 481h5" stroke="#003cff"/>
<path d="M1129 481h5" stroke="#003bff"/>
<path d="M1134 481h5" stroke="#003aff"/>
<path d="M1139 481h5" stroke="#0039ff"/>
<path d="M1144 481h5" stroke="#0037ff"/>
<path d="M1149 481h5" stroke="#0036ff"/>
<path d="M1154 481h5" stroke="#0035ff"/>
<path d="M1159 481h5" stroke="#03f"/>
<path d="M1164 481h5" stroke="#0032ff"/>
<path d="M1169 481h5" stroke="#0031ff"/>
<path d="M1174 481h5" stroke="#002fff"/>
<path d="M1179 481h5" stroke="#002eff"/>
<path d="M1184 481h5" stroke="#012cff"/>
<path d="M1189 481h5" stroke="#052bff"/>
<path d="M1194 481h5" stroke="#0a29ff"/>
<path d="M1199 481h5" stroke="#1028ff"/>
<path d="M1204 481h5" stroke="#1626ff"/>
<path d="M1209 481h5" stroke="#1d25ff"/>
<path d="M1214 481h5" stroke="#2423ff"/>
<path d="M1219 481h5" stroke="#2b22ff"/>
<path d="M1224 481h5" stroke="#3320ff"/>
<path d="M1229 481h5" stroke="#3b1eff"/>
<path d="M1234 481h5" stroke="#441dff"/>
<path d="M1239 481h5" stroke="#4d1bff"/>
<path d="M1244 481h5" stroke="#5619ff"/>
<path d="M1249 481h5" stroke="#6018ff"/>
<path d="M1254 481h5" stroke="#6a16ff"/>
<path d="M1259 481h5" stroke="#7414ff"/>
<path d="M1264 481h5" stroke="#7f12ff"/>
<path d="M1269 481h5" stroke="#8a11ff"/>
<path d="M1274 481h5" stroke="#950fff"/>
<path d="M1279 481h5" stroke="#a20dff"/>
<path d="M1284 481h5" stroke="#ae0bff"/>
<path d="M1289 481h5" stroke="#bb0aff"/>
<path d="M1294 481h5" stroke="#c808ff"/>
<path d="M1299 481h5" stroke="#d606ff"/>
<path d="M1304 481h5" stroke="#e405ff"/>
<path d="M1309 481h5" stroke="#f303ff"/>
<path d="M1314 481h5" stroke="#ff01fc"/>
<path d="M1319 481h5" stroke="#ff00ed"/>
<path d="M1324 481h5" stroke="#ff00e0"/>
<path d="M1329 481h5" stroke="#ff00d3"/>
<path d="M1334 481h5" stroke="#ff00c8"/>
<path d="M1339 481h5" stroke="#ff00bd"/>
<path d="M1344 481h5" stroke="#ff00b3"/>
<path d="M1349 481h5" stroke="#f0a"/>
<path d="M1354 481h5" stroke="#ff00a2"/>
<path d="M1359 481h5" stroke="#f09"/>
<path d="M1364 481h5" stroke="#ff0092"/>
<path d="M1369 481h5" stroke="#ff008b"/>
<path d="M1374 481h5" stroke="#ff0084"/>
<path d="M1379 481h5" stroke="#ff007e"/>
<path d="M1384 481h5" stroke="#ff0078"/>
<path d="M1389 481h5" stroke="#ff0073"/>
<path d="M1394 481h5" stroke="#ff006d"/>
<path d="M1399 481h5" stroke="#ff0068"/>
<path d="M1404 481h5" stroke="#ff0064"/>
<path d="M1409 481h5" stroke="#ff005f"/>
<path d="M1414 481h5" stroke="#ff005b"/>
<path d="M1419 481h5" stroke="#ff0057"/>
<path d="M1424 481h5" stroke="#ff0053"/>
<path d="M1429 481h5" stroke="#ff004f"/>
<path d="M1434 481h5" stroke="#ff004c"/>
<path d="M1439 481h5" stroke="#ff0049"/>
<path d="M1444 481h5" stroke="#ff0045"/>
<path d="M1449 481h5" stroke="#ff0042"/>
<path d="M1119 486h5" stroke="#0038ff"/>
<path d="M1124 486h5" stroke="#0037ff"/>
<path d="M1129 486h5" stroke="#0035ff"/>
<path d="M1134 486h5" stroke="#0034ff"/>
<path d="M1139 486h5" stroke="#03f"/>
<path d="M1144 486h5" stroke="#0032ff"/>
<path d="M1149 486h5" stroke="#0030ff"/>
<path d="M1154 486h5" stroke="#002fff"/>
<path d="M1159 486h5" stroke="#002eff"/>
<path d="M1164 486h5" stroke="#002cff"/>
<path d="M1169 486h5" stroke="#002bff"/>
<path d="M1174 486h5" stroke="#0029ff"/>
<path d="M1179 486h5" stroke="#0028ff"/>
<path d="M1184 486h5" stroke="#0226ff"/>
<path d="M1189 486h5" stroke="#0625ff"/>
<path d="M1194 486h5" stroke="#0b23ff"/>
<path d="M1199 486h5" stroke="#12f"/>
<path d="M1204 486h5" stroke="#1720ff"/>
<path d="M1209 486h5" stroke="#1e1fff"/>
<path d="M1214 486h5" stroke="#251dff"/>
<path d="M1219 486h5" stroke="#2c1cff"/>
<path d="M1224 486h5" stroke="#341aff"/>
<path d="M1229 486h5" stroke="#3c19ff"/>
<path d="M1234 486h5" stroke="#4417ff"/>
<path d="M1239 486h5" stroke="#4d15ff"/>
<path d="M1244 486h5" stroke="#5614ff"/>
<path d="M1249 486h5" stroke="#6012ff"/>
<path d="M1254 486h5" stroke="#6a10ff"/>
<path d="M1259 486h5" stroke="#740fff"/>
<path d="M1264 486h5" stroke="#7e0dff"/>
<path d="M1269 486h5" stroke="#890bff"/>
<path d="M1274 486h5" stroke="#950aff"/>
<path d="M1279 486h5" stroke="#a108ff"/>
<path d="M1284 486h5" stroke="#ad06ff"/>
<path d="M1289 486h5" stroke="#ba05ff"/>
<path d="M1294 486h5" stroke="#c703ff"/>
<path d="M1299 486h5" stroke="#d402ff"/>
<path d="M1304 486h5" stroke="#e201ff"/>
<path d="M1309 486h5" stroke="#f100ff"/>
<path d="M1314 486h5" stroke="#ff00fe"/>
<path d="M1319 486h5" stroke="#ff00f0"/>
<path d="M1324 486h5" stroke="#ff00e2"/>
<path d="M1329 486h5" stroke="#ff00d6"/>
<path d="M1334 486h5" stroke="#ff00ca"/>
<path d="M1339 486h5" stroke="#ff00c0"/>
<path d="M1344 486h5" stroke="#ff00b6"/>
<path d="M1349 486h5" stroke="#ff00ad"/>
<path d="M1354 486h5" stroke="#ff00a4"/>
<path d="M1359 486h5" stroke="#ff009c"/>
<path d="M1364 486h5" stroke="#ff0094"/>
<path d="M1369 486h5" stroke="#ff008d"/>
<path d="M1374 486h5" stroke="#ff0087"/>
<path d="M1379 486h5" stroke="#ff0080"/>
<path d="M1384 486h5" stroke="#ff007a"/>
<path d="M1389 486h5" stroke="#ff0075"/>
<path d="M1394 486h5" stroke="#ff0070"/>
<path d="M1399 486h5" stroke="#ff006b"/>
<path d="M1404 486h5" stroke="#f06"/>
<path d="M1409 486h5" stroke="#ff0061"/>
<path d="M1414 486h5" stroke="#ff005d"/>
<path d="M1419 486h5" stroke="#ff0059"/>
<path d="M1424 486h5" stroke="#f05"/>
<path d="M1429 486h5" stroke="#ff0051"/>
<path d="M1434 486h5" stroke="#ff004e"/>
<path d="M1119 491h5" stroke="#03f"/>
<path d="M1124 491h5" stroke="#0031ff"/>
<path d="M1129 491h5" stroke="#0030ff"/>
<path d="M1134 491h5" stroke="#002fff"/>
<path d="M1139 491h5" stroke="#002dff"/>
<path d="M1144 491h5" stroke="#002cff"/>
<path d="M1149 491h5" stroke="#002bff"/>
<path d="M1154 491h5" stroke="#0029ff"/>
<path d="M1159 491h5" stroke="#0028ff"/>
<path d="M1164 491h5" stroke="#0027ff"/>
<path d="M1169 491h5" stroke="#0025ff"/>
<path d="M1174 491h5" stroke="#0024ff"/>
<path d="M1179 491h5" stroke="#02f"/>
<path d="M1184 491h5" stroke="#0321ff"/>
<path d="M1189 491h5" stroke="#071fff"/>
<path d="M1194 491h5" stroke="#0d1eff"/>
<path d="M1199 491h5" stroke="#121dff"/>
<path d="M1204 491h5" stroke="#181bff"/>
<path d="M1209 491h5" stroke="#1f19ff"/>
<path d="M1214 491h5" stroke="#2618ff"/>
<path d="M1219 491h5" stroke="#2d16ff"/>
<path d="M1224 491h5" stroke="#3515ff"/>
<path d="M1229 491h5" stroke="#3d13ff"/>
<path d="M1234 491h5" stroke="#4512ff"/>
<path d="M1239 491h5" stroke="#4e10ff"/>
<path d="M1244 491h5" stroke="#570fff"/>
<path d="M1249 491h5" stroke="#600dff"/>
<path d="M1254 491h5" stroke="#6a0bff"/>
<path d="M1259 491h5" stroke="#740aff"/>
<path d="M1264 491h5" stroke="#7e08ff"/>
<path d="M1269 491h5" stroke="#8907ff"/>
<path d="M1274 491h5" stroke="#9405ff"/>
<path d="M1279 491h5" stroke="#a004ff"/>
<path d="M1284 491h5" stroke="#ac02ff"/>
<path d="M1289 491h5" stroke="#b801ff"/>
<path d="M1294 491h5" stroke="#c500ff"/>
<path d="M1299 491h5" stroke="#d300ff"/>
<path d="M1304 491h5" stroke="#e000ff"/>
<path d="M1309 491h5" stroke="#ef00ff"/>
<path d="M1314 491h5" stroke="#fd00ff"/>
<path d="M1319 491h5" stroke="#ff00f2"/>
<path d="M1324 491h5" stroke="#ff00e5"/>
<path d="M1329 491h5" stroke="#ff00d8"/>
<path d="M1334 491h5" stroke="#ff00cd"/>
<path d="M1339 491h5" stroke="#ff00c2"/>
<path d="M1344 491h5" stroke="#ff00b8"/>
<path d="M1349 491h5" stroke="#ff00af"/>
<path d="M1354 491h5" stroke="#ff00a6"/>
<path d="M1359 491h5" stroke="#ff009e"/>
<path d="M1364 491h5" stroke="#ff0097"/>
<path d="M1369 491h5" stroke="#ff0090"/>
<path d="M1374 491h5" stroke="#ff0089"/>
<path d="M1379 491h5" stroke="#ff0083"/>
<path d="M1384 491h5" stroke="#ff007d"/>
<path d="M1389 491h5" stroke="#f07"/>
<path d="M1394 491h5" stroke="#ff0072"/>
<path d="M1399 491h5" stroke="#ff006d"/>
<path d="M1404 491h5" stroke="#ff0068"/>
<path d="M1409 491h5" stroke="#ff0063"/>
<path d="M1414 491h5" stroke="#ff005f"/>
<path d="M1419 491h5" stroke="#ff005b"/>
<path d="M1124 496h5" stroke="#002cff"/>
<path d="M1129 496h5" stroke="#002bff"/>
<path d="M1134 496h5" stroke="#0029ff"/>
<path d="M1139 496h5" stroke="#0028ff"/>
<path d="M1144 496h5" stroke="#0027ff"/>
<path d="M1149 496h5" stroke="#0025ff"/>
<path d="M1154 496h5" stroke="#0024ff"/>
<path d="M1159 496h5" stroke="#0023ff"/>
<path d="M1164 496h5" stroke="#0021ff"/>
<path d="M1169 496h5" stroke="#0020ff"/>
<path d="M1174 496h5" stroke="#001fff"/>
<path d="M1179 496h5" stroke="#001dff"/>
<path d="M1184 496h5" stroke="#041cff"/>
<path d="M1189 496h5" stroke="#081aff"/>
<path d="M1194 496h5" stroke="#0e19ff"/>
<path d="M1199 496h5" stroke="#1317ff"/>
<path d="M1204 496h5" stroke="#1916ff"/>
<path d="M1209 496h5" stroke="#2014ff"/>
<path d="M1214 496h5" stroke="#2713ff"/>
<path d="M1219 496h5" stroke="#2e11ff"/>
<path d="M1224 496h5" stroke="#3610ff"/>
<path d="M1229 496h5" stroke="#3d0eff"/>
<path d="M1234 496h5" stroke="#460dff"/>
<path d="M1239 496h5" stroke="#4e0bff"/>
<path d="M1244 496h5" stroke="#570aff"/>
<path d="M1249 496h5" stroke="#6008ff"/>
<path d="M1254 496h5" stroke="#6a07ff"/>
<path d="M1259 496h5" stroke="#7405ff"/>
<path d="M1264 496h5" stroke="#7e04ff"/>
<path d="M1269 496h5" stroke="#8903ff"/>
<path d="M1274 496h5" stroke="#9401ff"/>
<path d="M1279 496h5" stroke="#9f00ff"/>
<path d="M1284 496h5" stroke="#ab00ff"/>
<path d="M1289 496h5" stroke="#b700ff"/>
<path d="M1294 496h5" stroke="#c400ff"/>
<path d="M1299 496h5" stroke="#d100ff"/>
<path d="M1304 496h5" stroke="#de00ff"/>
<path d="M1309 496h5" stroke="#ec00ff"/>
<path d="M1314 496h5" stroke="#fb00ff"/>
<path d="M1319 496h5" stroke="#ff00f5"/>
<path d="M1324 496h5" stroke="#ff00e7"/>
<path d="M1329 496h5" stroke="#ff00db"/>
<path d="M1334 496h5" stroke="#ff00cf"/>
<path d="M1339 496h5" stroke="#ff00c5"/>
<path d="M1344 496h5" stroke="#f0b"/>
<path d="M1349 496h5" stroke="#ff00b2"/>
<path d="M1354 496h5" stroke="#ff00a9"/>
<path d="M1359 496h5" stroke="#ff00a1"/>
<path d="M1364 496h5" stroke="#f09"/>
<path d="M1369 496h5" stroke="#ff0092"/>
<path d="M1374 496h5" stroke="#ff008b"/>
<path d="M1379 496h5" stroke="#ff0085"/>
<path d="M1384 496h5" stroke="#ff007f"/>
<path d="M1389 496h5" stroke="#ff0079"/>
<path d="M1394 496h5" stroke="#ff0074"/>
<path d="M1399 496h5" stroke="#ff006f"/>
<path d="M1404 496h5" stroke="#ff006a"/>
<path d="M1409 496h5" stroke="#ff0065"/>
<path d="M1124 501h5" stroke="#0027ff"/>
<path d="M1129 501h5" stroke="#0026ff"/>
<path d="M1134 501h5" stroke="#0024ff"/>
<path d="M1139 501h5" stroke="#0023ff"/>
<path d="M1144 501h5" stroke="#02f"/>
<path d="M1149 501h5" stroke="#0020ff"/>
<path d="M1154 501h5" stroke="#001fff"/>
<path d="M1159 501h5" stroke="#001eff"/>
<path d="M1164 501h5" stroke="#001cff"/>
<path d="M1169 501h5" stroke="#001bff"/>
<path d="M1174 501h5" stroke="#001aff"/>
<path d="M1179 501h5" stroke="#0118ff"/>
<path d="M1184 501h5" stroke="#0517ff"/>
<path d="M1189 501h5" stroke="#0915ff"/>
<path d="M1194 501h5" stroke="#0f14ff"/>
<path d="M1199 501h5" stroke="#1413ff"/>
<path d="M1204 501h5" stroke="#1a11ff"/>
<path d="M1209 501h5" stroke="#2110ff"/>
<path d="M1214 501h5" stroke="#280eff"/>
<path d="M1219 501h5" stroke="#2f0dff"/>
<path d="M1224 501h5" stroke="#360bff"/>
<path d="M1229 501h5" stroke="#3e0aff"/>
<path d="M1234 501h5" stroke="#4608ff"/>
<path d="M1239 501h5" stroke="#4f07ff"/>
<path d="M1244 501h5" stroke="#5706ff"/>
<path d="M1249 501h5" stroke="#6104ff"/>
<path d="M1254 501h5" stroke="#6a03ff"/>
<path d="M1259 501h5" stroke="#7402ff"/>
<path d="M1264 501h5" stroke="#7e00ff"/>
<path d="M1269 501h5" stroke="#80f"/>
<path d="M1274 501h5" stroke="#9300ff"/>
<path d="M1279 501h5" stroke="#9e00ff"/>
<path d="M1284 501h5" stroke="#a0f"/>
<path d="M1289 501h5" stroke="#b600ff"/>
<path d="M1294 501h5" stroke="#c200ff"/>
<path d="M1299 501h5" stroke="#cf00ff"/>
<path d="M1304 501h5" stroke="#dc00ff"/>
<path d="M1309 501h5" stroke="#ea00ff"/>
<path d="M1314 501h5" stroke="#f800ff"/>
<path d="M1319 501h5" stroke="#ff00f7"/>
<path d="M1324 501h5" stroke="#ff00ea"/>
<path d="M1329 501h5" stroke="#ff00de"/>
<path d="M1334 501h5" stroke="#ff00d2"/>
<path d="M1339 501h5" stroke="#ff00c7"/>
<path d="M1344 501h5" stroke="#ff00bd"/>
<path d="M1349 501h5" stroke="#ff00b4"/>
<path d="M1354 501h5" stroke="#ff00ab"/>
<path d="M1359 501h5" stroke="#ff00a3"/>
<path d="M1364 501h5" stroke="#ff009b"/>
<path d="M1369 501h5" stroke="#ff0094"/>
<path d="M1374 501h5" stroke="#ff008d"/>
<path d="M1379 501h5" stroke="#ff0087"/>
<path d="M1384 501h5" stroke="#ff0081"/>
<path d="M1389 501h5" stroke="#ff007b"/>
<path d="M1394 501h5" stroke="#ff0076"/>
<path d="M1129 506h5" stroke="#0021ff"/>
<path d="M1134 506h5" stroke="#0020ff"/>
<path d="M1139 506h5" stroke="#001eff"/>
<path d="M1144 506h5" stroke="#001dff"/>
<path d="M1149 506h5" stroke="#001cff"/>
<path d="M1154 506h5" stroke="#001aff"/>
<path d="M1159 506h5" stroke="#0019ff"/>
<path d="M1164 506h5" stroke="#0018ff"/>
<path d="M1169 506h5" stroke="#0016ff"/>
<path d="M1174 506h5" stroke="#0015ff"/>
<path d="M1179 506h5" stroke="#0214ff"/>
<path d="M1184 506h5" stroke="#0612ff"/>
<path d="M1189 506h5" stroke="#0a11ff"/>
<path d="M1194 506h5" stroke="#100fff"/>
<path d="M1199 506h5" stroke="#150eff"/>
<path d="M1204 506h5" stroke="#1b0dff"/>
<path d="M1209 506h5" stroke="#220bff"/>
<path d="M1214 506h5" stroke="#290aff"/>
<path d="M1219 506h5" stroke="#3008ff"/>
<path d="M1224 506h5" stroke="#3707ff"/>
<path d="M1229 506h5" stroke="#3f06ff"/>
<path d="M1234 506h5" stroke="#4704ff"/>
<path d="M1239 506h5" stroke="#4f03ff"/>
<path d="M1244 506h5" stroke="#5802ff"/>
<path d="M1249 506h5" stroke="#6101ff"/>
<path d="M1254 506h5" stroke="#6a00ff"/>
<path d="M1259 506h5" stroke="#7400ff"/>
<path d="M1264 506h5" stroke="#7e00ff"/>
<path d="M1269 506h5" stroke="#80f"/>
<path d="M1274 506h5" stroke="#9300ff"/>
<path d="M1279 506h5" stroke="#9e00ff"/>
<path d="M1284 506h5" stroke="#a900ff"/>
<path d="M1289 506h5" stroke="#b500ff"/>
<path d="M1294 506h5" stroke="#c100ff"/>
<path d="M1299 506h5" stroke="#ce00ff"/>
<path d="M1304 506h5" stroke="#db00ff"/>
<path d="M1309 506h5" stroke="#e800ff"/>
<path d="M1314 506h5" stroke="#f600ff"/>
<path d="M1319 506h5" stroke="#ff00fa"/>
<path d="M1324 506h5" stroke="#ff00ec"/>
<path d="M1329 506h5" stroke="#ff00e0"/>
<path d="M1334 506h5" stroke="#ff00d4"/>
<path d="M1339 506h5" stroke="#ff00ca"/>
<path d="M1344 506h5" stroke="#ff00c0"/>
<path d="M1349 506h5" stroke="#ff00b6"/>
<path d="M1354 506h5" stroke="#ff00ae"/>
<path d="M1359 506h5" stroke="#ff00a5"/>
<path d="M1364 506h5" stroke="#ff009e"/>
<path d="M1369 506h5" stroke="#ff0097"/>
<path d="M1374 506h5" stroke="#ff0090"/>
<path d="M1379 506h5" stroke="#ff0089"/>
<path d="M1129 511h5" stroke="#001cff"/>
<path d="M1134 511h5" stroke="#001bff"/>
<path d="M1139 511h5" stroke="#001aff"/>
<path d="M1144 511h5" stroke="#0018ff"/>
<path d="M1149 511h5" stroke="#0017ff"/>
<path d="M1154 511h5" stroke="#0016ff"/>
<path d="M1159 511h5" stroke="#0015ff"/>
<path d="M1164 511h5" stroke="#0013ff"/>
<path d="M1169 511h5" stroke="#0012ff"/>
<path d="M1174 511h5" stroke="#01f"/>
<path d="M1179 511h5" stroke="#020fff"/>
<path d="M1184 511h5" stroke="#070eff"/>
<path d="M1189 511h5" stroke="#0b0dff"/>
<path d="M1194 511h5" stroke="#110bff"/>
<path d="M1199 511h5" stroke="#160aff"/>
<path d="M1204 511h5" stroke="#1c09ff"/>
<path d="M1209 511h5" stroke="#2307ff"/>
<path d="M1214 511h5" stroke="#2906ff"/>
<path d="M1219 511h5" stroke="#3005ff"/>
<path d="M1224 511h5" stroke="#3803ff"/>
<path d="M1229 511h5" stroke="#3f02ff"/>
<path d="M1234 511h5" stroke="#4701ff"/>
<path d="M1239 511h5" stroke="#5000ff"/>
<path d="M1244 511h5" stroke="#5800ff"/>
<path d="M1249 511h5" stroke="#6100ff"/>
<path d="M1254 511h5" stroke="#6a00ff"/>
<path d="M1259 511h5" stroke="#7400ff"/>
<path d="M1264 511h5" stroke="#7e00ff"/>
<path d="M1269 511h5" stroke="#80f"/>
<path d="M1274 511h5" stroke="#9200ff"/>
<path d="M1279 511h5" stroke="#9d00ff"/>
<path d="M1284 511h5" stroke="#a800ff"/>
<path d="M1289 511h5" stroke="#b400ff"/>
<path d="M1294 511h5" stroke="#c000ff"/>
<path d="M1299 511h5" stroke="#c0f"/>
<path d="M1304 511h5" stroke="#d900ff"/>
<path d="M1309 511h5" stroke="#e600ff"/>
<path d="M1314 511h5" stroke="#f400ff"/>
<path d="M1319 511h5" stroke="#ff00fc"/>
<path d="M1324 511h5" stroke="#ff00ef"/>
<path d="M1329 511h5" stroke="#ff00e2"/>
<path d="M1334 511h5" stroke="#ff00d7"/>
<path d="M1339 511h5" stroke="#f0c"/>
<path d="M1344 511h5" stroke="#ff00c2"/>
<path d="M1349 511h5" stroke="#ff00b9"/>
<path d="M1354 511h5" stroke="#ff00b0"/>
<path d="M1359 511h5" stroke="#ff00a8"/>
<path d="M1364 511h5" stroke="#ff00a0"/>
<path d="M1134 516h5" stroke="#0017ff"/>
<path d="M1139 516h5" stroke="#0015ff"/>
<path d="M1144 516h5" stroke="#0014ff"/>
<path d="M1149 516h5" stroke="#0013ff"/>
<path d="M1154 516h5" stroke="#0012ff"/>
<path d="M1159 516h5" stroke="#0010ff"/>
<path d="M1164 516h5" stroke="#000fff"/>
<path d="M1169 516h5" stroke="#000eff"/>
<path d="M1174 516h5" stroke="#000cff"/>
<path d="M1179 516h5" stroke="#030bff"/>
<path d="M1184 516h5" stroke="#080aff"/>
<path d="M1189 516h5" stroke="#0c09ff"/>
<path d="M1194 516h5" stroke="#1207ff"/>
<path d="M1199 516h5" stroke="#1706ff"/>
<path d="M1204 516h5" stroke="#1d05ff"/>
<path d="M1209 516h5" stroke="#2404ff"/>
<path d="M1214 516h5" stroke="#2a02ff"/>
<path d="M1219 516h5" stroke="#3101ff"/>
<path d="M1224 516h5" stroke="#3900ff"/>
<path d="M1229 516h5" stroke="#4000ff"/>
<path d="M1234 516h5" stroke="#4800ff"/>
<path d="M1239 516h5" stroke="#5000ff"/>
<path d="M1244 516h5" stroke="#5900ff"/>
<path d="M1249 516h5" stroke="#6100ff"/>
<path d="M1254 516h5" stroke="#6a00ff"/>
<path d="M1259 516h5" stroke="#7400ff"/>
<path d="M1264 516h5" stroke="#7d00ff"/>
<path d="M1269 516h5" stroke="#8700ff"/>
<path d="M1274 516h5" stroke="#9200ff"/>
<path d="M1279 516h5" stroke="#9c00ff"/>
<path d="M1284 516h5" stroke="#a700ff"/>
<path d="M1289 516h5" stroke="#b300ff"/>
<path d="M1294 516h5" stroke="#bf00ff"/>
<path d="M1299 516h5" stroke="#cb00ff"/>
<path d="M1304 516h5" stroke="#d700ff"/>
<path d="M1309 516h5" stroke="#e400ff"/>
<path d="M1314 516h5" stroke="#f200ff"/>
<path d="M1319 516h5" stroke="#f0f"/>
<path d="M1324 516h5" stroke="#ff00f1"/>
<path d="M1329 516h5" stroke="#ff00e5"/>
<path d="M1334 516h5" stroke="#ff00d9"/>
<path d="M1339 516h5" stroke="#ff00cf"/>
<path d="M1344 516h5" stroke="#ff00c5"/>
<path d="M1349 516h5" stroke="#f0b"/>
<path d="M1134 521h5" stroke="#0013ff"/>
<path d="M1139 521h5" stroke="#01f"/>
<path d="M1144 521h5" stroke="#0010ff"/>
<path d="M1149 521h5" stroke="#000fff"/>
<path d="M1154 521h5" stroke="#000eff"/>
<path d="M1159 521h5" stroke="#000cff"/>
<path d="M1164 521h5" stroke="#000bff"/>
<path d="M1169 521h5" stroke="#000aff"/>
<path d="M1174 521h5" stroke="#0109ff"/>
<path d="M1179 521h5" stroke="#0407ff"/>
<path d="M1184 521h5" stroke="#0906ff"/>
<path d="M1189 521h5" stroke="#0d05ff"/>
<path d="M1194 521h5" stroke="#1304ff"/>
<path d="M1199 521h5" stroke="#1803ff"/>
<path d="M1204 521h5" stroke="#1e02ff"/>
<path d="M1209 521h5" stroke="#2501ff"/>
<path d="M1214 521h5" stroke="#2b00ff"/>
<path d="M1219 521h5" stroke="#3200ff"/>
<path d="M1224 521h5" stroke="#3900ff"/>
<path d="M1229 521h5" stroke="#4100ff"/>
<path d="M1234 521h5" stroke="#4800ff"/>
<path d="M1239 521h5" stroke="#5000ff"/>
<path d="M1244 521h5" stroke="#5900ff"/>
<path d="M1249 521h5" stroke="#6100ff"/>
<path d="M1254 521h5" stroke="#6a00ff"/>
<path d="M1259 521h5" stroke="#7400ff"/>
<path d="M1264 521h5" stroke="#7d00ff"/>
<path d="M1269 521h5" stroke="#8700ff"/>
<path d="M1274 521h5" stroke="#9100ff"/>
<path d="M1279 521h5" stroke="#9c00ff"/>
<path d="M1284 521h5" stroke="#a700ff"/>
<path d="M1289 521h5" stroke="#b200ff"/>
<path d="M1294 521h5" stroke="#bd00ff"/>
<path d="M1299 521h5" stroke="#c900ff"/>
<path d="M1304 521h5" stroke="#d600ff"/>
<path d="M1309 521h5" stroke="#e200ff"/>
<path d="M1314 521h5" stroke="#ef00ff"/>
<path d="M1319 521h5" stroke="#fd00ff"/>
<path d="M1324 521h5" stroke="#ff00f4"/>
<path d="M1329 521h5" stroke="#ff00e7"/>
<path d="M1334 521h5" stroke="#ff00dc"/>
<path d="M1139 526h5" stroke="#000eff"/>
<path d="M1144 526h5" stroke="#000cff"/>
<path d="M1149 526h5" stroke="#000bff"/>
<path d="M1154 526h5" stroke="#000aff"/>
<path d="M1159 526h5" stroke="#0009ff"/>
<path d="M1164 526h5" stroke="#0008ff"/>
<path d="M1169 526h5" stroke="#0006ff"/>
<path d="M1174 526h5" stroke="#0105ff"/>
<path d="M1179 526h5" stroke="#0504ff"/>
<path d="M1184 526h5" stroke="#0a03ff"/>
<path d="M1189 526h5" stroke="#0e02ff"/>
<path d="M1194 526h5" stroke="#1401ff"/>
<path d="M1199 526h5" stroke="#1900ff"/>
<path d="M1204 526h5" stroke="#1f00ff"/>
<path d="M1209 526h5" stroke="#2500ff"/>
<path d="M1214 526h5" stroke="#2c00ff"/>
<path d="M1219 526h5" stroke="#30f"/>
<path d="M1224 526h5" stroke="#3a00ff"/>
<path d="M1229 526h5" stroke="#4100ff"/>
<path d="M1234 526h5" stroke="#4900ff"/>
<path d="M1239 526h5" stroke="#5100ff"/>
<path d="M1244 526h5" stroke="#5900ff"/>
<path d="M1249 526h5" stroke="#6200ff"/>
<path d="M1254 526h5" stroke="#6b00ff"/>
<path d="M1259 526h5" stroke="#7400ff"/>
<path d="M1264 526h5" stroke="#7d00ff"/>
<path d="M1269 526h5" stroke="#8700ff"/>
<path d="M1274 526h5" stroke="#9100ff"/>
<path d="M1279 526h5" stroke="#9b00ff"/>
<path d="M1284 526h5" stroke="#a600ff"/>
<path d="M1289 526h5" stroke="#b100ff"/>
<path d="M1294 526h5" stroke="#bc00ff"/>
<path d="M1299 526h5" stroke="#c800ff"/>
<path d="M1304 526h5" stroke="#d400ff"/>
<path d="M1309 526h5" stroke="#e100ff"/>
<path d="M1314 526h5" stroke="#ed00ff"/>
<path d="M1319 526h5" stroke="#fb00ff"/>
<path d="M1324 526h5" stroke="#ff00f6"/>
<path d="M1139 531h5" stroke="#000aff"/>
<path d="M1144 531h5" stroke="#0009ff"/>
<path d="M1149 531h5" stroke="#0008ff"/>
<path d="M1154 531h5" stroke="#0006ff"/>
<path d="M1159 531h5" stroke="#0005ff"/>
<path d="M1164 531h5" stroke="#0004ff"/>
<path d="M1169 531h5" stroke="#0003ff"/>
<path d="M1174 531h5" stroke="#0202ff"/>
<path d="M1179 531h5" stroke="#0601ff"/>
<path d="M1184 531h5" stroke="#0a00ff"/>
<path d="M1189 531h5" stroke="#0f00ff"/>
<path d="M1194 531h5" stroke="#1500ff"/>
<path d="M1199 531h5" stroke="#1a00ff"/>
<path d="M1204 531h5" stroke="#2000ff"/>
<path d="M1209 531h5" stroke="#2600ff"/>
<path d="M1214 531h5" stroke="#2d00ff"/>
<path d="M1219 531h5" stroke="#3400ff"/>
<path d="M1224 531h5" stroke="#3b00ff"/>
<path d="M1229 531h5" stroke="#4200ff"/>
<path d="M1234 531h5" stroke="#4900ff"/>
<path d="M1239 531h5" stroke="#5100ff"/>
<path d="M1244 531h5" stroke="#5900ff"/>
<path d="M1249 531h5" stroke="#6200ff"/>
<path d="M1254 531h5" stroke="#6b00ff"/>
<path d="M1259 531h5" stroke="#7400ff"/>
<path d="M1264 531h5" stroke="#7d00ff"/>
<path d="M1269 531h5" stroke="#8600ff"/>
<path d="M1274 531h5" stroke="#9000ff"/>
<path d="M1279 531h5" stroke="#9b00ff"/>
<path d="M1284 531h5" stroke="#a500ff"/>
<path d="M1289 531h5" stroke="#b000ff"/>
<path d="M1294 531h5" stroke="#b0f"/>
<path d="M1299 531h5" stroke="#c700ff"/>
<path d="M1304 531h5" stroke="#d300ff"/>
<path d="M1309 531h5" stroke="#df00ff"/>
<path d="M1144 536h5" stroke="#0006ff"/>
<path d="M1149 536h5" stroke="#0004ff"/>
<path d="M1154 536h5" stroke="#0003ff"/>
<path d="M1159 536h5" stroke="#0002ff"/>
<path d="M1164 536h10" stroke="#0001ff"/>
<path d="M1174 536h5" stroke="#0300ff"/>
<path d="M1179 536h5" stroke="#0700ff"/>
<path d="M1184 536h5" stroke="#0b00ff"/>
<path d="M1189 536h5" stroke="#1000ff"/>
<path d="M1194 536h5" stroke="#1600ff"/>
<path d="M1199 536h5" stroke="#1b00ff"/>
<path d="M1204 536h5" stroke="#2100ff"/>
<path d="M1209 536h5" stroke="#2700ff"/>
<path d="M1214 536h5" stroke="#2e00ff"/>
<path d="M1219 536h5" stroke="#3400ff"/>
<path d="M1224 536h5" stroke="#3b00ff"/>
<path d="M1229 536h5" stroke="#4200ff"/>
<path d="M1234 536h5" stroke="#4a00ff"/>
<path d="M1239 536h5" stroke="#5200ff"/>
<path d="M1244 536h5" stroke="#5a00ff"/>
<path d="M1249 536h5" stroke="#6200ff"/>
<path d="M1254 536h5" stroke="#6b00ff"/>
<path d="M1259 536h5" stroke="#7400ff"/>
<path d="M1264 536h5" stroke="#7d00ff"/>
<path d="M1269 536h5" stroke="#8600ff"/>
<path d="M1274 536h5" stroke="#9000ff"/>
<path d="M1279 536h5" stroke="#9a00ff"/>
<path d="M1284 536h5" stroke="#a400ff"/>
<path d="M1289 536h5" stroke="#af00ff"/>
<path d="M1294 536h5" stroke="#ba00ff"/>
<path d="M1149 541h5" stroke="#0002ff"/>
<path d="M1154 541h5" stroke="#0001ff"/>
<path d="M1159 541h15" stroke="#00f"/>
<path d="M1174 541h5" stroke="#0400ff"/>
<path d="M1179 541h5" stroke="#0800ff"/>
<path d="M1184 541h5" stroke="#0c00ff"/>
<path d="M1189 541h5" stroke="#10f"/>
<path d="M1194 541h5" stroke="#1600ff"/>
<path d="M1199 541h5" stroke="#1c00ff"/>
<path d="M1204 541h5" stroke="#20f"/>
<path d="M1209 541h5" stroke="#2800ff"/>
<path d="M1214 541h5" stroke="#2e00ff"/>
<path d="M1219 541h5" stroke="#3500ff"/>
<path d="M1224 541h5" stroke="#3c00ff"/>
<path d="M1229 541h5" stroke="#4300ff"/>
<path d="M1234 541h5" stroke="#4a00ff"/>
<path d="M1239 541h5" stroke="#5200ff"/>
<path d="M1244 541h5" stroke="#5a00ff"/>
<path d="M1249 541h5" stroke="#6200ff"/>
<path d="M1254 541h5" stroke="#6b00ff"/>
<path d="M1259 541h5" stroke="#7400ff"/>
<path d="M1264 541h5" stroke="#7d00ff"/>
<path d="M1269 541h5" stroke="#8600ff"/>
<path d="M1274 541h5" stroke="#9000ff"/>
<path d="M1279 541h5" stroke="#90f"/>
<path d="M1149 546h20" stroke="#00f"/>
<path d="M1169 546h5" stroke="#0100ff"/>
<path d="M1174 546h5" stroke="#0500ff"/>
<path d="M1179 546h5" stroke="#0900ff"/>
<path d="M1184 546h5" stroke="#0d00ff"/>
<path d="M1189 546h5" stroke="#1200ff"/>
<path d="M1194 546h5" stroke="#1700ff"/>
<path d="M1199 546h5" stroke="#1d00ff"/>
<path d="M1204 546h5" stroke="#2300ff"/>
<path d="M1209 546h5" stroke="#2900ff"/>
<path d="M1214 546h5" stroke="#2f00ff"/>
<path d="M1219 546h5" stroke="#3600ff"/>
<path d="M1224 546h5" stroke="#3c00ff"/>
<path d="M1229 546h5" stroke="#40f"/>
<path d="M1234 546h5" stroke="#4b00ff"/>
<path d="M1239 546h5" stroke="#5300ff"/>
<path d="M1244 546h5" stroke="#5a00ff"/>
<path d="M1249 546h5" stroke="#6300ff"/>
<path d="M1254 546h5" stroke="#6b00ff"/>
<path d="M1259 546h5" stroke="#7400ff"/>
<path d="M1264 546h5" stroke="#7c00ff"/>
<path d="M1154 551h15" stroke="#00f"/>
<path d="M1169 551h5" stroke="#0200ff"/>
<path d="M1174 551h5" stroke="#0500ff"/>
<path d="M1179 551h5" stroke="#0a00ff"/>
<path d="M1184 551h5" stroke="#0e00ff"/>
<path d="M1189 551h5" stroke="#1300ff"/>
<path d="M1194 551h5" stroke="#1800ff"/>
<path d="M1199 551h5" stroke="#1e00ff"/>
<path d="M1204 551h5" stroke="#2300ff"/>
<path d="M1209 551h5" stroke="#2a00ff"/>
<path d="M1214 551h5" stroke="#3000ff"/>
<path d="M1219 551h5" stroke="#3600ff"/>
<path d="M1224 551h5" stroke="#3d00ff"/>
<path d="M1229 551h5" stroke="#40f"/>
<path d="M1234 551h5" stroke="#4b00ff"/>
<path d="M1239 551h5" stroke="#5300ff"/>
<path d="M1244 551h5" stroke="#5b00ff"/>
<path d="M1249 551h5" stroke="#6300ff"/>
<path d="M1254 551h5" stroke="#6b00ff"/>
<path d="M1159 556h10" stroke="#00f"/>
<path d="M1169 556h5" stroke="#0300ff"/>
<path d="M1174 556h5" stroke="#0600ff"/>
<path d="M1179 556h5" stroke="#0a00ff"/>
<path d="M1184 556h5" stroke="#0f00ff"/>
<path d="M1189 556h5" stroke="#1400ff"/>
<path d="M1194 556h5" stroke="#1900ff"/>
<path d="M1199 556h5" stroke="#1f00ff"/>
<path d="M1204 556h5" stroke="#2400ff"/>
<path d="M1209 556h5" stroke="#2a00ff"/>
<path d="M1214 556h5" stroke="#3100ff"/>
<path d="M1219 556h5" stroke="#3700ff"/>
<path d="M1224 556h5" stroke="#3e00ff"/>
<path d="M1229 556h5" stroke="#4500ff"/>
<path d="M1234 556h5" stroke="#4c00ff"/>
<path d="M1239 556h5" stroke="#5300ff"/>
<path d="M1164 561h5" stroke="#00f"/>
<path d="M1169 561h5" stroke="#0300ff"/>
<path d="M1174 561h5" stroke="#0700ff"/>
<path d="M1179 561h5" stroke="#0b00ff"/>
<path d="M1184 561h5" stroke="#1000ff"/>
<path d="M1189 561h5" stroke="#1500ff"/>
<path d="M1194 561h5" stroke="#1a00ff"/>
<path d="M1199 561h5" stroke="#1f00ff"/>
<path d="M1204 561h5" stroke="#2500ff"/>
<path d="M1209 561h5" stroke="#2b00ff"/>
<path d="M1214 561h5" stroke="#3100ff"/>
<path d="M1219 561h5" stroke="#3800ff"/>
<path d="M1224 561h5" stroke="#3e00ff"/>
<path d="M1174 566h5" stroke="#0800ff"/>
<path d="M1179 566h5" stroke="#0c00ff"/>
<path d="M1184 566h5" stroke="#10f"/>
<path d="M1189 566h5" stroke="#1600ff"/>
<path d="M1194 566h5" stroke="#1b00ff"/>
<path d="M1199 566h5" stroke="#2000ff"/>
<path d="M1204 566h5" stroke="#2600ff"/>
<path d="M1209 566h5" stroke="#2c00ff"/>
<path d="M1179 571h5" stroke="#0d00ff"/>
<path d="M1184 571h5" stroke="#1200ff"/>
<path d="M1189 571h5" stroke="#1700ff"/>
<path d="M1194 571h5" stroke="#1c00ff"/>
</g>
<path d="M1189.8 573.1 L1189.8 573.1 L1189.8 573.1 L1189.7 573.1 L1189.7 573.2 L1189.6 573.2 L1189.5 573.2 L1189.4 573.2 L1189.4 573.2 L1189.3 573.2 L1189.2 573.2 L1189.2 573.3 L1189.1 573.3 L1188.9 573.3 L1188.8 573.2 L1188.6 573.2 L1188.5 573.2 L1188.3 573.2 L1188.2 573.2 L1188.0 573.2 L1187.7 573.1 L1187.4 572.9 L1187.1 572.8 L1186.7 572.5 L1186.3 572.3 L1185.8 572.0 L1185.2 571.6 L1184.6 571.2 L1183.9 570.8 L1183.1 570.2 L1182.3 569.6 L1181.4 569.0 L1180.3 568.3 L1179.1 567.5 L1177.8 566.6 L1176.3 565.6 L1174.6 564.5 L1172.8 563.2 L1170.9 561.9 L1168.7 560.3 L1166.4 558.4 L1163.9 556.3 L1161.3 553.8 L1158.3 550.7 L1154.8 546.7 L1151.0 541.7 L1146.8 535.7 L1142.2 528.6 L1137.1 519.9 L1131.6 509.5 L1125.5 497.2 L1118.8 482.8 L1111.6 466.0 L1104.2 446.7 L1097.0 424.9 L1089.8 400.6 L1082.6 373.9 L1075.9 345.3 L1069.8 315.7 L1064.7 285.7 L1060.8 255.8 L1058.3 226.8 L1057.3 199.5 L1058.1 174.0 L1060.7 150.5 L1065.3 129.8 L1071.8 112.3 L1080.0 98.4 L1089.7 88.6 L1100.6 82.7 L1112.3 80.1 L1124.4 80.4 L1136.9 82.8 L1149.6 86.6 L1162.3 91.4 L1174.8 96.7 L1186.8 102.3 L1198.6 108.1 L1210.2 114.2 L1221.6 120.6 L1233.0 127.3 L1244.3 134.3 L1255.5 141.5 L1266.7 148.9 L1277.8 156.5 L1288.9 164.2 L1300.1 172.1 L1311.2 180.1 L1322.3 188.2 L1333.4 196.4 L1344.5 204.6 L1355.6 212.9 L1366.7 221.2 L1377.7 229.5 L1388.7 237.8 L1399.7 246.1 L1410.5 254.4 L1421.3 262.6 L1432.0 270.7 L1442.5 278.7 L1452.9 286.6 L1463.0 294.4 L1473.0 302.0 L1482.8 309.5 L1492.3 316.7 L1501.6 323.7 L1510.5 330.6 L1519.1 337.1 L1527.1 343.3 L1534.7 349.0 L1541.9 354.5 L1548.8 359.8 L1555.3 364.7 L1561.3 369.3 L1566.9 373.5 L1572.0 377.4 L1576.7 381.0 L1581.1 384.3 L1585.1 387.4 L1588.7 390.1 L1592.0 392.7 L1595.0 395.0 L1597.8 397.1 L1600.3 399.0 L1602.6 400.7 L1604.8 402.4 L1606.8 403.9 L1608.6 405.3 L1610.4 406.6 L1611.9 407.9 L1613.4 409.0 L1614.7 410.0 L1616.0 410.9 L1617.0 411.7 L1618.0 412.5 L1618.8 413.1 L1619.6 413.7 L1620.3 414.2 L1620.9 414.7 L1621.4 415.1 L1621.9 415.5 L1622.3 415.8 L1622.6 416.0 L1622.9 416.2 L1623.2 416.5 L1623.5 416.7 L1623.7 416.8 L1623.9 417.0 L1624.2 417.2 L1624.4 417.3 L1624.6 417.5 L1624.8 417.7 L1625.0 417.8 L1625.1 417.9 L1625.3 418.0 L1625.3 418.1 L1625.4 418.1 L1625.5 418.2 L1625.5 418.2 L1625.6 418.3 L1625.6 418.3Z M1583.1 385.7 L1260.5 165.6 L1171.1 540.4Z" fill-rule="evenodd" fill="#000" fill-opacity=".4"/>
</g>
<rect x="1252.6" y="158.7" width="14.9" height="13.8" fill="none" stroke="#fff" stroke-width="1.5"/>
<rect x="1387.0" y="250.4" width="14.9" height="13.8" fill="none" stroke="#fff" stroke-width="1.5"/>
<rect x="1576.2" y="378.1" width="14.9" height="13.8" fill="none" stroke="#fff" stroke-width="1.5"/>
<rect x="1164.0" y="534.2" width="14.9" height="13.8" fill="none" stroke="#fff" stroke-width="1.5"/>
<rect x="1201.8" y="371.7" width="14.9" height="13.8" fill="none" stroke="#fff" stroke-width="1.5"/>
<rect x="1308.5" y="479.6" width="14.9" height="13.8" fill="none" stroke="#fff" stroke-width="1.5"/>
<rect x="1286.0" y="279.1" width="14.9" height="13.8" fill="none" stroke="#fff" stroke-width="1.5"/>
<rect x="1339.5" y="273.4" width="14.9" height="13.8" fill="none" stroke="#fff" stroke-width="1.5"/>
<rect x="1395.2" y="287.3" width="14.9" height="13.8" fill="none" stroke="#fff" stroke-width="1.5"/>
<rect x="1413.5" y="305.6" width="14.9" height="13.8" fill="none" stroke="#fff" stroke-width="1.5"/>
<rect x="1444.5" y="328.1" width="14.9" height="13.8" fill="none" stroke="#fff" stroke-width="1.5"/>
<rect x="1310.0" y="315.3" width="14.9" height="13.8" fill="none" stroke="#fff" stroke-width="1.5"/>
<rect x="1342.0" y="358.6" width="14.9" height="13.8" fill="none" stroke="#fff" stroke-width="1.5"/>
<rect x="1359.1" y="356.0" width="14.9" height="13.8" fill="none" stroke="#fff" stroke-width="1.5"/>
<rect x="1402.5" y="382.6" width="14.9" height="13.8" fill="none" stroke="#fff" stroke-width="1.5"/>
<rect x="1465.5" y="378.5" width="14.9" height="13.8" fill="none" stroke="#fff" stroke-width="1.5"/>
<rect x="1336.3" y="423.6" width="14.9" height="13.8" fill="none" stroke="#fff" stroke-width="1.5"/>
<rect x="1270.5" y="435.7" width="14.9" height="13.8" fill="none" stroke="#fff" stroke-width="1.5"/>
<rect x="1251.0" y="357.5" width="14.9" height="13.8" fill="none" stroke="#fff" stroke-width="1.5"/>
<rect x="1200.5" y="412.2" width="14.9" height="13.8" fill="none" stroke="#fff" stroke-width="1.5"/>
<rect x="1241.0" y="410.6" width="14.9" height="13.8" fill="none" stroke="#fff" stroke-width="1.5"/>
<rect x="1255.3" y="417.7" width="14.9" height="13.8" fill="none" stroke="#fff" stroke-width="1.5"/>
<rect x="1214.5" y="454.1" width="14.9" height="13.8" fill="none" stroke="#fff" stroke-width="1.5"/>
<rect x="1198.0" y="485.0" width="14.9" height="13.8" fill="none" stroke="#fff" stroke-width="1.5"/>
<rect x="1291" y="373" width="14" height="14" fill="none" stroke="#000" stroke-width="2.2"/>
<rect x="1292.6" y="374.6" width="10.8" height="10.8" fill="none" stroke="#ddd" stroke-width=".8"/>
<circle cx="1241.9" cy="150.0" r="4.25" fill="#00ff00" stroke="#000" stroke-width="1.3"/>
<circle cx="1399.0" cy="258.1" r="4.25" fill="#ffff00" stroke="#000" stroke-width="1.3"/>
<circle cx="1580.4" cy="384.1" r="4.25" fill="#ff0000" stroke="#000" stroke-width="1.3"/>
<circle cx="1162.0" cy="546.8" r="4.25" fill="#0000ff" stroke="#000" stroke-width="1.3"/>
<circle cx="1195.4" cy="378.0" r="4.25" fill="#00ffff" stroke="#000" stroke-width="1.3"/>
<circle cx="1323.1" cy="483.5" r="4.25" fill="#ff00ff" stroke="#000" stroke-width="1.3"/>
<circle cx="1284.8" cy="269.3" r="4.25" fill="#5f7850" stroke="#000" stroke-width="1.3"/>
<circle cx="1349.9" cy="270.5" r="4.25" fill="#a5b45a" stroke="#000" stroke-width="1.3"/>
<circle cx="1414.0" cy="293.1" r="4.25" fill="#e0c050" stroke="#000" stroke-width="1.3"/>
<circle cx="1437.1" cy="312.5" r="4.25" fill="#d2aa50" stroke="#000" stroke-width="1.3"/>
<circle cx="1469.9" cy="336.0" r="4.25" fill="#d2874b" stroke="#000" stroke-width="1.3"/>
<circle cx="1316.0" cy="312.5" r="4.25" fill="#5a6446" stroke="#000" stroke-width="1.3"/>
<circle cx="1360.7" cy="362.7" r="4.25" fill="#b49687" stroke="#000" stroke-width="1.3"/>
<circle cx="1382.0" cy="359.9" r="4.25" fill="#6e5046" stroke="#000" stroke-width="1.3"/>
<circle cx="1431.0" cy="390.1" r="4.25" fill="#b4646e" stroke="#000" stroke-width="1.3"/>
<circle cx="1498.0" cy="385.0" r="4.25" fill="#963c46" stroke="#000" stroke-width="1.3"/>
<circle cx="1357.0" cy="432.8" r="4.25" fill="#aa6496" stroke="#000" stroke-width="1.3"/>
<circle cx="1274.8" cy="449.2" r="4.25" fill="#50405a" stroke="#000" stroke-width="1.3"/>
<circle cx="1245.8" cy="361.4" r="4.25" fill="#78a096" stroke="#000" stroke-width="1.3"/>
<circle cx="1192.9" cy="426.0" r="4.25" fill="#3c8296" stroke="#000" stroke-width="1.3"/>
<circle cx="1237.5" cy="423.0" r="4.25" fill="#5a6e8c" stroke="#000" stroke-width="1.3"/>
<circle cx="1256.9" cy="430.0" r="4.25" fill="#8280aa" stroke="#000" stroke-width="1.3"/>
<circle cx="1207.9" cy="471.8" r="4.25" fill="#5a64a0" stroke="#000" stroke-width="1.3"/>
<circle cx="1190.0" cy="506.0" r="4.25" fill="#3c4690" stroke="#000" stroke-width="1.3"/>
<circle cx="1298" cy="380.7" r="4.4" fill="#9a9a9a" stroke="#000" stroke-width="1.2"/>
<circle cx="1313" cy="378" r="4.9" fill="#000"/>
<rect x="1508.5" y="81" width="195" height="154" fill="#3a3a3a"/>
<rect x="1511" y="84" width="191" height="148" fill="url(#in1)"/>
<path d="M1511 84H1608.7L1702 155.7V222L1511 92Z" fill="#000" fill-opacity=".4"/>
<path d="M1608.7 84H1702V155.7Z" fill="#232323"/>
<rect x="1511.75" y="84.75" width="189.5" height="146.5" fill="none" stroke="#b4b4b4" stroke-width="1.5"/>
<rect x="1598.7" y="150.3" width="14.6" height="14" fill="none" stroke="#fff" stroke-width="1.4"/>
<ellipse cx="1623" cy="161.6" rx="4.6" ry="4" fill="#ffff00" stroke="#000" stroke-width="1.2"/>
<rect x="1424.5" y="537" width="280.5" height="28" fill="#333"/>
<text x="1565" y="559" font-size="20.5" text-anchor="middle" fill="#f0f0f0" textLength="218" lengthAdjust="spacingAndGlyphs">RGB Triplet: 255, 255, 0</text>
<path d="M1054.75 581.7V76.75H1708.25V577.7" fill="none" stroke="#aaa" stroke-width="1.5"/>
<path d="M1049 577.2H1709" fill="none" stroke="#bbb" stroke-width="1.5"/>
<rect x="1053.70" y="577.7" width="1.6" height="5.5" fill="#d2d2d2"/>
<text transform="translate(1054.5,599.2) scale(0.9,1)" font-size="16.5" text-anchor="middle" fill="#dcdcdc">0</text>
<rect x="1049" y="577.00" width="5" height="2" fill="#dcdcdc"/>
<text transform="translate(1048.5,583.9) scale(0.9,1)" font-size="16.5" text-anchor="end" fill="#dcdcdc">0</text>
<rect x="1131.43" y="577.7" width="1.6" height="5.5" fill="#d2d2d2"/>
<text transform="translate(1132.2,599.2) scale(0.9,1)" font-size="16.5" text-anchor="middle" fill="#dcdcdc">0,1</text>
<rect x="1049" y="517.51" width="5" height="2" fill="#dcdcdc"/>
<text transform="translate(1048.5,524.4) scale(0.9,1)" font-size="16.5" text-anchor="end" fill="#dcdcdc">0,1</text>
<rect x="1209.16" y="577.7" width="1.6" height="5.5" fill="#d2d2d2"/>
<text transform="translate(1210.0,599.2) scale(0.9,1)" font-size="16.5" text-anchor="middle" fill="#dcdcdc">0,2</text>
<rect x="1049" y="458.02" width="5" height="2" fill="#dcdcdc"/>
<text transform="translate(1048.5,464.9) scale(0.9,1)" font-size="16.5" text-anchor="end" fill="#dcdcdc">0,2</text>
<rect x="1286.89" y="577.7" width="1.6" height="5.5" fill="#d2d2d2"/>
<text transform="translate(1287.7,599.2) scale(0.9,1)" font-size="16.5" text-anchor="middle" fill="#dcdcdc">0,3</text>
<rect x="1049" y="398.53" width="5" height="2" fill="#dcdcdc"/>
<text transform="translate(1048.5,405.4) scale(0.9,1)" font-size="16.5" text-anchor="end" fill="#dcdcdc">0,3</text>
<rect x="1364.62" y="577.7" width="1.6" height="5.5" fill="#d2d2d2"/>
<text transform="translate(1365.4,599.2) scale(0.9,1)" font-size="16.5" text-anchor="middle" fill="#dcdcdc">0,4</text>
<rect x="1049" y="339.04" width="5" height="2" fill="#dcdcdc"/>
<text transform="translate(1048.5,345.9) scale(0.9,1)" font-size="16.5" text-anchor="end" fill="#dcdcdc">0,4</text>
<rect x="1442.35" y="577.7" width="1.6" height="5.5" fill="#d2d2d2"/>
<text transform="translate(1443.2,599.2) scale(0.9,1)" font-size="16.5" text-anchor="middle" fill="#dcdcdc">0,5</text>
<rect x="1049" y="279.55" width="5" height="2" fill="#dcdcdc"/>
<text transform="translate(1048.5,286.5) scale(0.9,1)" font-size="16.5" text-anchor="end" fill="#dcdcdc">0,5</text>
<rect x="1520.08" y="577.7" width="1.6" height="5.5" fill="#d2d2d2"/>
<text transform="translate(1520.9,599.2) scale(0.9,1)" font-size="16.5" text-anchor="middle" fill="#dcdcdc">0,6</text>
<rect x="1049" y="220.06" width="5" height="2" fill="#dcdcdc"/>
<text transform="translate(1048.5,227.0) scale(0.9,1)" font-size="16.5" text-anchor="end" fill="#dcdcdc">0,6</text>
<rect x="1597.81" y="577.7" width="1.6" height="5.5" fill="#d2d2d2"/>
<text transform="translate(1598.6,599.2) scale(0.9,1)" font-size="16.5" text-anchor="middle" fill="#dcdcdc">0,7</text>
<rect x="1049" y="160.57" width="5" height="2" fill="#dcdcdc"/>
<text transform="translate(1048.5,167.5) scale(0.9,1)" font-size="16.5" text-anchor="end" fill="#dcdcdc">0,7</text>
<rect x="1675.54" y="577.7" width="1.6" height="5.5" fill="#d2d2d2"/>
<text transform="translate(1676.3,599.2) scale(0.9,1)" font-size="16.5" text-anchor="middle" fill="#dcdcdc">0,8</text>
<rect x="1049" y="101.08" width="5" height="2" fill="#dcdcdc"/>
<text transform="translate(1048.5,108.0) scale(0.9,1)" font-size="16.5" text-anchor="end" fill="#dcdcdc">0,8</text>
<rect x="331" y="629" width="1385.5" height="29" fill="url(#th)"/>
<rect x="331" y="629" width="9" height="29" fill="#000"/>
<rect x="331" y="658.00" width="1385.5" height="27" fill="#404040"/>
<rect x="331" y="658.00" width="9" height="27" fill="url(#gut)"/>
<rect x="331" y="685.00" width="1385.5" height="26" fill="#808080"/>
<rect x="331" y="685.00" width="9" height="26" fill="url(#gut)"/>
<rect x="331" y="711.00" width="1385.5" height="27" fill="#404040"/>
<rect x="331" y="711.00" width="9" height="27" fill="url(#gut)"/>
<rect x="331" y="738.00" width="1385.5" height="26" fill="#808080"/>
<rect x="331" y="738.00" width="9" height="26" fill="url(#gut)"/>
<rect x="331" y="764.00" width="1385.5" height="27" fill="#404040"/>
<rect x="331" y="764.00" width="9" height="27" fill="url(#gut)"/>
<rect x="331" y="791.00" width="1385.5" height="27" fill="#808080"/>
<rect x="331" y="791.00" width="9" height="27" fill="url(#gut)"/>
<rect x="331" y="818.00" width="1385.5" height="26" fill="#404040"/>
<rect x="331" y="818.00" width="9" height="26" fill="url(#gut)"/>
<g font-size="16.3" fill="#f2f2f2">
<text transform="translate(410.4,648.8) scale(0.56,1)" textLength="44.6" lengthAdjust="spacingAndGlyphs">White</text>
<text transform="translate(445.5,648.8) scale(0.56,1)" textLength="56.1" lengthAdjust="spacingAndGlyphs">Gray 80</text>
<text transform="translate(481.9,648.8) scale(0.56,1)" textLength="56.1" lengthAdjust="spacingAndGlyphs">Gray 65</text>
<text transform="translate(518.3,648.8) scale(0.56,1)" textLength="56.1" lengthAdjust="spacingAndGlyphs">Gray 50</text>
<text transform="translate(554.8,648.8) scale(0.56,1)" textLength="56.1" lengthAdjust="spacingAndGlyphs">Gray 35</text>
<text transform="translate(591.2,648.8) scale(0.56,1)" textLength="38.6" lengthAdjust="spacingAndGlyphs">Black</text>
<text transform="translate(617.9,648.8) scale(0.56,1)" textLength="68.8" lengthAdjust="spacingAndGlyphs">Dark Skin</text>
<text transform="translate(661.0,648.8) scale(0.56,1)" textLength="69.8" lengthAdjust="spacingAndGlyphs">Light Skin</text>
<text transform="translate(705.3,648.8) scale(0.56,1)" textLength="61.4" lengthAdjust="spacingAndGlyphs">Blue Sky</text>
<text transform="translate(744.4,648.8) scale(0.56,1)" textLength="52.5" lengthAdjust="spacingAndGlyphs">Foliage</text>
<text transform="translate(778.5,648.8) scale(0.56,1)" textLength="86.8" lengthAdjust="spacingAndGlyphs">Blue Flower</text>
<text transform="translate(831.8,648.8) scale(0.56,1)" textLength="93.4" lengthAdjust="spacingAndGlyphs">Bluish Green</text>
<text transform="translate(889.2,648.8) scale(0.56,1)" textLength="53.0" lengthAdjust="spacingAndGlyphs">Orange</text>
<text transform="translate(924.5,648.8) scale(0.56,1)" textLength="95.7" lengthAdjust="spacingAndGlyphs">Purplish Blue</text>
<text transform="translate(983.2,648.8) scale(0.56,1)" textLength="104.8" lengthAdjust="spacingAndGlyphs">Moderate Red</text>
<text transform="translate(1046.7,648.8) scale(0.56,1)" textLength="48.2" lengthAdjust="spacingAndGlyphs">Purple</text>
<text transform="translate(1078.4,648.8) scale(0.56,1)" textLength="96.4" lengthAdjust="spacingAndGlyphs">Yellow Green</text>
<text transform="translate(1137.4,648.8) scale(0.56,1)" textLength="104.8" lengthAdjust="spacingAndGlyphs">Orange Yellow</text>
<text transform="translate(1200.9,648.8) scale(0.56,1)" textLength="32.5" lengthAdjust="spacingAndGlyphs">Blue</text>
<text transform="translate(1230.9,648.8) scale(0.56,1)" textLength="44.6" lengthAdjust="spacingAndGlyphs">Green</text>
<text transform="translate(1260.9,648.8) scale(0.56,1)" textLength="27.7" lengthAdjust="spacingAndGlyphs">Red</text>
<text transform="translate(1290.6,648.8) scale(0.56,1)" textLength="47.7" lengthAdjust="spacingAndGlyphs">Yellow</text>
<text transform="translate(1326.0,648.8) scale(0.56,1)" textLength="64.5" lengthAdjust="spacingAndGlyphs">Magenta</text>
<text transform="translate(1367.5,648.8) scale(0.56,1)" textLength="35.5" lengthAdjust="spacingAndGlyphs">Cyan</text>
<text transform="translate(1397.7,648.8) scale(0.56,1)" textLength="71.4" lengthAdjust="spacingAndGlyphs">100% Red</text>
<text transform="translate(1443.2,648.8) scale(0.56,1)" textLength="88.2" lengthAdjust="spacingAndGlyphs">100% Green</text>
<text transform="translate(1498.2,648.8) scale(0.56,1)" textLength="75.9" lengthAdjust="spacingAndGlyphs">100% Blue</text>
<text transform="translate(1546.3,648.8) scale(0.56,1)" textLength="79.1" lengthAdjust="spacingAndGlyphs">100% Cyan</text>
<text transform="translate(1596.5,648.8) scale(0.56,1)" textLength="107.7" lengthAdjust="spacingAndGlyphs">100% Magenta</text>
<text transform="translate(1662.3,648.8) scale(0.56,1)" textLength="91.2" lengthAdjust="spacingAndGlyphs">100% Yellow</text>
<text transform="translate(342.5,677.5) scale(0.56,1)" textLength="60.2" lengthAdjust="spacingAndGlyphs">x: CIE31</text>
<text transform="translate(410.4,677.5) scale(0.6,1)" textLength="31.6" lengthAdjust="spacingAndGlyphs">0,31</text>
<text transform="translate(445.5,677.5) scale(0.6,1)" textLength="31.6" lengthAdjust="spacingAndGlyphs">0,31</text>
<text transform="translate(481.9,677.5) scale(0.6,1)" textLength="31.6" lengthAdjust="spacingAndGlyphs">0,31</text>
<text transform="translate(518.3,677.5) scale(0.6,1)" textLength="31.6" lengthAdjust="spacingAndGlyphs">0,31</text>
<text transform="translate(554.8,677.5) scale(0.6,1)" textLength="31.6" lengthAdjust="spacingAndGlyphs">0,31</text>
<text transform="translate(591.2,677.5) scale(0.6,1)" textLength="31.6" lengthAdjust="spacingAndGlyphs">0,33</text>
<text transform="translate(617.9,677.5) scale(0.6,1)" textLength="31.6" lengthAdjust="spacingAndGlyphs">0,42</text>
<text transform="translate(661.0,677.5) scale(0.6,1)" textLength="31.6" lengthAdjust="spacingAndGlyphs">0,39</text>
<text transform="translate(705.3,677.5) scale(0.6,1)" textLength="31.6" lengthAdjust="spacingAndGlyphs">0,24</text>
<text transform="translate(744.4,677.5) scale(0.6,1)" textLength="31.6" lengthAdjust="spacingAndGlyphs">0,34</text>
<text transform="translate(778.5,677.5) scale(0.6,1)" textLength="31.6" lengthAdjust="spacingAndGlyphs">0,26</text>
<text transform="translate(831.8,677.5) scale(0.6,1)" textLength="31.6" lengthAdjust="spacingAndGlyphs">0,25</text>
<text transform="translate(889.2,677.5) scale(0.6,1)" textLength="31.6" lengthAdjust="spacingAndGlyphs">0,54</text>
<text transform="translate(924.5,677.5) scale(0.6,1)" textLength="31.6" lengthAdjust="spacingAndGlyphs">0,20</text>
<text transform="translate(983.2,677.5) scale(0.6,1)" textLength="31.6" lengthAdjust="spacingAndGlyphs">0,48</text>
<text transform="translate(1046.7,677.5) scale(0.6,1)" textLength="31.6" lengthAdjust="spacingAndGlyphs">0,28</text>
<text transform="translate(1078.4,677.5) scale(0.6,1)" textLength="31.6" lengthAdjust="spacingAndGlyphs">0,38</text>
<text transform="translate(1137.4,677.5) scale(0.6,1)" textLength="31.6" lengthAdjust="spacingAndGlyphs">0,49</text>
<text transform="translate(1200.9,677.5) scale(0.6,1)" textLength="31.6" lengthAdjust="spacingAndGlyphs">0,17</text>
<text transform="translate(1230.9,677.5) scale(0.6,1)" textLength="31.6" lengthAdjust="spacingAndGlyphs">0,30</text>
<text transform="translate(1260.9,677.5) scale(0.6,1)" textLength="31.6" lengthAdjust="spacingAndGlyphs">0,57</text>
<text transform="translate(1290.6,677.5) scale(0.6,1)" textLength="31.6" lengthAdjust="spacingAndGlyphs">0,46</text>
<text transform="translate(1326.0,677.5) scale(0.6,1)" textLength="31.6" lengthAdjust="spacingAndGlyphs">0,39</text>
<text transform="translate(1367.5,677.5) scale(0.6,1)" textLength="31.6" lengthAdjust="spacingAndGlyphs">0,18</text>
<text transform="translate(1397.7,677.5) scale(0.6,1)" textLength="31.6" lengthAdjust="spacingAndGlyphs">0,68</text>
<text transform="translate(1443.2,677.5) scale(0.6,1)" textLength="31.6" lengthAdjust="spacingAndGlyphs">0,24</text>
<text transform="translate(1498.2,677.5) scale(0.6,1)" textLength="31.6" lengthAdjust="spacingAndGlyphs">0,14</text>
<text transform="translate(1546.3,677.5) scale(0.6,1)" textLength="31.6" lengthAdjust="spacingAndGlyphs">0,18</text>
<text transform="translate(1596.5,677.5) scale(0.6,1)" textLength="31.6" lengthAdjust="spacingAndGlyphs">0,35</text>
<text transform="translate(1662.3,677.5) scale(0.6,1)" textLength="31.6" lengthAdjust="spacingAndGlyphs">0,44</text>
<text transform="translate(342.5,704.5) scale(0.56,1)" textLength="60.9" lengthAdjust="spacingAndGlyphs">y: CIE31</text>
<text transform="translate(410.4,704.5) scale(0.6,1)" textLength="31.6" lengthAdjust="spacingAndGlyphs">0,33</text>
<text transform="translate(445.5,704.5) scale(0.6,1)" textLength="31.6" lengthAdjust="spacingAndGlyphs">0,33</text>
<text transform="translate(481.9,704.5) scale(0.6,1)" textLength="31.6" lengthAdjust="spacingAndGlyphs">0,33</text>
<text transform="translate(518.3,704.5) scale(0.6,1)" textLength="31.6" lengthAdjust="spacingAndGlyphs">0,33</text>
<text transform="translate(554.8,704.5) scale(0.6,1)" textLength="31.6" lengthAdjust="spacingAndGlyphs">0,33</text>
<text transform="translate(591.2,704.5) scale(0.6,1)" textLength="31.6" lengthAdjust="spacingAndGlyphs">0,33</text>
<text transform="translate(617.9,704.5) scale(0.6,1)" textLength="31.6" lengthAdjust="spacingAndGlyphs">0,36</text>
<text transform="translate(661.0,704.5) scale(0.6,1)" textLength="31.6" lengthAdjust="spacingAndGlyphs">0,36</text>
<text transform="translate(705.3,704.5) scale(0.6,1)" textLength="31.6" lengthAdjust="spacingAndGlyphs">0,26</text>
<text transform="translate(744.4,704.5) scale(0.6,1)" textLength="31.6" lengthAdjust="spacingAndGlyphs">0,44</text>
<text transform="translate(778.5,704.5) scale(0.6,1)" textLength="31.6" lengthAdjust="spacingAndGlyphs">0,25</text>
<text transform="translate(831.8,704.5) scale(0.6,1)" textLength="31.6" lengthAdjust="spacingAndGlyphs">0,36</text>
<text transform="translate(889.2,704.5) scale(0.6,1)" textLength="31.6" lengthAdjust="spacingAndGlyphs">0,40</text>
<text transform="translate(924.5,704.5) scale(0.6,1)" textLength="31.6" lengthAdjust="spacingAndGlyphs">0,17</text>
<text transform="translate(983.2,704.5) scale(0.6,1)" textLength="31.6" lengthAdjust="spacingAndGlyphs">0,31</text>
<text transform="translate(1046.7,704.5) scale(0.6,1)" textLength="31.6" lengthAdjust="spacingAndGlyphs">0,21</text>
<text transform="translate(1078.4,704.5) scale(0.6,1)" textLength="31.6" lengthAdjust="spacingAndGlyphs">0,51</text>
<text transform="translate(1137.4,704.5) scale(0.6,1)" textLength="31.6" lengthAdjust="spacingAndGlyphs">0,44</text>
<text transform="translate(1200.9,704.5) scale(0.6,1)" textLength="31.6" lengthAdjust="spacingAndGlyphs">0,12</text>
<text transform="translate(1230.9,704.5) scale(0.6,1)" textLength="31.6" lengthAdjust="spacingAndGlyphs">0,52</text>
<text transform="translate(1260.9,704.5) scale(0.6,1)" textLength="31.6" lengthAdjust="spacingAndGlyphs">0,32</text>
<text transform="translate(1290.6,704.5) scale(0.6,1)" textLength="31.6" lengthAdjust="spacingAndGlyphs">0,48</text>
<text transform="translate(1326.0,704.5) scale(0.6,1)" textLength="31.6" lengthAdjust="spacingAndGlyphs">0,24</text>
<text transform="translate(1367.5,704.5) scale(0.6,1)" textLength="31.6" lengthAdjust="spacingAndGlyphs">0,25</text>
<text transform="translate(1397.7,704.5) scale(0.6,1)" textLength="31.6" lengthAdjust="spacingAndGlyphs">0,32</text>
<text transform="translate(1443.2,704.5) scale(0.6,1)" textLength="31.6" lengthAdjust="spacingAndGlyphs">0,72</text>
<text transform="translate(1498.2,704.5) scale(0.6,1)" textLength="31.6" lengthAdjust="spacingAndGlyphs">0,05</text>
<text transform="translate(1546.3,704.5) scale(0.6,1)" textLength="31.6" lengthAdjust="spacingAndGlyphs">0,33</text>
<text transform="translate(1596.5,704.5) scale(0.6,1)" textLength="31.6" lengthAdjust="spacingAndGlyphs">0,15</text>
<text transform="translate(1662.3,704.5) scale(0.6,1)" textLength="31.6" lengthAdjust="spacingAndGlyphs">0,53</text>
<text transform="translate(342.5,730.5) scale(0.56,1)" textLength="9.1" lengthAdjust="spacingAndGlyphs">Y</text>
<text transform="translate(410.4,730.5) scale(0.6,1)" textLength="50.4" lengthAdjust="spacingAndGlyphs">361,36</text>
<text transform="translate(445.5,730.5) scale(0.6,1)" textLength="50.4" lengthAdjust="spacingAndGlyphs">283,55</text>
<text transform="translate(481.9,730.5) scale(0.6,1)" textLength="50.4" lengthAdjust="spacingAndGlyphs">226,50</text>
<text transform="translate(518.3,730.5) scale(0.6,1)" textLength="50.4" lengthAdjust="spacingAndGlyphs">172,12</text>
<text transform="translate(554.8,730.5) scale(0.6,1)" textLength="50.4" lengthAdjust="spacingAndGlyphs">116,90</text>
<text transform="translate(591.2,730.5) scale(0.6,1)" textLength="31.6" lengthAdjust="spacingAndGlyphs">0,00</text>
<text transform="translate(617.9,730.5) scale(0.6,1)" textLength="41.0" lengthAdjust="spacingAndGlyphs">31,67</text>
<text transform="translate(661.0,730.5) scale(0.6,1)" textLength="50.4" lengthAdjust="spacingAndGlyphs">121,69</text>
<text transform="translate(705.3,730.5) scale(0.6,1)" textLength="41.0" lengthAdjust="spacingAndGlyphs">59,63</text>
<text transform="translate(744.4,730.5) scale(0.6,1)" textLength="41.0" lengthAdjust="spacingAndGlyphs">42,17</text>
<text transform="translate(778.5,730.5) scale(0.6,1)" textLength="41.0" lengthAdjust="spacingAndGlyphs">75,86</text>
<text transform="translate(831.8,730.5) scale(0.6,1)" textLength="50.4" lengthAdjust="spacingAndGlyphs">143,16</text>
<text transform="translate(889.2,730.5) scale(0.6,1)" textLength="50.4" lengthAdjust="spacingAndGlyphs">104,17</text>
<text transform="translate(924.5,730.5) scale(0.6,1)" textLength="41.0" lengthAdjust="spacingAndGlyphs">35,01</text>
<text transform="translate(983.2,730.5) scale(0.6,1)" textLength="41.0" lengthAdjust="spacingAndGlyphs">65,93</text>
<text transform="translate(1046.7,730.5) scale(0.6,1)" textLength="41.0" lengthAdjust="spacingAndGlyphs">20,24</text>
<text transform="translate(1078.4,730.5) scale(0.6,1)" textLength="50.4" lengthAdjust="spacingAndGlyphs">155,07</text>
<text transform="translate(1137.4,730.5) scale(0.6,1)" textLength="50.4" lengthAdjust="spacingAndGlyphs">159,74</text>
<text transform="translate(1200.9,730.5) scale(0.6,1)" textLength="41.0" lengthAdjust="spacingAndGlyphs">17,31</text>
<text transform="translate(1230.9,730.5) scale(0.6,1)" textLength="41.0" lengthAdjust="spacingAndGlyphs">77,69</text>
<text transform="translate(1260.9,730.5) scale(0.6,1)" textLength="41.0" lengthAdjust="spacingAndGlyphs">41,82</text>
<text transform="translate(1290.6,730.5) scale(0.6,1)" textLength="50.4" lengthAdjust="spacingAndGlyphs">221,85</text>
<text transform="translate(1326.0,730.5) scale(0.6,1)" textLength="41.0" lengthAdjust="spacingAndGlyphs">64,27</text>
<text transform="translate(1367.5,730.5) scale(0.6,1)" textLength="41.0" lengthAdjust="spacingAndGlyphs">59,29</text>
<text transform="translate(1397.7,730.5) scale(0.6,1)" textLength="50.4" lengthAdjust="spacingAndGlyphs">103,04</text>
<text transform="translate(1443.2,730.5) scale(0.6,1)" textLength="50.4" lengthAdjust="spacingAndGlyphs">268,71</text>
<text transform="translate(1498.2,730.5) scale(0.6,1)" textLength="41.0" lengthAdjust="spacingAndGlyphs">24,47</text>
<text transform="translate(1546.3,730.5) scale(0.6,1)" textLength="50.4" lengthAdjust="spacingAndGlyphs">277,14</text>
<text transform="translate(1596.5,730.5) scale(0.6,1)" textLength="50.4" lengthAdjust="spacingAndGlyphs">120,74</text>
<text transform="translate(1662.3,730.5) scale(0.6,1)" textLength="50.4" lengthAdjust="spacingAndGlyphs">359,40</text>
<text transform="translate(342.5,757.5) scale(0.56,1)" textLength="109.1" lengthAdjust="spacingAndGlyphs">Target x:CIE31</text>
<text transform="translate(410.4,757.5) scale(0.6,1)" textLength="31.6" lengthAdjust="spacingAndGlyphs">0,31</text>
<text transform="translate(445.5,757.5) scale(0.6,1)" textLength="31.6" lengthAdjust="spacingAndGlyphs">0,31</text>
<text transform="translate(481.9,757.5) scale(0.6,1)" textLength="31.6" lengthAdjust="spacingAndGlyphs">0,31</text>
<text transform="translate(518.3,757.5) scale(0.6,1)" textLength="31.6" lengthAdjust="spacingAndGlyphs">0,31</text>
<text transform="translate(554.8,757.5) scale(0.6,1)" textLength="31.6" lengthAdjust="spacingAndGlyphs">0,31</text>
<text transform="translate(591.2,757.5) scale(0.6,1)" textLength="31.6" lengthAdjust="spacingAndGlyphs">0,31</text>
<text transform="translate(617.9,757.5) scale(0.6,1)" textLength="31.6" lengthAdjust="spacingAndGlyphs">0,40</text>
<text transform="translate(661.0,757.5) scale(0.6,1)" textLength="31.6" lengthAdjust="spacingAndGlyphs">0,38</text>
<text transform="translate(705.3,757.5) scale(0.6,1)" textLength="31.6" lengthAdjust="spacingAndGlyphs">0,25</text>
<text transform="translate(744.4,757.5) scale(0.6,1)" textLength="31.6" lengthAdjust="spacingAndGlyphs">0,34</text>
<text transform="translate(778.5,757.5) scale(0.6,1)" textLength="31.6" lengthAdjust="spacingAndGlyphs">0,27</text>
<text transform="translate(831.8,757.5) scale(0.6,1)" textLength="31.6" lengthAdjust="spacingAndGlyphs">0,26</text>
<text transform="translate(889.2,757.5) scale(0.6,1)" textLength="31.6" lengthAdjust="spacingAndGlyphs">0,51</text>
<text transform="translate(924.5,757.5) scale(0.6,1)" textLength="31.6" lengthAdjust="spacingAndGlyphs">0,22</text>
<text transform="translate(983.2,757.5) scale(0.6,1)" textLength="31.6" lengthAdjust="spacingAndGlyphs">0,46</text>
<text transform="translate(1046.7,757.5) scale(0.6,1)" textLength="31.6" lengthAdjust="spacingAndGlyphs">0,29</text>
<text transform="translate(1078.4,757.5) scale(0.6,1)" textLength="31.6" lengthAdjust="spacingAndGlyphs">0,38</text>
<text transform="translate(1137.4,757.5) scale(0.6,1)" textLength="31.6" lengthAdjust="spacingAndGlyphs">0,47</text>
<text transform="translate(1200.9,757.5) scale(0.6,1)" textLength="31.6" lengthAdjust="spacingAndGlyphs">0,19</text>
<text transform="translate(1230.9,757.5) scale(0.6,1)" textLength="31.6" lengthAdjust="spacingAndGlyphs">0,31</text>
<text transform="translate(1260.9,757.5) scale(0.6,1)" textLength="31.6" lengthAdjust="spacingAndGlyphs">0,54</text>
<text transform="translate(1290.6,757.5) scale(0.6,1)" textLength="31.6" lengthAdjust="spacingAndGlyphs">0,45</text>
<text transform="translate(1326.0,757.5) scale(0.6,1)" textLength="31.6" lengthAdjust="spacingAndGlyphs">0,37</text>
<text transform="translate(1367.5,757.5) scale(0.6,1)" textLength="31.6" lengthAdjust="spacingAndGlyphs">0,20</text>
<text transform="translate(1397.7,757.5) scale(0.6,1)" textLength="31.6" lengthAdjust="spacingAndGlyphs">0,68</text>
<text transform="translate(1443.2,757.5) scale(0.6,1)" textLength="31.6" lengthAdjust="spacingAndGlyphs">0,27</text>
<text transform="translate(1498.2,757.5) scale(0.6,1)" textLength="31.6" lengthAdjust="spacingAndGlyphs">0,15</text>
<text transform="translate(1546.3,757.5) scale(0.6,1)" textLength="31.6" lengthAdjust="spacingAndGlyphs">0,20</text>
<text transform="translate(1596.5,757.5) scale(0.6,1)" textLength="31.6" lengthAdjust="spacingAndGlyphs">0,34</text>
<text transform="translate(1662.3,757.5) scale(0.6,1)" textLength="31.6" lengthAdjust="spacingAndGlyphs">0,44</text>
<text transform="translate(342.5,783.5) scale(0.56,1)" textLength="109.1" lengthAdjust="spacingAndGlyphs">Target y:CIE31</text>
<text transform="translate(410.4,783.5) scale(0.6,1)" textLength="31.6" lengthAdjust="spacingAndGlyphs">0,33</text>
<text transform="translate(445.5,783.5) scale(0.6,1)" textLength="31.6" lengthAdjust="spacingAndGlyphs">0,33</text>
<text transform="translate(481.9,783.5) scale(0.6,1)" textLength="31.6" lengthAdjust="spacingAndGlyphs">0,33</text>
<text transform="translate(518.3,783.5) scale(0.6,1)" textLength="31.6" lengthAdjust="spacingAndGlyphs">0,33</text>
<text transform="translate(554.8,783.5) scale(0.6,1)" textLength="31.6" lengthAdjust="spacingAndGlyphs">0,33</text>
<text transform="translate(591.2,783.5) scale(0.6,1)" textLength="31.6" lengthAdjust="spacingAndGlyphs">0,33</text>
<text transform="translate(617.9,783.5) scale(0.6,1)" textLength="31.6" lengthAdjust="spacingAndGlyphs">0,36</text>
<text transform="translate(661.0,783.5) scale(0.6,1)" textLength="31.6" lengthAdjust="spacingAndGlyphs">0,35</text>
<text transform="translate(705.3,783.5) scale(0.6,1)" textLength="31.6" lengthAdjust="spacingAndGlyphs">0,27</text>
<text transform="translate(744.4,783.5) scale(0.6,1)" textLength="31.6" lengthAdjust="spacingAndGlyphs">0,43</text>
<text transform="translate(778.5,783.5) scale(0.6,1)" textLength="31.6" lengthAdjust="spacingAndGlyphs">0,25</text>
<text transform="translate(831.8,783.5) scale(0.6,1)" textLength="31.6" lengthAdjust="spacingAndGlyphs">0,36</text>
<text transform="translate(889.2,783.5) scale(0.6,1)" textLength="31.6" lengthAdjust="spacingAndGlyphs">0,41</text>
<text transform="translate(924.5,783.5) scale(0.6,1)" textLength="31.6" lengthAdjust="spacingAndGlyphs">0,19</text>
<text transform="translate(983.2,783.5) scale(0.6,1)" textLength="31.6" lengthAdjust="spacingAndGlyphs">0,31</text>
<text transform="translate(1046.7,783.5) scale(0.6,1)" textLength="31.6" lengthAdjust="spacingAndGlyphs">0,22</text>
<text transform="translate(1078.4,783.5) scale(0.6,1)" textLength="31.6" lengthAdjust="spacingAndGlyphs">0,50</text>
<text transform="translate(1137.4,783.5) scale(0.6,1)" textLength="31.6" lengthAdjust="spacingAndGlyphs">0,44</text>
<text transform="translate(1200.9,783.5) scale(0.6,1)" textLength="31.6" lengthAdjust="spacingAndGlyphs">0,14</text>
<text transform="translate(1230.9,783.5) scale(0.6,1)" textLength="31.6" lengthAdjust="spacingAndGlyphs">0,49</text>
<text transform="translate(1260.9,783.5) scale(0.6,1)" textLength="31.6" lengthAdjust="spacingAndGlyphs">0,32</text>
<text transform="translate(1290.6,783.5) scale(0.6,1)" textLength="31.6" lengthAdjust="spacingAndGlyphs">0,47</text>
<text transform="translate(1326.0,783.5) scale(0.6,1)" textLength="31.6" lengthAdjust="spacingAndGlyphs">0,24</text>
<text transform="translate(1367.5,783.5) scale(0.6,1)" textLength="31.6" lengthAdjust="spacingAndGlyphs">0,26</text>
<text transform="translate(1397.7,783.5) scale(0.6,1)" textLength="31.6" lengthAdjust="spacingAndGlyphs">0,32</text>
<text transform="translate(1443.2,783.5) scale(0.6,1)" textLength="31.6" lengthAdjust="spacingAndGlyphs">0,69</text>
<text transform="translate(1498.2,783.5) scale(0.6,1)" textLength="31.6" lengthAdjust="spacingAndGlyphs">0,06</text>
<text transform="translate(1546.3,783.5) scale(0.6,1)" textLength="31.6" lengthAdjust="spacingAndGlyphs">0,33</text>
<text transform="translate(1596.5,783.5) scale(0.6,1)" textLength="31.6" lengthAdjust="spacingAndGlyphs">0,15</text>
<text transform="translate(1662.3,783.5) scale(0.6,1)" textLength="31.6" lengthAdjust="spacingAndGlyphs">0,54</text>
<text transform="translate(342.5,810.5) scale(0.56,1)" textLength="63.2" lengthAdjust="spacingAndGlyphs">Target Y</text>
<text transform="translate(410.4,810.5) scale(0.6,1)" textLength="50.4" lengthAdjust="spacingAndGlyphs">361,36</text>
<text transform="translate(445.5,810.5) scale(0.6,1)" textLength="50.4" lengthAdjust="spacingAndGlyphs">285,94</text>
<text transform="translate(481.9,810.5) scale(0.6,1)" textLength="50.4" lengthAdjust="spacingAndGlyphs">230,40</text>
<text transform="translate(518.3,810.5) scale(0.6,1)" textLength="50.4" lengthAdjust="spacingAndGlyphs">177,43</text>
<text transform="translate(554.8,810.5) scale(0.6,1)" textLength="50.4" lengthAdjust="spacingAndGlyphs">123,55</text>
<text transform="translate(591.2,810.5) scale(0.6,1)" textLength="31.6" lengthAdjust="spacingAndGlyphs">0,00</text>
<text transform="translate(617.9,810.5) scale(0.6,1)" textLength="41.0" lengthAdjust="spacingAndGlyphs">35,70</text>
<text transform="translate(661.0,810.5) scale(0.6,1)" textLength="50.4" lengthAdjust="spacingAndGlyphs">123,58</text>
<text transform="translate(705.3,810.5) scale(0.6,1)" textLength="41.0" lengthAdjust="spacingAndGlyphs">68,10</text>
<text transform="translate(744.4,810.5) scale(0.6,1)" textLength="41.0" lengthAdjust="spacingAndGlyphs">47,41</text>
<text transform="translate(778.5,810.5) scale(0.6,1)" textLength="41.0" lengthAdjust="spacingAndGlyphs">83,49</text>
<text transform="translate(831.8,810.5) scale(0.6,1)" textLength="50.4" lengthAdjust="spacingAndGlyphs">150,51</text>
<text transform="translate(889.2,810.5) scale(0.6,1)" textLength="50.4" lengthAdjust="spacingAndGlyphs">102,56</text>
<text transform="translate(924.5,810.5) scale(0.6,1)" textLength="41.0" lengthAdjust="spacingAndGlyphs">42,53</text>
<text transform="translate(983.2,810.5) scale(0.6,1)" textLength="41.0" lengthAdjust="spacingAndGlyphs">67,16</text>
<text transform="translate(1046.7,810.5) scale(0.6,1)" textLength="41.0" lengthAdjust="spacingAndGlyphs">24,75</text>
<text transform="translate(1078.4,810.5) scale(0.6,1)" textLength="50.4" lengthAdjust="spacingAndGlyphs">155,46</text>
<text transform="translate(1137.4,810.5) scale(0.6,1)" textLength="50.4" lengthAdjust="spacingAndGlyphs">155,74</text>
<text transform="translate(1200.9,810.5) scale(0.6,1)" textLength="41.0" lengthAdjust="spacingAndGlyphs">22,83</text>
<text transform="translate(1230.9,810.5) scale(0.6,1)" textLength="41.0" lengthAdjust="spacingAndGlyphs">81,87</text>
<text transform="translate(1260.9,810.5) scale(0.6,1)" textLength="41.0" lengthAdjust="spacingAndGlyphs">41,76</text>
<text transform="translate(1290.6,810.5) scale(0.6,1)" textLength="50.4" lengthAdjust="spacingAndGlyphs">214,73</text>
<text transform="translate(1326.0,810.5) scale(0.6,1)" textLength="41.0" lengthAdjust="spacingAndGlyphs">67,42</text>
<text transform="translate(1367.5,810.5) scale(0.6,1)" textLength="41.0" lengthAdjust="spacingAndGlyphs">67,84</text>
<text transform="translate(1397.7,810.5) scale(0.6,1)" textLength="41.0" lengthAdjust="spacingAndGlyphs">82,75</text>
<text transform="translate(1443.2,810.5) scale(0.6,1)" textLength="50.4" lengthAdjust="spacingAndGlyphs">249,96</text>
<text transform="translate(1498.2,810.5) scale(0.6,1)" textLength="41.0" lengthAdjust="spacingAndGlyphs">28,65</text>
<text transform="translate(1546.3,810.5) scale(0.6,1)" textLength="50.4" lengthAdjust="spacingAndGlyphs">278,61</text>
<text transform="translate(1596.5,810.5) scale(0.6,1)" textLength="50.4" lengthAdjust="spacingAndGlyphs">111,39</text>
<text transform="translate(1662.3,810.5) scale(0.6,1)" textLength="50.4" lengthAdjust="spacingAndGlyphs">332,71</text>
<text transform="translate(342.5,837.5) scale(0.56,1)" textLength="63.9" lengthAdjust="spacingAndGlyphs">ΔE 2000</text>
<text transform="translate(410.4,837.5) scale(0.6,1)" textLength="31.6" lengthAdjust="spacingAndGlyphs">0,21</text>
<text transform="translate(445.5,837.5) scale(0.6,1)" textLength="31.6" lengthAdjust="spacingAndGlyphs">1,32</text>
<text transform="translate(481.9,837.5) scale(0.6,1)" textLength="31.6" lengthAdjust="spacingAndGlyphs">0,38</text>
<text transform="translate(518.3,837.5) scale(0.6,1)" textLength="31.6" lengthAdjust="spacingAndGlyphs">0,69</text>
<text transform="translate(554.8,837.5) scale(0.6,1)" textLength="31.6" lengthAdjust="spacingAndGlyphs">1,23</text>
<text transform="translate(591.2,837.5) scale(0.6,1)" textLength="31.6" lengthAdjust="spacingAndGlyphs">0,00</text>
<text transform="translate(617.9,837.5) scale(0.6,1)" textLength="31.6" lengthAdjust="spacingAndGlyphs">2,61</text>
<text transform="translate(661.0,837.5) scale(0.6,1)" textLength="31.6" lengthAdjust="spacingAndGlyphs">2,34</text>
<text transform="translate(705.3,837.5) scale(0.6,1)" textLength="31.6" lengthAdjust="spacingAndGlyphs">3,49</text>
<text transform="translate(744.4,837.5) scale(0.6,1)" textLength="31.6" lengthAdjust="spacingAndGlyphs">2,57</text>
<text transform="translate(778.5,837.5) scale(0.6,1)" textLength="31.6" lengthAdjust="spacingAndGlyphs">2,63</text>
<text transform="translate(831.8,837.5) scale(0.6,1)" textLength="31.6" lengthAdjust="spacingAndGlyphs">3,19</text>
<text transform="translate(889.2,837.5) scale(0.6,1)" textLength="31.6" lengthAdjust="spacingAndGlyphs">2,66</text>
<text transform="translate(924.5,837.5) scale(0.6,1)" textLength="31.6" lengthAdjust="spacingAndGlyphs">3,80</text>
<text transform="translate(983.2,837.5) scale(0.6,1)" textLength="31.6" lengthAdjust="spacingAndGlyphs">2,40</text>
<text transform="translate(1046.7,837.5) scale(0.6,1)" textLength="31.6" lengthAdjust="spacingAndGlyphs">2,56</text>
<text transform="translate(1078.4,837.5) scale(0.6,1)" textLength="31.6" lengthAdjust="spacingAndGlyphs">1,60</text>
<text transform="translate(1137.4,837.5) scale(0.6,1)" textLength="31.6" lengthAdjust="spacingAndGlyphs">3,28</text>
<text transform="translate(1200.9,837.5) scale(0.6,1)" textLength="31.6" lengthAdjust="spacingAndGlyphs">3,48</text>
<text transform="translate(1230.9,837.5) scale(0.6,1)" textLength="31.6" lengthAdjust="spacingAndGlyphs">2,66</text>
<text transform="translate(1260.9,837.5) scale(0.6,1)" textLength="31.6" lengthAdjust="spacingAndGlyphs">2,65</text>
<text transform="translate(1290.6,837.5) scale(0.6,1)" textLength="31.6" lengthAdjust="spacingAndGlyphs">3,01</text>
<text transform="translate(1326.0,837.5) scale(0.6,1)" textLength="31.6" lengthAdjust="spacingAndGlyphs">2,14</text>
<text transform="translate(1367.5,837.5) scale(0.6,1)" textLength="31.6" lengthAdjust="spacingAndGlyphs">3,69</text>
<text transform="translate(1397.7,837.5) scale(0.6,1)" textLength="31.6" lengthAdjust="spacingAndGlyphs">5,18</text>
<text transform="translate(1443.2,837.5) scale(0.6,1)" textLength="31.6" lengthAdjust="spacingAndGlyphs">3,07</text>
<text transform="translate(1498.2,837.5) scale(0.6,1)" textLength="31.6" lengthAdjust="spacingAndGlyphs">2,47</text>
<text transform="translate(1546.3,837.5) scale(0.6,1)" textLength="31.6" lengthAdjust="spacingAndGlyphs">2,99</text>
<text transform="translate(1596.5,837.5) scale(0.6,1)" textLength="31.6" lengthAdjust="spacingAndGlyphs">2,04</text>
<text transform="translate(1662.3,837.5) scale(0.6,1)" textLength="31.6" lengthAdjust="spacingAndGlyphs">2,16</text>
</g>
<text x="15" y="675" font-size="29.5" fill="#ebebeb" textLength="226" lengthAdjust="spacingAndGlyphs">Current Reading</text>
<text x="15" y="718.3" font-size="26" fill="#ebebeb" textLength="106" lengthAdjust="spacingAndGlyphs">x: 0,4423</text>
<text x="15" y="760" font-size="26" fill="#ebebeb" textLength="106.5" lengthAdjust="spacingAndGlyphs">y: 0,5345</text>
<text x="15" y="801.5" font-size="26" fill="#ebebeb" textLength="128.7" lengthAdjust="spacingAndGlyphs">fL: 104,897</text>
<text x="15" y="844" font-size="26" fill="#ebebeb" textLength="178.6" lengthAdjust="spacingAndGlyphs">cd/m²: 359,403</text>
</svg>
</body></html>
